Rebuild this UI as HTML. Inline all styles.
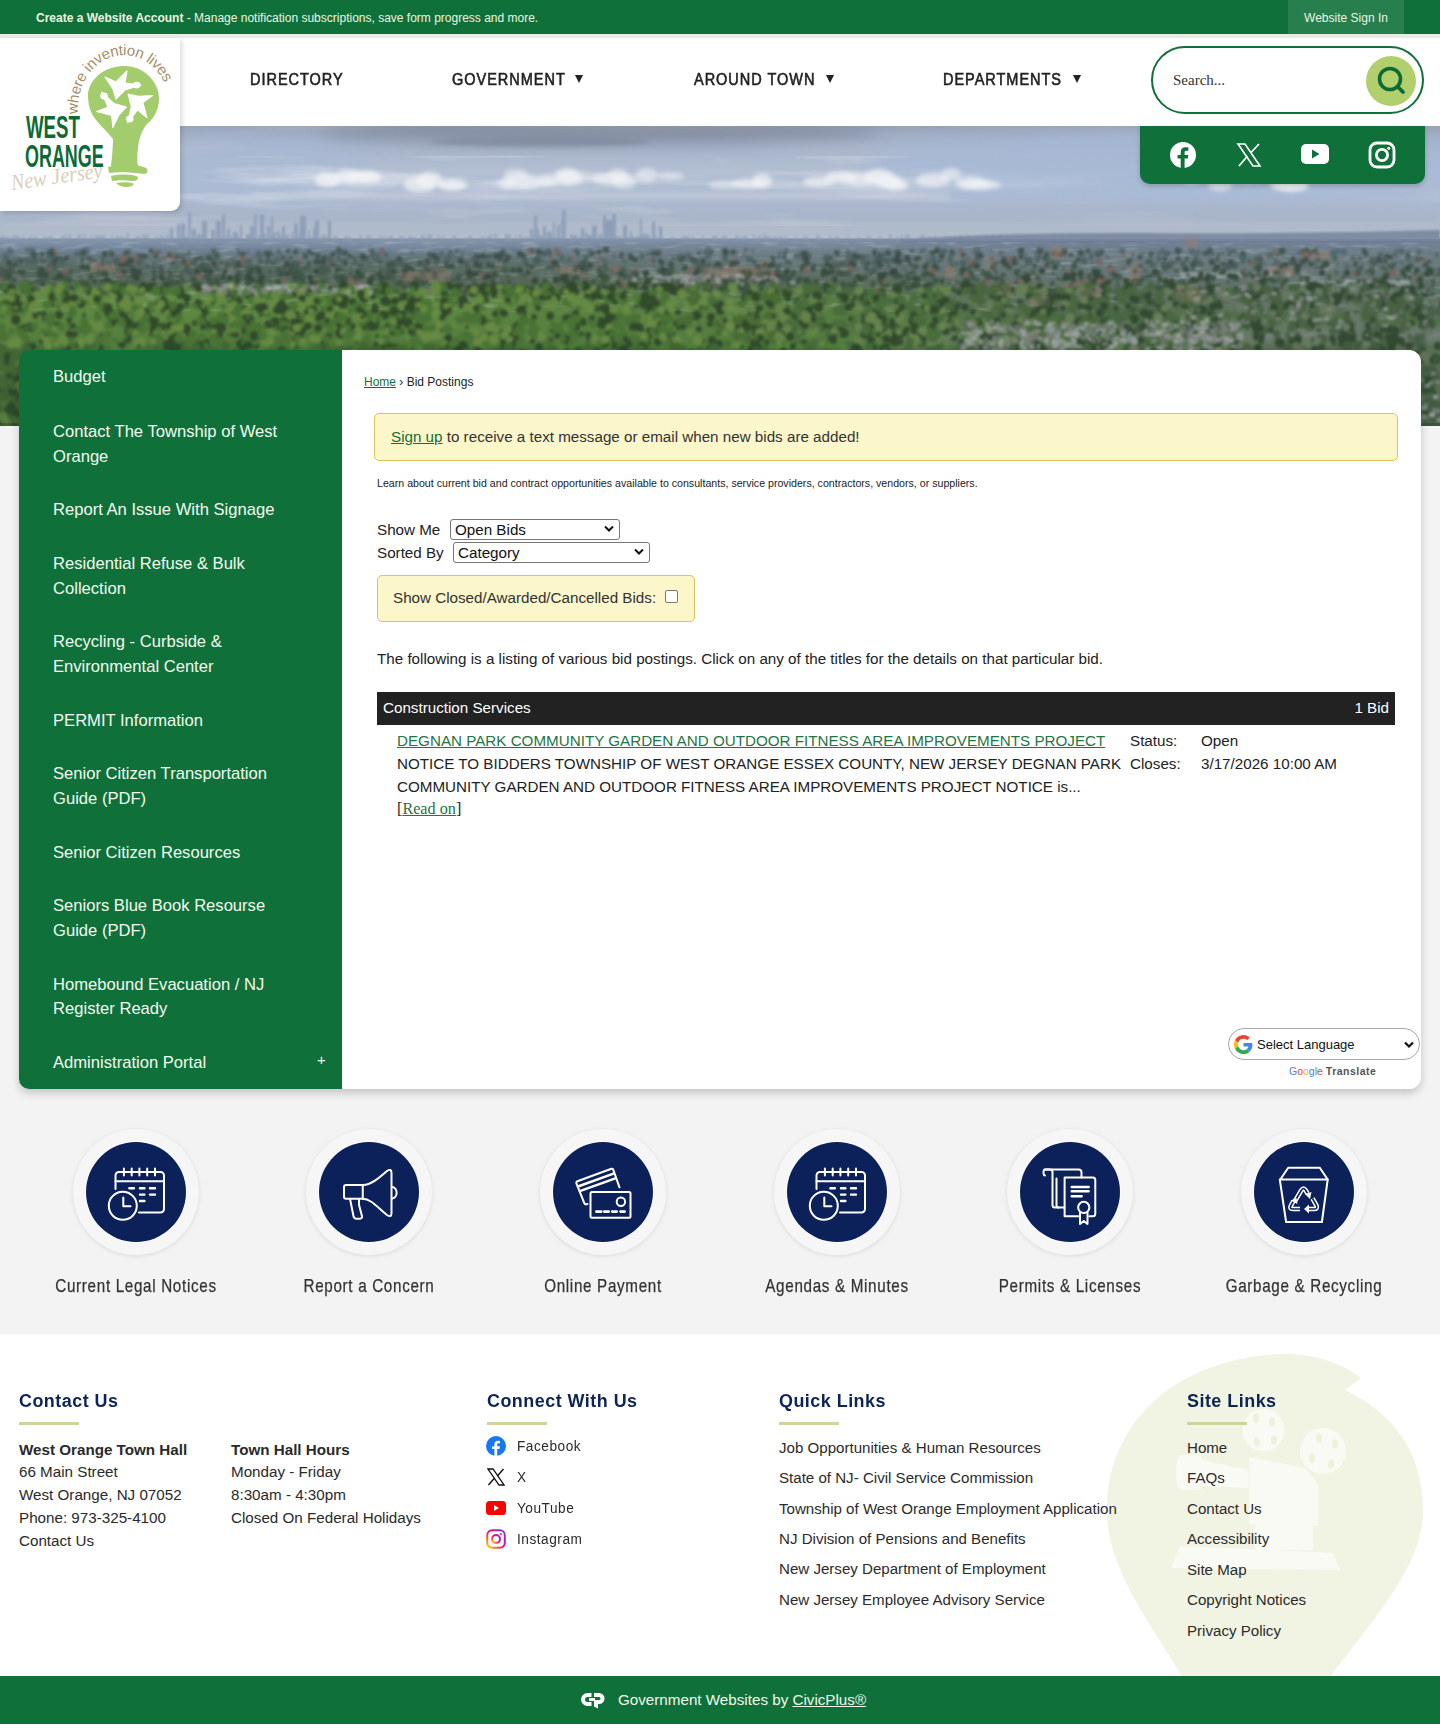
<!DOCTYPE html>
<html><head><meta charset="utf-8">
<style>
*{box-sizing:border-box;margin:0;padding:0}
html,body{width:1440px;height:1728px;overflow:hidden;background:#fff;font-family:"Liberation Sans",sans-serif;color:#222}
.abs{position:absolute}
#topbar{left:0;top:0;width:1440px;height:34px;background:#10703a}
#topline{left:0;top:34px;width:1440px;height:4px;background:#e9ebe9}
#header{left:0;top:38px;width:1440px;height:88px;background:#fff}
#hero{left:0;top:126px;width:1440px;height:300px;overflow:hidden}
#pagebg{left:0;top:426px;width:1440px;height:908px;background:#f3f3f3}
#footer{left:0;top:1334px;width:1440px;height:342px;background:#fff}
#bottombar{left:0;top:1676px;width:1440px;height:48px;background:#10703a}
#sidebar{left:19px;top:350px;width:323px;height:739px;background:#10703a;border-radius:10px 0 0 10px}
#content{left:342px;top:350px;width:1079px;height:739px;background:#fff;border-radius:0 12px 12px 0}
#shadowbox{left:19px;top:350px;width:1402px;height:739px;border-radius:10px 12px 12px 10px;box-shadow:0 4px 9px rgba(0,0,0,.2)}
#logo{left:0;top:38px;width:180px;height:173px;background:#fff;border-radius:0 0 9px 0;box-shadow:2px 2px 5px rgba(0,0,0,.15)}
#social{left:1140px;top:126px;width:285px;height:58px;background:#10703a;border-radius:0 0 10px 10px;box-shadow:0 2px 5px rgba(0,0,0,.2)}

.tb-text{left:36px;top:11px;font-size:12px;color:#eaf6e0;white-space:nowrap}
.tb-text b{font-weight:bold}
#signin{left:1288px;top:0;width:116px;height:34px;background:#267f4c;color:#eaf6e0;font-size:12px;text-align:center;line-height:37px}
.nav{top:69.5px;font-size:16.5px;font-weight:normal;-webkit-text-stroke:.6px #222;color:#222;letter-spacing:1.1px;white-space:nowrap;transform:scaleX(.88);transform-origin:0 0}.navar{top:75px;width:0;height:0;border-left:4px solid transparent;border-right:4px solid transparent;border-top:8.5px solid #222}
#search{left:1151px;top:46px;width:273px;height:68px;border:2px solid #10703a;border-radius:34px;background:#fff}
#search span{position:absolute;left:20px;top:24px;font-family:"Liberation Serif",serif;font-size:15px;color:#333}
#sbtn{position:absolute;left:213px;top:8px;width:50px;height:50px;border-radius:25px;background:#b2cf6d}

#sidebar ul{list-style:none;position:absolute;left:34px;top:16.5px;width:260px}
#sidebar li{font-size:16.6px;line-height:24.9px;color:#f2fbef;padding:0 0 28.6px 0;position:relative}
#sidebar li .plus{position:absolute;left:264px;top:-3px;font-size:15px}
.crumb{left:364px;top:375px;font-size:12px;color:#222;white-space:nowrap}
.crumb a{color:#10703a;text-decoration:underline}
#signup{left:374px;top:413px;width:1024px;height:48px;background:#fcf6cb;border:1px solid #dcc35c;border-radius:5px}
#signup span{position:absolute;left:16px;top:14px;font-size:15.2px;color:#333;white-space:nowrap}
#signup a{color:#10703a;text-decoration:underline}
.learn{left:377px;top:477px;font-size:10.64px;color:#222;white-space:nowrap}
.lbl{font-size:15.2px;color:#222;white-space:nowrap}
.sel{border:1px solid #767676;border-radius:3px;background:#fff;font-size:15.2px;color:#111;padding-left:4px;line-height:20px}
.sel svg{position:absolute;right:5px;top:5px}
#closed{left:377px;top:575px;width:318px;height:47px;background:#fcf6cb;border:1px solid #dcc35c;border-radius:5px}
#closed span{position:absolute;left:15px;top:13px;font-size:15.2px;color:#333;white-space:nowrap}
#closed .cb{position:absolute;left:287px;top:14px;width:13px;height:13px;border:1px solid #767676;border-radius:2px;background:#fff}
.para{left:377px;top:650px;font-size:15.2px;color:#222;white-space:nowrap}
#cathead{left:377px;top:692px;width:1018px;height:33px;background:#222;color:#fff;font-size:15.2px}
#cathead span{position:absolute;top:7px;white-space:nowrap}
.bid{font-size:15.2px;color:#222;white-space:nowrap}
.bid a{color:#1f7543;text-decoration:underline}

.ic{position:absolute;width:126px;height:126px;border-radius:63px;background:#f7f6f7;box-shadow:0 1px 4px rgba(0,0,0,.10)}
.ic svg{position:absolute;left:12px;top:12px}
.iclbl{position:absolute;top:1275.5px;font-size:17.9px;letter-spacing:.8px;color:#333;-webkit-text-stroke:.25px #333;white-space:nowrap;text-align:center;width:240px;transform:scaleX(.85);transform-origin:50% 0}
#gt{left:1228px;top:1028px;width:192px;height:32px;border:1px solid #a8a8a8;border-radius:16px;background:#fff}
#gt span{position:absolute;left:28px;top:8px;font-size:13px;color:#111;white-space:nowrap}
.gtl{left:1289px;top:1065px;font-size:10.5px;white-space:nowrap;color:#555}.gtl b{letter-spacing:.5px}
.fh{position:absolute;top:1390px;font-size:18.7px;font-weight:bold;color:#0d2456;white-space:nowrap;letter-spacing:.5px;transform:scaleX(.96);transform-origin:0 0}
.fbar{position:absolute;top:1422px;width:60px;height:3px;background:#d0d39a}
.ft{position:absolute;font-size:15.2px;line-height:22.8px;color:#2a2a2a;white-space:nowrap}
.fl{position:absolute;font-size:15.1px;color:#2b2b2b;white-space:nowrap}
.soc{position:absolute;left:517px;font-size:15.5px;color:#2a2a2a;white-space:nowrap;letter-spacing:.6px;transform:scaleX(.88);transform-origin:0 0}
#cp{left:0;top:1676px;width:1440px;height:48px}
#cp span{position:absolute;left:618px;top:15px;font-size:15.2px;color:#eef8ea;white-space:nowrap}
#cp a{text-decoration:underline}
</style></head>
<body>
<div id="topbar" class="abs"></div>
<div id="topline" class="abs"></div>
<div id="header" class="abs"></div>
<div id="hero" class="abs"><svg width="1440" height="300" viewBox="0 0 1440 300"><defs><linearGradient id="sky" x1="0" y1="0" x2="0" y2="1"><stop offset="0" stop-color="#96a2b8"/><stop offset="0.14" stop-color="#a4b2ca"/><stop offset="0.4" stop-color="#b3bfd2"/><stop offset="0.65" stop-color="#acbbd2"/><stop offset="0.9" stop-color="#aab8cd"/><stop offset="1" stop-color="#b4becd"/></linearGradient>
<linearGradient id="landL" x1="0" y1="0" x2="0" y2="1"><stop offset="0" stop-color="#8697ae"/><stop offset="0.0588" stop-color="#6f8296"/><stop offset="0.123" stop-color="#5b6e6a"/><stop offset="0.246" stop-color="#4f6452"/><stop offset="0.2781" stop-color="#63844e"/><stop offset="0.3262" stop-color="#628c44"/><stop offset="0.5294" stop-color="#567f3e"/><stop offset="0.5936" stop-color="#466b37"/><stop offset="1" stop-color="#3a5b32"/></linearGradient>
<linearGradient id="landM" x1="0" y1="0" x2="0" y2="1"><stop offset="0" stop-color="#8090a8"/><stop offset="0.0856" stop-color="#6c7d86"/><stop offset="0.2193" stop-color="#5b6d5e"/><stop offset="0.3262" stop-color="#587d43"/><stop offset="0.5668" stop-color="#527e3e"/><stop offset="0.6471" stop-color="#456a39"/><stop offset="1" stop-color="#3f6238"/></linearGradient>
<linearGradient id="landR" x1="0" y1="0" x2="0" y2="1"><stop offset="0" stop-color="#73839a"/><stop offset="0.1123" stop-color="#6a7a80"/><stop offset="0.3262" stop-color="#5c6f62"/><stop offset="0.4332" stop-color="#4f6e45"/><stop offset="0.5134" stop-color="#75807a"/><stop offset="0.5775" stop-color="#5b6e57"/><stop offset="0.754" stop-color="#566c50"/><stop offset="1" stop-color="#4b6646"/></linearGradient>
<linearGradient id="mL" x1="0" y1="0" x2="1" y2="0"><stop offset="0" stop-color="#fff" stop-opacity="1"/><stop offset="0.3" stop-color="#fff" stop-opacity="1"/><stop offset="0.48" stop-color="#fff" stop-opacity="0"/><stop offset="1" stop-color="#fff" stop-opacity="0"/></linearGradient>
<linearGradient id="mR" x1="0" y1="0" x2="1" y2="0"><stop offset="0" stop-color="#fff" stop-opacity="0"/><stop offset="0.58" stop-color="#fff" stop-opacity="0"/><stop offset="0.72" stop-color="#fff" stop-opacity="1"/><stop offset="1" stop-color="#fff" stop-opacity="1"/></linearGradient>
<linearGradient id="cloudmask" x1="0" y1="0" x2="1" y2="0"><stop offset="0" stop-color="#fff" stop-opacity="0.9"/><stop offset="0.55" stop-color="#fff" stop-opacity="0.9"/><stop offset="0.7" stop-color="#fff" stop-opacity="0.25"/><stop offset="1" stop-color="#fff" stop-opacity="0.15"/></linearGradient>
<mask id="maskL"><rect width="1440" height="300" fill="url(#mL)"/></mask>
<mask id="maskR"><rect width="1440" height="300" fill="url(#mR)"/></mask>
<mask id="maskC"><rect width="1440" height="300" fill="url(#cloudmask)"/></mask>
<filter id="b2" x="-20%" y="-50%" width="140%" height="200%"><feGaussianBlur stdDeviation="2"/></filter>
<filter id="b15" x="-5%" y="-5%" width="110%" height="110%"><feGaussianBlur stdDeviation="1.5"/></filter><filter id="b1" x="-20%" y="-50%" width="140%" height="200%"><feGaussianBlur stdDeviation=".8"/></filter>
<filter id="b8" x="-20%" y="-100%" width="140%" height="300%"><feGaussianBlur stdDeviation="8"/></filter>
<filter id="clouds" x="0" y="0" width="100%" height="100%">
<feTurbulence type="fractalNoise" baseFrequency=".005 .045" numOctaves="4" seed="11"/>
<feColorMatrix type="matrix" values="0 0 0 0 .90  0 0 0 0 .91  0 0 0 0 .94  0 0 0 3.0 -1.5"/>
</filter>
<filter id="darkc" x="0" y="0" width="100%" height="100%">
<feTurbulence type="fractalNoise" baseFrequency=".004 .05" numOctaves="3" seed="3"/>
<feColorMatrix type="matrix" values="0 0 0 0 .50  0 0 0 0 .54  0 0 0 0 .62  0 0 0 2.6 -1.15"/>
</filter>
<filter id="trees" x="0" y="0" width="100%" height="100%">
<feTurbulence type="fractalNoise" baseFrequency=".08 .12" numOctaves="2" seed="5"/>
<feColorMatrix type="matrix" values="0 0 0 0 .13  0 0 0 0 .22  0 0 0 0 .14  0 0 0 2.4 -1.0"/>
<feGaussianBlur stdDeviation=".7"/>
</filter>
<filter id="treesl" x="0" y="0" width="100%" height="100%">
<feTurbulence type="fractalNoise" baseFrequency=".06 .09" numOctaves="2" seed="8"/>
<feColorMatrix type="matrix" values="0 0 0 0 .55  0 0 0 0 .70  0 0 0 0 .36  0 0 0 2.2 -1.15"/>
<feGaussianBlur stdDeviation="1"/>
</filter>
<filter id="houses" x="0" y="0" width="100%" height="100%">
<feTurbulence type="fractalNoise" baseFrequency=".09 .15" numOctaves="2" seed="21"/>
<feColorMatrix type="matrix" values="0 0 0 0 .72  0 0 0 0 .73  0 0 0 0 .75  0 0 0 2.0 -1.0"/>
<feGaussianBlur stdDeviation="1"/>
</filter>
<filter id="urban" x="0" y="0" width="100%" height="100%">
<feTurbulence type="fractalNoise" baseFrequency=".05 .22" numOctaves="2" seed="13"/>
<feColorMatrix type="matrix" values="0 0 0 0 .62  0 0 0 0 .66  0 0 0 0 .70  0 0 0 2.2 -1.1"/>
<feGaussianBlur stdDeviation=".6"/>
</filter></defs>
<rect width="1440" height="114" fill="url(#sky)"/>
<ellipse cx="1180" cy="40" rx="320" ry="34" fill="#a6b9d7" opacity=".7" filter="url(#b8)"/>
<ellipse cx="230" cy="40" rx="140" ry="30" fill="#a7bad6" opacity=".6" filter="url(#b8)"/>
<g mask="url(#maskC)"><rect x="0" y="0" width="1440" height="36" filter="url(#darkc)" opacity=".5"/></g>
<ellipse cx="600" cy="6" rx="280" ry="11" fill="#7d8597" opacity=".8" filter="url(#b8)"/>
<ellipse cx="540" cy="16" rx="110" ry="5" fill="#757e90" opacity=".5" filter="url(#b2)"/>
<g mask="url(#maskC)"><rect x="0" y="30" width="1440" height="70" filter="url(#clouds)" opacity=".6"/></g>
<g filter="url(#b2)"><ellipse cx="354" cy="52" rx="11" ry="5" fill="#f0f2f5" opacity="0.77"/><ellipse cx="328" cy="54" rx="13" ry="7" fill="#f0f2f5" opacity="0.83"/><ellipse cx="368" cy="51" rx="14" ry="6" fill="#f0f2f5" opacity="0.82"/><ellipse cx="349" cy="50" rx="13" ry="7" fill="#f0f2f5" opacity="0.73"/><ellipse cx="429" cy="54" rx="13" ry="8" fill="#f0f2f5" opacity="0.77"/><ellipse cx="365" cy="49" rx="13" ry="5" fill="#f0f2f5" opacity="0.57"/><ellipse cx="453" cy="59" rx="15" ry="6" fill="#f0f2f5" opacity="0.71"/><ellipse cx="451" cy="60" rx="13" ry="5" fill="#f0f2f5" opacity="0.56"/><ellipse cx="420" cy="59" rx="16" ry="8" fill="#f0f2f5" opacity="0.73"/><ellipse cx="506" cy="58" rx="9" ry="6" fill="#f0f2f5" opacity="0.53"/><ellipse cx="618" cy="48" rx="10" ry="5" fill="#f0f2f5" opacity="0.62"/><ellipse cx="647" cy="49" rx="11" ry="7" fill="#f0f2f5" opacity="0.57"/><ellipse cx="570" cy="52" rx="13" ry="7" fill="#f0f2f5" opacity="0.74"/><ellipse cx="762" cy="55" rx="10" ry="7" fill="#f0f2f5" opacity="0.76"/><ellipse cx="671" cy="50" rx="13" ry="4" fill="#f0f2f5" opacity="0.56"/><ellipse cx="547" cy="55" rx="11" ry="5" fill="#f0f2f5" opacity="0.77"/><ellipse cx="726" cy="59" rx="18" ry="4" fill="#f0f2f5" opacity="0.57"/><ellipse cx="516" cy="49" rx="12" ry="6" fill="#f0f2f5" opacity="0.58"/><ellipse cx="611" cy="53" rx="18" ry="6" fill="#f0f2f5" opacity="0.63"/><ellipse cx="522" cy="56" rx="19" ry="8" fill="#f0f2f5" opacity="0.64"/><ellipse cx="624" cy="56" rx="12" ry="7" fill="#f0f2f5" opacity="0.61"/><ellipse cx="749" cy="58" rx="17" ry="5" fill="#f0f2f5" opacity="0.74"/><ellipse cx="567" cy="49" rx="12" ry="7" fill="#f0f2f5" opacity="0.65"/><ellipse cx="896" cy="59" rx="12" ry="6" fill="#f0f2f5" opacity="0.81"/><ellipse cx="879" cy="51" rx="15" ry="8" fill="#f0f2f5" opacity="0.81"/><ellipse cx="841" cy="51" rx="16" ry="6" fill="#f0f2f5" opacity="0.74"/><ellipse cx="860" cy="53" rx="20" ry="7" fill="#f0f2f5" opacity="0.63"/><ellipse cx="889" cy="56" rx="13" ry="7" fill="#f0f2f5" opacity="0.84"/><ellipse cx="819" cy="56" rx="16" ry="5" fill="#f0f2f5" opacity="0.73"/><ellipse cx="982" cy="59" rx="19" ry="5" fill="#f0f2f5" opacity="0.62"/><ellipse cx="951" cy="48" rx="10" ry="6" fill="#f0f2f5" opacity="0.61"/><ellipse cx="976" cy="58" rx="17" ry="5" fill="#f0f2f5" opacity="0.66"/><ellipse cx="933" cy="54" rx="17" ry="7" fill="#f0f2f5" opacity="0.69"/><ellipse cx="971" cy="57" rx="16" ry="7" fill="#f0f2f5" opacity="0.57"/><ellipse cx="22" cy="55" rx="10" ry="5" fill="#f0f2f5" opacity="0.84"/><ellipse cx="53" cy="60" rx="13" ry="6" fill="#f0f2f5" opacity="0.71"/><ellipse cx="44" cy="57" rx="17" ry="8" fill="#f0f2f5" opacity="0.64"/><ellipse cx="34" cy="50" rx="14" ry="5" fill="#f0f2f5" opacity="0.66"/><ellipse cx="1292" cy="60" rx="17" ry="6" fill="#f0f2f5" opacity="0.56"/><ellipse cx="1220" cy="59" rx="12" ry="6" fill="#f0f2f5" opacity="0.63"/><ellipse cx="1289" cy="59" rx="19" ry="6" fill="#f0f2f5" opacity="0.81"/><ellipse cx="1247" cy="52" rx="11" ry="4" fill="#f0f2f5" opacity="0.66"/><ellipse cx="1192" cy="52" rx="13" ry="6" fill="#f0f2f5" opacity="0.76"/></g>
<rect x="250" y="66" width="700" height="8" fill="#c9cfda" opacity=".5" filter="url(#b2)"/>
<rect x="0" y="78" width="1440" height="22" fill="#a5afc2" opacity=".35" filter="url(#b2)"/>
<rect x="0" y="96" width="1440" height="18" fill="#b5becb" opacity=".55" filter="url(#b2)"/>
<rect y="113" width="1440" height="187" fill="url(#landM)"/>
<g mask="url(#maskL)"><rect y="113" width="1440" height="187" fill="url(#landL)"/></g>
<g mask="url(#maskR)"><rect y="113" width="1440" height="187" fill="url(#landR)"/></g>
<g opacity=".9" filter="url(#b1)"><rect x="0" y="109.8" width="5" height="4.2" fill="#98a7bd"/><rect x="5" y="110.5" width="5" height="3.5" fill="#98a7bd"/><rect x="12" y="109.0" width="5" height="5.0" fill="#98a7bd"/><rect x="17" y="109.5" width="3" height="4.5" fill="#98a7bd"/><rect x="22" y="110.1" width="3" height="3.9" fill="#98a7bd"/><rect x="29" y="110.0" width="3" height="4.0" fill="#98a7bd"/><rect x="34" y="110.4" width="3" height="3.6" fill="#98a7bd"/><rect x="43" y="109.9" width="3" height="4.1" fill="#98a7bd"/><rect x="48" y="110.3" width="5" height="3.7" fill="#98a7bd"/><rect x="61" y="109.9" width="3" height="4.1" fill="#98a7bd"/><rect x="64" y="108.7" width="2" height="5.3" fill="#98a7bd"/><rect x="68" y="108.2" width="3" height="5.8" fill="#98a7bd"/><rect x="77" y="108.7" width="5" height="5.3" fill="#98a7bd"/><rect x="84" y="107.9" width="2" height="6.1" fill="#98a7bd"/><rect x="90" y="109.6" width="3" height="4.4" fill="#98a7bd"/><rect x="95" y="109.3" width="4" height="4.7" fill="#98a7bd"/><rect x="99" y="109.5" width="3" height="4.5" fill="#98a7bd"/><rect x="102" y="108.9" width="3" height="5.1" fill="#98a7bd"/><rect x="111" y="109.7" width="2" height="4.3" fill="#98a7bd"/><rect x="115" y="110.3" width="4" height="3.7" fill="#98a7bd"/><rect x="119" y="110.3" width="5" height="3.7" fill="#98a7bd"/><rect x="126" y="107.5" width="3" height="6.5" fill="#98a7bd"/><rect x="135" y="110.1" width="3" height="3.9" fill="#98a7bd"/><rect x="138" y="109.7" width="2" height="4.3" fill="#98a7bd"/><rect x="142" y="108.5" width="3" height="5.5" fill="#98a7bd"/><rect x="145" y="108.6" width="4" height="5.4" fill="#98a7bd"/><rect x="155" y="110.4" width="3" height="3.6" fill="#98a7bd"/><rect x="160" y="109.3" width="4" height="4.7" fill="#98a7bd"/><rect x="166" y="108.4" width="3" height="5.6" fill="#98a7bd"/><rect x="171" y="110.1" width="3" height="3.9" fill="#98a7bd"/><rect x="180" y="109.6" width="2" height="4.4" fill="#98a7bd"/><rect x="182" y="109.7" width="3" height="4.3" fill="#98a7bd"/><rect x="193" y="110.0" width="3" height="4.0" fill="#98a7bd"/><rect x="198" y="110.0" width="5" height="4.0" fill="#98a7bd"/><rect x="211" y="108.6" width="2" height="5.4" fill="#98a7bd"/><rect x="217" y="110.8" width="2" height="3.2" fill="#98a7bd"/><rect x="223" y="109.4" width="3" height="4.6" fill="#98a7bd"/><rect x="228" y="110.0" width="5" height="4.0" fill="#98a7bd"/><rect x="237" y="110.2" width="3" height="3.8" fill="#98a7bd"/><rect x="246" y="109.6" width="3" height="4.4" fill="#98a7bd"/><rect x="253" y="110.0" width="3" height="4.0" fill="#98a7bd"/><rect x="258" y="109.2" width="5" height="4.8" fill="#98a7bd"/><rect x="269" y="110.2" width="2" height="3.8" fill="#98a7bd"/><rect x="279" y="109.7" width="4" height="4.3" fill="#98a7bd"/><rect x="285" y="109.9" width="3" height="4.1" fill="#98a7bd"/><rect x="292" y="110.3" width="3" height="3.7" fill="#98a7bd"/><rect x="295" y="111.1" width="4" height="2.9" fill="#98a7bd"/><rect x="299" y="109.6" width="3" height="4.4" fill="#98a7bd"/><rect x="310" y="110.7" width="3" height="3.3" fill="#98a7bd"/><rect x="315" y="110.8" width="3" height="3.2" fill="#98a7bd"/><rect x="320" y="110.2" width="3" height="3.8" fill="#98a7bd"/><rect x="323" y="110.7" width="2" height="3.3" fill="#98a7bd"/><rect x="325" y="110.0" width="4" height="4.0" fill="#98a7bd"/><rect x="333" y="108.9" width="3" height="5.1" fill="#98a7bd"/><rect x="336" y="110.8" width="2" height="3.2" fill="#98a7bd"/><rect x="344" y="110.2" width="3" height="3.8" fill="#98a7bd"/><rect x="347" y="110.6" width="4" height="3.4" fill="#98a7bd"/><rect x="359" y="109.5" width="3" height="4.5" fill="#98a7bd"/><rect x="366" y="109.4" width="5" height="4.6" fill="#98a7bd"/><rect x="379" y="109.5" width="3" height="4.5" fill="#98a7bd"/><rect x="384" y="109.5" width="2" height="4.5" fill="#98a7bd"/><rect x="388" y="109.9" width="5" height="4.1" fill="#98a7bd"/><rect x="399" y="110.3" width="5" height="3.7" fill="#98a7bd"/><rect x="408" y="110.3" width="5" height="3.7" fill="#98a7bd"/><rect x="413" y="111.3" width="4" height="2.7" fill="#98a7bd"/><rect x="421" y="108.9" width="4" height="5.1" fill="#98a7bd"/><rect x="427" y="108.2" width="5" height="5.8" fill="#98a7bd"/><rect x="438" y="109.0" width="2" height="5.0" fill="#98a7bd"/><rect x="442" y="109.9" width="2" height="4.1" fill="#98a7bd"/><rect x="452" y="109.8" width="4" height="4.2" fill="#98a7bd"/><rect x="464" y="111.3" width="2" height="2.7" fill="#98a7bd"/><rect x="468" y="109.6" width="4" height="4.4" fill="#98a7bd"/><rect x="480" y="110.6" width="5" height="3.4" fill="#98a7bd"/><rect x="487" y="110.0" width="3" height="4.0" fill="#98a7bd"/><rect x="490" y="107.5" width="2" height="6.5" fill="#98a7bd"/><rect x="494" y="108.0" width="3" height="6.0" fill="#98a7bd"/><rect x="505" y="107.9" width="3" height="6.1" fill="#98a7bd"/><rect x="508" y="108.2" width="3" height="5.8" fill="#98a7bd"/><rect x="515" y="109.9" width="2" height="4.1" fill="#98a7bd"/><rect x="519" y="108.2" width="3" height="5.8" fill="#98a7bd"/><rect x="524" y="110.5" width="2" height="3.5" fill="#98a7bd"/><rect x="526" y="110.5" width="3" height="3.5" fill="#98a7bd"/><rect x="531" y="108.9" width="5" height="5.1" fill="#98a7bd"/><rect x="542" y="109.6" width="3" height="4.4" fill="#98a7bd"/><rect x="547" y="110.5" width="3" height="3.5" fill="#98a7bd"/><rect x="552" y="110.5" width="5" height="3.5" fill="#98a7bd"/><rect x="563" y="110.4" width="3" height="3.6" fill="#98a7bd"/><rect x="572" y="108.8" width="4" height="5.2" fill="#98a7bd"/><rect x="578" y="110.4" width="4" height="3.6" fill="#98a7bd"/><rect x="586" y="110.6" width="2" height="3.4" fill="#98a7bd"/><rect x="588" y="109.9" width="3" height="4.1" fill="#98a7bd"/><rect x="593" y="111.0" width="3" height="3.0" fill="#98a7bd"/><rect x="598" y="110.3" width="3" height="3.7" fill="#98a7bd"/><rect x="609" y="111.2" width="3" height="2.8" fill="#98a7bd"/><rect x="612" y="110.4" width="3" height="3.6" fill="#98a7bd"/><rect x="615" y="109.9" width="4" height="4.1" fill="#98a7bd"/><rect x="625" y="110.3" width="5" height="3.7" fill="#98a7bd"/><rect x="630" y="109.0" width="3" height="5.0" fill="#98a7bd"/><rect x="641" y="108.0" width="3" height="6.0" fill="#98a7bd"/><rect x="652" y="108.9" width="5" height="5.1" fill="#98a7bd"/><rect x="659" y="110.6" width="5" height="3.4" fill="#98a7bd"/><rect x="670" y="111.0" width="5" height="3.0" fill="#98a7bd"/><rect x="681" y="110.5" width="3" height="3.5" fill="#98a7bd"/><rect x="684" y="109.7" width="5" height="4.3" fill="#98a7bd"/><rect x="691" y="110.7" width="3" height="3.3" fill="#98a7bd"/><rect x="702" y="109.6" width="2" height="4.4" fill="#98a7bd"/><rect x="712" y="109.5" width="3" height="4.5" fill="#98a7bd"/><rect x="715" y="109.4" width="3" height="4.6" fill="#98a7bd"/><rect x="722" y="109.8" width="5" height="4.2" fill="#98a7bd"/><rect x="735" y="109.4" width="4" height="4.6" fill="#98a7bd"/><rect x="741" y="110.3" width="3" height="3.7" fill="#98a7bd"/><rect x="744" y="109.7" width="3" height="4.3" fill="#98a7bd"/><rect x="753" y="108.2" width="2" height="5.8" fill="#98a7bd"/><rect x="757" y="109.8" width="4" height="4.2" fill="#98a7bd"/><rect x="763" y="108.1" width="3" height="5.9" fill="#98a7bd"/><rect x="766" y="110.1" width="5" height="3.9" fill="#98a7bd"/><rect x="773" y="110.4" width="4" height="3.6" fill="#98a7bd"/><rect x="779" y="110.1" width="4" height="3.9" fill="#98a7bd"/><rect x="785" y="109.5" width="2" height="4.5" fill="#98a7bd"/><rect x="795" y="110.1" width="2" height="3.9" fill="#98a7bd"/><rect x="803" y="109.9" width="2" height="4.1" fill="#98a7bd"/><rect x="805" y="110.4" width="3" height="3.6" fill="#98a7bd"/><rect x="816" y="108.9" width="3" height="5.1" fill="#98a7bd"/><rect x="819" y="111.1" width="2" height="2.9" fill="#98a7bd"/><rect x="829" y="109.4" width="2" height="4.6" fill="#98a7bd"/><rect x="835" y="110.5" width="4" height="3.5" fill="#98a7bd"/><rect x="847" y="110.2" width="2" height="3.8" fill="#98a7bd"/><rect x="857" y="111.0" width="4" height="3.0" fill="#98a7bd"/><rect x="867" y="109.9" width="4" height="4.1" fill="#98a7bd"/><rect x="879" y="109.8" width="2" height="4.2" fill="#98a7bd"/><rect x="889" y="108.6" width="3" height="5.4" fill="#98a7bd"/><rect x="896" y="110.4" width="3" height="3.6" fill="#98a7bd"/><rect x="901" y="108.8" width="2" height="5.2" fill="#98a7bd"/><rect x="905" y="108.4" width="5" height="5.6" fill="#98a7bd"/><rect x="918" y="110.8" width="3" height="3.2" fill="#98a7bd"/><rect x="921" y="108.6" width="4" height="5.4" fill="#98a7bd"/><rect x="927" y="111.0" width="5" height="3.0" fill="#98a7bd"/><rect x="934" y="109.9" width="2" height="4.1" fill="#98a7bd"/><rect x="944" y="109.8" width="2" height="4.2" fill="#98a7bd"/><rect x="948" y="110.3" width="3" height="3.7" fill="#98a7bd"/><rect x="953" y="110.6" width="3" height="3.4" fill="#98a7bd"/><rect x="958" y="110.2" width="5" height="3.8" fill="#98a7bd"/><rect x="967" y="109.9" width="3" height="4.1" fill="#98a7bd"/><rect x="976" y="110.3" width="3" height="3.7" fill="#98a7bd"/><rect x="983" y="110.1" width="5" height="3.9" fill="#98a7bd"/><rect x="992" y="109.0" width="3" height="5.0" fill="#98a7bd"/><rect x="999" y="108.9" width="3" height="5.1" fill="#98a7bd"/><rect x="170" y="102.5" width="3" height="11.5" fill="#8d9db6"/><rect x="177" y="98.2" width="3" height="15.8" fill="#8d9db6"/><rect x="181" y="97.6" width="4" height="16.4" fill="#8d9db6"/><rect x="185" y="110.7" width="3" height="3.3" fill="#8d9db6"/><rect x="192" y="102.9" width="4" height="11.1" fill="#8d9db6"/><rect x="197" y="107.6" width="4" height="6.4" fill="#8d9db6"/><rect x="202" y="94.6" width="5" height="19.4" fill="#8d9db6"/><rect x="211" y="104.0" width="4" height="10.0" fill="#8d9db6"/><rect x="216" y="95.0" width="5" height="19.0" fill="#8d9db6"/><rect x="222" y="88.1" width="3" height="25.9" fill="#8d9db6"/><rect x="227" y="102.8" width="3" height="11.2" fill="#8d9db6"/><rect x="233" y="105.8" width="5" height="8.2" fill="#8d9db6"/><rect x="240" y="99.1" width="2" height="14.9" fill="#8d9db6"/><rect x="246" y="108.0" width="4" height="6.0" fill="#8d9db6"/><rect x="250" y="100.3" width="4" height="13.7" fill="#8d9db6"/><rect x="254" y="107.7" width="3" height="6.3" fill="#8d9db6"/><rect x="260" y="89.0" width="4" height="25.0" fill="#8d9db6"/><rect x="264" y="107.8" width="2" height="6.2" fill="#8d9db6"/><rect x="267" y="100.0" width="3" height="14.0" fill="#8d9db6"/><rect x="271" y="90.9" width="2" height="23.1" fill="#8d9db6"/><rect x="273" y="106.5" width="3" height="7.5" fill="#8d9db6"/><rect x="277" y="105.5" width="3" height="8.5" fill="#8d9db6"/><rect x="282" y="100.2" width="3" height="13.8" fill="#8d9db6"/><rect x="286" y="108.6" width="3" height="5.4" fill="#8d9db6"/><rect x="291" y="106.3" width="2" height="7.7" fill="#8d9db6"/><rect x="294" y="97.6" width="4" height="16.4" fill="#8d9db6"/><rect x="299" y="106.9" width="3" height="7.1" fill="#8d9db6"/><rect x="303" y="97.4" width="3" height="16.6" fill="#8d9db6"/><rect x="308" y="104.3" width="2" height="9.7" fill="#8d9db6"/><rect x="313" y="102.5" width="2" height="11.5" fill="#8d9db6"/><rect x="315" y="94.4" width="4" height="19.6" fill="#8d9db6"/><rect x="323" y="108.2" width="2" height="5.8" fill="#8d9db6"/><rect x="328" y="94.9" width="3" height="19.1" fill="#8d9db6"/><rect x="530" y="102.8" width="3" height="11.2" fill="#8d9db6"/><rect x="534" y="89.6" width="3" height="24.4" fill="#8d9db6"/><rect x="537" y="102.4" width="2" height="11.6" fill="#8d9db6"/><rect x="539" y="109.0" width="3" height="5.0" fill="#8d9db6"/><rect x="543" y="100.1" width="3" height="13.9" fill="#8d9db6"/><rect x="547" y="105.8" width="5" height="8.2" fill="#8d9db6"/><rect x="553" y="96.7" width="2" height="17.3" fill="#8d9db6"/><rect x="557" y="99.2" width="3" height="14.8" fill="#8d9db6"/><rect x="561" y="94.1" width="5" height="19.9" fill="#8d9db6"/><rect x="570" y="108.5" width="2" height="5.5" fill="#8d9db6"/><rect x="573" y="109.2" width="4" height="4.8" fill="#8d9db6"/><rect x="581" y="102.1" width="3" height="11.9" fill="#8d9db6"/><rect x="585" y="106.4" width="2" height="7.6" fill="#8d9db6"/><rect x="587" y="109.0" width="5" height="5.0" fill="#8d9db6"/><rect x="592" y="99.7" width="5" height="14.3" fill="#8d9db6"/><rect x="599" y="107.8" width="3" height="6.2" fill="#8d9db6"/><rect x="603" y="89.2" width="3" height="24.8" fill="#8d9db6"/><rect x="608" y="100.5" width="3" height="13.5" fill="#8d9db6"/><rect x="612" y="87.9" width="4" height="26.1" fill="#8d9db6"/><rect x="617" y="110.6" width="5" height="3.4" fill="#8d9db6"/><rect x="623" y="99.4" width="4" height="14.6" fill="#8d9db6"/><rect x="630" y="105.7" width="2" height="8.3" fill="#8d9db6"/><rect x="633" y="111.2" width="4" height="2.8" fill="#8d9db6"/><rect x="637" y="110.2" width="3" height="3.8" fill="#8d9db6"/><rect x="640" y="92.8" width="2" height="21.2" fill="#8d9db6"/><rect x="643" y="107.9" width="3" height="6.1" fill="#8d9db6"/><rect x="646" y="108.5" width="4" height="5.5" fill="#8d9db6"/><rect x="652" y="95.3" width="3" height="18.7" fill="#8d9db6"/><rect x="659" y="100.3" width="3" height="13.7" fill="#8d9db6"/><rect x="188" y="86" width="3" height="28" fill="#91a2bb"/><rect x="254" y="88" width="3" height="26" fill="#91a2bb"/><rect x="562" y="84" width="4" height="30" fill="#8fa0ba"/><rect x="300" y="90" width="6" height="24" fill="#8a9cb6"/><rect x="605" y="94" width="8" height="20" fill="#8a9cb6"/></g>
<path d="M900 114 Q 1000 106 1150 107 T 1440 104 V 116 H 900 Z" fill="#6a7890" opacity=".7" filter="url(#b1)"/>
<rect x="0" y="112" width="1440" height="3" fill="#7d8fa8" opacity=".5"/>
<rect x="0" y="116" width="1440" height="70" filter="url(#urban)" opacity=".4"/>
<g opacity=".35" filter="url(#b1)"><rect x="90" y="138" width="25" height="8" fill="#9b7c6c"/><rect x="400" y="145" width="50" height="10" fill="#9b7c6c"/><rect x="700" y="140" width="60" height="14" fill="#9b7c6c"/><rect x="760" y="134" width="8" height="16" fill="#9b7c6c"/><rect x="985" y="130" width="12" height="12" fill="#9b7c6c"/><rect x="1050" y="120" width="14" height="12" fill="#9b7c6c"/><rect x="1130" y="136" width="10" height="22" fill="#9b7c6c"/><rect x="1185" y="112" width="12" height="10" fill="#9b7c6c"/><rect x="1175" y="160" width="26" height="16" fill="#9b7c6c"/><rect x="1080" y="162" width="22" height="10" fill="#9b7c6c"/><rect x="1300" y="125" width="30" height="8" fill="#9b7c6c"/><rect x="560" y="140" width="20" height="8" fill="#9b7c6c"/><rect x="945" y="140" width="10" height="12" fill="#9b7c6c"/><rect x="1270" y="140" width="25" height="10" fill="#9b7c6c"/><rect x="1000" y="160" width="12" height="10" fill="#9b7c6c"/><rect x="1030" y="170" width="20" height="10" fill="#9b7c6c"/></g>
<g fill="#b3b8ba" opacity=".5" filter="url(#b1)"><rect x="200" y="158" width="170" height="6"/><rect x="640" y="148" width="150" height="5"/><rect x="1180" y="146" width="110" height="6"/><rect x="1300" y="154" width="110" height="6"/></g>
<g filter="url(#b15)"><g fill="#546672"><circle cx="1338" cy="125" r="2.7"/><circle cx="1192" cy="125" r="3.2"/><circle cx="268" cy="126" r="1.6"/><circle cx="11" cy="125" r="1.7"/><circle cx="10" cy="125" r="3.4"/><circle cx="1228" cy="125" r="2.8"/><circle cx="1122" cy="125" r="3.1"/><circle cx="86" cy="125" r="3.5"/><circle cx="32" cy="125" r="3.2"/><circle cx="1163" cy="125" r="2.6"/><circle cx="941" cy="125" r="2.6"/><circle cx="753" cy="125" r="2.1"/><circle cx="215" cy="125" r="2.1"/></g><g fill="#54666c"><circle cx="1300" cy="127" r="2.7"/><circle cx="1304" cy="126" r="2.7"/><circle cx="1143" cy="128" r="1.7"/><circle cx="1163" cy="126" r="1.9"/><circle cx="1211" cy="127" r="3.3"/><circle cx="248" cy="126" r="1.6"/><circle cx="189" cy="127" r="2.5"/><circle cx="77" cy="128" r="3.0"/><circle cx="375" cy="129" r="2.7"/><circle cx="1063" cy="126" r="2.0"/><circle cx="386" cy="129" r="3.0"/><circle cx="1344" cy="126" r="2.9"/><circle cx="1333" cy="127" r="3.4"/><circle cx="653" cy="127" r="3.4"/><circle cx="156" cy="128" r="3.1"/><circle cx="1227" cy="126" r="1.9"/><circle cx="1437" cy="129" r="2.4"/><circle cx="1057" cy="129" r="1.6"/><circle cx="648" cy="128" r="2.5"/><circle cx="1036" cy="129" r="2.4"/><circle cx="259" cy="128" r="3.4"/><circle cx="1100" cy="128" r="3.0"/><circle cx="1430" cy="128" r="1.7"/><circle cx="412" cy="127" r="2.0"/><circle cx="1396" cy="128" r="3.4"/><circle cx="1001" cy="127" r="2.4"/><circle cx="614" cy="129" r="2.3"/><circle cx="724" cy="128" r="1.8"/><circle cx="599" cy="128" r="1.6"/><circle cx="783" cy="127" r="1.8"/><circle cx="505" cy="128" r="1.8"/><circle cx="243" cy="128" r="2.7"/><circle cx="1223" cy="127" r="2.0"/><circle cx="385" cy="128" r="1.9"/><circle cx="111" cy="126" r="2.7"/><circle cx="559" cy="128" r="2.3"/><circle cx="848" cy="126" r="2.8"/><circle cx="1271" cy="128" r="2.6"/><circle cx="1419" cy="126" r="2.8"/><circle cx="895" cy="126" r="1.6"/><circle cx="874" cy="126" r="1.5"/><circle cx="953" cy="128" r="2.8"/><circle cx="451" cy="128" r="2.5"/><circle cx="462" cy="126" r="1.6"/><circle cx="1165" cy="128" r="3.2"/><circle cx="881" cy="129" r="3.5"/><circle cx="173" cy="127" r="3.0"/><circle cx="434" cy="127" r="2.0"/><circle cx="1380" cy="129" r="3.2"/><circle cx="430" cy="129" r="3.4"/><circle cx="548" cy="126" r="3.4"/><circle cx="1091" cy="128" r="1.5"/><circle cx="1167" cy="127" r="2.5"/><circle cx="780" cy="127" r="1.8"/><circle cx="279" cy="126" r="2.9"/><circle cx="1193" cy="126" r="2.6"/><circle cx="1202" cy="127" r="1.7"/><circle cx="1387" cy="129" r="2.1"/><circle cx="339" cy="127" r="3.5"/><circle cx="441" cy="128" r="3.0"/></g><g fill="#546666"><circle cx="809" cy="130" r="3.0"/><circle cx="273" cy="129" r="1.5"/><circle cx="1270" cy="130" r="3.5"/><circle cx="927" cy="130" r="1.6"/><circle cx="866" cy="129" r="2.5"/><circle cx="4" cy="129" r="2.0"/><circle cx="708" cy="130" r="3.1"/><circle cx="1219" cy="129" r="2.4"/></g><g fill="#728484"><circle cx="1226" cy="126" r="1.9"/><circle cx="352" cy="126" r="1.7"/><circle cx="174" cy="125" r="2.7"/><circle cx="485" cy="126" r="3.0"/><circle cx="1375" cy="127" r="2.7"/><circle cx="784" cy="125" r="3.0"/><circle cx="432" cy="126" r="1.9"/><circle cx="840" cy="126" r="1.9"/><circle cx="526" cy="126" r="2.3"/><circle cx="865" cy="126" r="2.8"/><circle cx="369" cy="124" r="1.9"/><circle cx="174" cy="127" r="3.5"/></g><g fill="#42544e"><circle cx="727" cy="127" r="2.3"/><circle cx="270" cy="127" r="2.6"/><circle cx="912" cy="125" r="1.9"/><circle cx="922" cy="125" r="2.1"/><circle cx="837" cy="127" r="3.1"/><circle cx="977" cy="126" r="3.2"/><circle cx="159" cy="126" r="1.5"/><circle cx="126" cy="127" r="2.7"/><circle cx="450" cy="126" r="1.6"/><circle cx="550" cy="127" r="1.8"/><circle cx="1282" cy="125" r="3.4"/><circle cx="531" cy="125" r="3.2"/><circle cx="339" cy="124" r="2.7"/><circle cx="1210" cy="124" r="2.5"/><circle cx="42" cy="128" r="2.3"/><circle cx="266" cy="127" r="2.7"/><circle cx="805" cy="127" r="3.0"/><circle cx="734" cy="125" r="1.7"/><circle cx="1133" cy="128" r="1.8"/><circle cx="1305" cy="126" r="3.5"/><circle cx="1021" cy="125" r="3.4"/><circle cx="874" cy="128" r="2.7"/><circle cx="129" cy="126" r="1.9"/><circle cx="576" cy="127" r="3.4"/><circle cx="539" cy="126" r="3.3"/><circle cx="1054" cy="127" r="2.6"/><circle cx="932" cy="127" r="2.7"/><circle cx="699" cy="127" r="1.9"/><circle cx="83" cy="127" r="3.4"/><circle cx="592" cy="128" r="3.3"/><circle cx="1096" cy="127" r="1.8"/><circle cx="52" cy="125" r="2.8"/><circle cx="1408" cy="128" r="2.5"/><circle cx="1310" cy="127" r="2.6"/><circle cx="658" cy="127" r="3.1"/><circle cx="457" cy="125" r="1.8"/><circle cx="606" cy="124" r="3.4"/><circle cx="577" cy="126" r="2.6"/><circle cx="733" cy="126" r="2.8"/><circle cx="1243" cy="127" r="2.3"/><circle cx="503" cy="125" r="2.2"/><circle cx="706" cy="126" r="2.5"/><circle cx="725" cy="125" r="3.1"/><circle cx="898" cy="127" r="3.4"/><circle cx="295" cy="126" r="1.8"/><circle cx="1234" cy="126" r="2.6"/><circle cx="49" cy="127" r="2.7"/><circle cx="151" cy="125" r="2.4"/><circle cx="239" cy="127" r="1.7"/><circle cx="976" cy="128" r="3.2"/><circle cx="372" cy="125" r="2.3"/><circle cx="345" cy="127" r="2.9"/><circle cx="1159" cy="127" r="1.6"/><circle cx="746" cy="124" r="1.7"/><circle cx="430" cy="128" r="1.9"/><circle cx="735" cy="127" r="2.0"/><circle cx="309" cy="126" r="2.8"/><circle cx="53" cy="127" r="2.6"/><circle cx="1066" cy="125" r="1.9"/><circle cx="1178" cy="125" r="3.4"/><circle cx="1206" cy="127" r="2.7"/><circle cx="296" cy="126" r="2.8"/><circle cx="1040" cy="125" r="3.4"/><circle cx="937" cy="124" r="3.0"/><circle cx="1198" cy="125" r="1.7"/><circle cx="1102" cy="126" r="2.5"/><circle cx="599" cy="126" r="2.6"/><circle cx="288" cy="125" r="2.2"/><circle cx="1315" cy="125" r="3.0"/><circle cx="1307" cy="124" r="2.7"/><circle cx="1401" cy="126" r="3.1"/><circle cx="1364" cy="125" r="2.8"/><circle cx="1088" cy="125" r="2.4"/><circle cx="1081" cy="127" r="3.3"/><circle cx="1064" cy="126" r="3.4"/><circle cx="711" cy="126" r="2.7"/><circle cx="213" cy="125" r="2.0"/><circle cx="952" cy="126" r="2.7"/><circle cx="945" cy="125" r="2.1"/><circle cx="936" cy="126" r="2.7"/><circle cx="605" cy="127" r="3.4"/><circle cx="875" cy="125" r="2.0"/><circle cx="888" cy="127" r="3.3"/></g><g fill="#786660"><circle cx="156" cy="126" r="2.2"/><circle cx="557" cy="125" r="3.3"/><circle cx="55" cy="127" r="2.3"/><circle cx="1150" cy="127" r="2.0"/><circle cx="1306" cy="128" r="2.7"/><circle cx="961" cy="125" r="2.7"/><circle cx="1057" cy="128" r="3.1"/><circle cx="530" cy="126" r="2.5"/><circle cx="382" cy="125" r="2.8"/><circle cx="1124" cy="129" r="2.2"/><circle cx="992" cy="126" r="1.6"/><circle cx="1275" cy="126" r="2.4"/></g><g fill="#3c544e"><circle cx="520" cy="128" r="3.4"/><circle cx="313" cy="128" r="2.1"/><circle cx="170" cy="129" r="2.8"/><circle cx="1047" cy="128" r="2.4"/><circle cx="1071" cy="129" r="2.5"/><circle cx="51" cy="129" r="2.8"/><circle cx="854" cy="129" r="2.8"/><circle cx="1318" cy="129" r="1.6"/><circle cx="243" cy="128" r="2.3"/><circle cx="350" cy="130" r="2.3"/><circle cx="476" cy="129" r="1.8"/><circle cx="785" cy="128" r="2.1"/><circle cx="1098" cy="129" r="2.2"/><circle cx="879" cy="129" r="1.9"/><circle cx="1061" cy="129" r="1.7"/><circle cx="105" cy="128" r="3.1"/><circle cx="333" cy="128" r="2.5"/><circle cx="1169" cy="128" r="1.8"/><circle cx="34" cy="129" r="3.2"/><circle cx="826" cy="130" r="1.5"/><circle cx="112" cy="129" r="2.5"/><circle cx="744" cy="129" r="1.6"/><circle cx="963" cy="129" r="2.5"/><circle cx="156" cy="130" r="2.3"/><circle cx="725" cy="128" r="2.4"/><circle cx="621" cy="129" r="3.0"/><circle cx="52" cy="129" r="3.2"/><circle cx="490" cy="130" r="1.9"/><circle cx="550" cy="129" r="1.8"/><circle cx="616" cy="129" r="2.9"/><circle cx="318" cy="130" r="2.7"/><circle cx="1278" cy="129" r="2.0"/><circle cx="1366" cy="128" r="2.4"/><circle cx="435" cy="129" r="1.6"/><circle cx="1429" cy="129" r="1.8"/><circle cx="617" cy="128" r="1.8"/><circle cx="1230" cy="128" r="2.1"/><circle cx="882" cy="130" r="1.8"/><circle cx="1152" cy="129" r="3.3"/><circle cx="803" cy="128" r="3.0"/><circle cx="501" cy="129" r="3.3"/><circle cx="653" cy="128" r="1.9"/><circle cx="217" cy="129" r="2.3"/><circle cx="544" cy="128" r="2.2"/></g><g fill="#727e84"><circle cx="604" cy="129" r="3.2"/><circle cx="641" cy="128" r="1.7"/><circle cx="116" cy="129" r="1.7"/><circle cx="1129" cy="127" r="2.4"/><circle cx="397" cy="130" r="1.5"/><circle cx="573" cy="129" r="3.4"/><circle cx="736" cy="129" r="1.6"/><circle cx="1233" cy="129" r="2.4"/><circle cx="1117" cy="130" r="2.5"/><circle cx="1428" cy="130" r="3.1"/><circle cx="617" cy="128" r="2.9"/><circle cx="1400" cy="129" r="2.6"/><circle cx="750" cy="129" r="3.1"/></g><g fill="#5a6c72"><circle cx="786" cy="124" r="2.5"/><circle cx="27" cy="124" r="2.4"/><circle cx="1398" cy="125" r="2.8"/><circle cx="1163" cy="124" r="2.6"/><circle cx="1098" cy="125" r="2.2"/><circle cx="924" cy="124" r="2.8"/><circle cx="514" cy="124" r="1.8"/><circle cx="238" cy="124" r="1.9"/><circle cx="977" cy="124" r="3.2"/><circle cx="708" cy="124" r="3.4"/></g><g fill="#72848a"><circle cx="201" cy="124" r="1.6"/></g><g fill="#3c4e4e"><circle cx="483" cy="130" r="3.1"/><circle cx="431" cy="130" r="1.7"/><circle cx="463" cy="130" r="2.0"/><circle cx="942" cy="130" r="3.0"/><circle cx="434" cy="130" r="3.0"/><circle cx="144" cy="130" r="2.6"/><circle cx="303" cy="130" r="3.3"/></g><g fill="#546c72"><circle cx="590" cy="125" r="2.6"/></g><g fill="#3c4e48"><circle cx="1078" cy="134" r="2.4"/><circle cx="653" cy="135" r="2.7"/><circle cx="1151" cy="136" r="1.9"/><circle cx="536" cy="134" r="2.8"/><circle cx="1243" cy="131" r="3.4"/><circle cx="196" cy="134" r="2.3"/><circle cx="773" cy="132" r="2.2"/><circle cx="898" cy="130" r="3.0"/><circle cx="970" cy="134" r="3.1"/><circle cx="831" cy="132" r="2.0"/><circle cx="368" cy="133" r="2.1"/><circle cx="877" cy="133" r="2.5"/><circle cx="200" cy="133" r="3.0"/><circle cx="428" cy="136" r="2.4"/><circle cx="1273" cy="133" r="1.9"/><circle cx="1260" cy="132" r="2.1"/><circle cx="1231" cy="136" r="3.1"/><circle cx="221" cy="137" r="1.8"/><circle cx="477" cy="132" r="2.1"/><circle cx="630" cy="131" r="3.4"/><circle cx="64" cy="134" r="2.3"/><circle cx="1282" cy="131" r="1.6"/><circle cx="1255" cy="137" r="1.8"/><circle cx="324" cy="135" r="1.9"/><circle cx="1140" cy="131" r="2.5"/><circle cx="696" cy="135" r="2.4"/><circle cx="1092" cy="130" r="1.7"/><circle cx="940" cy="135" r="1.7"/><circle cx="680" cy="132" r="3.4"/><circle cx="784" cy="132" r="1.9"/><circle cx="1030" cy="134" r="3.0"/><circle cx="1157" cy="131" r="1.8"/><circle cx="420" cy="137" r="2.4"/><circle cx="9" cy="137" r="3.0"/><circle cx="273" cy="137" r="2.1"/><circle cx="696" cy="135" r="2.6"/><circle cx="553" cy="136" r="2.2"/><circle cx="1040" cy="131" r="1.6"/><circle cx="1014" cy="133" r="2.6"/><circle cx="345" cy="137" r="2.5"/><circle cx="584" cy="136" r="2.7"/><circle cx="496" cy="130" r="3.1"/><circle cx="1433" cy="136" r="1.9"/><circle cx="1015" cy="137" r="2.7"/><circle cx="1195" cy="135" r="2.0"/><circle cx="361" cy="132" r="1.6"/><circle cx="377" cy="133" r="2.0"/><circle cx="323" cy="136" r="3.1"/><circle cx="1046" cy="132" r="3.1"/><circle cx="291" cy="132" r="1.7"/><circle cx="980" cy="130" r="3.4"/><circle cx="1306" cy="133" r="3.2"/><circle cx="1078" cy="134" r="1.6"/><circle cx="308" cy="137" r="1.6"/><circle cx="737" cy="137" r="2.6"/><circle cx="67" cy="132" r="2.4"/><circle cx="868" cy="137" r="2.2"/><circle cx="128" cy="135" r="3.5"/><circle cx="1302" cy="135" r="2.4"/><circle cx="283" cy="132" r="2.2"/><circle cx="1003" cy="136" r="2.9"/><circle cx="256" cy="136" r="3.1"/><circle cx="1373" cy="133" r="2.1"/><circle cx="878" cy="135" r="3.1"/><circle cx="678" cy="131" r="2.0"/><circle cx="487" cy="131" r="1.7"/><circle cx="1251" cy="136" r="2.9"/><circle cx="346" cy="136" r="2.3"/><circle cx="803" cy="133" r="1.6"/><circle cx="1422" cy="133" r="2.2"/><circle cx="461" cy="135" r="3.4"/><circle cx="1165" cy="133" r="2.2"/><circle cx="754" cy="136" r="2.0"/><circle cx="524" cy="135" r="2.1"/><circle cx="507" cy="132" r="3.2"/><circle cx="635" cy="134" r="2.7"/><circle cx="296" cy="137" r="3.2"/><circle cx="1429" cy="136" r="2.3"/><circle cx="977" cy="131" r="3.5"/><circle cx="139" cy="131" r="3.2"/><circle cx="478" cy="131" r="2.5"/><circle cx="916" cy="133" r="2.4"/><circle cx="587" cy="132" r="1.6"/><circle cx="864" cy="137" r="1.8"/><circle cx="660" cy="135" r="2.4"/><circle cx="334" cy="137" r="2.5"/><circle cx="852" cy="136" r="2.9"/><circle cx="1178" cy="133" r="2.4"/><circle cx="585" cy="136" r="2.6"/><circle cx="1255" cy="137" r="1.6"/><circle cx="488" cy="137" r="2.1"/><circle cx="562" cy="133" r="2.1"/><circle cx="1293" cy="136" r="3.5"/><circle cx="1052" cy="136" r="2.4"/><circle cx="996" cy="137" r="2.2"/><circle cx="956" cy="137" r="2.1"/><circle cx="1012" cy="134" r="2.9"/><circle cx="317" cy="136" r="3.0"/><circle cx="1026" cy="136" r="3.3"/><circle cx="209" cy="132" r="3.0"/><circle cx="1219" cy="133" r="3.0"/><circle cx="58" cy="133" r="3.2"/><circle cx="437" cy="133" r="2.8"/><circle cx="354" cy="134" r="3.0"/><circle cx="703" cy="135" r="2.8"/><circle cx="1004" cy="133" r="2.5"/><circle cx="685" cy="131" r="2.2"/><circle cx="538" cy="131" r="1.8"/><circle cx="908" cy="134" r="3.2"/><circle cx="524" cy="130" r="2.4"/><circle cx="828" cy="133" r="1.8"/><circle cx="662" cy="137" r="2.5"/><circle cx="371" cy="134" r="1.6"/><circle cx="1375" cy="137" r="1.6"/><circle cx="751" cy="133" r="2.3"/><circle cx="537" cy="135" r="3.2"/><circle cx="1155" cy="130" r="2.4"/><circle cx="324" cy="132" r="2.5"/><circle cx="862" cy="131" r="2.6"/><circle cx="173" cy="137" r="1.8"/><circle cx="692" cy="133" r="2.6"/><circle cx="847" cy="133" r="1.8"/><circle cx="448" cy="134" r="1.5"/><circle cx="907" cy="132" r="3.2"/><circle cx="21" cy="135" r="2.4"/><circle cx="1379" cy="134" r="3.3"/><circle cx="130" cy="134" r="2.2"/><circle cx="1184" cy="137" r="2.0"/><circle cx="790" cy="137" r="1.8"/><circle cx="505" cy="136" r="2.2"/><circle cx="54" cy="136" r="2.7"/><circle cx="684" cy="132" r="2.1"/><circle cx="363" cy="131" r="3.4"/><circle cx="1131" cy="134" r="1.8"/><circle cx="858" cy="131" r="2.8"/><circle cx="268" cy="131" r="2.0"/><circle cx="1187" cy="133" r="2.1"/><circle cx="215" cy="131" r="3.0"/><circle cx="918" cy="133" r="2.3"/><circle cx="448" cy="132" r="2.5"/><circle cx="919" cy="132" r="2.4"/><circle cx="184" cy="135" r="2.4"/><circle cx="258" cy="135" r="2.8"/><circle cx="1303" cy="137" r="2.2"/><circle cx="1149" cy="137" r="3.3"/><circle cx="1318" cy="135" r="2.8"/><circle cx="116" cy="134" r="2.2"/><circle cx="61" cy="132" r="1.6"/><circle cx="217" cy="132" r="1.5"/><circle cx="625" cy="135" r="1.7"/><circle cx="510" cy="131" r="1.6"/><circle cx="899" cy="136" r="3.2"/><circle cx="1385" cy="135" r="2.6"/><circle cx="83" cy="134" r="2.3"/><circle cx="461" cy="134" r="2.1"/><circle cx="555" cy="137" r="3.3"/><circle cx="500" cy="131" r="3.4"/><circle cx="399" cy="133" r="2.9"/><circle cx="681" cy="133" r="1.5"/><circle cx="43" cy="135" r="2.2"/><circle cx="1037" cy="134" r="2.0"/><circle cx="1335" cy="133" r="1.7"/><circle cx="779" cy="130" r="1.6"/><circle cx="1021" cy="131" r="2.5"/><circle cx="89" cy="133" r="2.5"/><circle cx="175" cy="131" r="3.4"/><circle cx="1129" cy="136" r="3.2"/><circle cx="854" cy="133" r="2.1"/><circle cx="733" cy="137" r="3.3"/><circle cx="366" cy="132" r="2.4"/><circle cx="131" cy="135" r="3.5"/><circle cx="1372" cy="135" r="2.1"/><circle cx="427" cy="135" r="2.6"/><circle cx="147" cy="132" r="2.3"/><circle cx="1260" cy="134" r="3.0"/><circle cx="1390" cy="131" r="2.6"/><circle cx="1212" cy="136" r="3.1"/><circle cx="1386" cy="130" r="2.1"/><circle cx="1293" cy="132" r="2.0"/><circle cx="176" cy="132" r="1.9"/><circle cx="895" cy="135" r="3.5"/><circle cx="213" cy="136" r="2.6"/><circle cx="18" cy="136" r="1.9"/><circle cx="806" cy="132" r="3.4"/></g><g fill="#3c4e42"><circle cx="1075" cy="139" r="3.4"/><circle cx="1110" cy="140" r="1.8"/><circle cx="99" cy="138" r="2.5"/><circle cx="718" cy="138" r="3.1"/><circle cx="1285" cy="139" r="3.3"/><circle cx="1229" cy="139" r="2.0"/><circle cx="446" cy="138" r="2.3"/><circle cx="827" cy="138" r="2.9"/><circle cx="1236" cy="138" r="1.5"/><circle cx="1304" cy="138" r="1.8"/><circle cx="974" cy="138" r="2.6"/><circle cx="870" cy="139" r="3.2"/><circle cx="121" cy="138" r="3.1"/><circle cx="309" cy="138" r="1.7"/><circle cx="590" cy="139" r="3.1"/><circle cx="963" cy="139" r="1.6"/><circle cx="1371" cy="138" r="2.7"/><circle cx="1223" cy="138" r="2.7"/><circle cx="488" cy="139" r="2.8"/><circle cx="774" cy="138" r="3.2"/><circle cx="481" cy="139" r="2.2"/><circle cx="1326" cy="138" r="3.4"/><circle cx="556" cy="140" r="3.5"/><circle cx="216" cy="139" r="2.9"/><circle cx="841" cy="138" r="2.3"/><circle cx="1322" cy="138" r="1.8"/><circle cx="87" cy="139" r="3.3"/><circle cx="395" cy="139" r="2.0"/><circle cx="1193" cy="139" r="3.2"/><circle cx="389" cy="139" r="2.9"/><circle cx="407" cy="139" r="1.9"/><circle cx="911" cy="139" r="1.9"/><circle cx="129" cy="140" r="1.6"/><circle cx="978" cy="139" r="2.2"/><circle cx="1425" cy="139" r="2.5"/><circle cx="476" cy="138" r="3.1"/><circle cx="527" cy="139" r="2.1"/><circle cx="125" cy="139" r="2.3"/><circle cx="15" cy="139" r="2.6"/><circle cx="103" cy="139" r="1.6"/><circle cx="187" cy="138" r="3.2"/><circle cx="1035" cy="140" r="2.2"/><circle cx="871" cy="139" r="2.6"/><circle cx="579" cy="140" r="2.6"/><circle cx="333" cy="138" r="3.0"/><circle cx="813" cy="140" r="2.1"/><circle cx="765" cy="139" r="3.1"/><circle cx="1311" cy="138" r="2.7"/><circle cx="101" cy="138" r="1.6"/><circle cx="832" cy="138" r="2.1"/><circle cx="393" cy="138" r="3.0"/><circle cx="1261" cy="139" r="1.7"/><circle cx="467" cy="138" r="2.5"/><circle cx="770" cy="140" r="2.8"/><circle cx="671" cy="138" r="2.8"/><circle cx="1392" cy="140" r="3.3"/><circle cx="807" cy="137" r="3.1"/><circle cx="849" cy="139" r="2.5"/><circle cx="720" cy="140" r="2.9"/><circle cx="197" cy="138" r="2.5"/><circle cx="1355" cy="138" r="2.8"/><circle cx="478" cy="139" r="3.3"/><circle cx="239" cy="138" r="3.4"/><circle cx="346" cy="138" r="2.0"/><circle cx="1006" cy="138" r="3.2"/><circle cx="880" cy="139" r="3.3"/><circle cx="426" cy="139" r="1.8"/><circle cx="287" cy="138" r="3.3"/><circle cx="854" cy="139" r="3.1"/><circle cx="1047" cy="139" r="2.5"/><circle cx="977" cy="140" r="3.0"/><circle cx="731" cy="140" r="2.2"/><circle cx="477" cy="138" r="2.6"/></g><g fill="#786660"><circle cx="301" cy="134" r="2.5"/><circle cx="164" cy="132" r="2.5"/><circle cx="137" cy="132" r="2.7"/><circle cx="1252" cy="136" r="2.8"/><circle cx="1099" cy="136" r="3.2"/><circle cx="1301" cy="140" r="3.0"/><circle cx="98" cy="139" r="2.8"/><circle cx="124" cy="132" r="3.4"/><circle cx="598" cy="136" r="2.4"/><circle cx="334" cy="135" r="2.5"/><circle cx="552" cy="131" r="2.8"/><circle cx="652" cy="135" r="1.9"/><circle cx="121" cy="134" r="2.7"/><circle cx="243" cy="134" r="3.4"/><circle cx="188" cy="137" r="2.5"/><circle cx="971" cy="135" r="3.4"/><circle cx="735" cy="132" r="2.3"/><circle cx="1424" cy="134" r="2.4"/><circle cx="173" cy="131" r="2.9"/><circle cx="572" cy="131" r="2.0"/><circle cx="1010" cy="133" r="2.9"/><circle cx="1416" cy="132" r="2.7"/></g><g fill="#4e6060"><circle cx="202" cy="133" r="2.3"/><circle cx="330" cy="133" r="3.3"/><circle cx="990" cy="136" r="2.0"/><circle cx="1257" cy="133" r="3.0"/><circle cx="1274" cy="137" r="2.9"/><circle cx="277" cy="133" r="2.3"/><circle cx="854" cy="134" r="2.0"/><circle cx="33" cy="136" r="2.8"/><circle cx="1278" cy="135" r="2.7"/><circle cx="17" cy="135" r="2.7"/><circle cx="787" cy="136" r="2.5"/><circle cx="580" cy="135" r="1.5"/><circle cx="61" cy="135" r="3.1"/><circle cx="1243" cy="135" r="2.9"/><circle cx="1353" cy="133" r="3.3"/><circle cx="543" cy="136" r="1.8"/><circle cx="933" cy="133" r="2.9"/><circle cx="904" cy="134" r="2.5"/><circle cx="248" cy="135" r="2.7"/><circle cx="525" cy="135" r="3.0"/><circle cx="378" cy="133" r="1.5"/><circle cx="1199" cy="137" r="3.2"/><circle cx="268" cy="135" r="3.2"/><circle cx="59" cy="133" r="1.7"/><circle cx="950" cy="134" r="2.1"/><circle cx="467" cy="137" r="2.2"/><circle cx="874" cy="137" r="2.6"/><circle cx="1249" cy="135" r="2.2"/><circle cx="1171" cy="136" r="2.6"/><circle cx="202" cy="136" r="1.9"/><circle cx="887" cy="135" r="3.3"/><circle cx="272" cy="136" r="2.2"/><circle cx="102" cy="134" r="3.2"/><circle cx="486" cy="137" r="2.5"/><circle cx="35" cy="135" r="3.2"/><circle cx="332" cy="133" r="1.8"/><circle cx="370" cy="136" r="1.7"/><circle cx="27" cy="133" r="1.7"/><circle cx="1050" cy="135" r="2.6"/><circle cx="825" cy="133" r="2.5"/><circle cx="297" cy="137" r="3.0"/><circle cx="863" cy="133" r="3.1"/><circle cx="975" cy="134" r="1.9"/><circle cx="602" cy="133" r="1.9"/><circle cx="727" cy="135" r="1.6"/><circle cx="1084" cy="135" r="3.4"/><circle cx="116" cy="137" r="3.0"/><circle cx="437" cy="136" r="2.2"/><circle cx="685" cy="133" r="1.7"/><circle cx="28" cy="135" r="3.3"/><circle cx="474" cy="133" r="2.9"/><circle cx="42" cy="134" r="2.5"/><circle cx="260" cy="135" r="3.3"/><circle cx="1127" cy="135" r="1.7"/><circle cx="1272" cy="134" r="2.5"/><circle cx="233" cy="134" r="2.1"/><circle cx="1371" cy="134" r="2.4"/><circle cx="94" cy="134" r="2.0"/><circle cx="342" cy="136" r="2.0"/><circle cx="117" cy="133" r="2.8"/><circle cx="883" cy="133" r="3.0"/><circle cx="569" cy="134" r="2.4"/><circle cx="605" cy="135" r="2.4"/><circle cx="253" cy="137" r="3.3"/><circle cx="380" cy="136" r="3.0"/><circle cx="876" cy="133" r="2.6"/><circle cx="1030" cy="134" r="3.1"/><circle cx="1417" cy="135" r="2.1"/><circle cx="725" cy="133" r="2.7"/><circle cx="536" cy="135" r="2.1"/><circle cx="951" cy="135" r="3.0"/><circle cx="1360" cy="133" r="2.3"/><circle cx="1402" cy="137" r="1.8"/><circle cx="963" cy="137" r="3.5"/><circle cx="1030" cy="136" r="3.3"/><circle cx="835" cy="137" r="2.6"/><circle cx="624" cy="133" r="2.9"/><circle cx="62" cy="136" r="3.2"/><circle cx="682" cy="136" r="2.0"/><circle cx="144" cy="133" r="1.9"/></g><g fill="#48605a"><circle cx="1076" cy="139" r="1.6"/><circle cx="426" cy="140" r="3.1"/><circle cx="1283" cy="140" r="2.0"/><circle cx="1164" cy="139" r="3.2"/><circle cx="925" cy="139" r="2.3"/><circle cx="1347" cy="139" r="1.8"/><circle cx="1337" cy="139" r="1.7"/><circle cx="864" cy="138" r="2.2"/><circle cx="402" cy="138" r="3.2"/><circle cx="1372" cy="139" r="3.5"/><circle cx="255" cy="139" r="3.3"/><circle cx="709" cy="138" r="2.1"/><circle cx="935" cy="138" r="3.2"/><circle cx="574" cy="139" r="1.7"/><circle cx="1391" cy="139" r="1.6"/><circle cx="1202" cy="139" r="2.0"/><circle cx="1318" cy="140" r="3.5"/><circle cx="227" cy="139" r="2.7"/><circle cx="1150" cy="139" r="3.4"/><circle cx="1183" cy="138" r="3.0"/><circle cx="1411" cy="139" r="2.9"/><circle cx="953" cy="139" r="2.4"/><circle cx="1395" cy="138" r="2.6"/><circle cx="1023" cy="139" r="2.7"/></g><g fill="#727e7e"><circle cx="973" cy="131" r="3.5"/><circle cx="1050" cy="132" r="2.5"/><circle cx="734" cy="133" r="1.7"/><circle cx="594" cy="131" r="1.8"/><circle cx="1280" cy="132" r="3.2"/><circle cx="1341" cy="134" r="1.9"/><circle cx="750" cy="133" r="2.8"/><circle cx="553" cy="131" r="1.8"/><circle cx="371" cy="132" r="2.9"/><circle cx="353" cy="134" r="1.5"/><circle cx="1170" cy="132" r="1.9"/><circle cx="547" cy="132" r="1.6"/><circle cx="1222" cy="133" r="3.2"/><circle cx="465" cy="131" r="2.5"/><circle cx="248" cy="131" r="2.1"/><circle cx="958" cy="131" r="3.4"/><circle cx="977" cy="134" r="2.8"/><circle cx="626" cy="131" r="2.7"/></g><g fill="#485a5a"><circle cx="1326" cy="140" r="1.6"/><circle cx="489" cy="140" r="2.1"/><circle cx="154" cy="140" r="1.9"/><circle cx="778" cy="140" r="3.4"/><circle cx="803" cy="140" r="2.9"/><circle cx="1140" cy="140" r="2.6"/><circle cx="1385" cy="140" r="3.2"/></g><g fill="#546666"><circle cx="1437" cy="130" r="1.9"/><circle cx="378" cy="130" r="3.2"/><circle cx="797" cy="130" r="3.3"/><circle cx="688" cy="130" r="3.4"/><circle cx="1196" cy="131" r="2.9"/><circle cx="372" cy="130" r="3.2"/><circle cx="876" cy="130" r="1.6"/><circle cx="950" cy="131" r="2.5"/><circle cx="562" cy="131" r="2.2"/><circle cx="1026" cy="131" r="1.7"/><circle cx="187" cy="130" r="1.7"/><circle cx="455" cy="130" r="1.9"/><circle cx="182" cy="131" r="3.1"/><circle cx="828" cy="130" r="2.3"/><circle cx="849" cy="131" r="3.4"/><circle cx="504" cy="131" r="2.1"/><circle cx="1240" cy="130" r="1.8"/><circle cx="642" cy="130" r="3.4"/><circle cx="868" cy="131" r="2.4"/><circle cx="679" cy="130" r="2.6"/></g><g fill="#6c7e78"><circle cx="1385" cy="139" r="2.0"/><circle cx="602" cy="139" r="2.4"/><circle cx="893" cy="139" r="1.9"/><circle cx="832" cy="139" r="1.7"/><circle cx="1079" cy="138" r="2.3"/><circle cx="1433" cy="139" r="3.2"/><circle cx="1023" cy="137" r="2.9"/><circle cx="604" cy="138" r="2.2"/><circle cx="1157" cy="138" r="2.6"/><circle cx="1258" cy="138" r="3.0"/><circle cx="796" cy="137" r="3.1"/><circle cx="1319" cy="138" r="2.8"/><circle cx="150" cy="137" r="2.4"/><circle cx="218" cy="139" r="1.7"/></g><g fill="#6c7e7e"><circle cx="78" cy="135" r="1.8"/><circle cx="989" cy="136" r="3.0"/><circle cx="777" cy="136" r="2.2"/><circle cx="99" cy="135" r="2.3"/><circle cx="86" cy="136" r="3.1"/><circle cx="1435" cy="135" r="2.5"/><circle cx="1421" cy="136" r="1.9"/><circle cx="283" cy="135" r="1.5"/><circle cx="148" cy="135" r="3.0"/><circle cx="1352" cy="136" r="2.2"/><circle cx="986" cy="135" r="2.7"/><circle cx="1271" cy="135" r="3.4"/><circle cx="1133" cy="137" r="2.1"/><circle cx="199" cy="137" r="2.7"/><circle cx="255" cy="136" r="3.0"/><circle cx="922" cy="136" r="2.7"/><circle cx="954" cy="136" r="1.6"/></g><g fill="#4e605a"><circle cx="436" cy="138" r="2.3"/><circle cx="1290" cy="137" r="2.8"/><circle cx="694" cy="137" r="2.9"/><circle cx="139" cy="137" r="3.2"/><circle cx="928" cy="137" r="2.9"/><circle cx="467" cy="138" r="1.7"/><circle cx="1058" cy="137" r="2.6"/><circle cx="1174" cy="137" r="2.0"/><circle cx="109" cy="138" r="2.3"/><circle cx="1092" cy="137" r="1.5"/><circle cx="397" cy="137" r="3.3"/><circle cx="844" cy="138" r="3.1"/><circle cx="586" cy="137" r="1.8"/><circle cx="266" cy="138" r="1.6"/><circle cx="1260" cy="137" r="3.5"/><circle cx="1155" cy="138" r="1.9"/><circle cx="249" cy="137" r="2.0"/><circle cx="875" cy="138" r="2.7"/><circle cx="234" cy="138" r="2.2"/><circle cx="192" cy="137" r="2.2"/></g><g fill="#6c7878"><circle cx="248" cy="140" r="2.3"/><circle cx="166" cy="140" r="2.8"/></g><g fill="#4e6066"><circle cx="1091" cy="132" r="2.3"/><circle cx="447" cy="133" r="3.0"/><circle cx="49" cy="132" r="2.9"/><circle cx="749" cy="133" r="3.3"/><circle cx="1418" cy="133" r="2.8"/><circle cx="934" cy="132" r="1.7"/><circle cx="992" cy="133" r="2.3"/><circle cx="977" cy="133" r="3.1"/><circle cx="375" cy="133" r="1.8"/><circle cx="586" cy="132" r="3.2"/><circle cx="307" cy="132" r="2.0"/><circle cx="1408" cy="132" r="3.0"/><circle cx="673" cy="132" r="2.1"/><circle cx="1159" cy="133" r="2.9"/></g><g fill="#4e6666"><circle cx="1335" cy="132" r="3.0"/><circle cx="891" cy="132" r="1.5"/><circle cx="214" cy="132" r="3.3"/><circle cx="6" cy="132" r="3.4"/><circle cx="1107" cy="131" r="1.7"/><circle cx="539" cy="132" r="2.5"/><circle cx="1244" cy="132" r="2.9"/><circle cx="1030" cy="132" r="2.0"/><circle cx="339" cy="132" r="2.4"/><circle cx="1152" cy="131" r="1.9"/><circle cx="1048" cy="132" r="2.4"/></g><g fill="#727e84"><circle cx="300" cy="130" r="3.1"/><circle cx="1155" cy="130" r="2.5"/></g><g fill="#36483c"><circle cx="635" cy="148" r="3.0"/><circle cx="695" cy="148" r="2.4"/><circle cx="880" cy="149" r="3.0"/><circle cx="622" cy="149" r="2.2"/><circle cx="134" cy="149" r="2.8"/><circle cx="823" cy="148" r="2.7"/><circle cx="322" cy="148" r="1.7"/><circle cx="210" cy="146" r="3.4"/><circle cx="766" cy="148" r="2.8"/><circle cx="1415" cy="148" r="1.6"/><circle cx="513" cy="145" r="2.1"/><circle cx="287" cy="147" r="3.3"/><circle cx="1222" cy="146" r="1.8"/><circle cx="894" cy="145" r="3.3"/><circle cx="923" cy="148" r="2.2"/><circle cx="1158" cy="147" r="2.1"/><circle cx="1156" cy="147" r="1.7"/><circle cx="1017" cy="146" r="3.1"/><circle cx="664" cy="146" r="3.1"/><circle cx="703" cy="146" r="1.7"/><circle cx="480" cy="147" r="2.8"/><circle cx="756" cy="150" r="1.9"/><circle cx="911" cy="147" r="1.9"/><circle cx="601" cy="149" r="2.8"/><circle cx="1071" cy="149" r="2.1"/><circle cx="181" cy="149" r="1.7"/><circle cx="927" cy="147" r="2.6"/><circle cx="744" cy="146" r="2.7"/><circle cx="1427" cy="148" r="3.1"/><circle cx="66" cy="148" r="2.4"/><circle cx="1223" cy="146" r="2.9"/><circle cx="1382" cy="149" r="3.3"/><circle cx="787" cy="149" r="1.5"/><circle cx="1208" cy="149" r="2.6"/><circle cx="1244" cy="146" r="3.3"/><circle cx="1434" cy="146" r="3.3"/><circle cx="1279" cy="147" r="2.1"/><circle cx="706" cy="147" r="1.9"/><circle cx="988" cy="149" r="3.4"/><circle cx="469" cy="147" r="3.4"/><circle cx="480" cy="146" r="2.3"/><circle cx="125" cy="146" r="2.3"/><circle cx="1355" cy="147" r="2.7"/><circle cx="1081" cy="147" r="3.2"/><circle cx="435" cy="147" r="2.5"/><circle cx="971" cy="147" r="2.4"/><circle cx="1403" cy="146" r="3.1"/><circle cx="1095" cy="146" r="3.4"/><circle cx="960" cy="149" r="3.1"/><circle cx="281" cy="148" r="2.0"/><circle cx="996" cy="146" r="1.9"/><circle cx="46" cy="149" r="2.5"/><circle cx="1276" cy="147" r="3.2"/><circle cx="1073" cy="148" r="2.7"/><circle cx="1266" cy="147" r="3.3"/><circle cx="70" cy="146" r="2.6"/><circle cx="1369" cy="145" r="3.5"/><circle cx="620" cy="147" r="2.6"/><circle cx="362" cy="150" r="2.9"/><circle cx="261" cy="150" r="1.9"/><circle cx="750" cy="148" r="3.3"/><circle cx="270" cy="146" r="1.6"/><circle cx="225" cy="147" r="1.9"/><circle cx="21" cy="146" r="2.8"/><circle cx="424" cy="150" r="1.6"/><circle cx="1" cy="147" r="1.6"/><circle cx="901" cy="149" r="2.6"/><circle cx="885" cy="148" r="2.7"/><circle cx="40" cy="148" r="3.1"/><circle cx="832" cy="146" r="2.6"/><circle cx="1322" cy="147" r="2.9"/><circle cx="259" cy="145" r="3.0"/><circle cx="1439" cy="147" r="2.7"/><circle cx="105" cy="147" r="3.1"/><circle cx="223" cy="150" r="2.3"/><circle cx="1432" cy="146" r="3.3"/><circle cx="1117" cy="149" r="1.7"/><circle cx="519" cy="145" r="1.9"/><circle cx="250" cy="146" r="2.3"/><circle cx="358" cy="146" r="2.8"/><circle cx="1230" cy="150" r="3.3"/><circle cx="632" cy="150" r="2.4"/><circle cx="1436" cy="147" r="3.0"/><circle cx="139" cy="146" r="2.9"/><circle cx="1283" cy="148" r="3.0"/><circle cx="858" cy="150" r="2.7"/><circle cx="892" cy="147" r="3.1"/><circle cx="489" cy="150" r="2.7"/><circle cx="1254" cy="149" r="1.8"/><circle cx="669" cy="147" r="3.2"/><circle cx="827" cy="147" r="2.8"/><circle cx="378" cy="146" r="3.4"/><circle cx="1115" cy="149" r="2.2"/><circle cx="778" cy="147" r="3.2"/><circle cx="475" cy="148" r="2.8"/><circle cx="190" cy="147" r="1.8"/><circle cx="896" cy="147" r="2.3"/><circle cx="495" cy="148" r="3.0"/><circle cx="1335" cy="147" r="2.8"/><circle cx="767" cy="146" r="1.9"/><circle cx="122" cy="146" r="2.8"/><circle cx="1347" cy="147" r="3.1"/><circle cx="762" cy="150" r="3.4"/><circle cx="769" cy="148" r="1.8"/><circle cx="296" cy="147" r="3.1"/><circle cx="1071" cy="145" r="2.8"/><circle cx="1112" cy="147" r="2.5"/><circle cx="1074" cy="149" r="2.4"/><circle cx="1019" cy="149" r="2.8"/><circle cx="932" cy="149" r="3.0"/><circle cx="871" cy="148" r="2.4"/><circle cx="528" cy="146" r="2.8"/><circle cx="1372" cy="147" r="2.5"/><circle cx="1024" cy="148" r="2.9"/><circle cx="646" cy="147" r="3.3"/><circle cx="405" cy="145" r="3.2"/><circle cx="1201" cy="148" r="2.9"/><circle cx="393" cy="146" r="3.3"/><circle cx="1386" cy="150" r="3.2"/><circle cx="1066" cy="149" r="2.8"/><circle cx="1098" cy="146" r="3.1"/><circle cx="1390" cy="146" r="1.8"/><circle cx="60" cy="150" r="3.5"/><circle cx="1246" cy="147" r="3.1"/><circle cx="793" cy="147" r="2.9"/><circle cx="21" cy="148" r="3.2"/><circle cx="1151" cy="150" r="2.0"/><circle cx="435" cy="147" r="1.6"/><circle cx="197" cy="146" r="3.1"/></g><g fill="#425a4e"><circle cx="761" cy="146" r="2.3"/><circle cx="872" cy="147" r="1.9"/><circle cx="439" cy="145" r="3.3"/><circle cx="329" cy="145" r="2.6"/><circle cx="39" cy="145" r="2.6"/><circle cx="422" cy="146" r="2.5"/><circle cx="673" cy="146" r="1.8"/><circle cx="99" cy="146" r="2.7"/><circle cx="480" cy="146" r="2.5"/><circle cx="740" cy="145" r="1.8"/><circle cx="1135" cy="145" r="2.8"/><circle cx="316" cy="145" r="2.9"/><circle cx="667" cy="145" r="3.1"/><circle cx="1019" cy="146" r="3.4"/><circle cx="696" cy="145" r="1.8"/><circle cx="1248" cy="147" r="2.9"/><circle cx="1100" cy="145" r="1.6"/><circle cx="387" cy="146" r="2.2"/><circle cx="1033" cy="146" r="2.6"/><circle cx="699" cy="145" r="3.4"/><circle cx="659" cy="145" r="2.2"/><circle cx="835" cy="146" r="1.8"/><circle cx="24" cy="146" r="2.7"/><circle cx="1220" cy="147" r="1.8"/><circle cx="324" cy="147" r="2.1"/><circle cx="600" cy="146" r="2.5"/><circle cx="209" cy="145" r="2.0"/><circle cx="154" cy="145" r="2.8"/><circle cx="608" cy="145" r="1.9"/><circle cx="1404" cy="146" r="1.6"/><circle cx="850" cy="147" r="3.4"/><circle cx="607" cy="145" r="3.0"/><circle cx="351" cy="147" r="1.9"/><circle cx="277" cy="147" r="1.6"/><circle cx="792" cy="147" r="2.0"/><circle cx="915" cy="146" r="2.9"/><circle cx="1114" cy="146" r="1.7"/><circle cx="249" cy="145" r="2.7"/><circle cx="70" cy="145" r="2.4"/><circle cx="983" cy="146" r="2.7"/><circle cx="14" cy="146" r="1.9"/><circle cx="1385" cy="146" r="2.3"/><circle cx="300" cy="147" r="3.4"/><circle cx="1373" cy="145" r="1.9"/><circle cx="784" cy="147" r="1.8"/></g><g fill="#364e42"><circle cx="824" cy="144" r="2.8"/><circle cx="42" cy="143" r="1.5"/><circle cx="976" cy="142" r="1.6"/><circle cx="286" cy="143" r="3.2"/><circle cx="575" cy="144" r="2.3"/><circle cx="1186" cy="143" r="3.1"/><circle cx="336" cy="144" r="3.2"/><circle cx="583" cy="142" r="3.5"/><circle cx="321" cy="142" r="1.7"/><circle cx="663" cy="144" r="3.4"/><circle cx="612" cy="144" r="2.5"/><circle cx="4" cy="144" r="1.9"/><circle cx="520" cy="144" r="3.5"/><circle cx="1408" cy="142" r="3.5"/><circle cx="305" cy="142" r="2.0"/><circle cx="904" cy="144" r="2.6"/><circle cx="403" cy="144" r="1.6"/><circle cx="598" cy="144" r="1.6"/><circle cx="257" cy="142" r="2.5"/><circle cx="1439" cy="143" r="1.6"/><circle cx="1217" cy="141" r="3.1"/><circle cx="449" cy="142" r="3.4"/><circle cx="1409" cy="144" r="1.9"/><circle cx="964" cy="142" r="1.8"/><circle cx="1297" cy="143" r="3.4"/><circle cx="8" cy="144" r="2.6"/><circle cx="291" cy="144" r="2.0"/><circle cx="251" cy="144" r="3.0"/><circle cx="1429" cy="143" r="2.8"/><circle cx="549" cy="144" r="3.5"/><circle cx="428" cy="143" r="3.5"/><circle cx="41" cy="142" r="1.7"/><circle cx="1417" cy="144" r="2.9"/><circle cx="228" cy="141" r="2.1"/><circle cx="205" cy="144" r="3.3"/><circle cx="412" cy="143" r="2.5"/><circle cx="43" cy="144" r="1.8"/><circle cx="749" cy="144" r="1.5"/><circle cx="1382" cy="144" r="3.2"/><circle cx="584" cy="142" r="2.7"/><circle cx="685" cy="142" r="3.0"/><circle cx="1216" cy="144" r="2.4"/><circle cx="379" cy="144" r="2.5"/><circle cx="1193" cy="143" r="1.8"/><circle cx="813" cy="143" r="2.5"/><circle cx="963" cy="144" r="3.3"/><circle cx="88" cy="142" r="2.5"/><circle cx="42" cy="144" r="3.5"/><circle cx="935" cy="142" r="3.4"/><circle cx="198" cy="143" r="1.8"/><circle cx="1055" cy="141" r="2.9"/><circle cx="577" cy="142" r="2.4"/><circle cx="430" cy="143" r="2.2"/><circle cx="1146" cy="143" r="2.8"/><circle cx="612" cy="144" r="1.9"/><circle cx="279" cy="144" r="2.3"/><circle cx="1009" cy="142" r="2.0"/><circle cx="1259" cy="143" r="2.8"/><circle cx="324" cy="143" r="2.1"/><circle cx="133" cy="144" r="3.2"/><circle cx="169" cy="144" r="1.8"/><circle cx="48" cy="144" r="2.6"/><circle cx="622" cy="144" r="3.2"/><circle cx="341" cy="143" r="1.6"/><circle cx="290" cy="144" r="2.3"/><circle cx="968" cy="143" r="2.0"/><circle cx="210" cy="144" r="2.5"/><circle cx="803" cy="143" r="3.2"/><circle cx="1258" cy="142" r="3.3"/><circle cx="513" cy="144" r="2.8"/><circle cx="1064" cy="142" r="1.6"/><circle cx="175" cy="145" r="1.6"/><circle cx="997" cy="142" r="2.7"/><circle cx="758" cy="141" r="3.2"/><circle cx="414" cy="144" r="1.6"/></g><g fill="#667872"><circle cx="549" cy="146" r="2.9"/><circle cx="1246" cy="146" r="2.1"/><circle cx="541" cy="148" r="2.2"/><circle cx="759" cy="149" r="1.9"/><circle cx="1022" cy="148" r="2.9"/><circle cx="1381" cy="146" r="3.4"/><circle cx="449" cy="146" r="3.4"/><circle cx="1369" cy="147" r="1.7"/><circle cx="1332" cy="146" r="3.2"/><circle cx="1086" cy="146" r="2.4"/><circle cx="851" cy="147" r="1.6"/><circle cx="715" cy="148" r="2.9"/><circle cx="441" cy="148" r="1.7"/><circle cx="1283" cy="149" r="3.0"/><circle cx="608" cy="147" r="2.5"/><circle cx="1249" cy="148" r="3.0"/><circle cx="903" cy="146" r="2.9"/><circle cx="863" cy="146" r="3.1"/></g><g fill="#786660"><circle cx="66" cy="145" r="2.9"/><circle cx="1070" cy="145" r="2.1"/><circle cx="690" cy="145" r="3.4"/><circle cx="1110" cy="144" r="3.3"/><circle cx="444" cy="142" r="1.6"/><circle cx="636" cy="143" r="2.3"/><circle cx="966" cy="148" r="2.6"/><circle cx="1039" cy="147" r="1.9"/><circle cx="482" cy="149" r="2.8"/><circle cx="618" cy="143" r="2.6"/><circle cx="719" cy="150" r="2.9"/><circle cx="806" cy="144" r="3.0"/><circle cx="773" cy="148" r="2.9"/><circle cx="933" cy="146" r="3.4"/><circle cx="849" cy="142" r="2.7"/><circle cx="499" cy="141" r="2.0"/><circle cx="1393" cy="147" r="3.4"/><circle cx="1068" cy="141" r="2.4"/><circle cx="428" cy="141" r="1.7"/><circle cx="556" cy="142" r="2.0"/><circle cx="119" cy="148" r="3.0"/><circle cx="49" cy="142" r="3.4"/><circle cx="1354" cy="147" r="2.3"/><circle cx="612" cy="143" r="2.5"/><circle cx="438" cy="144" r="2.4"/><circle cx="780" cy="148" r="2.6"/></g><g fill="#425448"><circle cx="1424" cy="148" r="1.6"/><circle cx="749" cy="150" r="1.6"/><circle cx="988" cy="148" r="3.4"/><circle cx="1158" cy="148" r="2.8"/><circle cx="291" cy="148" r="2.7"/><circle cx="318" cy="149" r="1.7"/><circle cx="626" cy="150" r="2.6"/><circle cx="907" cy="149" r="2.6"/><circle cx="786" cy="150" r="3.3"/><circle cx="497" cy="148" r="2.2"/><circle cx="524" cy="149" r="2.0"/><circle cx="470" cy="150" r="1.8"/><circle cx="302" cy="150" r="3.5"/><circle cx="606" cy="149" r="2.2"/><circle cx="931" cy="149" r="3.1"/><circle cx="972" cy="149" r="2.0"/><circle cx="1250" cy="148" r="2.6"/><circle cx="746" cy="149" r="2.3"/><circle cx="704" cy="148" r="2.4"/><circle cx="777" cy="148" r="2.4"/><circle cx="200" cy="149" r="2.1"/><circle cx="298" cy="149" r="3.4"/><circle cx="924" cy="150" r="2.4"/><circle cx="899" cy="150" r="2.5"/><circle cx="1259" cy="149" r="2.7"/><circle cx="162" cy="149" r="1.9"/><circle cx="1188" cy="149" r="2.0"/><circle cx="664" cy="149" r="2.1"/><circle cx="1003" cy="149" r="2.5"/><circle cx="1" cy="149" r="3.0"/><circle cx="1258" cy="148" r="1.8"/><circle cx="170" cy="148" r="2.9"/><circle cx="1053" cy="148" r="1.8"/><circle cx="239" cy="148" r="2.9"/><circle cx="991" cy="150" r="1.5"/><circle cx="842" cy="148" r="3.4"/></g><g fill="#3c4e42"><circle cx="837" cy="141" r="1.7"/><circle cx="351" cy="141" r="1.5"/><circle cx="1299" cy="140" r="3.2"/><circle cx="493" cy="140" r="2.5"/><circle cx="83" cy="141" r="3.3"/><circle cx="993" cy="141" r="3.1"/><circle cx="202" cy="140" r="2.8"/><circle cx="590" cy="140" r="2.7"/><circle cx="1362" cy="141" r="1.9"/><circle cx="492" cy="140" r="2.7"/><circle cx="1011" cy="141" r="1.9"/><circle cx="131" cy="141" r="1.7"/><circle cx="408" cy="141" r="3.0"/><circle cx="831" cy="141" r="2.9"/><circle cx="925" cy="141" r="3.2"/><circle cx="1322" cy="141" r="2.5"/><circle cx="452" cy="140" r="3.0"/><circle cx="532" cy="141" r="2.5"/><circle cx="714" cy="141" r="2.0"/><circle cx="1281" cy="141" r="2.8"/><circle cx="487" cy="140" r="1.7"/><circle cx="292" cy="140" r="1.9"/><circle cx="916" cy="141" r="2.8"/><circle cx="1073" cy="141" r="1.6"/><circle cx="1227" cy="140" r="2.0"/></g><g fill="#485a5a"><circle cx="821" cy="140" r="1.6"/><circle cx="1192" cy="140" r="1.8"/><circle cx="1169" cy="140" r="3.2"/><circle cx="1235" cy="140" r="3.4"/><circle cx="148" cy="140" r="2.2"/><circle cx="605" cy="140" r="2.9"/><circle cx="17" cy="140" r="1.7"/><circle cx="206" cy="140" r="3.2"/><circle cx="708" cy="140" r="2.7"/><circle cx="699" cy="140" r="2.9"/><circle cx="815" cy="140" r="2.0"/><circle cx="1229" cy="141" r="3.1"/><circle cx="361" cy="140" r="2.7"/><circle cx="49" cy="140" r="2.2"/><circle cx="703" cy="140" r="3.2"/><circle cx="889" cy="140" r="2.0"/></g><g fill="#6c7878"><circle cx="1147" cy="141" r="3.0"/><circle cx="431" cy="141" r="1.5"/><circle cx="222" cy="141" r="3.0"/><circle cx="162" cy="143" r="1.9"/><circle cx="1242" cy="143" r="2.0"/><circle cx="1368" cy="140" r="3.1"/><circle cx="223" cy="141" r="2.1"/><circle cx="1420" cy="140" r="2.4"/><circle cx="1303" cy="142" r="2.0"/><circle cx="1068" cy="142" r="3.0"/><circle cx="1248" cy="141" r="3.4"/><circle cx="107" cy="141" r="2.4"/><circle cx="871" cy="141" r="2.9"/><circle cx="167" cy="141" r="3.0"/><circle cx="1367" cy="143" r="1.7"/><circle cx="998" cy="142" r="2.8"/></g><g fill="#485a54"><circle cx="600" cy="142" r="2.2"/><circle cx="297" cy="141" r="3.2"/><circle cx="389" cy="142" r="3.3"/><circle cx="867" cy="143" r="3.1"/><circle cx="294" cy="141" r="1.7"/><circle cx="1347" cy="142" r="1.5"/><circle cx="874" cy="144" r="3.1"/><circle cx="310" cy="141" r="1.9"/><circle cx="758" cy="141" r="2.0"/><circle cx="939" cy="143" r="1.8"/><circle cx="218" cy="142" r="2.2"/><circle cx="671" cy="143" r="3.4"/><circle cx="234" cy="142" r="3.5"/><circle cx="277" cy="143" r="2.0"/><circle cx="55" cy="142" r="3.3"/><circle cx="468" cy="142" r="2.2"/><circle cx="1359" cy="143" r="2.4"/><circle cx="210" cy="142" r="2.0"/><circle cx="130" cy="142" r="2.1"/><circle cx="970" cy="141" r="2.7"/><circle cx="11" cy="143" r="3.2"/><circle cx="323" cy="141" r="1.5"/><circle cx="703" cy="142" r="2.1"/><circle cx="551" cy="141" r="2.8"/><circle cx="548" cy="141" r="2.8"/><circle cx="757" cy="142" r="1.9"/><circle cx="307" cy="142" r="2.4"/><circle cx="623" cy="144" r="3.1"/><circle cx="248" cy="142" r="3.0"/><circle cx="721" cy="141" r="2.7"/><circle cx="326" cy="142" r="2.9"/><circle cx="587" cy="143" r="2.8"/><circle cx="283" cy="144" r="2.6"/><circle cx="1124" cy="143" r="1.5"/><circle cx="1225" cy="143" r="1.8"/><circle cx="187" cy="144" r="3.0"/><circle cx="1255" cy="142" r="2.1"/><circle cx="1165" cy="142" r="3.3"/><circle cx="199" cy="143" r="1.7"/><circle cx="161" cy="142" r="3.1"/><circle cx="45" cy="144" r="2.2"/><circle cx="916" cy="142" r="1.8"/><circle cx="0" cy="143" r="2.7"/></g><g fill="#66786c"><circle cx="592" cy="150" r="2.8"/><circle cx="166" cy="150" r="2.8"/><circle cx="151" cy="150" r="2.2"/><circle cx="704" cy="149" r="2.7"/></g><g fill="#42544e"><circle cx="667" cy="147" r="3.1"/><circle cx="162" cy="147" r="2.8"/><circle cx="930" cy="148" r="2.1"/><circle cx="10" cy="147" r="2.5"/><circle cx="1155" cy="147" r="3.0"/><circle cx="1297" cy="148" r="2.9"/><circle cx="847" cy="148" r="2.6"/><circle cx="839" cy="147" r="3.1"/><circle cx="1077" cy="148" r="2.0"/><circle cx="985" cy="148" r="3.0"/><circle cx="103" cy="148" r="2.0"/><circle cx="392" cy="148" r="2.8"/><circle cx="1359" cy="147" r="2.7"/></g><g fill="#6c7872"><circle cx="231" cy="144" r="3.4"/><circle cx="791" cy="143" r="1.9"/><circle cx="287" cy="143" r="1.6"/><circle cx="917" cy="145" r="2.0"/><circle cx="712" cy="145" r="3.2"/><circle cx="333" cy="143" r="2.4"/><circle cx="1436" cy="146" r="2.5"/><circle cx="377" cy="144" r="2.3"/></g><g fill="#364842"><circle cx="225" cy="145" r="2.3"/><circle cx="317" cy="145" r="2.7"/><circle cx="1042" cy="145" r="3.3"/><circle cx="1176" cy="145" r="1.8"/><circle cx="697" cy="145" r="2.6"/><circle cx="787" cy="145" r="2.8"/><circle cx="1155" cy="145" r="3.0"/></g><g fill="#485a4e"><circle cx="1214" cy="144" r="2.2"/><circle cx="7" cy="144" r="3.3"/><circle cx="505" cy="144" r="3.5"/></g><g fill="#36483c"><circle cx="918" cy="152" r="1.6"/><circle cx="1073" cy="152" r="2.7"/><circle cx="237" cy="151" r="2.4"/><circle cx="1067" cy="152" r="3.2"/><circle cx="342" cy="152" r="3.2"/><circle cx="372" cy="151" r="2.6"/><circle cx="381" cy="151" r="2.9"/><circle cx="1405" cy="150" r="2.3"/><circle cx="230" cy="152" r="3.1"/><circle cx="91" cy="151" r="2.3"/><circle cx="748" cy="152" r="2.7"/><circle cx="355" cy="152" r="2.1"/><circle cx="223" cy="152" r="2.0"/><circle cx="1028" cy="150" r="2.7"/><circle cx="162" cy="152" r="3.0"/><circle cx="645" cy="151" r="1.8"/><circle cx="137" cy="152" r="3.1"/><circle cx="248" cy="151" r="3.1"/><circle cx="280" cy="150" r="1.6"/><circle cx="576" cy="152" r="2.7"/><circle cx="295" cy="152" r="2.6"/><circle cx="779" cy="151" r="3.3"/><circle cx="263" cy="151" r="2.7"/><circle cx="1410" cy="152" r="2.2"/><circle cx="914" cy="152" r="2.5"/><circle cx="787" cy="152" r="3.1"/><circle cx="484" cy="152" r="2.0"/><circle cx="883" cy="151" r="2.1"/><circle cx="487" cy="151" r="3.3"/><circle cx="383" cy="152" r="2.0"/><circle cx="757" cy="150" r="3.3"/><circle cx="563" cy="152" r="3.4"/><circle cx="1300" cy="151" r="1.5"/><circle cx="1245" cy="150" r="2.3"/><circle cx="1252" cy="151" r="2.6"/><circle cx="1343" cy="151" r="1.6"/><circle cx="634" cy="150" r="2.8"/><circle cx="1065" cy="152" r="2.6"/><circle cx="129" cy="152" r="1.7"/><circle cx="1097" cy="151" r="3.5"/><circle cx="1120" cy="151" r="2.1"/><circle cx="1235" cy="151" r="3.5"/><circle cx="997" cy="152" r="1.7"/><circle cx="458" cy="152" r="2.9"/><circle cx="8" cy="150" r="3.4"/><circle cx="249" cy="150" r="2.7"/><circle cx="883" cy="151" r="2.3"/><circle cx="60" cy="151" r="2.0"/><circle cx="1023" cy="151" r="2.5"/><circle cx="1101" cy="152" r="3.4"/><circle cx="1236" cy="152" r="2.9"/><circle cx="1280" cy="151" r="1.6"/><circle cx="310" cy="151" r="2.8"/><circle cx="469" cy="150" r="1.9"/><circle cx="566" cy="150" r="2.7"/><circle cx="992" cy="152" r="1.7"/></g><g fill="#364836"><circle cx="797" cy="155" r="1.7"/><circle cx="381" cy="157" r="1.9"/><circle cx="1263" cy="155" r="3.5"/><circle cx="315" cy="158" r="2.4"/><circle cx="1270" cy="153" r="2.2"/><circle cx="236" cy="157" r="2.2"/><circle cx="751" cy="157" r="3.3"/><circle cx="918" cy="159" r="2.9"/><circle cx="200" cy="159" r="2.4"/><circle cx="209" cy="157" r="2.4"/><circle cx="1117" cy="157" r="2.4"/><circle cx="1078" cy="160" r="1.6"/><circle cx="146" cy="153" r="2.3"/><circle cx="1307" cy="155" r="2.0"/><circle cx="311" cy="156" r="3.0"/><circle cx="1364" cy="154" r="1.9"/><circle cx="493" cy="155" r="2.3"/><circle cx="106" cy="155" r="2.7"/><circle cx="1017" cy="156" r="2.4"/><circle cx="817" cy="159" r="3.1"/><circle cx="1282" cy="160" r="2.1"/><circle cx="773" cy="156" r="2.8"/><circle cx="635" cy="156" r="2.4"/><circle cx="1378" cy="158" r="3.2"/><circle cx="1074" cy="154" r="2.5"/><circle cx="708" cy="155" r="2.6"/><circle cx="901" cy="159" r="2.7"/><circle cx="1024" cy="157" r="2.4"/><circle cx="448" cy="159" r="3.3"/><circle cx="252" cy="154" r="2.7"/><circle cx="835" cy="156" r="1.9"/><circle cx="1132" cy="156" r="2.2"/><circle cx="61" cy="159" r="3.0"/><circle cx="20" cy="153" r="1.7"/><circle cx="535" cy="155" r="3.4"/><circle cx="744" cy="158" r="3.2"/><circle cx="95" cy="155" r="2.1"/><circle cx="1200" cy="153" r="3.2"/><circle cx="452" cy="155" r="1.6"/><circle cx="551" cy="158" r="1.5"/><circle cx="154" cy="154" r="2.1"/><circle cx="30" cy="159" r="2.3"/><circle cx="107" cy="154" r="3.4"/><circle cx="395" cy="153" r="2.3"/><circle cx="497" cy="159" r="3.4"/><circle cx="1259" cy="157" r="2.1"/><circle cx="747" cy="153" r="2.4"/><circle cx="700" cy="153" r="2.6"/><circle cx="73" cy="156" r="2.6"/><circle cx="1416" cy="154" r="2.4"/><circle cx="942" cy="156" r="2.5"/><circle cx="469" cy="154" r="2.2"/><circle cx="679" cy="156" r="3.0"/><circle cx="1094" cy="156" r="3.2"/><circle cx="763" cy="155" r="1.7"/><circle cx="1108" cy="156" r="3.3"/><circle cx="1382" cy="158" r="2.5"/><circle cx="790" cy="153" r="1.8"/><circle cx="563" cy="154" r="1.9"/><circle cx="658" cy="155" r="1.9"/><circle cx="884" cy="159" r="2.3"/><circle cx="1387" cy="159" r="3.2"/><circle cx="545" cy="154" r="1.7"/><circle cx="1003" cy="157" r="2.0"/><circle cx="861" cy="153" r="3.0"/><circle cx="345" cy="158" r="1.6"/><circle cx="1420" cy="153" r="3.3"/><circle cx="1164" cy="156" r="1.5"/><circle cx="1160" cy="153" r="2.6"/><circle cx="826" cy="159" r="2.9"/><circle cx="1265" cy="154" r="2.7"/><circle cx="957" cy="156" r="1.8"/><circle cx="509" cy="156" r="1.9"/><circle cx="1137" cy="158" r="2.2"/><circle cx="793" cy="159" r="2.2"/><circle cx="545" cy="156" r="3.2"/><circle cx="212" cy="159" r="2.7"/><circle cx="177" cy="156" r="1.9"/><circle cx="855" cy="160" r="2.8"/><circle cx="968" cy="154" r="2.6"/><circle cx="494" cy="154" r="2.8"/><circle cx="494" cy="155" r="3.0"/><circle cx="716" cy="153" r="1.7"/><circle cx="344" cy="156" r="1.9"/><circle cx="1116" cy="155" r="2.6"/><circle cx="855" cy="155" r="2.1"/><circle cx="1311" cy="158" r="2.5"/><circle cx="1166" cy="154" r="2.6"/><circle cx="351" cy="153" r="2.4"/><circle cx="621" cy="158" r="3.4"/><circle cx="773" cy="156" r="2.6"/><circle cx="236" cy="158" r="1.8"/><circle cx="1207" cy="153" r="3.3"/><circle cx="1135" cy="153" r="1.8"/><circle cx="84" cy="157" r="1.5"/><circle cx="781" cy="158" r="1.9"/><circle cx="1259" cy="158" r="1.7"/><circle cx="110" cy="156" r="2.7"/><circle cx="767" cy="153" r="3.3"/><circle cx="565" cy="154" r="3.3"/><circle cx="572" cy="160" r="2.2"/><circle cx="1040" cy="160" r="3.3"/><circle cx="835" cy="153" r="2.8"/><circle cx="1359" cy="155" r="2.3"/><circle cx="441" cy="159" r="2.8"/><circle cx="972" cy="159" r="2.1"/><circle cx="617" cy="156" r="1.8"/><circle cx="623" cy="158" r="1.6"/><circle cx="1017" cy="157" r="1.6"/><circle cx="1027" cy="154" r="3.2"/><circle cx="1189" cy="157" r="1.6"/><circle cx="166" cy="160" r="3.2"/><circle cx="963" cy="159" r="3.3"/><circle cx="909" cy="155" r="1.8"/><circle cx="789" cy="158" r="2.4"/><circle cx="169" cy="158" r="3.3"/><circle cx="556" cy="154" r="3.4"/><circle cx="918" cy="153" r="2.6"/><circle cx="279" cy="157" r="2.2"/><circle cx="631" cy="157" r="2.8"/><circle cx="1228" cy="156" r="1.5"/><circle cx="1126" cy="155" r="3.1"/><circle cx="450" cy="158" r="1.6"/><circle cx="355" cy="152" r="2.8"/><circle cx="1114" cy="154" r="2.1"/><circle cx="347" cy="158" r="2.4"/><circle cx="400" cy="156" r="2.4"/><circle cx="1208" cy="157" r="1.5"/><circle cx="880" cy="154" r="2.4"/><circle cx="61" cy="159" r="2.0"/><circle cx="645" cy="160" r="3.3"/><circle cx="1430" cy="157" r="3.3"/><circle cx="1052" cy="157" r="2.3"/><circle cx="738" cy="158" r="3.0"/><circle cx="43" cy="158" r="2.4"/><circle cx="1105" cy="157" r="2.0"/><circle cx="238" cy="155" r="2.7"/><circle cx="1169" cy="157" r="2.6"/><circle cx="1314" cy="160" r="1.6"/><circle cx="1278" cy="154" r="1.6"/><circle cx="164" cy="154" r="1.7"/><circle cx="1029" cy="154" r="2.4"/><circle cx="542" cy="159" r="2.6"/><circle cx="1193" cy="154" r="3.4"/><circle cx="1196" cy="155" r="2.0"/><circle cx="462" cy="159" r="2.0"/><circle cx="1281" cy="153" r="2.8"/><circle cx="617" cy="157" r="1.8"/><circle cx="807" cy="155" r="3.5"/><circle cx="1062" cy="155" r="2.1"/><circle cx="125" cy="159" r="2.4"/><circle cx="593" cy="156" r="1.9"/><circle cx="754" cy="156" r="2.5"/><circle cx="689" cy="153" r="1.7"/><circle cx="370" cy="156" r="3.4"/><circle cx="648" cy="155" r="3.4"/><circle cx="496" cy="154" r="2.4"/><circle cx="1421" cy="160" r="3.4"/><circle cx="277" cy="155" r="1.9"/><circle cx="1332" cy="159" r="2.4"/><circle cx="87" cy="157" r="1.9"/><circle cx="496" cy="157" r="2.3"/><circle cx="1377" cy="159" r="3.2"/><circle cx="1315" cy="158" r="3.0"/><circle cx="1321" cy="160" r="2.5"/><circle cx="194" cy="159" r="2.4"/><circle cx="754" cy="155" r="1.9"/><circle cx="68" cy="154" r="1.8"/><circle cx="414" cy="157" r="2.2"/><circle cx="872" cy="159" r="1.5"/><circle cx="816" cy="156" r="2.8"/><circle cx="7" cy="160" r="2.6"/><circle cx="1431" cy="159" r="3.2"/><circle cx="731" cy="154" r="2.5"/><circle cx="1087" cy="155" r="2.5"/><circle cx="575" cy="159" r="2.6"/><circle cx="260" cy="155" r="3.5"/><circle cx="177" cy="157" r="2.2"/><circle cx="311" cy="157" r="2.5"/><circle cx="1385" cy="154" r="2.0"/><circle cx="585" cy="157" r="3.0"/><circle cx="144" cy="159" r="3.3"/><circle cx="762" cy="157" r="3.5"/><circle cx="547" cy="157" r="2.5"/><circle cx="1172" cy="154" r="2.3"/><circle cx="121" cy="159" r="2.5"/><circle cx="725" cy="156" r="3.4"/><circle cx="1381" cy="156" r="3.4"/><circle cx="80" cy="157" r="2.0"/></g><g fill="#66726c"><circle cx="1157" cy="157" r="1.9"/><circle cx="497" cy="154" r="2.7"/><circle cx="684" cy="152" r="1.9"/><circle cx="1078" cy="158" r="3.4"/><circle cx="124" cy="153" r="1.7"/><circle cx="904" cy="154" r="2.3"/><circle cx="73" cy="158" r="2.4"/><circle cx="1081" cy="154" r="3.1"/><circle cx="1430" cy="156" r="2.9"/><circle cx="147" cy="153" r="2.9"/><circle cx="1115" cy="157" r="3.1"/><circle cx="1114" cy="159" r="3.0"/><circle cx="1254" cy="159" r="2.8"/><circle cx="1080" cy="153" r="2.7"/><circle cx="699" cy="152" r="2.4"/><circle cx="25" cy="160" r="2.1"/><circle cx="1089" cy="159" r="2.6"/><circle cx="971" cy="152" r="2.2"/><circle cx="306" cy="155" r="2.6"/><circle cx="333" cy="154" r="3.1"/><circle cx="572" cy="159" r="3.4"/><circle cx="750" cy="157" r="3.3"/><circle cx="1276" cy="156" r="1.7"/><circle cx="207" cy="159" r="2.6"/><circle cx="1281" cy="153" r="2.0"/><circle cx="1373" cy="155" r="2.3"/><circle cx="706" cy="159" r="2.5"/><circle cx="397" cy="154" r="2.4"/><circle cx="19" cy="152" r="3.4"/><circle cx="158" cy="156" r="3.0"/><circle cx="479" cy="157" r="3.1"/><circle cx="1413" cy="156" r="3.4"/><circle cx="1062" cy="158" r="3.1"/><circle cx="1377" cy="159" r="2.3"/><circle cx="414" cy="157" r="2.0"/><circle cx="1244" cy="154" r="3.4"/><circle cx="363" cy="155" r="3.1"/><circle cx="1201" cy="157" r="2.4"/><circle cx="468" cy="157" r="3.4"/><circle cx="171" cy="157" r="1.9"/><circle cx="424" cy="159" r="3.3"/><circle cx="1049" cy="156" r="1.6"/><circle cx="1326" cy="156" r="2.5"/><circle cx="186" cy="152" r="3.0"/><circle cx="1249" cy="152" r="2.6"/><circle cx="387" cy="159" r="3.2"/></g><g fill="#3c5442"><circle cx="902" cy="159" r="2.7"/><circle cx="466" cy="153" r="1.5"/><circle cx="1138" cy="155" r="2.9"/><circle cx="1099" cy="153" r="2.2"/><circle cx="2" cy="160" r="3.3"/><circle cx="743" cy="154" r="1.6"/><circle cx="873" cy="158" r="2.9"/><circle cx="1150" cy="157" r="1.9"/><circle cx="1338" cy="156" r="2.6"/><circle cx="415" cy="158" r="2.1"/><circle cx="672" cy="156" r="2.6"/><circle cx="943" cy="154" r="2.1"/><circle cx="14" cy="154" r="2.7"/><circle cx="270" cy="159" r="1.7"/><circle cx="1090" cy="154" r="2.6"/><circle cx="1167" cy="159" r="3.3"/><circle cx="988" cy="153" r="3.0"/><circle cx="278" cy="157" r="1.7"/><circle cx="1238" cy="154" r="1.5"/><circle cx="1375" cy="154" r="2.8"/><circle cx="64" cy="153" r="1.6"/><circle cx="574" cy="153" r="2.8"/><circle cx="883" cy="157" r="3.3"/><circle cx="763" cy="159" r="1.7"/><circle cx="127" cy="153" r="1.8"/><circle cx="796" cy="157" r="2.5"/><circle cx="55" cy="153" r="2.8"/><circle cx="1174" cy="160" r="2.9"/><circle cx="1332" cy="160" r="2.4"/><circle cx="503" cy="157" r="1.7"/><circle cx="739" cy="152" r="2.0"/><circle cx="887" cy="159" r="2.7"/><circle cx="1398" cy="154" r="1.8"/><circle cx="632" cy="155" r="1.9"/><circle cx="931" cy="158" r="3.3"/><circle cx="604" cy="153" r="3.5"/><circle cx="323" cy="156" r="2.8"/><circle cx="1433" cy="155" r="2.2"/><circle cx="1116" cy="159" r="1.5"/><circle cx="850" cy="159" r="3.2"/><circle cx="964" cy="155" r="2.4"/><circle cx="172" cy="158" r="2.1"/><circle cx="199" cy="158" r="2.9"/><circle cx="949" cy="157" r="2.2"/><circle cx="358" cy="152" r="2.0"/><circle cx="1180" cy="156" r="2.1"/><circle cx="269" cy="152" r="1.5"/><circle cx="608" cy="152" r="2.5"/><circle cx="447" cy="153" r="1.8"/><circle cx="37" cy="155" r="1.9"/><circle cx="1183" cy="157" r="3.1"/><circle cx="843" cy="158" r="3.1"/><circle cx="382" cy="154" r="2.3"/><circle cx="1142" cy="153" r="2.8"/><circle cx="217" cy="155" r="3.4"/><circle cx="1307" cy="153" r="3.0"/><circle cx="1073" cy="158" r="3.0"/><circle cx="652" cy="153" r="2.7"/><circle cx="115" cy="158" r="2.9"/><circle cx="1341" cy="156" r="1.8"/><circle cx="1219" cy="160" r="2.0"/><circle cx="336" cy="160" r="2.1"/><circle cx="595" cy="155" r="1.8"/><circle cx="673" cy="154" r="2.0"/><circle cx="704" cy="156" r="2.9"/><circle cx="818" cy="160" r="3.0"/><circle cx="640" cy="153" r="1.8"/><circle cx="1265" cy="157" r="2.0"/><circle cx="69" cy="154" r="3.0"/><circle cx="785" cy="155" r="1.9"/><circle cx="41" cy="153" r="2.0"/><circle cx="1159" cy="155" r="1.9"/><circle cx="1003" cy="156" r="2.4"/><circle cx="1058" cy="152" r="2.0"/><circle cx="416" cy="153" r="3.1"/><circle cx="1140" cy="157" r="2.6"/><circle cx="696" cy="155" r="1.5"/><circle cx="209" cy="154" r="3.1"/><circle cx="1038" cy="152" r="3.0"/><circle cx="1001" cy="153" r="1.9"/><circle cx="985" cy="157" r="2.9"/><circle cx="420" cy="154" r="3.5"/><circle cx="904" cy="156" r="2.7"/><circle cx="388" cy="152" r="3.0"/><circle cx="102" cy="155" r="2.2"/><circle cx="1284" cy="156" r="2.8"/><circle cx="798" cy="156" r="1.8"/><circle cx="780" cy="156" r="2.8"/><circle cx="738" cy="157" r="2.3"/><circle cx="1301" cy="154" r="2.1"/><circle cx="809" cy="158" r="3.3"/><circle cx="743" cy="157" r="2.7"/><circle cx="172" cy="155" r="2.6"/><circle cx="732" cy="153" r="3.4"/><circle cx="1287" cy="153" r="2.1"/><circle cx="808" cy="154" r="1.6"/><circle cx="724" cy="154" r="2.6"/><circle cx="345" cy="153" r="2.6"/><circle cx="323" cy="158" r="2.1"/><circle cx="1261" cy="159" r="1.8"/><circle cx="996" cy="153" r="3.1"/><circle cx="1358" cy="156" r="1.9"/><circle cx="194" cy="154" r="3.5"/><circle cx="1343" cy="155" r="1.6"/><circle cx="981" cy="159" r="2.3"/><circle cx="716" cy="154" r="2.6"/><circle cx="27" cy="159" r="1.9"/><circle cx="899" cy="159" r="2.9"/><circle cx="155" cy="158" r="2.2"/><circle cx="426" cy="156" r="2.7"/><circle cx="338" cy="152" r="3.2"/><circle cx="47" cy="159" r="2.3"/><circle cx="423" cy="158" r="3.0"/><circle cx="788" cy="160" r="1.6"/><circle cx="178" cy="157" r="2.2"/><circle cx="398" cy="157" r="2.9"/><circle cx="1081" cy="152" r="2.6"/><circle cx="183" cy="154" r="2.5"/><circle cx="668" cy="158" r="3.0"/><circle cx="977" cy="154" r="2.0"/><circle cx="339" cy="152" r="1.8"/><circle cx="248" cy="157" r="3.4"/><circle cx="1213" cy="152" r="3.3"/><circle cx="967" cy="157" r="3.1"/><circle cx="361" cy="152" r="2.6"/><circle cx="740" cy="153" r="2.9"/><circle cx="915" cy="158" r="3.4"/><circle cx="1365" cy="156" r="1.7"/><circle cx="598" cy="160" r="1.5"/><circle cx="168" cy="152" r="1.9"/><circle cx="303" cy="156" r="3.1"/><circle cx="789" cy="157" r="1.8"/><circle cx="667" cy="156" r="2.0"/><circle cx="67" cy="154" r="2.4"/><circle cx="84" cy="157" r="3.5"/><circle cx="914" cy="159" r="1.8"/><circle cx="1175" cy="158" r="2.1"/><circle cx="1272" cy="155" r="2.2"/><circle cx="928" cy="157" r="2.5"/><circle cx="1274" cy="154" r="3.4"/><circle cx="800" cy="153" r="3.1"/><circle cx="475" cy="158" r="3.1"/><circle cx="936" cy="155" r="3.3"/><circle cx="604" cy="159" r="2.0"/><circle cx="247" cy="155" r="2.6"/></g><g fill="#786660"><circle cx="0" cy="153" r="2.4"/><circle cx="199" cy="151" r="2.9"/><circle cx="285" cy="155" r="2.6"/><circle cx="885" cy="156" r="2.2"/><circle cx="1079" cy="156" r="2.0"/><circle cx="688" cy="155" r="2.5"/><circle cx="1033" cy="154" r="2.0"/><circle cx="623" cy="157" r="2.4"/><circle cx="1416" cy="151" r="2.3"/><circle cx="320" cy="151" r="1.5"/><circle cx="358" cy="158" r="2.9"/><circle cx="1020" cy="157" r="3.1"/><circle cx="1106" cy="153" r="1.7"/><circle cx="128" cy="152" r="1.6"/><circle cx="671" cy="159" r="3.0"/><circle cx="1255" cy="155" r="2.0"/><circle cx="1067" cy="160" r="2.5"/><circle cx="1100" cy="156" r="3.5"/><circle cx="351" cy="155" r="3.5"/><circle cx="531" cy="151" r="1.6"/><circle cx="988" cy="157" r="3.4"/><circle cx="1009" cy="157" r="2.3"/><circle cx="1368" cy="151" r="1.8"/><circle cx="1075" cy="159" r="3.0"/><circle cx="584" cy="150" r="2.7"/><circle cx="1087" cy="155" r="2.5"/></g><g fill="#425448"><circle cx="765" cy="151" r="2.3"/><circle cx="896" cy="151" r="2.7"/><circle cx="435" cy="151" r="2.8"/><circle cx="792" cy="151" r="2.3"/><circle cx="1300" cy="151" r="1.8"/><circle cx="1264" cy="150" r="1.9"/><circle cx="356" cy="151" r="2.8"/><circle cx="908" cy="151" r="2.9"/><circle cx="154" cy="150" r="2.4"/><circle cx="784" cy="150" r="3.3"/><circle cx="1212" cy="150" r="1.6"/><circle cx="865" cy="151" r="3.2"/><circle cx="207" cy="151" r="3.1"/><circle cx="785" cy="150" r="2.6"/><circle cx="265" cy="151" r="1.5"/><circle cx="1089" cy="150" r="2.8"/><circle cx="508" cy="150" r="1.6"/><circle cx="1330" cy="151" r="3.1"/><circle cx="472" cy="151" r="2.3"/><circle cx="5" cy="150" r="3.3"/><circle cx="459" cy="151" r="3.3"/></g><g fill="#66786c"><circle cx="958" cy="151" r="3.3"/><circle cx="1297" cy="151" r="2.7"/><circle cx="1276" cy="151" r="2.4"/><circle cx="1380" cy="150" r="1.7"/><circle cx="1041" cy="150" r="2.0"/><circle cx="75" cy="151" r="3.3"/><circle cx="1334" cy="151" r="3.2"/><circle cx="85" cy="151" r="2.7"/><circle cx="871" cy="151" r="1.9"/></g><g fill="#3c5448"><circle cx="973" cy="152" r="2.6"/><circle cx="713" cy="151" r="3.0"/><circle cx="299" cy="152" r="3.2"/><circle cx="691" cy="151" r="1.5"/><circle cx="1147" cy="151" r="2.4"/><circle cx="790" cy="151" r="1.6"/><circle cx="403" cy="151" r="2.6"/><circle cx="45" cy="152" r="2.3"/><circle cx="335" cy="151" r="2.5"/><circle cx="901" cy="151" r="2.4"/><circle cx="786" cy="152" r="3.4"/></g><g fill="#364836"><circle cx="496" cy="165" r="2.5"/><circle cx="655" cy="160" r="2.7"/><circle cx="681" cy="160" r="3.1"/><circle cx="290" cy="161" r="2.5"/><circle cx="177" cy="164" r="1.6"/><circle cx="1250" cy="164" r="2.4"/><circle cx="1103" cy="160" r="3.2"/><circle cx="563" cy="165" r="2.7"/><circle cx="1092" cy="162" r="1.9"/><circle cx="1041" cy="164" r="1.8"/><circle cx="1252" cy="163" r="3.1"/><circle cx="482" cy="160" r="3.0"/><circle cx="591" cy="164" r="3.3"/><circle cx="1260" cy="165" r="2.4"/><circle cx="1085" cy="160" r="2.2"/><circle cx="826" cy="165" r="2.8"/><circle cx="1200" cy="162" r="2.2"/><circle cx="50" cy="161" r="2.6"/><circle cx="1238" cy="165" r="1.5"/><circle cx="750" cy="165" r="3.1"/><circle cx="1069" cy="162" r="3.0"/><circle cx="74" cy="162" r="2.7"/><circle cx="219" cy="160" r="2.5"/><circle cx="947" cy="165" r="1.8"/><circle cx="678" cy="164" r="3.1"/><circle cx="153" cy="166" r="1.5"/><circle cx="448" cy="160" r="3.4"/><circle cx="1181" cy="163" r="1.8"/><circle cx="563" cy="165" r="3.3"/><circle cx="926" cy="161" r="3.4"/><circle cx="496" cy="163" r="1.7"/><circle cx="1403" cy="164" r="3.4"/><circle cx="1119" cy="166" r="3.2"/><circle cx="820" cy="162" r="2.2"/><circle cx="728" cy="163" r="3.5"/><circle cx="1319" cy="160" r="3.2"/><circle cx="416" cy="165" r="2.2"/><circle cx="519" cy="160" r="2.0"/><circle cx="506" cy="161" r="2.7"/><circle cx="132" cy="160" r="3.5"/><circle cx="1211" cy="161" r="3.0"/><circle cx="527" cy="164" r="2.2"/><circle cx="1409" cy="165" r="3.3"/><circle cx="86" cy="163" r="2.9"/><circle cx="714" cy="161" r="3.1"/><circle cx="213" cy="165" r="2.6"/><circle cx="825" cy="163" r="2.5"/><circle cx="1132" cy="161" r="2.7"/><circle cx="750" cy="165" r="1.7"/><circle cx="1063" cy="163" r="1.6"/><circle cx="370" cy="165" r="2.2"/><circle cx="1362" cy="163" r="2.2"/><circle cx="1333" cy="162" r="2.0"/><circle cx="50" cy="162" r="2.9"/><circle cx="1428" cy="166" r="3.3"/><circle cx="1392" cy="162" r="3.2"/><circle cx="1181" cy="164" r="2.0"/><circle cx="252" cy="165" r="2.2"/><circle cx="647" cy="164" r="2.6"/><circle cx="1084" cy="160" r="1.8"/><circle cx="222" cy="160" r="1.7"/><circle cx="99" cy="164" r="2.6"/><circle cx="1248" cy="164" r="3.1"/><circle cx="625" cy="166" r="2.1"/><circle cx="830" cy="161" r="3.4"/><circle cx="814" cy="164" r="2.2"/><circle cx="53" cy="161" r="1.9"/><circle cx="936" cy="165" r="2.4"/><circle cx="64" cy="164" r="3.2"/><circle cx="721" cy="164" r="2.6"/><circle cx="263" cy="161" r="3.4"/><circle cx="346" cy="163" r="3.4"/><circle cx="555" cy="166" r="3.3"/><circle cx="539" cy="160" r="1.9"/><circle cx="929" cy="164" r="2.8"/><circle cx="685" cy="165" r="3.1"/><circle cx="177" cy="166" r="2.3"/><circle cx="1131" cy="162" r="2.3"/><circle cx="601" cy="161" r="3.2"/><circle cx="88" cy="161" r="2.2"/><circle cx="1082" cy="164" r="2.8"/><circle cx="202" cy="160" r="1.9"/><circle cx="1326" cy="165" r="2.4"/><circle cx="522" cy="164" r="1.7"/><circle cx="427" cy="164" r="2.1"/><circle cx="642" cy="163" r="2.1"/><circle cx="981" cy="164" r="3.3"/><circle cx="808" cy="165" r="2.5"/><circle cx="789" cy="165" r="2.1"/><circle cx="1324" cy="162" r="1.8"/><circle cx="442" cy="164" r="2.9"/><circle cx="290" cy="163" r="2.5"/><circle cx="987" cy="165" r="2.0"/><circle cx="596" cy="165" r="3.5"/><circle cx="319" cy="163" r="3.1"/><circle cx="950" cy="163" r="1.6"/><circle cx="319" cy="164" r="1.9"/><circle cx="864" cy="165" r="2.8"/><circle cx="999" cy="160" r="2.7"/><circle cx="908" cy="162" r="2.4"/><circle cx="1117" cy="165" r="2.9"/><circle cx="514" cy="161" r="2.5"/><circle cx="1085" cy="162" r="2.2"/><circle cx="1176" cy="165" r="1.9"/><circle cx="635" cy="162" r="2.0"/><circle cx="196" cy="161" r="1.7"/><circle cx="1325" cy="166" r="1.9"/><circle cx="6" cy="165" r="2.9"/><circle cx="183" cy="162" r="3.4"/><circle cx="521" cy="163" r="2.4"/><circle cx="330" cy="162" r="2.8"/><circle cx="379" cy="161" r="2.9"/><circle cx="1393" cy="161" r="3.1"/><circle cx="454" cy="166" r="2.1"/><circle cx="80" cy="163" r="2.4"/><circle cx="300" cy="165" r="2.9"/><circle cx="1236" cy="163" r="2.7"/><circle cx="1256" cy="161" r="3.4"/><circle cx="504" cy="165" r="1.6"/><circle cx="634" cy="160" r="3.2"/><circle cx="1317" cy="160" r="1.8"/><circle cx="586" cy="164" r="2.4"/><circle cx="456" cy="163" r="2.6"/><circle cx="1054" cy="164" r="1.8"/><circle cx="1024" cy="161" r="3.3"/><circle cx="705" cy="166" r="3.1"/><circle cx="504" cy="165" r="2.8"/><circle cx="1291" cy="164" r="2.3"/><circle cx="959" cy="166" r="3.2"/><circle cx="913" cy="160" r="2.8"/><circle cx="1208" cy="160" r="1.7"/><circle cx="1148" cy="162" r="2.5"/></g><g fill="#66726c"><circle cx="737" cy="160" r="3.3"/><circle cx="819" cy="161" r="3.1"/><circle cx="992" cy="162" r="3.2"/><circle cx="700" cy="163" r="1.8"/><circle cx="428" cy="166" r="2.9"/><circle cx="988" cy="160" r="1.5"/><circle cx="401" cy="165" r="2.2"/><circle cx="604" cy="162" r="3.3"/><circle cx="790" cy="166" r="2.4"/><circle cx="1250" cy="162" r="3.3"/><circle cx="1186" cy="164" r="2.9"/><circle cx="715" cy="163" r="2.5"/><circle cx="1146" cy="164" r="1.7"/><circle cx="662" cy="160" r="1.7"/><circle cx="296" cy="165" r="3.1"/><circle cx="1290" cy="161" r="1.8"/><circle cx="308" cy="162" r="3.3"/><circle cx="661" cy="161" r="2.0"/></g><g fill="#3c5442"><circle cx="1305" cy="161" r="1.8"/><circle cx="158" cy="166" r="2.7"/><circle cx="743" cy="162" r="3.4"/><circle cx="843" cy="161" r="3.0"/><circle cx="467" cy="164" r="2.4"/><circle cx="836" cy="162" r="2.0"/><circle cx="459" cy="165" r="2.8"/><circle cx="1229" cy="165" r="1.7"/><circle cx="1385" cy="160" r="2.5"/><circle cx="855" cy="161" r="1.9"/><circle cx="343" cy="163" r="3.5"/><circle cx="593" cy="165" r="3.2"/><circle cx="716" cy="161" r="2.6"/><circle cx="404" cy="161" r="3.0"/><circle cx="972" cy="160" r="3.1"/><circle cx="1248" cy="166" r="1.8"/><circle cx="1045" cy="164" r="3.4"/><circle cx="510" cy="164" r="1.8"/><circle cx="1161" cy="163" r="3.0"/><circle cx="748" cy="160" r="3.2"/><circle cx="450" cy="162" r="2.0"/><circle cx="819" cy="165" r="2.1"/><circle cx="239" cy="162" r="1.5"/><circle cx="993" cy="165" r="1.9"/><circle cx="1024" cy="164" r="1.7"/><circle cx="185" cy="163" r="1.5"/><circle cx="1091" cy="163" r="2.6"/><circle cx="880" cy="164" r="3.0"/><circle cx="160" cy="162" r="2.2"/><circle cx="972" cy="163" r="1.7"/><circle cx="36" cy="164" r="2.7"/><circle cx="186" cy="162" r="2.6"/><circle cx="524" cy="166" r="3.0"/><circle cx="1314" cy="166" r="2.1"/><circle cx="598" cy="166" r="1.8"/><circle cx="752" cy="164" r="1.6"/><circle cx="941" cy="165" r="2.1"/><circle cx="81" cy="165" r="1.6"/><circle cx="396" cy="165" r="2.9"/><circle cx="338" cy="166" r="1.9"/><circle cx="590" cy="162" r="2.2"/><circle cx="234" cy="160" r="3.3"/><circle cx="840" cy="165" r="3.1"/><circle cx="839" cy="161" r="1.7"/><circle cx="151" cy="164" r="3.4"/><circle cx="974" cy="165" r="2.3"/><circle cx="753" cy="165" r="1.5"/><circle cx="1162" cy="162" r="2.2"/><circle cx="166" cy="165" r="2.6"/><circle cx="545" cy="166" r="2.6"/><circle cx="785" cy="165" r="3.1"/><circle cx="854" cy="163" r="2.5"/><circle cx="1215" cy="161" r="1.7"/><circle cx="1328" cy="165" r="2.1"/><circle cx="520" cy="165" r="2.3"/><circle cx="80" cy="164" r="2.8"/><circle cx="8" cy="164" r="2.2"/><circle cx="109" cy="164" r="2.1"/><circle cx="821" cy="162" r="2.4"/><circle cx="279" cy="166" r="3.1"/><circle cx="433" cy="160" r="1.9"/><circle cx="1110" cy="164" r="2.5"/><circle cx="896" cy="164" r="3.1"/><circle cx="817" cy="161" r="1.7"/><circle cx="713" cy="161" r="1.6"/><circle cx="321" cy="161" r="3.1"/><circle cx="999" cy="162" r="2.6"/><circle cx="1125" cy="162" r="2.5"/><circle cx="1365" cy="160" r="2.3"/><circle cx="908" cy="162" r="3.3"/><circle cx="1058" cy="165" r="3.1"/><circle cx="656" cy="164" r="3.3"/><circle cx="456" cy="162" r="3.0"/><circle cx="1093" cy="165" r="1.5"/><circle cx="1207" cy="162" r="2.7"/><circle cx="954" cy="164" r="2.6"/><circle cx="1158" cy="162" r="3.4"/><circle cx="1305" cy="162" r="2.6"/><circle cx="1261" cy="164" r="3.3"/><circle cx="693" cy="162" r="2.2"/><circle cx="1260" cy="166" r="1.8"/><circle cx="1012" cy="164" r="2.3"/><circle cx="1080" cy="165" r="2.3"/><circle cx="258" cy="165" r="3.1"/><circle cx="376" cy="165" r="3.4"/><circle cx="465" cy="166" r="3.0"/><circle cx="95" cy="166" r="3.0"/><circle cx="1213" cy="165" r="2.4"/><circle cx="523" cy="164" r="1.5"/><circle cx="532" cy="163" r="3.3"/><circle cx="152" cy="160" r="2.0"/><circle cx="303" cy="162" r="3.3"/><circle cx="288" cy="165" r="3.2"/><circle cx="1108" cy="163" r="2.8"/><circle cx="513" cy="163" r="3.2"/><circle cx="509" cy="166" r="3.1"/><circle cx="1406" cy="162" r="2.8"/><circle cx="369" cy="163" r="2.0"/><circle cx="1295" cy="165" r="2.7"/><circle cx="769" cy="165" r="3.4"/><circle cx="744" cy="165" r="3.0"/><circle cx="70" cy="161" r="2.8"/><circle cx="697" cy="160" r="2.2"/></g><g fill="#786660"><circle cx="784" cy="164" r="1.8"/><circle cx="105" cy="162" r="1.5"/><circle cx="1209" cy="165" r="2.9"/><circle cx="1321" cy="166" r="1.9"/><circle cx="470" cy="165" r="2.3"/><circle cx="686" cy="161" r="2.1"/><circle cx="715" cy="161" r="1.8"/><circle cx="879" cy="163" r="2.8"/></g><g fill="#30482a"><circle cx="138" cy="170" r="3"/><circle cx="261" cy="163" r="2"/><circle cx="772" cy="164" r="2"/><circle cx="469" cy="161" r="3"/><circle cx="89" cy="165" r="4"/><circle cx="104" cy="170" r="5"/><circle cx="829" cy="166" r="2"/><circle cx="587" cy="162" r="5"/><circle cx="457" cy="161" r="4"/><circle cx="838" cy="169" r="2"/><circle cx="231" cy="166" r="5"/><circle cx="492" cy="163" r="5"/><circle cx="253" cy="170" r="3"/><circle cx="332" cy="163" r="4"/><circle cx="11" cy="163" r="5"/><circle cx="143" cy="162" r="5"/><circle cx="57" cy="165" r="3"/><circle cx="748" cy="168" r="2"/><circle cx="787" cy="167" r="5"/><circle cx="440" cy="163" r="4"/><circle cx="898" cy="164" r="4"/><circle cx="676" cy="167" r="3"/><circle cx="385" cy="161" r="5"/><circle cx="227" cy="170" r="2"/><circle cx="180" cy="168" r="5"/><circle cx="363" cy="169" r="2"/><circle cx="290" cy="160" r="2"/><circle cx="161" cy="165" r="4"/><circle cx="575" cy="170" r="3"/><circle cx="550" cy="164" r="4"/><circle cx="571" cy="160" r="5"/><circle cx="54" cy="166" r="3"/><circle cx="526" cy="161" r="2"/><circle cx="882" cy="166" r="4"/><circle cx="259" cy="170" r="4"/><circle cx="613" cy="169" r="3"/><circle cx="623" cy="170" r="4"/><circle cx="335" cy="167" r="2"/><circle cx="549" cy="164" r="2"/><circle cx="218" cy="166" r="2"/><circle cx="361" cy="168" r="4"/><circle cx="574" cy="165" r="5"/><circle cx="775" cy="165" r="4"/><circle cx="549" cy="167" r="3"/><circle cx="664" cy="161" r="5"/><circle cx="722" cy="163" r="3"/><circle cx="365" cy="162" r="2"/><circle cx="476" cy="163" r="4"/><circle cx="256" cy="163" r="4"/><circle cx="737" cy="161" r="4"/><circle cx="445" cy="169" r="4"/><circle cx="953" cy="163" r="2"/><circle cx="65" cy="168" r="4"/><circle cx="612" cy="162" r="4"/><circle cx="656" cy="160" r="3"/><circle cx="352" cy="166" r="2"/><circle cx="23" cy="164" r="3"/><circle cx="485" cy="167" r="4"/><circle cx="709" cy="164" r="3"/><circle cx="895" cy="165" r="2"/><circle cx="308" cy="166" r="4"/><circle cx="278" cy="168" r="4"/><circle cx="478" cy="163" r="4"/><circle cx="719" cy="165" r="2"/><circle cx="199" cy="162" r="4"/><circle cx="531" cy="166" r="3"/><circle cx="121" cy="162" r="4"/><circle cx="405" cy="170" r="4"/><circle cx="151" cy="162" r="5"/><circle cx="109" cy="161" r="4"/><circle cx="602" cy="169" r="5"/><circle cx="494" cy="169" r="3"/><circle cx="343" cy="160" r="5"/><circle cx="113" cy="162" r="3"/><circle cx="522" cy="164" r="4"/><circle cx="29" cy="164" r="5"/><circle cx="117" cy="165" r="5"/><circle cx="895" cy="161" r="3"/><circle cx="670" cy="161" r="5"/><circle cx="451" cy="161" r="3"/><circle cx="473" cy="168" r="4"/><circle cx="565" cy="162" r="2"/><circle cx="385" cy="165" r="4"/><circle cx="247" cy="170" r="3"/><circle cx="293" cy="168" r="4"/><circle cx="807" cy="169" r="3"/><circle cx="536" cy="169" r="5"/><circle cx="673" cy="164" r="5"/><circle cx="563" cy="167" r="2"/><circle cx="13" cy="169" r="5"/><circle cx="776" cy="169" r="3"/><circle cx="948" cy="166" r="2"/><circle cx="633" cy="160" r="5"/><circle cx="946" cy="164" r="4"/><circle cx="236" cy="170" r="5"/><circle cx="381" cy="167" r="2"/><circle cx="709" cy="160" r="2"/><circle cx="513" cy="165" r="5"/><circle cx="669" cy="161" r="3"/><circle cx="426" cy="168" r="2"/><circle cx="605" cy="162" r="3"/><circle cx="589" cy="167" r="2"/><circle cx="414" cy="160" r="5"/><circle cx="254" cy="165" r="4"/><circle cx="708" cy="162" r="4"/><circle cx="484" cy="162" r="5"/><circle cx="176" cy="167" r="3"/><circle cx="533" cy="165" r="4"/><circle cx="856" cy="170" r="3"/><circle cx="761" cy="163" r="2"/></g><g fill="#486c3c"><circle cx="873" cy="170" r="3"/><circle cx="857" cy="164" r="3"/><circle cx="828" cy="168" r="2"/><circle cx="809" cy="161" r="3"/><circle cx="835" cy="161" r="4"/><circle cx="923" cy="168" r="4"/><circle cx="921" cy="162" r="2"/><circle cx="898" cy="169" r="2"/><circle cx="815" cy="161" r="4"/><circle cx="806" cy="166" r="3"/><circle cx="818" cy="167" r="4"/><circle cx="848" cy="167" r="5"/><circle cx="802" cy="168" r="4"/><circle cx="928" cy="164" r="3"/><circle cx="819" cy="168" r="4"/><circle cx="881" cy="169" r="4"/><circle cx="938" cy="167" r="5"/><circle cx="806" cy="161" r="4"/><circle cx="843" cy="168" r="3"/><circle cx="818" cy="165" r="4"/><circle cx="812" cy="163" r="4"/><circle cx="872" cy="166" r="4"/><circle cx="830" cy="165" r="4"/><circle cx="788" cy="164" r="2"/><circle cx="830" cy="165" r="3"/><circle cx="934" cy="169" r="3"/></g><g fill="#304830"><circle cx="1403" cy="166" r="3"/><circle cx="1322" cy="164" r="2"/><circle cx="991" cy="169" r="3"/><circle cx="1219" cy="161" r="2"/><circle cx="1031" cy="168" r="3"/><circle cx="1257" cy="164" r="4"/><circle cx="1348" cy="168" r="3"/><circle cx="967" cy="166" r="2"/><circle cx="1186" cy="164" r="4"/><circle cx="1212" cy="163" r="5"/><circle cx="1106" cy="164" r="2"/><circle cx="1294" cy="162" r="4"/><circle cx="1056" cy="167" r="3"/><circle cx="1107" cy="167" r="3"/><circle cx="1144" cy="165" r="2"/><circle cx="1147" cy="169" r="5"/><circle cx="1104" cy="168" r="3"/><circle cx="1363" cy="163" r="3"/><circle cx="1349" cy="164" r="2"/><circle cx="993" cy="170" r="3"/><circle cx="966" cy="160" r="5"/><circle cx="1172" cy="160" r="4"/><circle cx="1425" cy="167" r="4"/><circle cx="1411" cy="170" r="4"/><circle cx="1383" cy="169" r="5"/><circle cx="1321" cy="163" r="4"/><circle cx="1077" cy="164" r="3"/><circle cx="1350" cy="165" r="4"/><circle cx="1263" cy="163" r="5"/><circle cx="1084" cy="170" r="3"/><circle cx="1093" cy="163" r="3"/><circle cx="1257" cy="169" r="4"/><circle cx="1019" cy="167" r="3"/><circle cx="1011" cy="164" r="4"/><circle cx="1000" cy="167" r="3"/><circle cx="1039" cy="164" r="5"/><circle cx="1004" cy="162" r="2"/><circle cx="1412" cy="163" r="4"/><circle cx="1028" cy="162" r="3"/><circle cx="1316" cy="169" r="3"/><circle cx="1049" cy="165" r="3"/><circle cx="1038" cy="164" r="4"/><circle cx="1323" cy="165" r="4"/><circle cx="1071" cy="163" r="3"/><circle cx="1432" cy="168" r="2"/><circle cx="1067" cy="167" r="4"/><circle cx="1385" cy="163" r="3"/><circle cx="1336" cy="170" r="4"/><circle cx="1253" cy="169" r="5"/><circle cx="1281" cy="166" r="4"/><circle cx="1428" cy="167" r="2"/><circle cx="1125" cy="165" r="4"/><circle cx="1268" cy="166" r="3"/><circle cx="974" cy="169" r="4"/><circle cx="1369" cy="161" r="3"/><circle cx="1350" cy="168" r="3"/><circle cx="1135" cy="167" r="2"/><circle cx="1000" cy="169" r="3"/><circle cx="1311" cy="161" r="5"/><circle cx="1396" cy="169" r="4"/><circle cx="1276" cy="166" r="2"/><circle cx="1021" cy="161" r="2"/><circle cx="1004" cy="164" r="3"/><circle cx="1371" cy="161" r="4"/><circle cx="1344" cy="166" r="4"/><circle cx="1174" cy="169" r="3"/><circle cx="1423" cy="166" r="2"/><circle cx="1413" cy="167" r="5"/><circle cx="1129" cy="162" r="5"/><circle cx="1371" cy="161" r="4"/><circle cx="1275" cy="164" r="3"/><circle cx="1403" cy="167" r="4"/><circle cx="1244" cy="168" r="3"/></g><g fill="#486042"><circle cx="1234" cy="166" r="3"/><circle cx="1292" cy="162" r="4"/><circle cx="1375" cy="168" r="3"/><circle cx="1348" cy="168" r="4"/><circle cx="1256" cy="164" r="4"/><circle cx="1285" cy="169" r="3"/><circle cx="1365" cy="161" r="4"/><circle cx="1380" cy="161" r="3"/><circle cx="1250" cy="161" r="4"/><circle cx="1357" cy="161" r="3"/><circle cx="1270" cy="168" r="5"/><circle cx="1297" cy="162" r="4"/><circle cx="1284" cy="168" r="5"/><circle cx="1271" cy="164" r="3"/><circle cx="1371" cy="169" r="3"/><circle cx="1285" cy="161" r="2"/><circle cx="1352" cy="161" r="5"/><circle cx="1266" cy="163" r="4"/><circle cx="1244" cy="169" r="3"/><circle cx="1241" cy="166" r="2"/><circle cx="1384" cy="164" r="5"/><circle cx="1328" cy="162" r="5"/><circle cx="1272" cy="167" r="4"/></g><g fill="#487236"><circle cx="168" cy="166" r="5"/><circle cx="261" cy="167" r="5"/><circle cx="546" cy="160" r="4"/><circle cx="164" cy="163" r="2"/><circle cx="51" cy="163" r="4"/><circle cx="143" cy="167" r="3"/><circle cx="129" cy="164" r="4"/><circle cx="517" cy="170" r="3"/><circle cx="379" cy="161" r="3"/><circle cx="646" cy="169" r="4"/><circle cx="602" cy="169" r="4"/><circle cx="457" cy="167" r="3"/><circle cx="455" cy="167" r="5"/><circle cx="123" cy="161" r="2"/><circle cx="442" cy="161" r="5"/><circle cx="283" cy="169" r="2"/><circle cx="301" cy="162" r="5"/><circle cx="390" cy="165" r="5"/><circle cx="435" cy="167" r="3"/><circle cx="259" cy="161" r="2"/><circle cx="289" cy="170" r="4"/><circle cx="4" cy="160" r="4"/><circle cx="22" cy="160" r="4"/><circle cx="38" cy="167" r="3"/><circle cx="86" cy="163" r="3"/><circle cx="27" cy="168" r="3"/><circle cx="64" cy="169" r="2"/><circle cx="400" cy="166" r="2"/><circle cx="29" cy="161" r="3"/><circle cx="378" cy="170" r="3"/><circle cx="218" cy="169" r="4"/><circle cx="652" cy="168" r="5"/><circle cx="236" cy="169" r="3"/><circle cx="548" cy="169" r="4"/><circle cx="176" cy="165" r="5"/><circle cx="30" cy="168" r="3"/><circle cx="589" cy="170" r="2"/><circle cx="398" cy="163" r="2"/><circle cx="244" cy="166" r="3"/><circle cx="436" cy="168" r="3"/><circle cx="512" cy="168" r="3"/><circle cx="271" cy="169" r="5"/><circle cx="303" cy="168" r="3"/><circle cx="581" cy="160" r="2"/><circle cx="557" cy="166" r="3"/><circle cx="60" cy="168" r="3"/><circle cx="521" cy="162" r="5"/><circle cx="77" cy="160" r="4"/><circle cx="176" cy="168" r="2"/><circle cx="64" cy="160" r="5"/><circle cx="322" cy="161" r="4"/><circle cx="512" cy="165" r="4"/><circle cx="617" cy="169" r="3"/><circle cx="276" cy="167" r="4"/><circle cx="662" cy="163" r="2"/><circle cx="333" cy="168" r="3"/><circle cx="214" cy="161" r="2"/><circle cx="25" cy="161" r="5"/><circle cx="338" cy="168" r="4"/><circle cx="156" cy="165" r="5"/><circle cx="244" cy="166" r="5"/><circle cx="351" cy="162" r="4"/><circle cx="124" cy="167" r="5"/><circle cx="116" cy="161" r="4"/><circle cx="386" cy="170" r="2"/><circle cx="336" cy="166" r="4"/><circle cx="488" cy="163" r="3"/><circle cx="131" cy="164" r="3"/><circle cx="545" cy="167" r="3"/><circle cx="507" cy="162" r="4"/><circle cx="412" cy="163" r="3"/></g><g fill="#668a42"><circle cx="80" cy="164" r="3"/><circle cx="682" cy="168" r="5"/><circle cx="280" cy="164" r="3"/><circle cx="695" cy="164" r="4"/><circle cx="589" cy="168" r="4"/><circle cx="134" cy="163" r="3"/><circle cx="96" cy="169" r="5"/><circle cx="604" cy="166" r="3"/><circle cx="536" cy="167" r="4"/><circle cx="593" cy="163" r="3"/><circle cx="58" cy="165" r="4"/><circle cx="304" cy="162" r="3"/><circle cx="108" cy="161" r="4"/><circle cx="142" cy="164" r="3"/><circle cx="369" cy="165" r="4"/><circle cx="349" cy="163" r="2"/><circle cx="19" cy="167" r="2"/><circle cx="474" cy="164" r="4"/><circle cx="46" cy="167" r="4"/><circle cx="391" cy="170" r="2"/><circle cx="537" cy="161" r="2"/><circle cx="427" cy="169" r="2"/><circle cx="95" cy="166" r="4"/><circle cx="659" cy="163" r="3"/><circle cx="585" cy="169" r="3"/><circle cx="566" cy="166" r="3"/><circle cx="370" cy="169" r="2"/><circle cx="344" cy="166" r="4"/><circle cx="12" cy="167" r="4"/><circle cx="232" cy="161" r="4"/><circle cx="186" cy="161" r="3"/><circle cx="436" cy="160" r="5"/><circle cx="220" cy="169" r="5"/><circle cx="48" cy="161" r="3"/><circle cx="423" cy="167" r="5"/><circle cx="519" cy="164" r="4"/><circle cx="301" cy="167" r="4"/><circle cx="131" cy="163" r="5"/><circle cx="150" cy="168" r="2"/><circle cx="586" cy="169" r="2"/><circle cx="499" cy="161" r="3"/><circle cx="60" cy="161" r="4"/><circle cx="415" cy="170" r="5"/><circle cx="37" cy="170" r="5"/><circle cx="291" cy="161" r="4"/><circle cx="130" cy="168" r="3"/><circle cx="435" cy="165" r="5"/><circle cx="528" cy="165" r="2"/><circle cx="58" cy="166" r="3"/><circle cx="632" cy="164" r="2"/></g><g fill="#667860"><circle cx="1319" cy="166" r="4"/><circle cx="1227" cy="164" r="3"/><circle cx="1302" cy="164" r="3"/><circle cx="1257" cy="161" r="4"/><circle cx="1286" cy="169" r="5"/><circle cx="1334" cy="163" r="4"/><circle cx="1303" cy="163" r="3"/><circle cx="1220" cy="164" r="3"/><circle cx="1313" cy="170" r="3"/><circle cx="1219" cy="164" r="4"/><circle cx="1288" cy="167" r="3"/><circle cx="1223" cy="167" r="5"/></g><g fill="#667e5a"><circle cx="1093" cy="161" r="2"/><circle cx="1146" cy="162" r="4"/><circle cx="1191" cy="167" r="3"/><circle cx="1119" cy="168" r="3"/><circle cx="1130" cy="166" r="2"/><circle cx="1189" cy="164" r="4"/><circle cx="1167" cy="166" r="4"/><circle cx="1181" cy="161" r="3"/><circle cx="1171" cy="169" r="4"/></g><g fill="#486642"><circle cx="1142" cy="167" r="3"/><circle cx="1145" cy="162" r="2"/><circle cx="1133" cy="165" r="5"/><circle cx="1161" cy="168" r="4"/><circle cx="1230" cy="168" r="3"/><circle cx="1139" cy="170" r="3"/><circle cx="1119" cy="166" r="3"/><circle cx="1109" cy="163" r="3"/><circle cx="1195" cy="166" r="5"/><circle cx="1119" cy="161" r="2"/><circle cx="1157" cy="170" r="3"/><circle cx="1187" cy="162" r="3"/><circle cx="1120" cy="165" r="5"/><circle cx="1160" cy="168" r="4"/><circle cx="1150" cy="163" r="3"/><circle cx="1138" cy="170" r="3"/><circle cx="1228" cy="167" r="5"/><circle cx="1151" cy="161" r="5"/><circle cx="1129" cy="166" r="4"/></g><g fill="#48663c"><circle cx="1028" cy="162" r="3"/><circle cx="1032" cy="165" r="5"/><circle cx="1032" cy="162" r="3"/><circle cx="994" cy="167" r="3"/><circle cx="981" cy="169" r="3"/><circle cx="982" cy="161" r="5"/><circle cx="967" cy="165" r="4"/><circle cx="1034" cy="169" r="2"/><circle cx="993" cy="164" r="5"/><circle cx="1066" cy="166" r="3"/><circle cx="991" cy="164" r="3"/><circle cx="987" cy="166" r="4"/><circle cx="1007" cy="169" r="3"/><circle cx="979" cy="162" r="5"/><circle cx="1089" cy="161" r="5"/><circle cx="1059" cy="168" r="3"/><circle cx="1060" cy="166" r="5"/><circle cx="1058" cy="163" r="3"/><circle cx="1007" cy="162" r="4"/><circle cx="1022" cy="163" r="3"/><circle cx="1071" cy="167" r="3"/><circle cx="996" cy="163" r="5"/><circle cx="1088" cy="169" r="5"/></g><g fill="#486c36"><circle cx="693" cy="170" r="3"/><circle cx="769" cy="165" r="3"/><circle cx="725" cy="166" r="3"/><circle cx="769" cy="166" r="4"/><circle cx="780" cy="164" r="2"/><circle cx="698" cy="160" r="4"/><circle cx="709" cy="162" r="2"/><circle cx="695" cy="168" r="4"/><circle cx="689" cy="164" r="3"/><circle cx="708" cy="161" r="3"/><circle cx="769" cy="166" r="3"/><circle cx="694" cy="168" r="4"/><circle cx="775" cy="160" r="4"/></g><g fill="#66844e"><circle cx="947" cy="162" r="2"/><circle cx="947" cy="165" r="4"/><circle cx="921" cy="164" r="3"/><circle cx="942" cy="163" r="3"/><circle cx="949" cy="162" r="2"/><circle cx="839" cy="163" r="3"/><circle cx="859" cy="165" r="5"/><circle cx="935" cy="164" r="2"/></g><g fill="#667266"><circle cx="1430" cy="160" r="2"/></g><g fill="#667866"><circle cx="1354" cy="167" r="4"/><circle cx="1353" cy="162" r="4"/><circle cx="1357" cy="162" r="3"/><circle cx="1382" cy="166" r="3"/><circle cx="1393" cy="164" r="3"/><circle cx="1374" cy="169" r="4"/></g><g fill="#668448"><circle cx="753" cy="161" r="3"/><circle cx="799" cy="165" r="4"/><circle cx="754" cy="163" r="2"/><circle cx="771" cy="166" r="4"/></g><g fill="#668a48"><circle cx="706" cy="168" r="3"/><circle cx="733" cy="162" r="5"/><circle cx="717" cy="168" r="4"/><circle cx="702" cy="168" r="3"/><circle cx="705" cy="169" r="3"/></g><g fill="#667e54"><circle cx="1010" cy="169" r="3"/><circle cx="1020" cy="165" r="4"/><circle cx="1069" cy="164" r="4"/><circle cx="1000" cy="168" r="3"/><circle cx="1023" cy="162" r="5"/><circle cx="1082" cy="162" r="3"/><circle cx="1078" cy="165" r="3"/><circle cx="1038" cy="167" r="4"/><circle cx="1021" cy="168" r="4"/><circle cx="1019" cy="165" r="4"/><circle cx="1044" cy="165" r="4"/></g><g fill="#486048"><circle cx="1416" cy="165" r="2"/></g><g fill="#667e5a"><circle cx="1172" cy="178" r="4"/><circle cx="1184" cy="170" r="2"/><circle cx="1137" cy="171" r="2"/><circle cx="1108" cy="170" r="3"/><circle cx="1141" cy="178" r="2"/><circle cx="1121" cy="176" r="4"/><circle cx="1186" cy="175" r="3"/><circle cx="1186" cy="175" r="5"/></g><g fill="#66844e"><circle cx="876" cy="173" r="4"/><circle cx="886" cy="179" r="2"/><circle cx="865" cy="179" r="3"/><circle cx="904" cy="176" r="4"/><circle cx="933" cy="172" r="4"/><circle cx="893" cy="170" r="4"/><circle cx="839" cy="175" r="2"/><circle cx="911" cy="179" r="3"/><circle cx="881" cy="178" r="4"/></g><g fill="#487236"><circle cx="537" cy="173" r="2"/><circle cx="542" cy="178" r="2"/><circle cx="404" cy="170" r="3"/><circle cx="327" cy="172" r="3"/><circle cx="282" cy="173" r="4"/><circle cx="624" cy="177" r="4"/><circle cx="124" cy="178" r="2"/><circle cx="459" cy="175" r="3"/><circle cx="445" cy="171" r="2"/><circle cx="3" cy="179" r="5"/><circle cx="71" cy="179" r="4"/><circle cx="665" cy="172" r="5"/><circle cx="174" cy="177" r="3"/><circle cx="578" cy="177" r="4"/><circle cx="223" cy="180" r="3"/><circle cx="400" cy="177" r="3"/><circle cx="660" cy="179" r="5"/><circle cx="213" cy="173" r="4"/><circle cx="547" cy="177" r="2"/><circle cx="57" cy="175" r="2"/><circle cx="54" cy="172" r="3"/><circle cx="636" cy="171" r="2"/><circle cx="524" cy="178" r="4"/><circle cx="449" cy="175" r="3"/><circle cx="267" cy="173" r="2"/><circle cx="322" cy="174" r="2"/><circle cx="80" cy="175" r="4"/><circle cx="421" cy="172" r="3"/><circle cx="536" cy="177" r="4"/><circle cx="510" cy="179" r="3"/><circle cx="608" cy="174" r="4"/><circle cx="317" cy="176" r="5"/><circle cx="548" cy="170" r="3"/><circle cx="105" cy="172" r="5"/><circle cx="12" cy="179" r="2"/><circle cx="120" cy="177" r="3"/><circle cx="656" cy="178" r="3"/><circle cx="186" cy="179" r="4"/><circle cx="195" cy="179" r="4"/><circle cx="389" cy="179" r="2"/><circle cx="86" cy="176" r="3"/><circle cx="450" cy="171" r="3"/><circle cx="411" cy="171" r="5"/><circle cx="30" cy="178" r="4"/><circle cx="97" cy="177" r="3"/><circle cx="454" cy="177" r="3"/><circle cx="64" cy="173" r="3"/><circle cx="428" cy="177" r="4"/><circle cx="437" cy="175" r="3"/><circle cx="548" cy="178" r="4"/><circle cx="329" cy="177" r="3"/><circle cx="590" cy="174" r="4"/><circle cx="45" cy="178" r="2"/><circle cx="414" cy="176" r="2"/><circle cx="151" cy="179" r="4"/><circle cx="427" cy="179" r="5"/><circle cx="506" cy="172" r="5"/><circle cx="483" cy="175" r="3"/><circle cx="82" cy="177" r="3"/><circle cx="479" cy="176" r="3"/><circle cx="252" cy="174" r="4"/><circle cx="571" cy="180" r="2"/><circle cx="150" cy="178" r="3"/><circle cx="128" cy="170" r="4"/><circle cx="567" cy="176" r="4"/><circle cx="333" cy="177" r="4"/><circle cx="256" cy="178" r="3"/><circle cx="64" cy="172" r="3"/><circle cx="14" cy="177" r="2"/><circle cx="520" cy="178" r="4"/><circle cx="332" cy="174" r="4"/><circle cx="640" cy="176" r="4"/><circle cx="517" cy="175" r="3"/><circle cx="47" cy="179" r="4"/><circle cx="533" cy="171" r="2"/><circle cx="423" cy="176" r="2"/><circle cx="597" cy="179" r="2"/></g><g fill="#304830"><circle cx="1028" cy="170" r="3"/><circle cx="1280" cy="179" r="3"/><circle cx="981" cy="177" r="2"/><circle cx="1405" cy="175" r="3"/><circle cx="1148" cy="177" r="2"/><circle cx="1364" cy="173" r="3"/><circle cx="1066" cy="172" r="5"/><circle cx="979" cy="176" r="2"/><circle cx="1176" cy="177" r="3"/><circle cx="1440" cy="178" r="4"/><circle cx="1160" cy="178" r="5"/><circle cx="1047" cy="176" r="2"/><circle cx="1327" cy="171" r="2"/><circle cx="959" cy="178" r="2"/><circle cx="1080" cy="179" r="4"/><circle cx="1107" cy="171" r="2"/><circle cx="1082" cy="177" r="3"/><circle cx="1420" cy="179" r="3"/><circle cx="1051" cy="173" r="5"/><circle cx="1116" cy="173" r="2"/><circle cx="1149" cy="176" r="3"/><circle cx="1150" cy="178" r="2"/><circle cx="1391" cy="173" r="2"/><circle cx="1302" cy="170" r="4"/><circle cx="1337" cy="176" r="4"/><circle cx="1226" cy="172" r="4"/><circle cx="1402" cy="174" r="3"/><circle cx="1020" cy="176" r="3"/><circle cx="1316" cy="173" r="3"/><circle cx="1133" cy="173" r="4"/><circle cx="1394" cy="174" r="5"/><circle cx="1058" cy="171" r="4"/><circle cx="1033" cy="170" r="2"/><circle cx="1432" cy="180" r="2"/><circle cx="1339" cy="172" r="4"/><circle cx="1183" cy="179" r="3"/><circle cx="1175" cy="178" r="3"/><circle cx="1003" cy="171" r="3"/><circle cx="1051" cy="177" r="2"/><circle cx="1157" cy="176" r="3"/><circle cx="1211" cy="173" r="5"/><circle cx="1290" cy="175" r="3"/><circle cx="1124" cy="175" r="3"/><circle cx="1185" cy="179" r="4"/><circle cx="1304" cy="178" r="3"/><circle cx="1138" cy="174" r="4"/><circle cx="1381" cy="179" r="5"/><circle cx="1212" cy="173" r="2"/><circle cx="1312" cy="176" r="2"/><circle cx="973" cy="173" r="3"/><circle cx="1362" cy="171" r="5"/><circle cx="1219" cy="175" r="2"/><circle cx="1285" cy="180" r="4"/><circle cx="1209" cy="170" r="3"/><circle cx="1155" cy="175" r="3"/><circle cx="1381" cy="177" r="3"/><circle cx="1065" cy="177" r="4"/><circle cx="957" cy="178" r="2"/><circle cx="1084" cy="179" r="3"/><circle cx="1379" cy="170" r="3"/><circle cx="1000" cy="174" r="5"/><circle cx="1185" cy="172" r="3"/><circle cx="1156" cy="178" r="3"/><circle cx="1245" cy="172" r="3"/><circle cx="1418" cy="175" r="5"/><circle cx="1352" cy="173" r="5"/><circle cx="1367" cy="170" r="2"/><circle cx="1265" cy="174" r="2"/><circle cx="1171" cy="172" r="3"/><circle cx="1091" cy="173" r="4"/><circle cx="1349" cy="173" r="4"/><circle cx="1213" cy="180" r="4"/><circle cx="1044" cy="178" r="4"/><circle cx="1292" cy="178" r="3"/><circle cx="1219" cy="180" r="4"/></g><g fill="#30482a"><circle cx="878" cy="173" r="2"/><circle cx="770" cy="174" r="4"/><circle cx="852" cy="179" r="3"/><circle cx="164" cy="179" r="4"/><circle cx="479" cy="177" r="3"/><circle cx="306" cy="177" r="2"/><circle cx="412" cy="176" r="5"/><circle cx="444" cy="176" r="4"/><circle cx="158" cy="177" r="3"/><circle cx="653" cy="172" r="3"/><circle cx="753" cy="171" r="4"/><circle cx="131" cy="173" r="3"/><circle cx="773" cy="173" r="3"/><circle cx="550" cy="174" r="5"/><circle cx="934" cy="172" r="3"/><circle cx="230" cy="178" r="4"/><circle cx="945" cy="175" r="5"/><circle cx="213" cy="177" r="2"/><circle cx="508" cy="174" r="3"/><circle cx="52" cy="173" r="3"/><circle cx="81" cy="178" r="4"/><circle cx="933" cy="172" r="4"/><circle cx="898" cy="175" r="4"/><circle cx="812" cy="180" r="2"/><circle cx="5" cy="178" r="3"/><circle cx="97" cy="173" r="4"/><circle cx="317" cy="175" r="3"/><circle cx="164" cy="175" r="5"/><circle cx="817" cy="170" r="5"/><circle cx="844" cy="172" r="5"/><circle cx="282" cy="177" r="3"/><circle cx="788" cy="173" r="3"/><circle cx="31" cy="173" r="4"/><circle cx="781" cy="180" r="2"/><circle cx="716" cy="178" r="4"/><circle cx="595" cy="170" r="5"/><circle cx="341" cy="175" r="3"/><circle cx="18" cy="179" r="3"/><circle cx="343" cy="177" r="5"/><circle cx="600" cy="170" r="3"/><circle cx="797" cy="176" r="4"/><circle cx="947" cy="176" r="3"/><circle cx="412" cy="173" r="3"/><circle cx="557" cy="171" r="3"/><circle cx="486" cy="174" r="3"/><circle cx="769" cy="176" r="4"/><circle cx="53" cy="179" r="2"/><circle cx="585" cy="171" r="2"/><circle cx="20" cy="174" r="5"/><circle cx="12" cy="171" r="4"/><circle cx="387" cy="176" r="4"/><circle cx="866" cy="179" r="5"/><circle cx="201" cy="180" r="4"/><circle cx="302" cy="173" r="4"/><circle cx="11" cy="175" r="4"/><circle cx="463" cy="174" r="5"/><circle cx="877" cy="173" r="5"/><circle cx="587" cy="170" r="3"/><circle cx="938" cy="177" r="4"/><circle cx="395" cy="175" r="4"/><circle cx="119" cy="172" r="5"/><circle cx="353" cy="176" r="4"/><circle cx="198" cy="176" r="3"/><circle cx="68" cy="174" r="5"/><circle cx="644" cy="178" r="5"/><circle cx="522" cy="179" r="3"/><circle cx="385" cy="175" r="5"/><circle cx="401" cy="175" r="3"/><circle cx="107" cy="179" r="2"/><circle cx="343" cy="178" r="5"/><circle cx="867" cy="179" r="4"/><circle cx="240" cy="175" r="3"/><circle cx="542" cy="172" r="3"/><circle cx="51" cy="170" r="3"/><circle cx="462" cy="180" r="3"/><circle cx="67" cy="177" r="5"/><circle cx="645" cy="171" r="5"/><circle cx="344" cy="173" r="5"/><circle cx="364" cy="172" r="5"/><circle cx="757" cy="171" r="5"/><circle cx="412" cy="180" r="4"/><circle cx="772" cy="179" r="4"/><circle cx="655" cy="178" r="5"/><circle cx="477" cy="173" r="4"/><circle cx="925" cy="170" r="3"/><circle cx="167" cy="174" r="4"/><circle cx="696" cy="177" r="3"/><circle cx="198" cy="177" r="2"/><circle cx="187" cy="172" r="4"/><circle cx="941" cy="178" r="3"/><circle cx="795" cy="177" r="2"/><circle cx="281" cy="180" r="5"/><circle cx="653" cy="176" r="4"/><circle cx="467" cy="179" r="4"/><circle cx="864" cy="172" r="5"/><circle cx="883" cy="171" r="3"/><circle cx="125" cy="171" r="2"/><circle cx="10" cy="175" r="4"/><circle cx="74" cy="172" r="4"/><circle cx="720" cy="178" r="4"/><circle cx="611" cy="171" r="4"/><circle cx="615" cy="176" r="3"/><circle cx="418" cy="175" r="3"/><circle cx="712" cy="172" r="2"/><circle cx="445" cy="175" r="3"/><circle cx="336" cy="175" r="4"/><circle cx="122" cy="179" r="5"/><circle cx="229" cy="176" r="2"/><circle cx="403" cy="171" r="4"/><circle cx="746" cy="172" r="5"/><circle cx="853" cy="174" r="2"/><circle cx="341" cy="173" r="5"/><circle cx="557" cy="171" r="4"/><circle cx="187" cy="178" r="2"/><circle cx="373" cy="171" r="3"/></g><g fill="#667860"><circle cx="1267" cy="170" r="2"/><circle cx="1241" cy="172" r="2"/><circle cx="1264" cy="175" r="2"/><circle cx="1293" cy="170" r="5"/><circle cx="1227" cy="171" r="5"/><circle cx="1247" cy="177" r="5"/><circle cx="1280" cy="174" r="3"/></g><g fill="#486c3c"><circle cx="929" cy="176" r="3"/><circle cx="866" cy="172" r="3"/><circle cx="890" cy="175" r="4"/><circle cx="883" cy="176" r="5"/><circle cx="858" cy="173" r="2"/><circle cx="934" cy="180" r="5"/><circle cx="930" cy="171" r="3"/><circle cx="880" cy="180" r="4"/><circle cx="901" cy="173" r="4"/><circle cx="949" cy="180" r="4"/><circle cx="798" cy="178" r="4"/><circle cx="888" cy="177" r="2"/><circle cx="805" cy="176" r="4"/><circle cx="824" cy="175" r="3"/><circle cx="914" cy="172" r="5"/><circle cx="840" cy="175" r="2"/><circle cx="878" cy="178" r="3"/><circle cx="863" cy="178" r="3"/><circle cx="860" cy="180" r="3"/><circle cx="933" cy="174" r="4"/><circle cx="902" cy="178" r="5"/><circle cx="882" cy="172" r="3"/></g><g fill="#48663c"><circle cx="976" cy="170" r="2"/><circle cx="953" cy="174" r="2"/><circle cx="1041" cy="175" r="4"/><circle cx="1056" cy="175" r="2"/><circle cx="952" cy="180" r="5"/><circle cx="995" cy="179" r="5"/><circle cx="979" cy="174" r="3"/><circle cx="974" cy="172" r="5"/><circle cx="982" cy="177" r="2"/><circle cx="1084" cy="175" r="2"/><circle cx="1070" cy="179" r="2"/><circle cx="1010" cy="180" r="3"/><circle cx="976" cy="175" r="3"/><circle cx="1093" cy="178" r="4"/><circle cx="984" cy="174" r="3"/><circle cx="1074" cy="171" r="3"/><circle cx="1007" cy="175" r="3"/><circle cx="1037" cy="170" r="4"/><circle cx="1075" cy="177" r="4"/></g><g fill="#668a42"><circle cx="572" cy="172" r="5"/><circle cx="576" cy="175" r="5"/><circle cx="79" cy="176" r="2"/><circle cx="597" cy="175" r="2"/><circle cx="300" cy="180" r="5"/><circle cx="23" cy="173" r="3"/><circle cx="588" cy="176" r="2"/><circle cx="297" cy="179" r="5"/><circle cx="436" cy="179" r="4"/><circle cx="552" cy="180" r="3"/><circle cx="211" cy="173" r="3"/><circle cx="696" cy="180" r="4"/><circle cx="635" cy="178" r="2"/><circle cx="161" cy="178" r="4"/><circle cx="93" cy="177" r="2"/><circle cx="106" cy="174" r="4"/><circle cx="127" cy="177" r="4"/><circle cx="525" cy="171" r="4"/><circle cx="402" cy="179" r="4"/><circle cx="126" cy="171" r="3"/><circle cx="123" cy="179" r="5"/><circle cx="90" cy="174" r="3"/><circle cx="228" cy="178" r="2"/><circle cx="169" cy="171" r="3"/><circle cx="231" cy="180" r="4"/><circle cx="172" cy="174" r="3"/><circle cx="521" cy="178" r="4"/><circle cx="549" cy="178" r="4"/><circle cx="418" cy="179" r="3"/><circle cx="139" cy="174" r="5"/><circle cx="501" cy="173" r="3"/><circle cx="274" cy="170" r="3"/><circle cx="523" cy="178" r="2"/><circle cx="477" cy="174" r="4"/><circle cx="11" cy="172" r="4"/><circle cx="113" cy="171" r="4"/><circle cx="339" cy="173" r="3"/><circle cx="270" cy="177" r="3"/><circle cx="127" cy="173" r="4"/><circle cx="688" cy="179" r="4"/><circle cx="309" cy="178" r="5"/><circle cx="277" cy="171" r="3"/><circle cx="670" cy="178" r="4"/><circle cx="698" cy="178" r="3"/><circle cx="480" cy="174" r="4"/><circle cx="554" cy="173" r="3"/><circle cx="675" cy="176" r="3"/><circle cx="584" cy="173" r="2"/><circle cx="584" cy="177" r="4"/><circle cx="367" cy="170" r="3"/><circle cx="71" cy="178" r="3"/><circle cx="257" cy="174" r="4"/><circle cx="700" cy="174" r="5"/></g><g fill="#486042"><circle cx="1313" cy="170" r="3"/><circle cx="1247" cy="177" r="5"/><circle cx="1242" cy="174" r="3"/><circle cx="1323" cy="172" r="3"/><circle cx="1301" cy="173" r="5"/><circle cx="1380" cy="177" r="2"/><circle cx="1410" cy="173" r="5"/><circle cx="1296" cy="171" r="3"/><circle cx="1397" cy="173" r="2"/><circle cx="1246" cy="177" r="2"/><circle cx="1298" cy="176" r="4"/><circle cx="1352" cy="178" r="4"/><circle cx="1378" cy="172" r="4"/><circle cx="1248" cy="171" r="2"/><circle cx="1278" cy="174" r="4"/><circle cx="1259" cy="176" r="2"/><circle cx="1372" cy="172" r="4"/><circle cx="1390" cy="178" r="4"/><circle cx="1356" cy="175" r="4"/><circle cx="1405" cy="172" r="4"/><circle cx="1346" cy="175" r="2"/><circle cx="1278" cy="172" r="4"/><circle cx="1352" cy="177" r="4"/><circle cx="1404" cy="176" r="4"/><circle cx="1275" cy="175" r="4"/><circle cx="1255" cy="177" r="4"/><circle cx="1259" cy="180" r="3"/><circle cx="1401" cy="175" r="5"/><circle cx="1316" cy="173" r="5"/><circle cx="1280" cy="179" r="4"/><circle cx="1328" cy="176" r="4"/><circle cx="1368" cy="179" r="4"/><circle cx="1277" cy="173" r="3"/></g><g fill="#486642"><circle cx="1203" cy="174" r="4"/><circle cx="1106" cy="176" r="4"/><circle cx="1178" cy="171" r="4"/><circle cx="1118" cy="170" r="2"/><circle cx="1211" cy="170" r="2"/><circle cx="1122" cy="174" r="5"/><circle cx="1183" cy="174" r="5"/><circle cx="1127" cy="170" r="3"/><circle cx="1142" cy="175" r="3"/><circle cx="1103" cy="174" r="3"/><circle cx="1098" cy="175" r="4"/><circle cx="1159" cy="174" r="5"/><circle cx="1175" cy="170" r="4"/><circle cx="1191" cy="177" r="4"/><circle cx="1157" cy="172" r="4"/><circle cx="1195" cy="178" r="3"/><circle cx="1099" cy="174" r="3"/></g><g fill="#486c36"><circle cx="692" cy="174" r="4"/><circle cx="712" cy="175" r="4"/><circle cx="693" cy="175" r="5"/><circle cx="716" cy="175" r="3"/><circle cx="772" cy="171" r="4"/><circle cx="774" cy="171" r="5"/><circle cx="748" cy="172" r="4"/><circle cx="688" cy="173" r="2"/><circle cx="764" cy="171" r="5"/><circle cx="777" cy="174" r="5"/><circle cx="741" cy="178" r="3"/><circle cx="697" cy="172" r="5"/><circle cx="745" cy="176" r="2"/></g><g fill="#668a48"><circle cx="727" cy="176" r="2"/><circle cx="703" cy="176" r="4"/><circle cx="732" cy="175" r="3"/><circle cx="729" cy="175" r="3"/></g><g fill="#667e54"><circle cx="976" cy="179" r="2"/><circle cx="1084" cy="174" r="4"/><circle cx="1022" cy="179" r="2"/><circle cx="1065" cy="178" r="4"/><circle cx="970" cy="176" r="2"/><circle cx="999" cy="179" r="3"/><circle cx="990" cy="179" r="4"/><circle cx="1004" cy="174" r="3"/></g><g fill="#667866"><circle cx="1365" cy="173" r="3"/><circle cx="1408" cy="171" r="4"/></g><g fill="#486048"><circle cx="1416" cy="173" r="4"/><circle cx="1420" cy="177" r="2"/><circle cx="1420" cy="172" r="2"/></g><g fill="#667266"><circle cx="1436" cy="177" r="4"/></g><g fill="#66785a"><circle cx="1196" cy="175" r="3"/><circle cx="1198" cy="176" r="2"/><circle cx="1210" cy="174" r="4"/></g><g fill="#668448"><circle cx="811" cy="177" r="2"/><circle cx="815" cy="174" r="2"/><circle cx="750" cy="177" r="3"/></g><g fill="#487236"><circle cx="283" cy="189" r="2"/><circle cx="424" cy="187" r="3"/><circle cx="388" cy="189" r="5"/><circle cx="140" cy="181" r="2"/><circle cx="288" cy="187" r="5"/><circle cx="369" cy="187" r="4"/><circle cx="171" cy="180" r="5"/><circle cx="112" cy="188" r="4"/><circle cx="23" cy="185" r="3"/><circle cx="23" cy="186" r="3"/><circle cx="354" cy="184" r="3"/><circle cx="349" cy="185" r="4"/><circle cx="172" cy="185" r="2"/><circle cx="68" cy="186" r="2"/><circle cx="236" cy="185" r="3"/><circle cx="466" cy="189" r="4"/><circle cx="546" cy="188" r="3"/><circle cx="255" cy="182" r="3"/><circle cx="103" cy="181" r="5"/><circle cx="396" cy="188" r="4"/><circle cx="430" cy="186" r="4"/><circle cx="308" cy="181" r="2"/><circle cx="254" cy="183" r="2"/><circle cx="578" cy="182" r="3"/><circle cx="358" cy="181" r="5"/><circle cx="293" cy="180" r="5"/><circle cx="267" cy="189" r="4"/><circle cx="498" cy="185" r="4"/><circle cx="310" cy="188" r="4"/><circle cx="292" cy="180" r="3"/><circle cx="661" cy="188" r="5"/><circle cx="5" cy="181" r="4"/><circle cx="211" cy="180" r="2"/><circle cx="419" cy="187" r="4"/><circle cx="207" cy="182" r="3"/><circle cx="97" cy="188" r="3"/><circle cx="1" cy="182" r="3"/><circle cx="399" cy="189" r="5"/><circle cx="238" cy="182" r="4"/><circle cx="60" cy="181" r="4"/><circle cx="120" cy="185" r="4"/><circle cx="26" cy="180" r="2"/><circle cx="240" cy="183" r="3"/><circle cx="367" cy="189" r="2"/><circle cx="69" cy="182" r="3"/><circle cx="73" cy="184" r="4"/><circle cx="654" cy="183" r="3"/><circle cx="429" cy="188" r="5"/><circle cx="435" cy="184" r="2"/><circle cx="135" cy="182" r="4"/><circle cx="208" cy="186" r="3"/><circle cx="197" cy="180" r="2"/><circle cx="26" cy="182" r="3"/><circle cx="120" cy="187" r="5"/><circle cx="153" cy="185" r="2"/><circle cx="442" cy="182" r="3"/><circle cx="357" cy="181" r="5"/><circle cx="1" cy="181" r="3"/><circle cx="2" cy="190" r="3"/><circle cx="633" cy="184" r="2"/><circle cx="476" cy="190" r="5"/><circle cx="225" cy="186" r="4"/><circle cx="220" cy="188" r="2"/><circle cx="232" cy="187" r="2"/><circle cx="237" cy="189" r="4"/><circle cx="72" cy="188" r="4"/><circle cx="429" cy="184" r="3"/><circle cx="467" cy="189" r="4"/><circle cx="11" cy="186" r="5"/><circle cx="365" cy="180" r="3"/><circle cx="482" cy="182" r="3"/><circle cx="630" cy="183" r="2"/><circle cx="324" cy="183" r="4"/><circle cx="250" cy="184" r="3"/><circle cx="407" cy="189" r="5"/><circle cx="282" cy="187" r="2"/></g><g fill="#30482a"><circle cx="865" cy="188" r="4"/><circle cx="701" cy="181" r="2"/><circle cx="524" cy="189" r="3"/><circle cx="330" cy="183" r="3"/><circle cx="321" cy="189" r="4"/><circle cx="936" cy="185" r="3"/><circle cx="296" cy="189" r="4"/><circle cx="720" cy="183" r="4"/><circle cx="899" cy="187" r="4"/><circle cx="819" cy="181" r="5"/><circle cx="363" cy="188" r="4"/><circle cx="801" cy="183" r="3"/><circle cx="755" cy="187" r="3"/><circle cx="774" cy="180" r="2"/><circle cx="425" cy="183" r="3"/><circle cx="108" cy="189" r="3"/><circle cx="878" cy="189" r="5"/><circle cx="63" cy="186" r="2"/><circle cx="666" cy="188" r="4"/><circle cx="809" cy="184" r="4"/><circle cx="407" cy="181" r="3"/><circle cx="285" cy="181" r="3"/><circle cx="375" cy="180" r="3"/><circle cx="172" cy="188" r="4"/><circle cx="313" cy="183" r="4"/><circle cx="108" cy="184" r="5"/><circle cx="812" cy="190" r="4"/><circle cx="122" cy="188" r="3"/><circle cx="495" cy="188" r="3"/><circle cx="940" cy="183" r="3"/><circle cx="720" cy="185" r="4"/><circle cx="476" cy="187" r="4"/><circle cx="164" cy="185" r="3"/><circle cx="732" cy="184" r="2"/><circle cx="412" cy="182" r="3"/><circle cx="59" cy="189" r="4"/><circle cx="796" cy="189" r="5"/><circle cx="413" cy="186" r="2"/><circle cx="264" cy="181" r="4"/><circle cx="205" cy="187" r="3"/><circle cx="606" cy="182" r="4"/><circle cx="204" cy="184" r="3"/><circle cx="788" cy="186" r="3"/><circle cx="476" cy="182" r="3"/><circle cx="17" cy="182" r="5"/><circle cx="445" cy="186" r="4"/><circle cx="698" cy="190" r="4"/><circle cx="576" cy="188" r="4"/><circle cx="760" cy="182" r="3"/><circle cx="311" cy="186" r="2"/><circle cx="443" cy="190" r="3"/><circle cx="148" cy="189" r="3"/><circle cx="44" cy="188" r="3"/><circle cx="924" cy="181" r="3"/><circle cx="538" cy="182" r="3"/><circle cx="384" cy="189" r="5"/><circle cx="954" cy="186" r="4"/><circle cx="147" cy="185" r="3"/><circle cx="409" cy="182" r="4"/><circle cx="167" cy="181" r="3"/><circle cx="661" cy="186" r="4"/><circle cx="176" cy="185" r="2"/><circle cx="678" cy="186" r="3"/><circle cx="448" cy="184" r="4"/><circle cx="785" cy="183" r="4"/><circle cx="902" cy="181" r="3"/><circle cx="293" cy="189" r="4"/><circle cx="773" cy="190" r="3"/><circle cx="403" cy="188" r="3"/><circle cx="848" cy="181" r="4"/><circle cx="819" cy="181" r="2"/><circle cx="912" cy="184" r="3"/><circle cx="735" cy="180" r="2"/><circle cx="407" cy="182" r="3"/><circle cx="180" cy="181" r="4"/><circle cx="924" cy="187" r="2"/><circle cx="603" cy="182" r="4"/><circle cx="647" cy="186" r="2"/><circle cx="361" cy="186" r="4"/><circle cx="504" cy="187" r="4"/><circle cx="286" cy="185" r="4"/><circle cx="244" cy="182" r="3"/><circle cx="870" cy="187" r="3"/><circle cx="418" cy="183" r="2"/><circle cx="524" cy="181" r="2"/><circle cx="918" cy="187" r="3"/><circle cx="404" cy="188" r="2"/><circle cx="650" cy="181" r="4"/><circle cx="864" cy="183" r="5"/><circle cx="177" cy="188" r="4"/><circle cx="607" cy="187" r="3"/><circle cx="129" cy="190" r="4"/><circle cx="84" cy="189" r="2"/><circle cx="359" cy="183" r="3"/><circle cx="757" cy="183" r="4"/><circle cx="780" cy="187" r="2"/><circle cx="735" cy="185" r="4"/><circle cx="39" cy="187" r="2"/><circle cx="521" cy="184" r="5"/><circle cx="337" cy="189" r="2"/><circle cx="145" cy="184" r="2"/><circle cx="934" cy="183" r="4"/><circle cx="402" cy="188" r="4"/><circle cx="394" cy="185" r="5"/><circle cx="261" cy="189" r="2"/><circle cx="443" cy="181" r="3"/><circle cx="747" cy="189" r="4"/><circle cx="914" cy="188" r="4"/><circle cx="108" cy="181" r="4"/><circle cx="277" cy="184" r="4"/><circle cx="933" cy="184" r="4"/><circle cx="780" cy="186" r="4"/><circle cx="308" cy="186" r="4"/><circle cx="17" cy="183" r="4"/><circle cx="281" cy="185" r="3"/><circle cx="260" cy="182" r="5"/><circle cx="375" cy="184" r="4"/><circle cx="425" cy="182" r="2"/><circle cx="33" cy="189" r="2"/><circle cx="596" cy="183" r="3"/><circle cx="873" cy="185" r="3"/><circle cx="636" cy="180" r="2"/></g><g fill="#486642"><circle cx="1213" cy="188" r="2"/><circle cx="1172" cy="188" r="2"/><circle cx="1209" cy="183" r="3"/><circle cx="1134" cy="182" r="4"/><circle cx="1129" cy="187" r="5"/><circle cx="1127" cy="189" r="3"/><circle cx="1192" cy="184" r="3"/><circle cx="1123" cy="190" r="2"/><circle cx="1108" cy="181" r="4"/><circle cx="1206" cy="183" r="2"/><circle cx="1145" cy="184" r="3"/><circle cx="1193" cy="185" r="4"/><circle cx="1146" cy="180" r="3"/><circle cx="1188" cy="183" r="2"/><circle cx="1214" cy="183" r="4"/><circle cx="1108" cy="184" r="4"/><circle cx="1117" cy="189" r="5"/><circle cx="1140" cy="185" r="3"/><circle cx="1099" cy="185" r="4"/></g><g fill="#48663c"><circle cx="1023" cy="181" r="5"/><circle cx="954" cy="182" r="3"/><circle cx="988" cy="190" r="5"/><circle cx="999" cy="181" r="3"/><circle cx="1043" cy="186" r="5"/><circle cx="1002" cy="183" r="4"/><circle cx="1029" cy="184" r="2"/><circle cx="1072" cy="186" r="5"/><circle cx="952" cy="181" r="2"/><circle cx="1028" cy="190" r="2"/><circle cx="1087" cy="187" r="4"/><circle cx="991" cy="190" r="3"/><circle cx="1025" cy="186" r="2"/><circle cx="984" cy="188" r="3"/><circle cx="999" cy="187" r="3"/><circle cx="1031" cy="186" r="5"/><circle cx="993" cy="185" r="2"/><circle cx="1093" cy="180" r="4"/><circle cx="1054" cy="188" r="3"/></g><g fill="#304830"><circle cx="1349" cy="189" r="4"/><circle cx="1128" cy="180" r="3"/><circle cx="1151" cy="189" r="5"/><circle cx="1274" cy="182" r="4"/><circle cx="1304" cy="187" r="2"/><circle cx="1040" cy="183" r="4"/><circle cx="1116" cy="182" r="3"/><circle cx="965" cy="181" r="4"/><circle cx="1031" cy="190" r="2"/><circle cx="1104" cy="180" r="4"/><circle cx="1063" cy="182" r="3"/><circle cx="1354" cy="188" r="4"/><circle cx="1197" cy="182" r="2"/><circle cx="1202" cy="184" r="5"/><circle cx="1100" cy="187" r="4"/><circle cx="1213" cy="180" r="4"/><circle cx="1263" cy="185" r="2"/><circle cx="1050" cy="183" r="4"/><circle cx="1196" cy="185" r="3"/><circle cx="1414" cy="187" r="4"/><circle cx="1353" cy="188" r="3"/><circle cx="1006" cy="180" r="2"/><circle cx="1133" cy="184" r="2"/><circle cx="1333" cy="183" r="3"/><circle cx="1298" cy="180" r="4"/><circle cx="973" cy="186" r="3"/><circle cx="1003" cy="189" r="3"/><circle cx="1425" cy="187" r="5"/><circle cx="1163" cy="188" r="4"/><circle cx="1401" cy="184" r="4"/><circle cx="1403" cy="189" r="3"/><circle cx="1418" cy="184" r="3"/><circle cx="1088" cy="182" r="4"/><circle cx="1408" cy="182" r="3"/><circle cx="1275" cy="185" r="3"/><circle cx="1210" cy="187" r="3"/><circle cx="1144" cy="187" r="4"/><circle cx="1294" cy="184" r="2"/><circle cx="1419" cy="184" r="4"/><circle cx="1056" cy="183" r="2"/><circle cx="1143" cy="188" r="3"/><circle cx="957" cy="181" r="3"/><circle cx="1036" cy="187" r="5"/><circle cx="1047" cy="188" r="4"/><circle cx="1050" cy="184" r="2"/><circle cx="1431" cy="184" r="2"/><circle cx="1168" cy="184" r="2"/><circle cx="1012" cy="181" r="2"/><circle cx="1312" cy="180" r="3"/><circle cx="1273" cy="180" r="3"/><circle cx="1159" cy="188" r="4"/></g><g fill="#486c3c"><circle cx="842" cy="181" r="3"/><circle cx="919" cy="187" r="5"/><circle cx="843" cy="187" r="3"/><circle cx="844" cy="189" r="2"/><circle cx="798" cy="185" r="5"/><circle cx="914" cy="188" r="3"/><circle cx="910" cy="181" r="5"/><circle cx="796" cy="184" r="3"/><circle cx="869" cy="186" r="2"/><circle cx="869" cy="188" r="3"/><circle cx="865" cy="184" r="5"/><circle cx="883" cy="187" r="3"/><circle cx="919" cy="190" r="4"/><circle cx="869" cy="183" r="4"/><circle cx="784" cy="181" r="2"/><circle cx="838" cy="185" r="5"/></g><g fill="#486042"><circle cx="1302" cy="180" r="4"/><circle cx="1365" cy="184" r="3"/><circle cx="1378" cy="180" r="3"/><circle cx="1302" cy="181" r="3"/><circle cx="1301" cy="188" r="4"/><circle cx="1309" cy="186" r="2"/><circle cx="1411" cy="184" r="3"/><circle cx="1390" cy="183" r="3"/><circle cx="1345" cy="189" r="2"/><circle cx="1239" cy="180" r="5"/><circle cx="1373" cy="188" r="4"/><circle cx="1388" cy="187" r="5"/><circle cx="1314" cy="188" r="3"/><circle cx="1318" cy="182" r="3"/><circle cx="1399" cy="183" r="5"/><circle cx="1264" cy="188" r="3"/><circle cx="1280" cy="186" r="4"/><circle cx="1250" cy="183" r="4"/><circle cx="1305" cy="190" r="5"/><circle cx="1389" cy="185" r="5"/><circle cx="1366" cy="189" r="5"/><circle cx="1372" cy="188" r="3"/><circle cx="1354" cy="187" r="2"/><circle cx="1402" cy="187" r="4"/><circle cx="1371" cy="181" r="3"/><circle cx="1400" cy="183" r="2"/><circle cx="1314" cy="189" r="4"/><circle cx="1282" cy="186" r="2"/></g><g fill="#668a48"><circle cx="731" cy="183" r="5"/><circle cx="735" cy="187" r="4"/><circle cx="735" cy="183" r="4"/><circle cx="724" cy="182" r="2"/></g><g fill="#486048"><circle cx="1421" cy="189" r="3"/><circle cx="1431" cy="184" r="4"/><circle cx="1439" cy="185" r="2"/><circle cx="1437" cy="186" r="4"/><circle cx="1420" cy="189" r="3"/><circle cx="1425" cy="183" r="4"/><circle cx="1432" cy="186" r="5"/></g><g fill="#667860"><circle cx="1222" cy="187" r="2"/><circle cx="1240" cy="181" r="5"/><circle cx="1332" cy="183" r="4"/><circle cx="1292" cy="182" r="3"/><circle cx="1273" cy="187" r="3"/><circle cx="1231" cy="182" r="3"/><circle cx="1324" cy="183" r="5"/></g><g fill="#668a42"><circle cx="424" cy="183" r="4"/><circle cx="16" cy="182" r="2"/><circle cx="467" cy="181" r="4"/><circle cx="436" cy="188" r="5"/><circle cx="473" cy="186" r="2"/><circle cx="246" cy="187" r="5"/><circle cx="226" cy="187" r="4"/><circle cx="203" cy="180" r="2"/><circle cx="581" cy="186" r="2"/><circle cx="614" cy="184" r="4"/><circle cx="65" cy="182" r="5"/><circle cx="385" cy="183" r="2"/><circle cx="671" cy="184" r="3"/><circle cx="626" cy="183" r="5"/><circle cx="446" cy="180" r="3"/><circle cx="332" cy="189" r="3"/><circle cx="311" cy="185" r="3"/><circle cx="266" cy="186" r="2"/><circle cx="4" cy="182" r="3"/><circle cx="565" cy="183" r="2"/><circle cx="345" cy="186" r="3"/><circle cx="547" cy="189" r="3"/><circle cx="425" cy="182" r="2"/><circle cx="508" cy="182" r="3"/><circle cx="167" cy="187" r="3"/><circle cx="590" cy="182" r="5"/><circle cx="661" cy="184" r="4"/><circle cx="141" cy="186" r="4"/><circle cx="290" cy="189" r="5"/><circle cx="34" cy="180" r="5"/><circle cx="529" cy="190" r="2"/></g><g fill="#667e5a"><circle cx="1165" cy="182" r="4"/><circle cx="1157" cy="190" r="4"/><circle cx="1188" cy="188" r="4"/></g><g fill="#668448"><circle cx="826" cy="182" r="3"/><circle cx="782" cy="180" r="3"/><circle cx="805" cy="189" r="4"/><circle cx="781" cy="188" r="3"/><circle cx="783" cy="180" r="3"/><circle cx="744" cy="187" r="4"/><circle cx="753" cy="183" r="3"/><circle cx="778" cy="183" r="5"/></g><g fill="#66844e"><circle cx="893" cy="182" r="2"/><circle cx="902" cy="189" r="3"/><circle cx="927" cy="182" r="3"/><circle cx="861" cy="183" r="3"/><circle cx="918" cy="187" r="2"/><circle cx="943" cy="186" r="4"/><circle cx="859" cy="182" r="4"/></g><g fill="#667266"><circle cx="1425" cy="186" r="3"/><circle cx="1425" cy="190" r="2"/></g><g fill="#667e54"><circle cx="1085" cy="187" r="3"/><circle cx="977" cy="188" r="2"/><circle cx="1011" cy="185" r="3"/><circle cx="1043" cy="186" r="3"/></g><g fill="#667866"><circle cx="1401" cy="186" r="2"/><circle cx="1351" cy="181" r="5"/></g><g fill="#66785a"><circle cx="1198" cy="184" r="2"/></g><g fill="#486c36"><circle cx="698" cy="187" r="4"/><circle cx="754" cy="188" r="2"/><circle cx="774" cy="183" r="2"/><circle cx="706" cy="182" r="3"/><circle cx="769" cy="188" r="3"/></g><g fill="#668a42"><circle cx="90" cy="200" r="4"/><circle cx="232" cy="194" r="5"/><circle cx="370" cy="197" r="2"/><circle cx="659" cy="196" r="4"/><circle cx="154" cy="199" r="5"/><circle cx="266" cy="195" r="4"/><circle cx="660" cy="195" r="3"/><circle cx="627" cy="196" r="3"/><circle cx="650" cy="197" r="4"/><circle cx="668" cy="196" r="5"/><circle cx="362" cy="195" r="4"/><circle cx="663" cy="191" r="3"/><circle cx="30" cy="192" r="5"/><circle cx="299" cy="196" r="3"/><circle cx="90" cy="199" r="5"/><circle cx="294" cy="191" r="3"/><circle cx="468" cy="195" r="4"/><circle cx="639" cy="195" r="4"/><circle cx="356" cy="199" r="2"/><circle cx="360" cy="191" r="4"/><circle cx="651" cy="198" r="4"/><circle cx="424" cy="199" r="5"/><circle cx="530" cy="198" r="3"/><circle cx="21" cy="196" r="3"/><circle cx="473" cy="193" r="3"/><circle cx="129" cy="190" r="3"/><circle cx="698" cy="195" r="4"/><circle cx="396" cy="198" r="5"/><circle cx="339" cy="192" r="4"/><circle cx="367" cy="197" r="4"/><circle cx="99" cy="200" r="5"/><circle cx="399" cy="199" r="5"/><circle cx="439" cy="198" r="4"/><circle cx="649" cy="191" r="3"/><circle cx="578" cy="197" r="4"/><circle cx="641" cy="191" r="4"/><circle cx="17" cy="194" r="3"/><circle cx="309" cy="193" r="5"/></g><g fill="#30482a"><circle cx="54" cy="199" r="4"/><circle cx="113" cy="199" r="2"/><circle cx="408" cy="197" r="5"/><circle cx="112" cy="195" r="4"/><circle cx="635" cy="192" r="4"/><circle cx="894" cy="198" r="5"/><circle cx="218" cy="200" r="4"/><circle cx="268" cy="198" r="4"/><circle cx="534" cy="191" r="3"/><circle cx="609" cy="192" r="3"/><circle cx="466" cy="195" r="2"/><circle cx="284" cy="196" r="5"/><circle cx="319" cy="192" r="4"/><circle cx="400" cy="199" r="2"/><circle cx="69" cy="194" r="3"/><circle cx="744" cy="196" r="5"/><circle cx="295" cy="196" r="4"/><circle cx="259" cy="199" r="2"/><circle cx="757" cy="200" r="4"/><circle cx="608" cy="194" r="4"/><circle cx="805" cy="199" r="4"/><circle cx="711" cy="191" r="4"/><circle cx="348" cy="194" r="3"/><circle cx="300" cy="194" r="4"/><circle cx="799" cy="194" r="4"/><circle cx="517" cy="198" r="3"/><circle cx="327" cy="196" r="4"/><circle cx="45" cy="193" r="3"/><circle cx="616" cy="199" r="3"/><circle cx="378" cy="197" r="2"/><circle cx="379" cy="192" r="3"/><circle cx="195" cy="197" r="3"/><circle cx="851" cy="193" r="3"/><circle cx="883" cy="195" r="3"/><circle cx="666" cy="200" r="4"/><circle cx="755" cy="194" r="3"/><circle cx="874" cy="193" r="2"/><circle cx="696" cy="190" r="5"/><circle cx="524" cy="195" r="4"/><circle cx="338" cy="190" r="4"/><circle cx="522" cy="196" r="3"/><circle cx="613" cy="192" r="4"/><circle cx="490" cy="196" r="2"/><circle cx="128" cy="197" r="5"/><circle cx="592" cy="192" r="3"/><circle cx="59" cy="199" r="3"/><circle cx="801" cy="197" r="3"/><circle cx="891" cy="194" r="2"/><circle cx="126" cy="191" r="3"/><circle cx="401" cy="194" r="5"/><circle cx="442" cy="192" r="3"/><circle cx="820" cy="199" r="3"/><circle cx="245" cy="191" r="3"/><circle cx="766" cy="192" r="3"/><circle cx="757" cy="191" r="3"/><circle cx="369" cy="191" r="3"/><circle cx="245" cy="196" r="4"/><circle cx="483" cy="195" r="4"/><circle cx="225" cy="190" r="3"/><circle cx="660" cy="198" r="3"/><circle cx="212" cy="199" r="4"/><circle cx="721" cy="196" r="3"/><circle cx="601" cy="194" r="3"/><circle cx="275" cy="195" r="4"/><circle cx="936" cy="194" r="4"/><circle cx="915" cy="191" r="5"/><circle cx="149" cy="193" r="4"/><circle cx="16" cy="194" r="5"/><circle cx="232" cy="199" r="2"/><circle cx="894" cy="200" r="4"/><circle cx="415" cy="191" r="3"/><circle cx="868" cy="195" r="4"/><circle cx="550" cy="190" r="4"/><circle cx="778" cy="199" r="4"/><circle cx="35" cy="190" r="3"/><circle cx="880" cy="194" r="3"/><circle cx="602" cy="198" r="5"/><circle cx="786" cy="194" r="3"/><circle cx="353" cy="200" r="3"/><circle cx="583" cy="196" r="4"/><circle cx="117" cy="195" r="3"/><circle cx="348" cy="196" r="3"/><circle cx="676" cy="197" r="3"/><circle cx="202" cy="193" r="4"/><circle cx="865" cy="195" r="4"/><circle cx="727" cy="195" r="4"/><circle cx="883" cy="193" r="4"/><circle cx="912" cy="196" r="4"/><circle cx="568" cy="192" r="4"/><circle cx="294" cy="196" r="4"/><circle cx="637" cy="200" r="5"/><circle cx="565" cy="192" r="3"/><circle cx="322" cy="190" r="3"/><circle cx="154" cy="196" r="5"/><circle cx="338" cy="198" r="3"/><circle cx="526" cy="194" r="2"/><circle cx="719" cy="198" r="2"/><circle cx="249" cy="193" r="5"/><circle cx="814" cy="194" r="3"/><circle cx="680" cy="198" r="4"/><circle cx="276" cy="196" r="3"/><circle cx="210" cy="198" r="4"/><circle cx="222" cy="199" r="3"/><circle cx="612" cy="191" r="4"/><circle cx="482" cy="192" r="3"/><circle cx="947" cy="192" r="5"/><circle cx="253" cy="199" r="3"/><circle cx="710" cy="198" r="3"/><circle cx="399" cy="200" r="3"/><circle cx="362" cy="191" r="2"/></g><g fill="#304830"><circle cx="969" cy="195" r="3"/><circle cx="1193" cy="195" r="2"/><circle cx="1194" cy="196" r="3"/><circle cx="1081" cy="192" r="2"/><circle cx="1296" cy="194" r="4"/><circle cx="1356" cy="200" r="4"/><circle cx="1253" cy="198" r="4"/><circle cx="1423" cy="198" r="4"/><circle cx="1073" cy="195" r="3"/><circle cx="1161" cy="191" r="3"/><circle cx="1076" cy="197" r="2"/><circle cx="1247" cy="199" r="2"/><circle cx="979" cy="196" r="4"/><circle cx="1124" cy="195" r="4"/><circle cx="1168" cy="197" r="5"/><circle cx="1089" cy="191" r="3"/><circle cx="1243" cy="197" r="4"/><circle cx="1186" cy="191" r="3"/><circle cx="1260" cy="195" r="3"/><circle cx="1064" cy="193" r="4"/><circle cx="1278" cy="191" r="3"/><circle cx="1318" cy="194" r="4"/><circle cx="1075" cy="195" r="4"/><circle cx="1094" cy="195" r="4"/><circle cx="1430" cy="200" r="4"/><circle cx="1225" cy="195" r="3"/><circle cx="1095" cy="197" r="3"/><circle cx="1241" cy="195" r="4"/><circle cx="1117" cy="197" r="2"/><circle cx="1307" cy="196" r="5"/><circle cx="967" cy="197" r="3"/><circle cx="997" cy="195" r="4"/><circle cx="1257" cy="196" r="4"/><circle cx="1062" cy="196" r="4"/><circle cx="1017" cy="191" r="2"/><circle cx="1405" cy="198" r="3"/><circle cx="1421" cy="191" r="4"/><circle cx="1043" cy="192" r="4"/><circle cx="1134" cy="193" r="5"/><circle cx="1334" cy="198" r="3"/><circle cx="1031" cy="198" r="2"/><circle cx="1103" cy="195" r="3"/><circle cx="1316" cy="197" r="2"/><circle cx="1349" cy="193" r="4"/><circle cx="1109" cy="194" r="4"/><circle cx="1038" cy="193" r="2"/><circle cx="1162" cy="191" r="3"/><circle cx="1188" cy="197" r="3"/><circle cx="1412" cy="197" r="3"/><circle cx="1430" cy="196" r="3"/><circle cx="1016" cy="200" r="5"/><circle cx="1311" cy="200" r="4"/><circle cx="957" cy="196" r="3"/><circle cx="1373" cy="194" r="3"/><circle cx="1369" cy="200" r="4"/><circle cx="1044" cy="194" r="4"/><circle cx="1245" cy="192" r="5"/><circle cx="1424" cy="192" r="3"/><circle cx="1432" cy="196" r="3"/><circle cx="1348" cy="194" r="5"/><circle cx="1176" cy="196" r="2"/><circle cx="989" cy="199" r="3"/><circle cx="1422" cy="200" r="3"/><circle cx="1089" cy="190" r="3"/><circle cx="1218" cy="191" r="3"/><circle cx="1112" cy="198" r="4"/><circle cx="1215" cy="194" r="4"/></g><g fill="#486042"><circle cx="1354" cy="194" r="3"/><circle cx="1360" cy="198" r="4"/><circle cx="1293" cy="194" r="2"/><circle cx="1394" cy="191" r="5"/><circle cx="1348" cy="192" r="4"/><circle cx="1318" cy="194" r="5"/><circle cx="1247" cy="195" r="4"/><circle cx="1304" cy="198" r="4"/><circle cx="1305" cy="198" r="3"/><circle cx="1333" cy="196" r="2"/><circle cx="1255" cy="192" r="4"/><circle cx="1384" cy="194" r="3"/><circle cx="1330" cy="196" r="4"/><circle cx="1264" cy="195" r="3"/><circle cx="1299" cy="190" r="4"/><circle cx="1247" cy="192" r="5"/><circle cx="1278" cy="194" r="3"/><circle cx="1334" cy="195" r="4"/><circle cx="1272" cy="197" r="4"/><circle cx="1376" cy="200" r="5"/><circle cx="1405" cy="199" r="5"/><circle cx="1358" cy="197" r="3"/><circle cx="1402" cy="198" r="3"/></g><g fill="#487236"><circle cx="362" cy="199" r="4"/><circle cx="498" cy="194" r="4"/><circle cx="639" cy="191" r="3"/><circle cx="591" cy="196" r="2"/><circle cx="146" cy="197" r="4"/><circle cx="637" cy="195" r="3"/><circle cx="112" cy="190" r="4"/><circle cx="617" cy="198" r="5"/><circle cx="84" cy="195" r="4"/><circle cx="340" cy="193" r="4"/><circle cx="497" cy="198" r="3"/><circle cx="201" cy="193" r="3"/><circle cx="523" cy="196" r="5"/><circle cx="70" cy="200" r="3"/><circle cx="344" cy="192" r="4"/><circle cx="146" cy="191" r="4"/><circle cx="380" cy="192" r="3"/><circle cx="593" cy="198" r="4"/><circle cx="477" cy="193" r="5"/><circle cx="420" cy="194" r="5"/><circle cx="253" cy="197" r="3"/><circle cx="519" cy="194" r="2"/><circle cx="370" cy="192" r="4"/><circle cx="469" cy="193" r="5"/><circle cx="333" cy="197" r="4"/><circle cx="620" cy="190" r="4"/><circle cx="221" cy="193" r="5"/><circle cx="48" cy="192" r="4"/><circle cx="98" cy="191" r="4"/><circle cx="179" cy="192" r="4"/><circle cx="671" cy="192" r="2"/><circle cx="663" cy="194" r="3"/><circle cx="46" cy="195" r="2"/><circle cx="369" cy="196" r="4"/><circle cx="121" cy="196" r="4"/><circle cx="532" cy="197" r="4"/><circle cx="242" cy="197" r="4"/><circle cx="669" cy="193" r="5"/><circle cx="200" cy="196" r="4"/><circle cx="634" cy="191" r="3"/><circle cx="240" cy="199" r="3"/><circle cx="67" cy="192" r="2"/><circle cx="637" cy="190" r="2"/><circle cx="143" cy="197" r="5"/><circle cx="122" cy="197" r="4"/><circle cx="562" cy="197" r="3"/><circle cx="374" cy="199" r="2"/><circle cx="213" cy="195" r="4"/><circle cx="460" cy="194" r="4"/><circle cx="225" cy="196" r="4"/><circle cx="457" cy="192" r="2"/><circle cx="628" cy="195" r="5"/><circle cx="663" cy="191" r="4"/><circle cx="108" cy="199" r="4"/><circle cx="573" cy="196" r="5"/><circle cx="248" cy="191" r="2"/><circle cx="527" cy="195" r="3"/><circle cx="272" cy="198" r="2"/><circle cx="283" cy="199" r="5"/><circle cx="553" cy="198" r="3"/><circle cx="417" cy="191" r="4"/><circle cx="236" cy="198" r="4"/><circle cx="302" cy="191" r="3"/><circle cx="427" cy="192" r="5"/><circle cx="224" cy="199" r="3"/><circle cx="471" cy="194" r="4"/><circle cx="175" cy="198" r="3"/><circle cx="52" cy="190" r="4"/><circle cx="571" cy="196" r="5"/><circle cx="423" cy="197" r="4"/><circle cx="224" cy="194" r="5"/><circle cx="576" cy="193" r="5"/><circle cx="400" cy="190" r="3"/><circle cx="51" cy="198" r="4"/><circle cx="341" cy="191" r="5"/><circle cx="520" cy="196" r="3"/><circle cx="522" cy="190" r="3"/><circle cx="169" cy="198" r="3"/><circle cx="655" cy="191" r="3"/><circle cx="322" cy="198" r="4"/><circle cx="477" cy="190" r="4"/><circle cx="368" cy="190" r="2"/><circle cx="177" cy="196" r="3"/><circle cx="169" cy="191" r="3"/><circle cx="587" cy="195" r="2"/></g><g fill="#486642"><circle cx="1164" cy="195" r="4"/><circle cx="1222" cy="199" r="5"/><circle cx="1146" cy="196" r="3"/><circle cx="1228" cy="190" r="3"/><circle cx="1123" cy="190" r="4"/><circle cx="1109" cy="197" r="3"/><circle cx="1199" cy="191" r="4"/><circle cx="1216" cy="200" r="2"/><circle cx="1128" cy="195" r="3"/><circle cx="1119" cy="199" r="4"/><circle cx="1108" cy="196" r="3"/><circle cx="1183" cy="195" r="5"/><circle cx="1224" cy="193" r="5"/><circle cx="1214" cy="190" r="2"/><circle cx="1113" cy="194" r="5"/><circle cx="1115" cy="191" r="5"/><circle cx="1172" cy="191" r="4"/></g><g fill="#486c36"><circle cx="687" cy="198" r="4"/><circle cx="715" cy="198" r="3"/><circle cx="699" cy="197" r="2"/><circle cx="749" cy="197" r="3"/><circle cx="740" cy="192" r="4"/><circle cx="688" cy="194" r="5"/><circle cx="738" cy="197" r="4"/><circle cx="691" cy="191" r="3"/><circle cx="769" cy="195" r="5"/><circle cx="747" cy="191" r="3"/><circle cx="737" cy="197" r="4"/><circle cx="731" cy="192" r="5"/><circle cx="753" cy="197" r="4"/><circle cx="681" cy="196" r="5"/><circle cx="758" cy="196" r="2"/><circle cx="757" cy="196" r="4"/><circle cx="766" cy="193" r="4"/></g><g fill="#48663c"><circle cx="1044" cy="193" r="5"/><circle cx="1085" cy="193" r="3"/><circle cx="1039" cy="191" r="4"/><circle cx="1086" cy="191" r="4"/><circle cx="952" cy="193" r="2"/><circle cx="988" cy="198" r="3"/><circle cx="1038" cy="195" r="5"/><circle cx="1061" cy="192" r="4"/><circle cx="953" cy="197" r="2"/><circle cx="1094" cy="193" r="3"/><circle cx="1096" cy="195" r="4"/><circle cx="1062" cy="197" r="5"/><circle cx="975" cy="195" r="4"/><circle cx="1063" cy="197" r="3"/><circle cx="1044" cy="198" r="3"/><circle cx="1091" cy="197" r="4"/></g><g fill="#668448"><circle cx="773" cy="198" r="4"/><circle cx="784" cy="192" r="4"/><circle cx="766" cy="198" r="5"/><circle cx="800" cy="192" r="2"/><circle cx="806" cy="193" r="4"/><circle cx="808" cy="190" r="3"/></g><g fill="#66844e"><circle cx="901" cy="194" r="3"/><circle cx="869" cy="195" r="2"/><circle cx="907" cy="198" r="2"/><circle cx="957" cy="196" r="3"/><circle cx="869" cy="193" r="4"/><circle cx="878" cy="198" r="5"/><circle cx="853" cy="198" r="3"/><circle cx="833" cy="197" r="3"/><circle cx="898" cy="195" r="3"/><circle cx="872" cy="191" r="5"/><circle cx="943" cy="192" r="5"/></g><g fill="#667866"><circle cx="1360" cy="199" r="4"/><circle cx="1382" cy="191" r="4"/><circle cx="1356" cy="192" r="5"/></g><g fill="#667860"><circle cx="1242" cy="196" r="3"/><circle cx="1286" cy="198" r="3"/><circle cx="1226" cy="195" r="3"/><circle cx="1234" cy="196" r="4"/><circle cx="1305" cy="190" r="4"/><circle cx="1295" cy="193" r="3"/><circle cx="1264" cy="195" r="3"/><circle cx="1329" cy="190" r="4"/></g><g fill="#667e54"><circle cx="1069" cy="195" r="3"/><circle cx="1070" cy="192" r="5"/><circle cx="971" cy="197" r="4"/><circle cx="984" cy="194" r="2"/><circle cx="1020" cy="194" r="3"/><circle cx="1034" cy="198" r="5"/></g><g fill="#667e5a"><circle cx="1168" cy="197" r="3"/><circle cx="1158" cy="195" r="4"/><circle cx="1183" cy="191" r="3"/><circle cx="1128" cy="196" r="2"/><circle cx="1148" cy="199" r="4"/><circle cx="1158" cy="191" r="5"/></g><g fill="#486048"><circle cx="1433" cy="196" r="2"/><circle cx="1435" cy="199" r="2"/></g><g fill="#668a48"><circle cx="721" cy="196" r="2"/><circle cx="730" cy="191" r="3"/></g><g fill="#486c3c"><circle cx="917" cy="194" r="5"/><circle cx="794" cy="198" r="5"/><circle cx="821" cy="194" r="5"/><circle cx="943" cy="190" r="3"/><circle cx="941" cy="192" r="4"/><circle cx="846" cy="199" r="3"/><circle cx="854" cy="192" r="2"/><circle cx="835" cy="198" r="4"/><circle cx="922" cy="196" r="5"/><circle cx="881" cy="200" r="2"/><circle cx="842" cy="196" r="3"/></g><g fill="#66785a"><circle cx="1196" cy="193" r="2"/></g><g fill="#667266"><circle cx="1436" cy="191" r="2"/></g><g fill="#30482a"><circle cx="518" cy="210" r="3"/><circle cx="754" cy="202" r="3"/><circle cx="467" cy="201" r="2"/><circle cx="371" cy="200" r="5"/><circle cx="20" cy="203" r="3"/><circle cx="189" cy="209" r="3"/><circle cx="186" cy="203" r="5"/><circle cx="178" cy="203" r="4"/><circle cx="203" cy="201" r="3"/><circle cx="661" cy="209" r="3"/><circle cx="162" cy="201" r="4"/><circle cx="341" cy="203" r="3"/><circle cx="246" cy="205" r="5"/><circle cx="401" cy="206" r="3"/><circle cx="897" cy="208" r="5"/><circle cx="302" cy="205" r="4"/><circle cx="915" cy="205" r="4"/><circle cx="248" cy="208" r="3"/><circle cx="588" cy="209" r="3"/><circle cx="795" cy="205" r="4"/><circle cx="575" cy="208" r="2"/><circle cx="388" cy="201" r="4"/><circle cx="746" cy="201" r="5"/><circle cx="737" cy="201" r="3"/><circle cx="648" cy="210" r="4"/><circle cx="24" cy="202" r="4"/><circle cx="699" cy="203" r="3"/><circle cx="413" cy="205" r="5"/><circle cx="490" cy="208" r="4"/><circle cx="394" cy="205" r="5"/><circle cx="69" cy="207" r="3"/><circle cx="789" cy="204" r="4"/><circle cx="127" cy="205" r="3"/><circle cx="824" cy="200" r="3"/><circle cx="841" cy="203" r="3"/><circle cx="156" cy="200" r="3"/><circle cx="101" cy="209" r="2"/><circle cx="292" cy="206" r="5"/><circle cx="784" cy="201" r="2"/><circle cx="781" cy="208" r="4"/><circle cx="19" cy="203" r="2"/><circle cx="151" cy="208" r="2"/><circle cx="376" cy="201" r="3"/><circle cx="502" cy="207" r="3"/><circle cx="287" cy="204" r="2"/><circle cx="915" cy="201" r="4"/><circle cx="552" cy="205" r="2"/><circle cx="833" cy="209" r="4"/><circle cx="236" cy="209" r="3"/><circle cx="286" cy="205" r="5"/><circle cx="70" cy="210" r="4"/><circle cx="872" cy="201" r="3"/><circle cx="531" cy="206" r="3"/><circle cx="641" cy="204" r="3"/><circle cx="611" cy="207" r="4"/><circle cx="659" cy="205" r="4"/><circle cx="883" cy="203" r="3"/><circle cx="418" cy="202" r="5"/><circle cx="877" cy="205" r="4"/><circle cx="136" cy="200" r="4"/><circle cx="639" cy="201" r="4"/><circle cx="869" cy="207" r="3"/><circle cx="512" cy="203" r="4"/><circle cx="231" cy="209" r="2"/><circle cx="340" cy="207" r="5"/><circle cx="318" cy="202" r="4"/><circle cx="447" cy="203" r="4"/><circle cx="843" cy="209" r="3"/><circle cx="650" cy="205" r="4"/><circle cx="884" cy="201" r="5"/><circle cx="576" cy="201" r="4"/><circle cx="75" cy="208" r="3"/><circle cx="633" cy="201" r="4"/><circle cx="152" cy="203" r="3"/><circle cx="954" cy="203" r="3"/><circle cx="513" cy="208" r="4"/><circle cx="932" cy="201" r="4"/><circle cx="664" cy="207" r="4"/><circle cx="833" cy="209" r="3"/><circle cx="373" cy="201" r="3"/><circle cx="668" cy="208" r="3"/><circle cx="398" cy="205" r="3"/><circle cx="607" cy="208" r="3"/><circle cx="946" cy="205" r="4"/><circle cx="845" cy="207" r="4"/><circle cx="820" cy="202" r="4"/><circle cx="365" cy="202" r="3"/><circle cx="129" cy="205" r="4"/><circle cx="864" cy="209" r="4"/><circle cx="582" cy="208" r="2"/><circle cx="861" cy="203" r="2"/><circle cx="829" cy="201" r="3"/><circle cx="31" cy="201" r="5"/><circle cx="442" cy="205" r="2"/><circle cx="743" cy="207" r="4"/><circle cx="73" cy="200" r="3"/><circle cx="273" cy="202" r="4"/><circle cx="297" cy="206" r="2"/><circle cx="878" cy="208" r="3"/><circle cx="667" cy="203" r="3"/><circle cx="308" cy="200" r="4"/><circle cx="903" cy="209" r="5"/><circle cx="352" cy="202" r="3"/><circle cx="344" cy="202" r="3"/><circle cx="755" cy="207" r="3"/><circle cx="674" cy="208" r="2"/><circle cx="907" cy="203" r="3"/><circle cx="665" cy="204" r="4"/><circle cx="491" cy="206" r="3"/><circle cx="895" cy="202" r="3"/><circle cx="391" cy="205" r="3"/><circle cx="359" cy="209" r="3"/><circle cx="854" cy="200" r="2"/><circle cx="683" cy="201" r="3"/><circle cx="279" cy="201" r="3"/><circle cx="678" cy="202" r="2"/><circle cx="209" cy="201" r="3"/><circle cx="170" cy="200" r="4"/><circle cx="578" cy="209" r="3"/><circle cx="221" cy="202" r="5"/></g><g fill="#668a42"><circle cx="560" cy="203" r="4"/><circle cx="347" cy="208" r="3"/><circle cx="669" cy="201" r="3"/><circle cx="436" cy="208" r="5"/><circle cx="293" cy="208" r="2"/><circle cx="175" cy="205" r="5"/><circle cx="495" cy="203" r="4"/><circle cx="504" cy="209" r="4"/><circle cx="53" cy="208" r="2"/><circle cx="358" cy="205" r="4"/><circle cx="287" cy="207" r="4"/><circle cx="159" cy="208" r="5"/><circle cx="433" cy="207" r="2"/><circle cx="144" cy="201" r="3"/><circle cx="311" cy="205" r="2"/><circle cx="490" cy="201" r="5"/><circle cx="690" cy="206" r="4"/><circle cx="174" cy="201" r="3"/><circle cx="609" cy="201" r="3"/><circle cx="360" cy="209" r="2"/><circle cx="55" cy="205" r="5"/><circle cx="508" cy="203" r="4"/><circle cx="539" cy="206" r="3"/><circle cx="471" cy="210" r="3"/><circle cx="476" cy="206" r="4"/><circle cx="345" cy="206" r="5"/><circle cx="446" cy="208" r="4"/><circle cx="471" cy="207" r="4"/><circle cx="136" cy="206" r="3"/><circle cx="382" cy="203" r="2"/><circle cx="331" cy="206" r="4"/><circle cx="434" cy="210" r="4"/><circle cx="452" cy="200" r="3"/><circle cx="491" cy="201" r="5"/><circle cx="439" cy="210" r="3"/><circle cx="429" cy="204" r="4"/><circle cx="640" cy="209" r="3"/><circle cx="181" cy="202" r="3"/><circle cx="213" cy="206" r="3"/><circle cx="178" cy="202" r="4"/><circle cx="59" cy="203" r="3"/><circle cx="3" cy="205" r="4"/><circle cx="385" cy="205" r="4"/><circle cx="297" cy="202" r="4"/><circle cx="667" cy="206" r="3"/><circle cx="183" cy="209" r="2"/><circle cx="419" cy="206" r="3"/><circle cx="180" cy="202" r="4"/><circle cx="272" cy="206" r="4"/><circle cx="326" cy="209" r="3"/></g><g fill="#486642"><circle cx="1148" cy="207" r="3"/><circle cx="1219" cy="209" r="2"/><circle cx="1136" cy="203" r="3"/><circle cx="1158" cy="204" r="5"/><circle cx="1208" cy="206" r="3"/><circle cx="1111" cy="210" r="2"/><circle cx="1114" cy="205" r="2"/><circle cx="1202" cy="201" r="4"/><circle cx="1211" cy="207" r="2"/><circle cx="1106" cy="200" r="2"/><circle cx="1108" cy="209" r="3"/><circle cx="1116" cy="202" r="3"/><circle cx="1107" cy="206" r="2"/><circle cx="1176" cy="205" r="4"/><circle cx="1117" cy="205" r="4"/><circle cx="1193" cy="203" r="2"/><circle cx="1194" cy="203" r="4"/><circle cx="1196" cy="203" r="3"/><circle cx="1141" cy="210" r="4"/></g><g fill="#486042"><circle cx="1394" cy="202" r="4"/><circle cx="1309" cy="202" r="3"/><circle cx="1382" cy="204" r="3"/><circle cx="1240" cy="201" r="5"/><circle cx="1258" cy="205" r="3"/><circle cx="1240" cy="208" r="4"/><circle cx="1341" cy="206" r="3"/><circle cx="1292" cy="201" r="5"/><circle cx="1357" cy="204" r="4"/><circle cx="1277" cy="208" r="4"/><circle cx="1339" cy="204" r="3"/><circle cx="1232" cy="206" r="3"/><circle cx="1349" cy="209" r="5"/><circle cx="1265" cy="204" r="4"/><circle cx="1356" cy="206" r="5"/><circle cx="1396" cy="210" r="3"/><circle cx="1405" cy="204" r="5"/><circle cx="1344" cy="201" r="3"/><circle cx="1387" cy="205" r="4"/><circle cx="1232" cy="204" r="4"/><circle cx="1287" cy="208" r="3"/><circle cx="1332" cy="205" r="3"/><circle cx="1333" cy="206" r="4"/><circle cx="1369" cy="208" r="5"/></g><g fill="#487236"><circle cx="250" cy="203" r="5"/><circle cx="27" cy="202" r="2"/><circle cx="50" cy="207" r="4"/><circle cx="286" cy="205" r="2"/><circle cx="1" cy="203" r="3"/><circle cx="79" cy="204" r="3"/><circle cx="331" cy="207" r="4"/><circle cx="663" cy="201" r="4"/><circle cx="330" cy="201" r="4"/><circle cx="130" cy="205" r="3"/><circle cx="600" cy="207" r="3"/><circle cx="412" cy="201" r="3"/><circle cx="652" cy="206" r="3"/><circle cx="1" cy="202" r="5"/><circle cx="348" cy="201" r="3"/><circle cx="286" cy="209" r="3"/><circle cx="398" cy="207" r="4"/><circle cx="348" cy="209" r="5"/><circle cx="228" cy="208" r="2"/><circle cx="61" cy="201" r="4"/><circle cx="520" cy="205" r="5"/><circle cx="433" cy="201" r="3"/><circle cx="570" cy="208" r="3"/><circle cx="537" cy="203" r="3"/><circle cx="572" cy="209" r="5"/><circle cx="193" cy="208" r="4"/><circle cx="572" cy="200" r="4"/><circle cx="34" cy="201" r="3"/><circle cx="425" cy="203" r="3"/><circle cx="383" cy="202" r="3"/><circle cx="44" cy="207" r="4"/><circle cx="662" cy="205" r="5"/><circle cx="518" cy="204" r="3"/><circle cx="367" cy="204" r="2"/><circle cx="535" cy="209" r="3"/><circle cx="561" cy="205" r="3"/><circle cx="241" cy="201" r="2"/><circle cx="535" cy="207" r="3"/><circle cx="159" cy="203" r="3"/><circle cx="517" cy="203" r="3"/><circle cx="625" cy="210" r="4"/><circle cx="21" cy="206" r="4"/><circle cx="558" cy="203" r="5"/><circle cx="614" cy="208" r="4"/><circle cx="613" cy="210" r="5"/><circle cx="89" cy="202" r="3"/><circle cx="349" cy="208" r="3"/><circle cx="275" cy="202" r="2"/><circle cx="448" cy="203" r="5"/><circle cx="209" cy="204" r="3"/><circle cx="482" cy="209" r="2"/><circle cx="414" cy="203" r="2"/><circle cx="34" cy="200" r="4"/><circle cx="280" cy="201" r="2"/><circle cx="516" cy="208" r="4"/><circle cx="402" cy="201" r="2"/><circle cx="108" cy="209" r="4"/><circle cx="392" cy="202" r="4"/><circle cx="463" cy="208" r="3"/><circle cx="671" cy="202" r="3"/><circle cx="86" cy="207" r="3"/><circle cx="533" cy="206" r="5"/><circle cx="257" cy="203" r="5"/><circle cx="87" cy="202" r="5"/><circle cx="263" cy="202" r="3"/><circle cx="5" cy="209" r="4"/><circle cx="431" cy="202" r="4"/><circle cx="56" cy="209" r="3"/><circle cx="668" cy="205" r="3"/><circle cx="623" cy="208" r="3"/><circle cx="0" cy="202" r="3"/><circle cx="312" cy="209" r="4"/><circle cx="80" cy="203" r="4"/><circle cx="622" cy="202" r="3"/><circle cx="315" cy="210" r="5"/><circle cx="620" cy="209" r="3"/><circle cx="142" cy="203" r="5"/><circle cx="12" cy="205" r="3"/><circle cx="355" cy="208" r="3"/><circle cx="468" cy="208" r="3"/><circle cx="251" cy="202" r="3"/><circle cx="560" cy="209" r="3"/><circle cx="563" cy="208" r="3"/></g><g fill="#486048"><circle cx="1427" cy="202" r="5"/><circle cx="1427" cy="202" r="4"/></g><g fill="#304830"><circle cx="1344" cy="204" r="3"/><circle cx="1212" cy="208" r="2"/><circle cx="1391" cy="203" r="4"/><circle cx="1159" cy="209" r="2"/><circle cx="1201" cy="201" r="3"/><circle cx="1148" cy="200" r="4"/><circle cx="1139" cy="200" r="2"/><circle cx="1021" cy="207" r="2"/><circle cx="1397" cy="203" r="2"/><circle cx="1227" cy="205" r="5"/><circle cx="1042" cy="207" r="3"/><circle cx="1396" cy="205" r="4"/><circle cx="1102" cy="209" r="4"/><circle cx="1352" cy="202" r="4"/><circle cx="1384" cy="205" r="4"/><circle cx="1032" cy="205" r="3"/><circle cx="1174" cy="207" r="4"/><circle cx="1107" cy="201" r="3"/><circle cx="1145" cy="200" r="5"/><circle cx="1356" cy="200" r="2"/><circle cx="1083" cy="209" r="3"/><circle cx="1298" cy="200" r="2"/><circle cx="1206" cy="204" r="4"/><circle cx="1037" cy="202" r="3"/><circle cx="1216" cy="201" r="5"/><circle cx="1246" cy="204" r="3"/><circle cx="997" cy="207" r="4"/><circle cx="1126" cy="208" r="2"/><circle cx="1016" cy="210" r="4"/><circle cx="1319" cy="204" r="2"/><circle cx="1098" cy="205" r="4"/><circle cx="1072" cy="210" r="3"/><circle cx="1344" cy="203" r="4"/><circle cx="1115" cy="209" r="5"/><circle cx="1418" cy="210" r="3"/><circle cx="1243" cy="203" r="2"/><circle cx="971" cy="206" r="3"/><circle cx="1197" cy="205" r="5"/><circle cx="1271" cy="204" r="3"/><circle cx="1081" cy="205" r="3"/><circle cx="1161" cy="205" r="5"/><circle cx="1127" cy="203" r="5"/><circle cx="1209" cy="202" r="3"/><circle cx="1297" cy="208" r="2"/><circle cx="1144" cy="203" r="3"/><circle cx="1366" cy="209" r="5"/><circle cx="1140" cy="206" r="3"/><circle cx="1228" cy="203" r="4"/><circle cx="1132" cy="207" r="4"/><circle cx="1220" cy="207" r="4"/><circle cx="1092" cy="209" r="4"/><circle cx="965" cy="206" r="2"/><circle cx="1261" cy="202" r="3"/><circle cx="1191" cy="204" r="5"/><circle cx="1377" cy="209" r="4"/><circle cx="1257" cy="203" r="5"/><circle cx="1187" cy="208" r="3"/><circle cx="1038" cy="203" r="5"/></g><g fill="#667e54"><circle cx="1030" cy="210" r="2"/><circle cx="976" cy="206" r="3"/><circle cx="1045" cy="205" r="2"/><circle cx="991" cy="205" r="3"/><circle cx="1004" cy="203" r="3"/><circle cx="981" cy="208" r="3"/><circle cx="986" cy="202" r="4"/><circle cx="1027" cy="202" r="4"/><circle cx="1035" cy="207" r="4"/></g><g fill="#486c3c"><circle cx="875" cy="206" r="3"/><circle cx="867" cy="206" r="3"/><circle cx="830" cy="209" r="5"/><circle cx="855" cy="200" r="5"/><circle cx="799" cy="206" r="2"/><circle cx="930" cy="206" r="5"/><circle cx="797" cy="207" r="5"/><circle cx="922" cy="201" r="3"/><circle cx="814" cy="202" r="3"/><circle cx="791" cy="202" r="4"/><circle cx="898" cy="204" r="4"/><circle cx="819" cy="202" r="4"/><circle cx="865" cy="205" r="4"/><circle cx="875" cy="204" r="3"/><circle cx="788" cy="202" r="2"/><circle cx="828" cy="204" r="2"/><circle cx="937" cy="209" r="3"/><circle cx="865" cy="202" r="5"/><circle cx="937" cy="208" r="5"/><circle cx="885" cy="200" r="2"/><circle cx="802" cy="206" r="4"/><circle cx="828" cy="207" r="3"/></g><g fill="#48663c"><circle cx="958" cy="205" r="3"/><circle cx="1030" cy="203" r="4"/><circle cx="982" cy="207" r="4"/><circle cx="974" cy="205" r="3"/><circle cx="983" cy="200" r="2"/><circle cx="968" cy="205" r="4"/><circle cx="972" cy="210" r="4"/><circle cx="1064" cy="206" r="3"/><circle cx="999" cy="207" r="3"/><circle cx="975" cy="206" r="3"/><circle cx="1043" cy="209" r="5"/><circle cx="1018" cy="207" r="4"/><circle cx="1006" cy="206" r="4"/><circle cx="1069" cy="210" r="5"/><circle cx="964" cy="209" r="3"/><circle cx="1014" cy="208" r="5"/></g><g fill="#66844e"><circle cx="888" cy="205" r="2"/><circle cx="879" cy="202" r="4"/><circle cx="922" cy="205" r="5"/><circle cx="834" cy="205" r="3"/><circle cx="943" cy="200" r="4"/><circle cx="858" cy="201" r="4"/><circle cx="899" cy="206" r="3"/></g><g fill="#486c36"><circle cx="719" cy="204" r="3"/><circle cx="764" cy="207" r="3"/><circle cx="719" cy="206" r="4"/><circle cx="726" cy="204" r="4"/><circle cx="747" cy="209" r="4"/><circle cx="764" cy="201" r="4"/><circle cx="774" cy="206" r="5"/><circle cx="719" cy="206" r="2"/><circle cx="741" cy="204" r="3"/><circle cx="738" cy="209" r="2"/><circle cx="722" cy="205" r="3"/><circle cx="744" cy="209" r="3"/><circle cx="775" cy="209" r="3"/><circle cx="726" cy="202" r="5"/></g><g fill="#667e5a"><circle cx="1153" cy="203" r="2"/><circle cx="1159" cy="206" r="3"/><circle cx="1113" cy="205" r="3"/><circle cx="1163" cy="203" r="4"/><circle cx="1158" cy="209" r="2"/></g><g fill="#667866"><circle cx="1409" cy="209" r="2"/><circle cx="1346" cy="201" r="4"/><circle cx="1353" cy="210" r="3"/><circle cx="1415" cy="206" r="2"/><circle cx="1367" cy="209" r="2"/><circle cx="1421" cy="209" r="4"/><circle cx="1359" cy="206" r="4"/><circle cx="1358" cy="201" r="4"/><circle cx="1407" cy="207" r="3"/></g><g fill="#66785a"><circle cx="1200" cy="204" r="3"/><circle cx="1202" cy="203" r="4"/><circle cx="1201" cy="201" r="3"/><circle cx="1201" cy="209" r="3"/></g><g fill="#668448"><circle cx="816" cy="204" r="3"/><circle cx="811" cy="207" r="4"/><circle cx="799" cy="206" r="2"/><circle cx="787" cy="203" r="4"/><circle cx="760" cy="207" r="5"/><circle cx="771" cy="201" r="4"/></g><g fill="#668a48"><circle cx="741" cy="205" r="3"/><circle cx="730" cy="200" r="5"/><circle cx="725" cy="207" r="3"/></g><g fill="#667860"><circle cx="1283" cy="206" r="3"/><circle cx="1250" cy="207" r="3"/><circle cx="1329" cy="209" r="2"/><circle cx="1234" cy="202" r="4"/><circle cx="1242" cy="208" r="3"/><circle cx="1284" cy="204" r="3"/><circle cx="1243" cy="207" r="5"/><circle cx="1224" cy="206" r="4"/></g><g fill="#667266"><circle cx="1429" cy="206" r="4"/></g><g fill="#30482a"><circle cx="218" cy="218" r="2"/><circle cx="194" cy="215" r="2"/><circle cx="377" cy="210" r="2"/><circle cx="162" cy="216" r="3"/><circle cx="532" cy="215" r="3"/><circle cx="900" cy="219" r="5"/><circle cx="557" cy="210" r="3"/><circle cx="263" cy="217" r="4"/><circle cx="804" cy="216" r="3"/><circle cx="316" cy="212" r="3"/><circle cx="325" cy="220" r="4"/><circle cx="630" cy="217" r="4"/><circle cx="414" cy="214" r="2"/><circle cx="503" cy="216" r="3"/><circle cx="138" cy="215" r="3"/><circle cx="588" cy="214" r="2"/><circle cx="955" cy="212" r="3"/><circle cx="719" cy="218" r="4"/><circle cx="631" cy="215" r="2"/><circle cx="918" cy="211" r="4"/><circle cx="665" cy="211" r="4"/><circle cx="751" cy="215" r="3"/><circle cx="755" cy="219" r="5"/><circle cx="3" cy="215" r="3"/><circle cx="886" cy="213" r="4"/><circle cx="167" cy="215" r="5"/><circle cx="13" cy="219" r="5"/><circle cx="676" cy="214" r="5"/><circle cx="78" cy="219" r="3"/><circle cx="175" cy="213" r="4"/><circle cx="299" cy="211" r="5"/><circle cx="832" cy="213" r="4"/><circle cx="790" cy="213" r="2"/><circle cx="301" cy="212" r="2"/><circle cx="262" cy="213" r="3"/><circle cx="834" cy="215" r="3"/><circle cx="776" cy="214" r="2"/><circle cx="773" cy="212" r="5"/><circle cx="173" cy="213" r="4"/><circle cx="513" cy="219" r="3"/><circle cx="924" cy="218" r="2"/><circle cx="940" cy="218" r="3"/><circle cx="43" cy="215" r="2"/><circle cx="474" cy="214" r="2"/><circle cx="924" cy="213" r="3"/><circle cx="328" cy="211" r="4"/><circle cx="320" cy="219" r="4"/><circle cx="176" cy="215" r="4"/><circle cx="389" cy="219" r="3"/><circle cx="142" cy="216" r="3"/><circle cx="45" cy="211" r="3"/><circle cx="366" cy="218" r="4"/><circle cx="615" cy="213" r="4"/><circle cx="588" cy="218" r="3"/><circle cx="894" cy="215" r="5"/><circle cx="184" cy="218" r="3"/><circle cx="42" cy="215" r="3"/><circle cx="128" cy="213" r="4"/><circle cx="566" cy="213" r="4"/><circle cx="81" cy="213" r="2"/><circle cx="625" cy="213" r="3"/><circle cx="658" cy="216" r="4"/><circle cx="565" cy="216" r="4"/><circle cx="712" cy="214" r="4"/><circle cx="712" cy="219" r="3"/><circle cx="790" cy="211" r="4"/><circle cx="96" cy="218" r="3"/><circle cx="448" cy="212" r="4"/><circle cx="495" cy="211" r="2"/><circle cx="481" cy="215" r="4"/><circle cx="648" cy="217" r="3"/><circle cx="201" cy="215" r="3"/><circle cx="815" cy="217" r="3"/><circle cx="155" cy="212" r="3"/><circle cx="376" cy="219" r="3"/><circle cx="851" cy="219" r="3"/><circle cx="295" cy="214" r="3"/><circle cx="871" cy="214" r="4"/><circle cx="89" cy="220" r="2"/><circle cx="445" cy="218" r="2"/><circle cx="322" cy="218" r="4"/><circle cx="27" cy="219" r="2"/><circle cx="49" cy="215" r="2"/><circle cx="519" cy="218" r="2"/><circle cx="634" cy="217" r="2"/><circle cx="123" cy="219" r="3"/><circle cx="157" cy="219" r="3"/><circle cx="341" cy="211" r="2"/><circle cx="618" cy="217" r="2"/><circle cx="82" cy="219" r="3"/><circle cx="241" cy="218" r="5"/><circle cx="668" cy="217" r="4"/><circle cx="702" cy="215" r="3"/><circle cx="934" cy="216" r="3"/><circle cx="218" cy="213" r="3"/><circle cx="637" cy="216" r="3"/><circle cx="514" cy="213" r="4"/><circle cx="243" cy="211" r="2"/><circle cx="449" cy="220" r="4"/><circle cx="358" cy="216" r="3"/><circle cx="205" cy="217" r="5"/><circle cx="760" cy="212" r="4"/><circle cx="895" cy="216" r="3"/><circle cx="2" cy="214" r="2"/><circle cx="767" cy="216" r="3"/><circle cx="254" cy="210" r="5"/><circle cx="176" cy="211" r="5"/><circle cx="953" cy="213" r="2"/><circle cx="219" cy="210" r="4"/><circle cx="550" cy="214" r="3"/></g><g fill="#66844e"><circle cx="859" cy="215" r="4"/><circle cx="906" cy="219" r="3"/><circle cx="915" cy="213" r="5"/><circle cx="946" cy="218" r="2"/><circle cx="884" cy="219" r="3"/><circle cx="932" cy="220" r="5"/><circle cx="915" cy="218" r="5"/><circle cx="935" cy="217" r="3"/><circle cx="905" cy="212" r="2"/><circle cx="939" cy="216" r="3"/></g><g fill="#486c3c"><circle cx="814" cy="219" r="4"/><circle cx="812" cy="216" r="2"/><circle cx="910" cy="215" r="4"/><circle cx="805" cy="219" r="2"/><circle cx="798" cy="215" r="4"/><circle cx="933" cy="212" r="5"/><circle cx="823" cy="217" r="4"/><circle cx="814" cy="216" r="4"/><circle cx="932" cy="211" r="4"/><circle cx="848" cy="219" r="4"/><circle cx="821" cy="215" r="3"/><circle cx="783" cy="218" r="2"/></g><g fill="#48663c"><circle cx="1020" cy="212" r="2"/><circle cx="966" cy="213" r="4"/><circle cx="1050" cy="214" r="3"/><circle cx="1024" cy="214" r="2"/><circle cx="962" cy="219" r="3"/><circle cx="1016" cy="220" r="5"/><circle cx="1033" cy="213" r="3"/><circle cx="966" cy="216" r="2"/><circle cx="1005" cy="213" r="5"/><circle cx="985" cy="219" r="5"/><circle cx="1031" cy="219" r="4"/><circle cx="1084" cy="211" r="5"/><circle cx="1058" cy="216" r="2"/><circle cx="980" cy="220" r="3"/><circle cx="999" cy="217" r="3"/><circle cx="1068" cy="211" r="5"/><circle cx="1010" cy="215" r="3"/><circle cx="989" cy="214" r="4"/><circle cx="1019" cy="217" r="2"/><circle cx="1092" cy="219" r="2"/><circle cx="1064" cy="211" r="3"/></g><g fill="#487236"><circle cx="469" cy="210" r="4"/><circle cx="81" cy="218" r="3"/><circle cx="484" cy="211" r="5"/><circle cx="666" cy="217" r="5"/><circle cx="638" cy="211" r="3"/><circle cx="287" cy="220" r="3"/><circle cx="358" cy="213" r="3"/><circle cx="158" cy="212" r="5"/><circle cx="190" cy="218" r="3"/><circle cx="217" cy="219" r="2"/><circle cx="72" cy="216" r="2"/><circle cx="205" cy="219" r="3"/><circle cx="2" cy="211" r="4"/><circle cx="619" cy="212" r="2"/><circle cx="285" cy="214" r="5"/><circle cx="28" cy="215" r="3"/><circle cx="316" cy="219" r="5"/><circle cx="653" cy="211" r="2"/><circle cx="85" cy="217" r="3"/><circle cx="638" cy="215" r="3"/><circle cx="262" cy="218" r="4"/><circle cx="420" cy="217" r="3"/><circle cx="484" cy="220" r="3"/><circle cx="315" cy="212" r="2"/><circle cx="366" cy="216" r="5"/><circle cx="457" cy="215" r="5"/><circle cx="5" cy="210" r="2"/><circle cx="467" cy="213" r="4"/><circle cx="635" cy="216" r="3"/><circle cx="414" cy="217" r="3"/><circle cx="618" cy="212" r="5"/><circle cx="24" cy="211" r="4"/><circle cx="435" cy="220" r="4"/><circle cx="645" cy="213" r="4"/><circle cx="262" cy="210" r="4"/><circle cx="216" cy="215" r="4"/><circle cx="641" cy="215" r="4"/><circle cx="115" cy="215" r="3"/><circle cx="185" cy="220" r="4"/><circle cx="588" cy="219" r="4"/><circle cx="477" cy="217" r="3"/><circle cx="511" cy="220" r="2"/><circle cx="470" cy="212" r="4"/><circle cx="385" cy="213" r="5"/><circle cx="71" cy="214" r="3"/><circle cx="191" cy="214" r="5"/><circle cx="327" cy="214" r="4"/><circle cx="414" cy="213" r="4"/><circle cx="99" cy="214" r="5"/><circle cx="275" cy="214" r="4"/><circle cx="198" cy="216" r="4"/><circle cx="520" cy="217" r="4"/><circle cx="298" cy="213" r="4"/><circle cx="179" cy="212" r="5"/><circle cx="83" cy="218" r="4"/><circle cx="286" cy="210" r="4"/><circle cx="522" cy="213" r="3"/><circle cx="262" cy="212" r="3"/><circle cx="308" cy="211" r="2"/><circle cx="368" cy="210" r="3"/><circle cx="362" cy="219" r="5"/><circle cx="451" cy="219" r="3"/><circle cx="546" cy="215" r="4"/><circle cx="18" cy="220" r="3"/><circle cx="245" cy="218" r="4"/><circle cx="480" cy="213" r="4"/><circle cx="601" cy="218" r="4"/><circle cx="277" cy="214" r="4"/><circle cx="246" cy="211" r="4"/><circle cx="283" cy="215" r="5"/><circle cx="297" cy="218" r="4"/><circle cx="324" cy="213" r="3"/><circle cx="500" cy="212" r="2"/><circle cx="496" cy="217" r="3"/><circle cx="222" cy="215" r="4"/><circle cx="644" cy="217" r="4"/><circle cx="276" cy="215" r="5"/><circle cx="157" cy="216" r="5"/><circle cx="126" cy="211" r="2"/><circle cx="633" cy="212" r="4"/><circle cx="159" cy="214" r="5"/><circle cx="214" cy="212" r="5"/><circle cx="571" cy="217" r="3"/><circle cx="202" cy="211" r="4"/><circle cx="563" cy="213" r="3"/><circle cx="229" cy="220" r="2"/><circle cx="575" cy="211" r="5"/><circle cx="622" cy="218" r="3"/></g><g fill="#668a42"><circle cx="166" cy="212" r="2"/><circle cx="484" cy="211" r="4"/><circle cx="153" cy="215" r="3"/><circle cx="675" cy="218" r="2"/><circle cx="137" cy="215" r="3"/><circle cx="47" cy="215" r="4"/><circle cx="595" cy="212" r="3"/><circle cx="592" cy="217" r="2"/><circle cx="358" cy="211" r="4"/><circle cx="63" cy="214" r="5"/><circle cx="494" cy="215" r="4"/><circle cx="17" cy="216" r="5"/><circle cx="529" cy="213" r="2"/><circle cx="12" cy="218" r="5"/><circle cx="303" cy="216" r="4"/><circle cx="48" cy="220" r="4"/><circle cx="313" cy="212" r="4"/><circle cx="510" cy="213" r="3"/><circle cx="698" cy="214" r="5"/><circle cx="18" cy="219" r="3"/><circle cx="605" cy="213" r="4"/><circle cx="339" cy="217" r="3"/><circle cx="381" cy="215" r="3"/><circle cx="663" cy="211" r="4"/><circle cx="141" cy="216" r="5"/><circle cx="90" cy="213" r="5"/><circle cx="56" cy="218" r="3"/><circle cx="270" cy="215" r="4"/><circle cx="644" cy="210" r="4"/><circle cx="87" cy="219" r="3"/><circle cx="542" cy="211" r="4"/><circle cx="293" cy="219" r="3"/><circle cx="478" cy="216" r="5"/><circle cx="317" cy="213" r="4"/><circle cx="134" cy="219" r="3"/><circle cx="45" cy="213" r="3"/><circle cx="264" cy="219" r="5"/><circle cx="426" cy="211" r="5"/><circle cx="492" cy="211" r="3"/><circle cx="81" cy="215" r="4"/><circle cx="495" cy="211" r="3"/><circle cx="408" cy="212" r="2"/><circle cx="42" cy="210" r="2"/><circle cx="83" cy="219" r="4"/><circle cx="444" cy="217" r="3"/><circle cx="677" cy="214" r="5"/><circle cx="67" cy="219" r="3"/><circle cx="3" cy="219" r="4"/></g><g fill="#486042"><circle cx="1387" cy="219" r="2"/><circle cx="1314" cy="215" r="3"/><circle cx="1290" cy="216" r="4"/><circle cx="1262" cy="213" r="2"/><circle cx="1384" cy="210" r="4"/><circle cx="1243" cy="218" r="3"/><circle cx="1323" cy="213" r="5"/><circle cx="1363" cy="216" r="3"/><circle cx="1402" cy="216" r="2"/><circle cx="1277" cy="215" r="3"/><circle cx="1373" cy="215" r="2"/><circle cx="1394" cy="215" r="4"/><circle cx="1369" cy="216" r="2"/><circle cx="1376" cy="217" r="5"/><circle cx="1345" cy="214" r="3"/><circle cx="1359" cy="217" r="4"/><circle cx="1341" cy="218" r="2"/><circle cx="1298" cy="211" r="4"/><circle cx="1290" cy="214" r="4"/><circle cx="1320" cy="212" r="4"/><circle cx="1369" cy="219" r="4"/><circle cx="1383" cy="216" r="4"/><circle cx="1243" cy="215" r="2"/><circle cx="1413" cy="218" r="3"/><circle cx="1371" cy="216" r="4"/><circle cx="1236" cy="210" r="3"/><circle cx="1307" cy="220" r="3"/><circle cx="1410" cy="211" r="3"/></g><g fill="#304830"><circle cx="1189" cy="219" r="3"/><circle cx="1393" cy="212" r="5"/><circle cx="1226" cy="219" r="4"/><circle cx="1013" cy="213" r="5"/><circle cx="1379" cy="211" r="3"/><circle cx="1369" cy="216" r="4"/><circle cx="1035" cy="216" r="5"/><circle cx="1012" cy="210" r="2"/><circle cx="972" cy="211" r="2"/><circle cx="1390" cy="218" r="3"/><circle cx="1150" cy="216" r="4"/><circle cx="1033" cy="213" r="2"/><circle cx="1380" cy="220" r="2"/><circle cx="1138" cy="214" r="3"/><circle cx="1403" cy="219" r="2"/><circle cx="1089" cy="214" r="3"/><circle cx="1031" cy="211" r="2"/><circle cx="1313" cy="213" r="2"/><circle cx="1362" cy="218" r="2"/><circle cx="1187" cy="214" r="2"/><circle cx="1401" cy="214" r="3"/><circle cx="1298" cy="214" r="4"/><circle cx="1071" cy="215" r="3"/><circle cx="1142" cy="215" r="3"/><circle cx="1140" cy="214" r="3"/><circle cx="1342" cy="218" r="4"/><circle cx="990" cy="212" r="4"/><circle cx="1001" cy="213" r="5"/><circle cx="1297" cy="212" r="3"/><circle cx="1062" cy="219" r="3"/><circle cx="1311" cy="217" r="2"/><circle cx="1401" cy="215" r="4"/><circle cx="1093" cy="216" r="5"/><circle cx="1342" cy="212" r="5"/><circle cx="1409" cy="220" r="4"/><circle cx="984" cy="210" r="4"/><circle cx="1021" cy="215" r="2"/><circle cx="1181" cy="214" r="4"/><circle cx="1145" cy="212" r="2"/><circle cx="1262" cy="210" r="3"/><circle cx="1181" cy="217" r="3"/><circle cx="1233" cy="218" r="3"/><circle cx="1081" cy="216" r="5"/><circle cx="1417" cy="214" r="3"/><circle cx="962" cy="217" r="4"/><circle cx="1393" cy="217" r="3"/><circle cx="1186" cy="214" r="3"/><circle cx="1105" cy="212" r="5"/><circle cx="1105" cy="219" r="4"/><circle cx="1280" cy="217" r="5"/><circle cx="1334" cy="218" r="2"/><circle cx="1389" cy="212" r="4"/><circle cx="1438" cy="220" r="4"/><circle cx="1393" cy="220" r="3"/><circle cx="1395" cy="214" r="5"/><circle cx="1035" cy="220" r="3"/><circle cx="1255" cy="211" r="4"/><circle cx="1237" cy="213" r="4"/><circle cx="1109" cy="215" r="5"/><circle cx="1128" cy="214" r="3"/><circle cx="1345" cy="212" r="5"/><circle cx="992" cy="212" r="2"/><circle cx="1377" cy="216" r="4"/><circle cx="1219" cy="219" r="3"/><circle cx="1353" cy="212" r="5"/><circle cx="1068" cy="216" r="2"/><circle cx="1136" cy="216" r="5"/><circle cx="964" cy="217" r="4"/><circle cx="1333" cy="214" r="3"/><circle cx="1397" cy="215" r="3"/><circle cx="1152" cy="215" r="3"/><circle cx="1292" cy="215" r="3"/><circle cx="1332" cy="212" r="3"/><circle cx="1261" cy="215" r="3"/><circle cx="1068" cy="214" r="3"/></g><g fill="#668a48"><circle cx="737" cy="219" r="3"/><circle cx="731" cy="219" r="3"/></g><g fill="#486642"><circle cx="1160" cy="212" r="4"/><circle cx="1119" cy="213" r="4"/><circle cx="1224" cy="217" r="3"/><circle cx="1136" cy="213" r="2"/><circle cx="1149" cy="213" r="5"/><circle cx="1165" cy="218" r="2"/><circle cx="1201" cy="219" r="5"/><circle cx="1184" cy="211" r="3"/><circle cx="1168" cy="213" r="4"/><circle cx="1216" cy="210" r="3"/><circle cx="1119" cy="212" r="4"/><circle cx="1178" cy="211" r="5"/><circle cx="1114" cy="212" r="4"/><circle cx="1103" cy="210" r="4"/><circle cx="1186" cy="217" r="4"/><circle cx="1185" cy="216" r="5"/></g><g fill="#667e5a"><circle cx="1125" cy="216" r="4"/><circle cx="1118" cy="219" r="4"/><circle cx="1096" cy="219" r="2"/><circle cx="1134" cy="217" r="3"/><circle cx="1176" cy="211" r="5"/><circle cx="1097" cy="211" r="2"/><circle cx="1134" cy="218" r="3"/></g><g fill="#486c36"><circle cx="677" cy="220" r="4"/><circle cx="756" cy="212" r="2"/><circle cx="737" cy="210" r="5"/><circle cx="747" cy="212" r="4"/><circle cx="747" cy="214" r="4"/><circle cx="772" cy="212" r="5"/><circle cx="776" cy="218" r="2"/><circle cx="728" cy="218" r="4"/></g><g fill="#667e54"><circle cx="1046" cy="218" r="2"/><circle cx="1004" cy="212" r="3"/><circle cx="974" cy="214" r="4"/><circle cx="1074" cy="212" r="3"/><circle cx="1013" cy="213" r="4"/><circle cx="972" cy="211" r="2"/><circle cx="1001" cy="217" r="5"/><circle cx="1065" cy="218" r="5"/><circle cx="1007" cy="213" r="4"/><circle cx="1027" cy="213" r="3"/></g><g fill="#66785a"><circle cx="1212" cy="213" r="4"/></g><g fill="#667266"><circle cx="1422" cy="218" r="3"/></g><g fill="#667860"><circle cx="1243" cy="218" r="3"/><circle cx="1296" cy="218" r="2"/><circle cx="1317" cy="215" r="4"/><circle cx="1250" cy="215" r="4"/><circle cx="1307" cy="217" r="5"/><circle cx="1229" cy="212" r="5"/><circle cx="1249" cy="210" r="4"/></g><g fill="#667866"><circle cx="1359" cy="212" r="3"/><circle cx="1376" cy="216" r="4"/><circle cx="1365" cy="218" r="3"/><circle cx="1368" cy="218" r="3"/></g><g fill="#486048"><circle cx="1416" cy="216" r="3"/><circle cx="1415" cy="215" r="3"/><circle cx="1422" cy="219" r="4"/><circle cx="1422" cy="211" r="4"/></g><g fill="#668448"><circle cx="779" cy="211" r="5"/><circle cx="779" cy="218" r="3"/><circle cx="822" cy="217" r="3"/></g><g fill="#668454"><circle cx="968" cy="214" r="3"/></g><g fill="#2a482a"><circle cx="174" cy="221" r="2"/><circle cx="975" cy="224" r="2"/><circle cx="85" cy="227" r="4"/><circle cx="345" cy="229" r="5"/><circle cx="445" cy="225" r="4"/><circle cx="1258" cy="227" r="4"/><circle cx="352" cy="223" r="2"/><circle cx="1196" cy="228" r="3"/><circle cx="760" cy="221" r="3"/><circle cx="463" cy="220" r="5"/><circle cx="1379" cy="230" r="5"/><circle cx="914" cy="227" r="5"/><circle cx="1236" cy="223" r="5"/><circle cx="1423" cy="224" r="3"/><circle cx="1088" cy="228" r="3"/><circle cx="1258" cy="222" r="4"/><circle cx="198" cy="226" r="4"/><circle cx="448" cy="225" r="5"/><circle cx="608" cy="222" r="5"/><circle cx="1179" cy="222" r="3"/><circle cx="1043" cy="221" r="4"/><circle cx="1159" cy="223" r="3"/><circle cx="119" cy="222" r="5"/><circle cx="875" cy="221" r="3"/><circle cx="1096" cy="225" r="5"/><circle cx="951" cy="230" r="5"/><circle cx="1147" cy="230" r="3"/><circle cx="531" cy="230" r="4"/><circle cx="1018" cy="221" r="4"/><circle cx="620" cy="223" r="3"/><circle cx="843" cy="226" r="4"/><circle cx="937" cy="227" r="3"/><circle cx="639" cy="222" r="3"/><circle cx="1310" cy="228" r="3"/><circle cx="139" cy="220" r="2"/><circle cx="1036" cy="228" r="3"/><circle cx="240" cy="223" r="5"/><circle cx="676" cy="222" r="3"/><circle cx="781" cy="225" r="2"/><circle cx="982" cy="223" r="5"/><circle cx="282" cy="224" r="4"/><circle cx="983" cy="228" r="4"/><circle cx="1321" cy="222" r="4"/><circle cx="1222" cy="227" r="3"/><circle cx="972" cy="223" r="4"/><circle cx="1331" cy="228" r="3"/><circle cx="784" cy="223" r="2"/><circle cx="1078" cy="222" r="3"/><circle cx="510" cy="223" r="3"/><circle cx="1062" cy="228" r="2"/><circle cx="71" cy="226" r="4"/><circle cx="395" cy="221" r="3"/><circle cx="579" cy="226" r="5"/><circle cx="1410" cy="228" r="2"/><circle cx="1152" cy="227" r="5"/><circle cx="1107" cy="221" r="2"/><circle cx="750" cy="223" r="3"/><circle cx="411" cy="225" r="4"/><circle cx="1096" cy="221" r="3"/><circle cx="42" cy="229" r="2"/><circle cx="1202" cy="227" r="4"/><circle cx="258" cy="222" r="4"/><circle cx="1256" cy="227" r="2"/><circle cx="180" cy="222" r="4"/><circle cx="793" cy="220" r="3"/><circle cx="588" cy="221" r="3"/><circle cx="503" cy="221" r="3"/><circle cx="527" cy="227" r="3"/><circle cx="597" cy="225" r="4"/><circle cx="352" cy="226" r="5"/><circle cx="509" cy="224" r="5"/><circle cx="621" cy="225" r="2"/><circle cx="463" cy="224" r="5"/><circle cx="376" cy="229" r="4"/><circle cx="792" cy="222" r="2"/><circle cx="768" cy="228" r="4"/><circle cx="1211" cy="228" r="5"/><circle cx="1116" cy="229" r="3"/><circle cx="565" cy="224" r="3"/><circle cx="1002" cy="224" r="3"/><circle cx="454" cy="230" r="2"/><circle cx="1020" cy="221" r="3"/><circle cx="383" cy="221" r="3"/><circle cx="241" cy="225" r="4"/><circle cx="199" cy="225" r="3"/><circle cx="1230" cy="224" r="3"/><circle cx="1240" cy="224" r="2"/><circle cx="582" cy="226" r="3"/><circle cx="857" cy="223" r="5"/><circle cx="1072" cy="228" r="4"/><circle cx="1255" cy="222" r="2"/><circle cx="516" cy="229" r="3"/><circle cx="885" cy="222" r="5"/><circle cx="1108" cy="225" r="4"/><circle cx="882" cy="224" r="3"/><circle cx="764" cy="222" r="2"/><circle cx="1060" cy="224" r="2"/><circle cx="967" cy="227" r="3"/><circle cx="378" cy="227" r="3"/><circle cx="1374" cy="223" r="4"/><circle cx="1091" cy="227" r="4"/><circle cx="857" cy="220" r="3"/><circle cx="642" cy="221" r="5"/><circle cx="1382" cy="227" r="4"/><circle cx="1124" cy="223" r="4"/><circle cx="742" cy="221" r="2"/><circle cx="938" cy="221" r="3"/><circle cx="1228" cy="221" r="2"/><circle cx="785" cy="227" r="4"/><circle cx="296" cy="221" r="2"/><circle cx="1169" cy="230" r="4"/><circle cx="506" cy="225" r="4"/><circle cx="251" cy="230" r="2"/><circle cx="1239" cy="223" r="2"/><circle cx="1100" cy="220" r="3"/><circle cx="206" cy="226" r="2"/><circle cx="1337" cy="229" r="5"/><circle cx="852" cy="226" r="5"/><circle cx="603" cy="222" r="3"/><circle cx="199" cy="220" r="5"/><circle cx="701" cy="222" r="2"/><circle cx="583" cy="230" r="3"/><circle cx="68" cy="220" r="2"/><circle cx="644" cy="222" r="4"/><circle cx="1383" cy="223" r="3"/><circle cx="705" cy="230" r="4"/><circle cx="444" cy="223" r="5"/><circle cx="173" cy="220" r="3"/><circle cx="66" cy="226" r="4"/><circle cx="1112" cy="226" r="4"/><circle cx="1315" cy="224" r="4"/><circle cx="624" cy="222" r="4"/><circle cx="614" cy="220" r="3"/><circle cx="539" cy="221" r="4"/><circle cx="478" cy="224" r="4"/><circle cx="1302" cy="223" r="3"/><circle cx="991" cy="222" r="2"/><circle cx="1214" cy="221" r="3"/><circle cx="462" cy="222" r="4"/><circle cx="256" cy="227" r="4"/><circle cx="510" cy="223" r="2"/><circle cx="96" cy="228" r="3"/><circle cx="1418" cy="227" r="3"/><circle cx="1199" cy="228" r="4"/><circle cx="248" cy="220" r="5"/><circle cx="521" cy="227" r="4"/><circle cx="644" cy="225" r="3"/><circle cx="457" cy="224" r="4"/><circle cx="99" cy="222" r="4"/><circle cx="93" cy="221" r="3"/><circle cx="709" cy="222" r="3"/><circle cx="643" cy="225" r="3"/><circle cx="606" cy="222" r="3"/><circle cx="167" cy="222" r="4"/><circle cx="1010" cy="224" r="4"/><circle cx="1206" cy="226" r="3"/><circle cx="691" cy="227" r="4"/><circle cx="1193" cy="220" r="4"/><circle cx="99" cy="224" r="3"/><circle cx="1156" cy="226" r="4"/><circle cx="460" cy="229" r="2"/><circle cx="2" cy="224" r="4"/><circle cx="67" cy="227" r="4"/><circle cx="1391" cy="223" r="4"/><circle cx="918" cy="223" r="5"/><circle cx="173" cy="225" r="5"/><circle cx="762" cy="229" r="2"/><circle cx="32" cy="221" r="4"/><circle cx="1128" cy="220" r="5"/><circle cx="626" cy="224" r="3"/></g><g fill="#42603c"><circle cx="1149" cy="221" r="4"/><circle cx="1000" cy="223" r="2"/><circle cx="1121" cy="228" r="3"/><circle cx="1008" cy="229" r="4"/><circle cx="1074" cy="226" r="5"/><circle cx="1069" cy="224" r="4"/><circle cx="1177" cy="226" r="2"/><circle cx="998" cy="222" r="4"/><circle cx="1245" cy="226" r="4"/><circle cx="990" cy="223" r="3"/><circle cx="1170" cy="221" r="5"/><circle cx="1244" cy="221" r="4"/><circle cx="1129" cy="223" r="5"/><circle cx="1218" cy="230" r="4"/><circle cx="1075" cy="230" r="3"/><circle cx="1078" cy="222" r="4"/><circle cx="1158" cy="220" r="4"/><circle cx="1182" cy="229" r="4"/><circle cx="1152" cy="220" r="4"/><circle cx="1083" cy="226" r="3"/><circle cx="1143" cy="228" r="3"/><circle cx="1088" cy="221" r="3"/><circle cx="1179" cy="227" r="4"/><circle cx="1247" cy="221" r="4"/><circle cx="1254" cy="227" r="4"/><circle cx="1007" cy="228" r="3"/><circle cx="1109" cy="227" r="5"/><circle cx="1031" cy="227" r="4"/><circle cx="1012" cy="222" r="4"/><circle cx="1027" cy="221" r="5"/><circle cx="1020" cy="225" r="2"/><circle cx="1033" cy="222" r="2"/><circle cx="1127" cy="224" r="4"/><circle cx="1146" cy="226" r="2"/><circle cx="1185" cy="225" r="3"/><circle cx="1251" cy="226" r="2"/><circle cx="1006" cy="226" r="5"/><circle cx="1209" cy="220" r="4"/><circle cx="1143" cy="229" r="2"/><circle cx="1090" cy="228" r="4"/><circle cx="1171" cy="224" r="3"/><circle cx="1127" cy="225" r="3"/><circle cx="1009" cy="225" r="5"/><circle cx="1026" cy="221" r="2"/><circle cx="1143" cy="224" r="4"/><circle cx="957" cy="225" r="4"/><circle cx="1005" cy="223" r="3"/><circle cx="1143" cy="228" r="2"/><circle cx="977" cy="226" r="4"/></g><g fill="#547e3c"><circle cx="34" cy="228" r="3"/><circle cx="234" cy="222" r="3"/><circle cx="436" cy="225" r="4"/><circle cx="39" cy="229" r="3"/><circle cx="209" cy="228" r="3"/><circle cx="465" cy="225" r="2"/><circle cx="87" cy="221" r="4"/><circle cx="34" cy="230" r="3"/><circle cx="4" cy="223" r="2"/><circle cx="73" cy="226" r="3"/><circle cx="109" cy="225" r="2"/><circle cx="562" cy="221" r="4"/><circle cx="367" cy="224" r="4"/><circle cx="349" cy="228" r="3"/><circle cx="606" cy="227" r="5"/><circle cx="262" cy="224" r="3"/><circle cx="95" cy="221" r="4"/><circle cx="420" cy="225" r="5"/><circle cx="94" cy="230" r="3"/><circle cx="118" cy="226" r="5"/><circle cx="409" cy="222" r="2"/><circle cx="650" cy="222" r="2"/><circle cx="441" cy="220" r="4"/><circle cx="610" cy="221" r="2"/><circle cx="640" cy="223" r="4"/><circle cx="487" cy="226" r="3"/><circle cx="127" cy="226" r="3"/><circle cx="153" cy="224" r="3"/><circle cx="449" cy="227" r="5"/><circle cx="161" cy="227" r="3"/><circle cx="505" cy="229" r="4"/><circle cx="184" cy="224" r="3"/><circle cx="263" cy="222" r="4"/><circle cx="354" cy="227" r="5"/><circle cx="256" cy="227" r="4"/><circle cx="125" cy="223" r="2"/><circle cx="682" cy="226" r="4"/><circle cx="114" cy="220" r="4"/><circle cx="305" cy="220" r="3"/><circle cx="232" cy="223" r="3"/><circle cx="422" cy="224" r="3"/><circle cx="131" cy="222" r="4"/><circle cx="636" cy="225" r="3"/><circle cx="121" cy="228" r="4"/><circle cx="482" cy="221" r="2"/><circle cx="711" cy="227" r="5"/></g><g fill="#5a7848"><circle cx="916" cy="221" r="3"/><circle cx="915" cy="228" r="3"/><circle cx="900" cy="224" r="5"/><circle cx="971" cy="229" r="4"/><circle cx="920" cy="225" r="4"/><circle cx="1026" cy="227" r="4"/><circle cx="914" cy="228" r="5"/><circle cx="992" cy="227" r="2"/><circle cx="911" cy="226" r="4"/><circle cx="936" cy="229" r="4"/><circle cx="1024" cy="224" r="4"/><circle cx="971" cy="224" r="2"/><circle cx="956" cy="226" r="2"/><circle cx="931" cy="230" r="4"/></g><g fill="#425a3c"><circle cx="1319" cy="225" r="3"/><circle cx="1348" cy="220" r="5"/><circle cx="1286" cy="222" r="3"/><circle cx="1325" cy="223" r="2"/><circle cx="1344" cy="220" r="3"/><circle cx="1322" cy="229" r="3"/><circle cx="1375" cy="220" r="5"/><circle cx="1261" cy="228" r="3"/><circle cx="1388" cy="226" r="3"/><circle cx="1290" cy="223" r="3"/><circle cx="1347" cy="224" r="5"/><circle cx="1318" cy="226" r="2"/><circle cx="1357" cy="221" r="4"/><circle cx="1271" cy="228" r="3"/><circle cx="1324" cy="227" r="4"/><circle cx="1308" cy="229" r="4"/><circle cx="1322" cy="225" r="2"/></g><g fill="#426636"><circle cx="367" cy="225" r="4"/><circle cx="762" cy="225" r="3"/><circle cx="340" cy="224" r="5"/><circle cx="89" cy="228" r="3"/><circle cx="677" cy="224" r="4"/><circle cx="766" cy="224" r="5"/><circle cx="380" cy="224" r="3"/><circle cx="440" cy="222" r="3"/><circle cx="27" cy="224" r="5"/><circle cx="412" cy="228" r="5"/><circle cx="714" cy="222" r="5"/><circle cx="591" cy="221" r="2"/><circle cx="602" cy="224" r="3"/><circle cx="319" cy="221" r="4"/><circle cx="425" cy="222" r="3"/><circle cx="824" cy="227" r="2"/><circle cx="827" cy="227" r="4"/><circle cx="196" cy="222" r="5"/><circle cx="211" cy="228" r="4"/><circle cx="675" cy="221" r="5"/><circle cx="87" cy="222" r="4"/><circle cx="548" cy="225" r="4"/><circle cx="404" cy="221" r="2"/><circle cx="853" cy="227" r="2"/><circle cx="236" cy="226" r="5"/><circle cx="497" cy="225" r="4"/><circle cx="6" cy="226" r="4"/><circle cx="157" cy="224" r="5"/><circle cx="285" cy="228" r="5"/><circle cx="3" cy="228" r="5"/><circle cx="185" cy="223" r="4"/><circle cx="844" cy="222" r="2"/><circle cx="364" cy="221" r="5"/><circle cx="359" cy="224" r="3"/><circle cx="551" cy="221" r="3"/><circle cx="718" cy="228" r="3"/><circle cx="446" cy="225" r="2"/><circle cx="433" cy="225" r="4"/><circle cx="149" cy="223" r="2"/><circle cx="249" cy="225" r="3"/><circle cx="756" cy="224" r="3"/><circle cx="267" cy="225" r="3"/><circle cx="581" cy="229" r="3"/><circle cx="316" cy="223" r="3"/><circle cx="672" cy="223" r="3"/><circle cx="651" cy="226" r="5"/><circle cx="682" cy="223" r="5"/><circle cx="10" cy="229" r="5"/><circle cx="210" cy="224" r="4"/><circle cx="327" cy="221" r="3"/><circle cx="281" cy="230" r="4"/><circle cx="641" cy="223" r="4"/><circle cx="13" cy="225" r="3"/><circle cx="627" cy="229" r="3"/><circle cx="94" cy="220" r="3"/><circle cx="450" cy="230" r="2"/><circle cx="700" cy="224" r="4"/><circle cx="209" cy="228" r="3"/><circle cx="809" cy="222" r="5"/><circle cx="226" cy="220" r="4"/><circle cx="433" cy="221" r="3"/><circle cx="1" cy="221" r="4"/><circle cx="372" cy="225" r="4"/><circle cx="583" cy="223" r="3"/><circle cx="400" cy="222" r="3"/><circle cx="322" cy="229" r="3"/><circle cx="377" cy="223" r="3"/><circle cx="491" cy="230" r="3"/><circle cx="167" cy="226" r="2"/><circle cx="428" cy="221" r="4"/><circle cx="554" cy="224" r="4"/><circle cx="83" cy="227" r="4"/><circle cx="323" cy="225" r="2"/><circle cx="703" cy="229" r="2"/><circle cx="508" cy="222" r="5"/><circle cx="395" cy="225" r="4"/><circle cx="247" cy="229" r="4"/><circle cx="590" cy="222" r="5"/><circle cx="451" cy="224" r="3"/><circle cx="634" cy="225" r="4"/><circle cx="72" cy="220" r="2"/><circle cx="290" cy="226" r="2"/><circle cx="3" cy="223" r="5"/></g><g fill="#42663c"><circle cx="933" cy="229" r="4"/><circle cx="904" cy="226" r="4"/><circle cx="939" cy="226" r="4"/><circle cx="862" cy="228" r="3"/><circle cx="933" cy="225" r="2"/><circle cx="934" cy="223" r="4"/><circle cx="868" cy="220" r="3"/><circle cx="935" cy="228" r="3"/><circle cx="909" cy="220" r="4"/><circle cx="916" cy="227" r="3"/><circle cx="928" cy="223" r="3"/><circle cx="941" cy="220" r="3"/><circle cx="878" cy="220" r="2"/></g><g fill="#547e42"><circle cx="845" cy="225" r="5"/><circle cx="788" cy="222" r="2"/><circle cx="843" cy="222" r="4"/><circle cx="770" cy="222" r="2"/></g><g fill="#5a7842"><circle cx="872" cy="229" r="3"/><circle cx="885" cy="224" r="2"/></g><g fill="#607254"><circle cx="1300" cy="224" r="4"/><circle cx="1248" cy="226" r="3"/><circle cx="1298" cy="221" r="3"/><circle cx="1224" cy="225" r="5"/><circle cx="1275" cy="227" r="3"/><circle cx="1259" cy="229" r="2"/><circle cx="1225" cy="221" r="4"/></g><g fill="#5a784e"><circle cx="1089" cy="228" r="3"/><circle cx="1112" cy="222" r="3"/><circle cx="1055" cy="226" r="2"/><circle cx="1118" cy="222" r="5"/><circle cx="1064" cy="229" r="3"/><circle cx="1067" cy="229" r="3"/></g><g fill="#425a42"><circle cx="1419" cy="220" r="3"/><circle cx="1403" cy="230" r="3"/></g><g fill="#60725a"><circle cx="1314" cy="229" r="3"/><circle cx="1370" cy="227" r="2"/><circle cx="1354" cy="230" r="2"/><circle cx="1407" cy="230" r="3"/></g><g fill="#5a7854"><circle cx="1177" cy="229" r="5"/><circle cx="1186" cy="225" r="4"/><circle cx="1189" cy="223" r="5"/></g><g fill="#2a482a"><circle cx="706" cy="234" r="3"/><circle cx="1007" cy="237" r="3"/><circle cx="1245" cy="239" r="3"/><circle cx="294" cy="233" r="4"/><circle cx="1103" cy="237" r="3"/><circle cx="992" cy="234" r="3"/><circle cx="373" cy="235" r="5"/><circle cx="1194" cy="240" r="3"/><circle cx="1200" cy="237" r="3"/><circle cx="547" cy="230" r="2"/><circle cx="94" cy="237" r="2"/><circle cx="1369" cy="232" r="2"/><circle cx="543" cy="233" r="2"/><circle cx="1064" cy="236" r="4"/><circle cx="652" cy="236" r="3"/><circle cx="1141" cy="238" r="2"/><circle cx="1232" cy="233" r="3"/><circle cx="796" cy="235" r="2"/><circle cx="137" cy="231" r="4"/><circle cx="438" cy="240" r="3"/><circle cx="1096" cy="237" r="4"/><circle cx="1342" cy="238" r="4"/><circle cx="597" cy="233" r="4"/><circle cx="627" cy="231" r="3"/><circle cx="519" cy="235" r="3"/><circle cx="337" cy="236" r="4"/><circle cx="473" cy="240" r="5"/><circle cx="1059" cy="237" r="5"/><circle cx="431" cy="233" r="5"/><circle cx="62" cy="236" r="2"/><circle cx="834" cy="235" r="4"/><circle cx="946" cy="235" r="4"/><circle cx="331" cy="233" r="3"/><circle cx="1093" cy="237" r="5"/><circle cx="1148" cy="236" r="3"/><circle cx="599" cy="236" r="3"/><circle cx="442" cy="236" r="3"/><circle cx="1228" cy="234" r="4"/><circle cx="422" cy="236" r="4"/><circle cx="1390" cy="235" r="4"/><circle cx="1323" cy="236" r="4"/><circle cx="1358" cy="240" r="3"/><circle cx="1325" cy="236" r="4"/><circle cx="1170" cy="236" r="4"/><circle cx="555" cy="240" r="3"/><circle cx="745" cy="238" r="3"/><circle cx="1167" cy="239" r="5"/><circle cx="1201" cy="238" r="3"/><circle cx="407" cy="231" r="5"/><circle cx="1251" cy="234" r="4"/><circle cx="1169" cy="236" r="4"/><circle cx="596" cy="234" r="5"/><circle cx="1216" cy="230" r="2"/><circle cx="1177" cy="240" r="4"/><circle cx="883" cy="240" r="5"/><circle cx="172" cy="233" r="3"/><circle cx="1423" cy="233" r="4"/><circle cx="459" cy="239" r="5"/><circle cx="1199" cy="231" r="3"/><circle cx="676" cy="235" r="3"/><circle cx="492" cy="233" r="2"/><circle cx="1186" cy="231" r="2"/><circle cx="1304" cy="234" r="3"/><circle cx="1063" cy="232" r="4"/><circle cx="205" cy="234" r="5"/><circle cx="1232" cy="231" r="5"/><circle cx="1051" cy="238" r="4"/><circle cx="288" cy="239" r="4"/><circle cx="1436" cy="233" r="5"/><circle cx="1054" cy="235" r="4"/><circle cx="188" cy="234" r="3"/><circle cx="403" cy="235" r="4"/><circle cx="1387" cy="237" r="4"/><circle cx="1353" cy="236" r="5"/><circle cx="1219" cy="231" r="2"/><circle cx="374" cy="239" r="4"/><circle cx="467" cy="231" r="5"/><circle cx="739" cy="231" r="4"/><circle cx="1003" cy="231" r="4"/><circle cx="337" cy="236" r="4"/><circle cx="1287" cy="238" r="3"/><circle cx="777" cy="240" r="4"/><circle cx="1331" cy="232" r="2"/><circle cx="113" cy="239" r="3"/><circle cx="247" cy="233" r="2"/><circle cx="1098" cy="237" r="3"/><circle cx="470" cy="231" r="4"/><circle cx="586" cy="232" r="5"/><circle cx="15" cy="237" r="3"/><circle cx="876" cy="239" r="2"/><circle cx="815" cy="233" r="4"/><circle cx="1363" cy="237" r="4"/><circle cx="540" cy="237" r="3"/><circle cx="638" cy="237" r="4"/><circle cx="743" cy="237" r="5"/><circle cx="1231" cy="231" r="3"/><circle cx="247" cy="238" r="5"/><circle cx="783" cy="235" r="4"/><circle cx="494" cy="234" r="4"/><circle cx="1324" cy="234" r="4"/><circle cx="231" cy="234" r="3"/><circle cx="619" cy="236" r="4"/><circle cx="1087" cy="232" r="2"/><circle cx="1415" cy="232" r="5"/><circle cx="710" cy="238" r="3"/><circle cx="1079" cy="235" r="2"/><circle cx="341" cy="234" r="4"/><circle cx="78" cy="238" r="3"/><circle cx="1113" cy="237" r="5"/><circle cx="781" cy="236" r="3"/><circle cx="1002" cy="236" r="4"/><circle cx="372" cy="233" r="2"/><circle cx="892" cy="232" r="4"/><circle cx="1153" cy="234" r="5"/><circle cx="896" cy="233" r="2"/><circle cx="253" cy="233" r="3"/><circle cx="367" cy="231" r="3"/><circle cx="599" cy="233" r="2"/><circle cx="389" cy="237" r="3"/><circle cx="310" cy="238" r="3"/><circle cx="889" cy="230" r="5"/><circle cx="1259" cy="230" r="4"/><circle cx="1194" cy="235" r="5"/><circle cx="996" cy="237" r="5"/><circle cx="7" cy="236" r="3"/><circle cx="640" cy="239" r="5"/><circle cx="983" cy="240" r="2"/><circle cx="819" cy="232" r="2"/><circle cx="1142" cy="230" r="3"/><circle cx="1236" cy="239" r="4"/><circle cx="1036" cy="235" r="4"/><circle cx="538" cy="235" r="3"/><circle cx="745" cy="232" r="3"/><circle cx="248" cy="232" r="2"/><circle cx="92" cy="237" r="3"/><circle cx="580" cy="238" r="3"/><circle cx="1083" cy="237" r="3"/><circle cx="122" cy="233" r="2"/><circle cx="583" cy="230" r="2"/><circle cx="339" cy="231" r="5"/><circle cx="885" cy="231" r="3"/><circle cx="1057" cy="234" r="5"/><circle cx="540" cy="237" r="4"/><circle cx="537" cy="236" r="5"/><circle cx="602" cy="230" r="4"/><circle cx="675" cy="235" r="4"/><circle cx="304" cy="235" r="3"/><circle cx="1357" cy="238" r="3"/><circle cx="1179" cy="234" r="4"/><circle cx="421" cy="235" r="4"/><circle cx="219" cy="236" r="3"/><circle cx="423" cy="238" r="3"/><circle cx="1431" cy="235" r="3"/><circle cx="937" cy="233" r="4"/><circle cx="1130" cy="237" r="3"/><circle cx="609" cy="237" r="3"/><circle cx="85" cy="230" r="3"/><circle cx="783" cy="239" r="4"/><circle cx="562" cy="236" r="4"/><circle cx="48" cy="239" r="5"/><circle cx="559" cy="232" r="3"/><circle cx="1279" cy="237" r="4"/><circle cx="738" cy="238" r="5"/><circle cx="696" cy="236" r="4"/><circle cx="520" cy="230" r="4"/><circle cx="389" cy="233" r="4"/><circle cx="694" cy="230" r="3"/><circle cx="698" cy="231" r="2"/><circle cx="8" cy="231" r="4"/><circle cx="75" cy="235" r="4"/><circle cx="105" cy="234" r="3"/><circle cx="156" cy="233" r="4"/><circle cx="426" cy="235" r="4"/><circle cx="38" cy="234" r="5"/><circle cx="1103" cy="240" r="5"/><circle cx="982" cy="236" r="2"/><circle cx="1261" cy="238" r="5"/><circle cx="160" cy="236" r="3"/><circle cx="1323" cy="234" r="3"/><circle cx="137" cy="231" r="2"/><circle cx="310" cy="233" r="4"/><circle cx="801" cy="236" r="5"/><circle cx="504" cy="232" r="5"/><circle cx="984" cy="236" r="4"/><circle cx="1354" cy="238" r="5"/><circle cx="234" cy="240" r="2"/><circle cx="924" cy="240" r="3"/><circle cx="1399" cy="233" r="2"/><circle cx="1211" cy="234" r="2"/><circle cx="837" cy="237" r="5"/><circle cx="608" cy="234" r="3"/><circle cx="169" cy="237" r="2"/><circle cx="377" cy="237" r="5"/><circle cx="753" cy="231" r="4"/></g><g fill="#5a7848"><circle cx="991" cy="230" r="4"/><circle cx="965" cy="240" r="3"/><circle cx="969" cy="231" r="2"/><circle cx="1031" cy="233" r="3"/><circle cx="963" cy="232" r="2"/><circle cx="941" cy="238" r="3"/><circle cx="945" cy="235" r="3"/><circle cx="905" cy="232" r="5"/><circle cx="977" cy="237" r="4"/><circle cx="987" cy="239" r="3"/></g><g fill="#426636"><circle cx="662" cy="231" r="5"/><circle cx="844" cy="230" r="3"/><circle cx="137" cy="236" r="4"/><circle cx="293" cy="237" r="2"/><circle cx="168" cy="232" r="3"/><circle cx="481" cy="237" r="5"/><circle cx="341" cy="236" r="5"/><circle cx="387" cy="231" r="2"/><circle cx="532" cy="231" r="4"/><circle cx="350" cy="236" r="4"/><circle cx="665" cy="233" r="3"/><circle cx="293" cy="237" r="3"/><circle cx="522" cy="233" r="4"/><circle cx="533" cy="232" r="2"/><circle cx="735" cy="234" r="5"/><circle cx="241" cy="236" r="4"/><circle cx="528" cy="232" r="4"/><circle cx="76" cy="238" r="4"/><circle cx="487" cy="230" r="3"/><circle cx="221" cy="235" r="2"/><circle cx="607" cy="233" r="3"/><circle cx="220" cy="233" r="5"/><circle cx="198" cy="230" r="4"/><circle cx="592" cy="239" r="4"/><circle cx="504" cy="234" r="2"/><circle cx="247" cy="237" r="4"/><circle cx="292" cy="230" r="4"/><circle cx="670" cy="238" r="4"/><circle cx="53" cy="235" r="3"/><circle cx="474" cy="240" r="4"/><circle cx="204" cy="236" r="5"/><circle cx="816" cy="235" r="5"/><circle cx="151" cy="237" r="5"/><circle cx="519" cy="234" r="2"/><circle cx="138" cy="231" r="4"/><circle cx="233" cy="237" r="3"/><circle cx="735" cy="232" r="2"/><circle cx="620" cy="235" r="4"/><circle cx="737" cy="234" r="3"/><circle cx="313" cy="234" r="2"/><circle cx="205" cy="237" r="3"/><circle cx="227" cy="232" r="4"/><circle cx="352" cy="237" r="4"/><circle cx="845" cy="234" r="3"/><circle cx="604" cy="239" r="4"/><circle cx="241" cy="238" r="5"/><circle cx="676" cy="240" r="2"/><circle cx="172" cy="235" r="3"/><circle cx="20" cy="237" r="3"/><circle cx="373" cy="238" r="3"/><circle cx="18" cy="235" r="3"/><circle cx="363" cy="234" r="4"/><circle cx="615" cy="234" r="3"/><circle cx="488" cy="240" r="5"/><circle cx="212" cy="233" r="2"/><circle cx="258" cy="238" r="4"/><circle cx="512" cy="232" r="5"/><circle cx="132" cy="234" r="3"/><circle cx="715" cy="238" r="3"/><circle cx="682" cy="230" r="5"/><circle cx="548" cy="237" r="2"/><circle cx="662" cy="238" r="5"/><circle cx="457" cy="233" r="5"/><circle cx="362" cy="238" r="2"/><circle cx="109" cy="231" r="3"/><circle cx="439" cy="233" r="5"/><circle cx="60" cy="236" r="5"/><circle cx="652" cy="239" r="4"/><circle cx="652" cy="237" r="4"/><circle cx="658" cy="238" r="3"/><circle cx="283" cy="235" r="3"/><circle cx="505" cy="238" r="4"/><circle cx="99" cy="237" r="2"/><circle cx="16" cy="236" r="4"/><circle cx="611" cy="238" r="2"/><circle cx="533" cy="237" r="3"/><circle cx="265" cy="236" r="3"/><circle cx="696" cy="237" r="3"/><circle cx="96" cy="236" r="3"/><circle cx="79" cy="231" r="3"/><circle cx="654" cy="234" r="4"/><circle cx="44" cy="237" r="4"/><circle cx="571" cy="237" r="3"/><circle cx="407" cy="237" r="2"/><circle cx="99" cy="238" r="5"/><circle cx="432" cy="238" r="4"/><circle cx="425" cy="235" r="4"/><circle cx="778" cy="238" r="2"/><circle cx="637" cy="237" r="5"/><circle cx="798" cy="238" r="2"/><circle cx="14" cy="231" r="4"/><circle cx="187" cy="231" r="3"/><circle cx="13" cy="234" r="4"/><circle cx="840" cy="236" r="5"/><circle cx="820" cy="234" r="2"/><circle cx="735" cy="233" r="4"/><circle cx="201" cy="233" r="3"/><circle cx="609" cy="232" r="3"/><circle cx="699" cy="235" r="4"/><circle cx="157" cy="235" r="5"/></g><g fill="#547e3c"><circle cx="480" cy="230" r="4"/><circle cx="101" cy="239" r="4"/><circle cx="691" cy="237" r="5"/><circle cx="332" cy="239" r="4"/><circle cx="81" cy="234" r="4"/><circle cx="224" cy="237" r="2"/><circle cx="427" cy="240" r="5"/><circle cx="378" cy="236" r="4"/><circle cx="738" cy="236" r="5"/><circle cx="616" cy="234" r="2"/><circle cx="632" cy="237" r="4"/><circle cx="304" cy="233" r="5"/><circle cx="44" cy="238" r="4"/><circle cx="295" cy="231" r="2"/><circle cx="374" cy="238" r="5"/><circle cx="510" cy="239" r="3"/><circle cx="256" cy="236" r="3"/><circle cx="654" cy="230" r="2"/><circle cx="723" cy="239" r="4"/><circle cx="569" cy="232" r="2"/><circle cx="323" cy="239" r="3"/><circle cx="735" cy="237" r="4"/><circle cx="710" cy="236" r="5"/><circle cx="237" cy="237" r="4"/><circle cx="343" cy="239" r="3"/><circle cx="263" cy="234" r="3"/><circle cx="340" cy="237" r="2"/><circle cx="187" cy="239" r="2"/><circle cx="390" cy="238" r="3"/><circle cx="506" cy="231" r="4"/><circle cx="188" cy="232" r="4"/><circle cx="107" cy="231" r="4"/><circle cx="475" cy="233" r="2"/><circle cx="529" cy="236" r="5"/><circle cx="362" cy="238" r="4"/><circle cx="257" cy="231" r="2"/><circle cx="19" cy="238" r="4"/><circle cx="703" cy="231" r="2"/><circle cx="657" cy="237" r="2"/><circle cx="31" cy="235" r="4"/><circle cx="353" cy="232" r="4"/><circle cx="106" cy="233" r="4"/><circle cx="711" cy="237" r="5"/><circle cx="407" cy="230" r="2"/><circle cx="681" cy="237" r="3"/><circle cx="592" cy="236" r="4"/><circle cx="634" cy="231" r="3"/><circle cx="511" cy="233" r="4"/><circle cx="77" cy="234" r="4"/><circle cx="660" cy="237" r="5"/><circle cx="666" cy="239" r="4"/><circle cx="537" cy="234" r="5"/><circle cx="696" cy="230" r="2"/><circle cx="410" cy="235" r="5"/><circle cx="643" cy="238" r="4"/><circle cx="521" cy="236" r="4"/><circle cx="282" cy="237" r="4"/><circle cx="520" cy="231" r="3"/><circle cx="567" cy="233" r="3"/><circle cx="732" cy="238" r="3"/><circle cx="484" cy="235" r="3"/><circle cx="536" cy="237" r="3"/><circle cx="278" cy="232" r="2"/></g><g fill="#425a3c"><circle cx="1314" cy="232" r="3"/><circle cx="1384" cy="233" r="3"/><circle cx="1290" cy="237" r="4"/><circle cx="1353" cy="234" r="4"/><circle cx="1313" cy="233" r="3"/><circle cx="1295" cy="234" r="4"/><circle cx="1317" cy="232" r="3"/><circle cx="1294" cy="235" r="3"/><circle cx="1279" cy="231" r="2"/><circle cx="1321" cy="230" r="4"/><circle cx="1353" cy="240" r="3"/><circle cx="1262" cy="234" r="3"/><circle cx="1333" cy="232" r="3"/><circle cx="1342" cy="237" r="3"/><circle cx="1362" cy="234" r="5"/><circle cx="1296" cy="237" r="2"/><circle cx="1381" cy="233" r="3"/><circle cx="1275" cy="237" r="4"/></g><g fill="#42603c"><circle cx="1115" cy="232" r="3"/><circle cx="1051" cy="234" r="3"/><circle cx="1089" cy="230" r="5"/><circle cx="974" cy="237" r="3"/><circle cx="981" cy="235" r="3"/><circle cx="998" cy="237" r="5"/><circle cx="978" cy="233" r="3"/><circle cx="1241" cy="233" r="3"/><circle cx="1203" cy="235" r="5"/><circle cx="1149" cy="231" r="4"/><circle cx="1210" cy="231" r="5"/><circle cx="1138" cy="232" r="5"/><circle cx="1195" cy="235" r="5"/><circle cx="1243" cy="239" r="4"/><circle cx="976" cy="232" r="2"/><circle cx="1148" cy="231" r="3"/><circle cx="999" cy="233" r="3"/><circle cx="1095" cy="239" r="2"/><circle cx="1185" cy="237" r="4"/><circle cx="1132" cy="235" r="3"/><circle cx="1251" cy="232" r="5"/><circle cx="993" cy="238" r="4"/><circle cx="1041" cy="238" r="4"/><circle cx="1030" cy="239" r="2"/><circle cx="1003" cy="233" r="4"/><circle cx="1014" cy="233" r="4"/><circle cx="1090" cy="234" r="5"/><circle cx="1079" cy="235" r="2"/><circle cx="1110" cy="237" r="5"/><circle cx="1085" cy="231" r="5"/><circle cx="1164" cy="230" r="4"/><circle cx="1150" cy="231" r="3"/><circle cx="1255" cy="240" r="4"/><circle cx="1080" cy="235" r="3"/><circle cx="994" cy="232" r="3"/><circle cx="1056" cy="240" r="3"/><circle cx="1110" cy="231" r="4"/><circle cx="1192" cy="239" r="4"/><circle cx="1253" cy="231" r="3"/></g><g fill="#425a42"><circle cx="1421" cy="239" r="3"/><circle cx="1436" cy="233" r="3"/></g><g fill="#60725a"><circle cx="1365" cy="233" r="5"/><circle cx="1355" cy="234" r="5"/><circle cx="1394" cy="234" r="3"/><circle cx="1337" cy="237" r="3"/><circle cx="1390" cy="231" r="4"/><circle cx="1367" cy="234" r="3"/><circle cx="1393" cy="235" r="3"/><circle cx="1332" cy="230" r="4"/><circle cx="1386" cy="240" r="3"/><circle cx="1427" cy="237" r="3"/><circle cx="1354" cy="238" r="5"/><circle cx="1424" cy="230" r="5"/><circle cx="1344" cy="232" r="4"/><circle cx="1361" cy="239" r="4"/><circle cx="1373" cy="237" r="3"/><circle cx="1329" cy="233" r="3"/><circle cx="1391" cy="233" r="5"/></g><g fill="#5a784e"><circle cx="1116" cy="239" r="3"/><circle cx="1080" cy="238" r="4"/><circle cx="1034" cy="238" r="4"/><circle cx="1143" cy="235" r="4"/><circle cx="1160" cy="239" r="4"/><circle cx="1162" cy="233" r="4"/><circle cx="1088" cy="239" r="2"/><circle cx="1055" cy="240" r="3"/><circle cx="1111" cy="233" r="4"/></g><g fill="#547e42"><circle cx="759" cy="240" r="4"/><circle cx="761" cy="238" r="3"/><circle cx="803" cy="230" r="2"/><circle cx="838" cy="235" r="4"/><circle cx="819" cy="233" r="4"/><circle cx="789" cy="238" r="5"/><circle cx="857" cy="232" r="2"/><circle cx="842" cy="234" r="2"/></g><g fill="#5a7854"><circle cx="1179" cy="234" r="2"/><circle cx="1187" cy="235" r="4"/><circle cx="1189" cy="239" r="4"/></g><g fill="#5a7842"><circle cx="865" cy="236" r="3"/><circle cx="873" cy="238" r="4"/><circle cx="865" cy="238" r="3"/><circle cx="869" cy="236" r="3"/></g><g fill="#607254"><circle cx="1304" cy="231" r="5"/><circle cx="1283" cy="239" r="2"/><circle cx="1307" cy="232" r="3"/><circle cx="1301" cy="231" r="3"/><circle cx="1195" cy="238" r="4"/><circle cx="1311" cy="234" r="5"/><circle cx="1261" cy="232" r="2"/><circle cx="1305" cy="234" r="3"/><circle cx="1308" cy="236" r="4"/></g><g fill="#42663c"><circle cx="866" cy="238" r="4"/><circle cx="884" cy="234" r="3"/><circle cx="892" cy="236" r="3"/><circle cx="869" cy="239" r="4"/><circle cx="929" cy="234" r="4"/><circle cx="897" cy="235" r="4"/><circle cx="946" cy="236" r="2"/></g><g fill="#2a482a"><circle cx="1239" cy="247" r="2"/><circle cx="259" cy="244" r="3"/><circle cx="1094" cy="242" r="3"/><circle cx="230" cy="248" r="4"/><circle cx="1364" cy="241" r="3"/><circle cx="581" cy="241" r="4"/><circle cx="854" cy="243" r="4"/><circle cx="534" cy="246" r="4"/><circle cx="189" cy="248" r="3"/><circle cx="248" cy="241" r="3"/><circle cx="1356" cy="248" r="2"/><circle cx="42" cy="250" r="5"/><circle cx="1017" cy="244" r="3"/><circle cx="1066" cy="243" r="3"/><circle cx="603" cy="249" r="2"/><circle cx="356" cy="243" r="2"/><circle cx="374" cy="246" r="4"/><circle cx="337" cy="244" r="3"/><circle cx="767" cy="241" r="5"/><circle cx="1213" cy="250" r="3"/><circle cx="484" cy="249" r="3"/><circle cx="1343" cy="245" r="4"/><circle cx="194" cy="245" r="4"/><circle cx="892" cy="242" r="4"/><circle cx="870" cy="249" r="4"/><circle cx="738" cy="248" r="5"/><circle cx="1302" cy="249" r="4"/><circle cx="596" cy="242" r="3"/><circle cx="762" cy="242" r="5"/><circle cx="1040" cy="242" r="5"/><circle cx="145" cy="240" r="4"/><circle cx="1057" cy="244" r="2"/><circle cx="778" cy="243" r="4"/><circle cx="623" cy="240" r="4"/><circle cx="599" cy="248" r="3"/><circle cx="193" cy="242" r="4"/><circle cx="1111" cy="246" r="2"/><circle cx="67" cy="246" r="3"/><circle cx="1274" cy="245" r="5"/><circle cx="429" cy="241" r="5"/><circle cx="175" cy="248" r="2"/><circle cx="290" cy="248" r="2"/><circle cx="538" cy="241" r="4"/><circle cx="205" cy="246" r="3"/><circle cx="894" cy="250" r="4"/><circle cx="170" cy="243" r="4"/><circle cx="811" cy="242" r="3"/><circle cx="444" cy="241" r="4"/><circle cx="174" cy="245" r="2"/><circle cx="1319" cy="250" r="4"/><circle cx="774" cy="250" r="2"/><circle cx="851" cy="246" r="3"/><circle cx="1102" cy="242" r="2"/><circle cx="545" cy="245" r="3"/><circle cx="864" cy="244" r="3"/><circle cx="445" cy="242" r="3"/><circle cx="438" cy="245" r="4"/><circle cx="944" cy="250" r="3"/><circle cx="912" cy="250" r="3"/><circle cx="427" cy="241" r="4"/><circle cx="1140" cy="241" r="3"/><circle cx="183" cy="243" r="3"/><circle cx="1106" cy="246" r="3"/><circle cx="906" cy="243" r="3"/><circle cx="807" cy="242" r="3"/><circle cx="914" cy="248" r="3"/><circle cx="1394" cy="249" r="5"/><circle cx="363" cy="244" r="3"/><circle cx="321" cy="244" r="3"/><circle cx="638" cy="248" r="4"/><circle cx="494" cy="244" r="2"/><circle cx="673" cy="246" r="3"/><circle cx="838" cy="241" r="4"/><circle cx="486" cy="241" r="4"/><circle cx="1059" cy="248" r="4"/><circle cx="1024" cy="244" r="4"/><circle cx="886" cy="244" r="5"/><circle cx="971" cy="246" r="5"/><circle cx="1085" cy="242" r="3"/><circle cx="679" cy="244" r="3"/><circle cx="709" cy="248" r="4"/><circle cx="178" cy="247" r="3"/><circle cx="529" cy="241" r="2"/><circle cx="395" cy="248" r="4"/><circle cx="135" cy="249" r="3"/><circle cx="772" cy="241" r="4"/><circle cx="709" cy="246" r="5"/><circle cx="435" cy="245" r="4"/><circle cx="1045" cy="241" r="5"/><circle cx="1166" cy="244" r="3"/><circle cx="904" cy="246" r="2"/><circle cx="981" cy="249" r="4"/><circle cx="529" cy="242" r="3"/><circle cx="454" cy="240" r="3"/><circle cx="63" cy="242" r="5"/><circle cx="270" cy="247" r="2"/><circle cx="983" cy="246" r="3"/><circle cx="840" cy="249" r="2"/><circle cx="929" cy="243" r="4"/><circle cx="388" cy="247" r="2"/><circle cx="1242" cy="249" r="5"/><circle cx="332" cy="242" r="4"/><circle cx="571" cy="242" r="3"/><circle cx="384" cy="246" r="5"/><circle cx="1135" cy="246" r="2"/><circle cx="1041" cy="244" r="4"/><circle cx="634" cy="244" r="4"/><circle cx="1196" cy="245" r="3"/><circle cx="195" cy="246" r="5"/><circle cx="976" cy="247" r="3"/><circle cx="663" cy="241" r="2"/><circle cx="130" cy="248" r="5"/><circle cx="394" cy="249" r="5"/><circle cx="1102" cy="244" r="5"/><circle cx="1345" cy="241" r="3"/><circle cx="971" cy="247" r="2"/><circle cx="300" cy="243" r="4"/><circle cx="183" cy="242" r="3"/><circle cx="853" cy="242" r="4"/><circle cx="1337" cy="248" r="4"/><circle cx="1280" cy="241" r="5"/><circle cx="955" cy="246" r="2"/><circle cx="869" cy="249" r="3"/><circle cx="1434" cy="248" r="4"/><circle cx="695" cy="247" r="5"/><circle cx="574" cy="240" r="3"/><circle cx="363" cy="243" r="2"/><circle cx="1175" cy="242" r="4"/><circle cx="57" cy="248" r="5"/><circle cx="641" cy="244" r="3"/><circle cx="639" cy="243" r="3"/><circle cx="360" cy="245" r="5"/><circle cx="589" cy="242" r="3"/><circle cx="692" cy="249" r="2"/><circle cx="601" cy="245" r="3"/><circle cx="534" cy="249" r="4"/><circle cx="783" cy="246" r="2"/><circle cx="465" cy="242" r="4"/><circle cx="391" cy="243" r="4"/><circle cx="428" cy="244" r="2"/><circle cx="505" cy="242" r="5"/><circle cx="218" cy="246" r="4"/><circle cx="1339" cy="246" r="3"/><circle cx="428" cy="241" r="2"/><circle cx="1117" cy="242" r="4"/><circle cx="521" cy="248" r="3"/><circle cx="973" cy="249" r="3"/><circle cx="972" cy="242" r="3"/><circle cx="265" cy="245" r="4"/><circle cx="193" cy="246" r="3"/><circle cx="145" cy="243" r="4"/><circle cx="825" cy="241" r="2"/><circle cx="203" cy="241" r="4"/><circle cx="351" cy="249" r="5"/><circle cx="1091" cy="244" r="5"/><circle cx="56" cy="241" r="4"/><circle cx="1056" cy="248" r="2"/><circle cx="273" cy="242" r="5"/><circle cx="538" cy="243" r="4"/><circle cx="1383" cy="244" r="5"/><circle cx="790" cy="245" r="3"/><circle cx="1236" cy="243" r="2"/><circle cx="729" cy="244" r="5"/><circle cx="365" cy="249" r="3"/><circle cx="581" cy="244" r="5"/><circle cx="1434" cy="245" r="3"/><circle cx="423" cy="249" r="3"/><circle cx="890" cy="246" r="3"/><circle cx="741" cy="245" r="4"/><circle cx="1094" cy="246" r="4"/><circle cx="127" cy="243" r="2"/><circle cx="475" cy="249" r="4"/><circle cx="665" cy="246" r="3"/><circle cx="953" cy="250" r="4"/><circle cx="791" cy="245" r="4"/><circle cx="203" cy="243" r="5"/></g><g fill="#42663c"><circle cx="901" cy="243" r="3"/><circle cx="947" cy="245" r="3"/><circle cx="859" cy="240" r="4"/><circle cx="875" cy="249" r="2"/><circle cx="910" cy="248" r="5"/><circle cx="930" cy="241" r="5"/><circle cx="929" cy="241" r="2"/><circle cx="906" cy="246" r="3"/><circle cx="859" cy="242" r="3"/><circle cx="941" cy="242" r="2"/><circle cx="912" cy="248" r="3"/><circle cx="924" cy="246" r="3"/><circle cx="887" cy="243" r="4"/></g><g fill="#60725a"><circle cx="1422" cy="242" r="4"/><circle cx="1407" cy="248" r="2"/><circle cx="1408" cy="246" r="5"/></g><g fill="#42603c"><circle cx="1165" cy="247" r="2"/><circle cx="952" cy="247" r="3"/><circle cx="1131" cy="250" r="4"/><circle cx="1040" cy="245" r="2"/><circle cx="1025" cy="245" r="5"/><circle cx="978" cy="245" r="5"/><circle cx="1094" cy="245" r="3"/><circle cx="1064" cy="240" r="3"/><circle cx="1115" cy="242" r="4"/><circle cx="967" cy="243" r="2"/><circle cx="1213" cy="243" r="5"/><circle cx="1138" cy="244" r="3"/><circle cx="1044" cy="244" r="5"/><circle cx="1244" cy="244" r="3"/><circle cx="1190" cy="247" r="3"/><circle cx="1218" cy="250" r="3"/><circle cx="1198" cy="247" r="3"/><circle cx="957" cy="242" r="3"/><circle cx="959" cy="242" r="3"/><circle cx="960" cy="247" r="3"/><circle cx="1194" cy="241" r="2"/><circle cx="993" cy="248" r="3"/><circle cx="1139" cy="240" r="3"/><circle cx="1103" cy="242" r="3"/><circle cx="1077" cy="243" r="4"/><circle cx="1193" cy="246" r="3"/><circle cx="1126" cy="244" r="4"/><circle cx="1167" cy="240" r="3"/><circle cx="1166" cy="241" r="2"/><circle cx="1077" cy="245" r="5"/><circle cx="1013" cy="243" r="4"/><circle cx="1162" cy="250" r="3"/><circle cx="1108" cy="243" r="3"/><circle cx="957" cy="248" r="3"/><circle cx="1081" cy="242" r="4"/><circle cx="1074" cy="243" r="4"/><circle cx="1114" cy="242" r="5"/><circle cx="1049" cy="249" r="5"/><circle cx="1015" cy="244" r="3"/><circle cx="1071" cy="243" r="5"/><circle cx="1046" cy="242" r="2"/><circle cx="1138" cy="248" r="4"/></g><g fill="#547e3c"><circle cx="730" cy="245" r="5"/><circle cx="752" cy="249" r="5"/><circle cx="473" cy="245" r="2"/><circle cx="50" cy="243" r="3"/><circle cx="419" cy="247" r="5"/><circle cx="711" cy="247" r="3"/><circle cx="328" cy="242" r="4"/><circle cx="266" cy="244" r="2"/><circle cx="42" cy="248" r="4"/><circle cx="493" cy="245" r="4"/><circle cx="671" cy="244" r="3"/><circle cx="357" cy="242" r="2"/><circle cx="382" cy="246" r="3"/><circle cx="661" cy="245" r="3"/><circle cx="350" cy="246" r="4"/><circle cx="295" cy="250" r="3"/><circle cx="77" cy="241" r="3"/><circle cx="447" cy="240" r="3"/><circle cx="275" cy="246" r="5"/><circle cx="697" cy="242" r="4"/><circle cx="306" cy="243" r="5"/><circle cx="711" cy="243" r="4"/><circle cx="632" cy="249" r="4"/><circle cx="671" cy="249" r="4"/><circle cx="656" cy="246" r="4"/><circle cx="83" cy="241" r="3"/><circle cx="424" cy="242" r="2"/><circle cx="120" cy="241" r="4"/><circle cx="333" cy="247" r="4"/><circle cx="250" cy="250" r="4"/><circle cx="706" cy="245" r="3"/><circle cx="601" cy="245" r="5"/><circle cx="578" cy="243" r="3"/><circle cx="658" cy="246" r="3"/><circle cx="123" cy="242" r="4"/><circle cx="421" cy="244" r="2"/><circle cx="184" cy="247" r="5"/><circle cx="419" cy="249" r="3"/><circle cx="337" cy="243" r="2"/><circle cx="227" cy="242" r="3"/><circle cx="182" cy="248" r="2"/><circle cx="666" cy="242" r="4"/><circle cx="1" cy="247" r="2"/><circle cx="456" cy="245" r="4"/><circle cx="438" cy="249" r="2"/><circle cx="451" cy="249" r="4"/></g><g fill="#426636"><circle cx="200" cy="248" r="2"/><circle cx="542" cy="245" r="3"/><circle cx="658" cy="246" r="3"/><circle cx="526" cy="242" r="4"/><circle cx="65" cy="249" r="3"/><circle cx="823" cy="243" r="5"/><circle cx="190" cy="248" r="2"/><circle cx="296" cy="246" r="3"/><circle cx="50" cy="248" r="3"/><circle cx="432" cy="247" r="3"/><circle cx="296" cy="246" r="3"/><circle cx="278" cy="243" r="4"/><circle cx="786" cy="248" r="4"/><circle cx="232" cy="248" r="3"/><circle cx="38" cy="245" r="4"/><circle cx="421" cy="248" r="2"/><circle cx="22" cy="246" r="3"/><circle cx="843" cy="246" r="4"/><circle cx="298" cy="248" r="3"/><circle cx="283" cy="248" r="3"/><circle cx="193" cy="242" r="4"/><circle cx="331" cy="248" r="4"/><circle cx="193" cy="246" r="3"/><circle cx="371" cy="250" r="5"/><circle cx="154" cy="249" r="5"/><circle cx="597" cy="241" r="3"/><circle cx="728" cy="241" r="3"/><circle cx="389" cy="250" r="3"/><circle cx="18" cy="244" r="4"/><circle cx="568" cy="241" r="5"/><circle cx="332" cy="242" r="3"/><circle cx="355" cy="248" r="2"/><circle cx="187" cy="248" r="2"/><circle cx="13" cy="245" r="2"/><circle cx="183" cy="245" r="4"/><circle cx="671" cy="244" r="5"/><circle cx="670" cy="242" r="5"/><circle cx="480" cy="243" r="5"/><circle cx="486" cy="241" r="3"/><circle cx="807" cy="245" r="5"/><circle cx="447" cy="241" r="3"/><circle cx="77" cy="240" r="3"/><circle cx="121" cy="242" r="3"/><circle cx="423" cy="242" r="3"/><circle cx="640" cy="247" r="5"/><circle cx="372" cy="247" r="4"/><circle cx="77" cy="243" r="5"/><circle cx="310" cy="244" r="2"/><circle cx="536" cy="246" r="5"/><circle cx="191" cy="245" r="3"/><circle cx="746" cy="249" r="3"/><circle cx="349" cy="242" r="3"/><circle cx="388" cy="246" r="3"/><circle cx="506" cy="247" r="5"/><circle cx="439" cy="244" r="5"/><circle cx="515" cy="249" r="3"/><circle cx="667" cy="242" r="4"/><circle cx="256" cy="243" r="5"/><circle cx="163" cy="250" r="5"/><circle cx="52" cy="241" r="5"/><circle cx="758" cy="249" r="4"/><circle cx="289" cy="247" r="5"/><circle cx="283" cy="243" r="4"/><circle cx="623" cy="249" r="4"/><circle cx="703" cy="244" r="3"/><circle cx="807" cy="241" r="3"/><circle cx="771" cy="250" r="2"/><circle cx="402" cy="240" r="5"/><circle cx="455" cy="246" r="2"/><circle cx="127" cy="248" r="3"/><circle cx="383" cy="248" r="3"/><circle cx="639" cy="240" r="5"/><circle cx="570" cy="244" r="4"/><circle cx="587" cy="240" r="5"/><circle cx="439" cy="242" r="3"/><circle cx="610" cy="248" r="4"/><circle cx="404" cy="249" r="3"/><circle cx="175" cy="244" r="4"/><circle cx="221" cy="240" r="3"/><circle cx="547" cy="242" r="4"/><circle cx="680" cy="240" r="4"/><circle cx="824" cy="245" r="4"/><circle cx="300" cy="247" r="5"/><circle cx="531" cy="248" r="5"/><circle cx="661" cy="244" r="3"/><circle cx="37" cy="244" r="3"/><circle cx="618" cy="243" r="3"/><circle cx="753" cy="246" r="3"/><circle cx="399" cy="243" r="2"/><circle cx="693" cy="240" r="5"/><circle cx="394" cy="241" r="4"/><circle cx="595" cy="246" r="4"/></g><g fill="#5a7848"><circle cx="930" cy="249" r="2"/><circle cx="946" cy="245" r="4"/><circle cx="922" cy="242" r="3"/><circle cx="970" cy="245" r="4"/><circle cx="935" cy="245" r="3"/><circle cx="1008" cy="240" r="5"/><circle cx="986" cy="245" r="2"/></g><g fill="#607254"><circle cx="1199" cy="243" r="3"/><circle cx="1222" cy="242" r="4"/><circle cx="1193" cy="241" r="2"/><circle cx="1301" cy="242" r="5"/><circle cx="1204" cy="241" r="3"/></g><g fill="#5a7842"><circle cx="869" cy="245" r="3"/></g><g fill="#5a784e"><circle cx="1109" cy="243" r="4"/><circle cx="1067" cy="244" r="5"/><circle cx="1052" cy="240" r="5"/><circle cx="1146" cy="245" r="4"/><circle cx="1133" cy="241" r="2"/><circle cx="1073" cy="247" r="4"/><circle cx="1051" cy="250" r="4"/><circle cx="1042" cy="240" r="2"/><circle cx="1060" cy="245" r="4"/><circle cx="1167" cy="244" r="3"/></g><g fill="#547e42"><circle cx="857" cy="241" r="4"/><circle cx="824" cy="242" r="2"/><circle cx="786" cy="248" r="5"/><circle cx="841" cy="248" r="3"/><circle cx="848" cy="244" r="4"/><circle cx="769" cy="244" r="4"/><circle cx="791" cy="244" r="4"/><circle cx="756" cy="242" r="4"/></g><g fill="#425a3c"><circle cx="1325" cy="240" r="4"/><circle cx="1376" cy="245" r="3"/><circle cx="1367" cy="242" r="5"/><circle cx="1309" cy="242" r="3"/><circle cx="1283" cy="247" r="2"/><circle cx="1376" cy="249" r="2"/><circle cx="1265" cy="250" r="2"/><circle cx="1265" cy="245" r="4"/><circle cx="1319" cy="248" r="2"/><circle cx="1296" cy="241" r="4"/><circle cx="1273" cy="248" r="4"/></g><g fill="#5a7854"><circle cx="1187" cy="242" r="2"/></g><g fill="#425a42"><circle cx="1431" cy="248" r="4"/><circle cx="1426" cy="243" r="4"/><circle cx="1405" cy="250" r="3"/><circle cx="1414" cy="247" r="4"/><circle cx="1433" cy="242" r="3"/><circle cx="1434" cy="246" r="4"/></g><g fill="#42603c"><circle cx="1146" cy="255" r="5"/><circle cx="1230" cy="251" r="3"/><circle cx="1203" cy="253" r="4"/><circle cx="1076" cy="252" r="3"/><circle cx="1165" cy="259" r="3"/><circle cx="992" cy="257" r="4"/><circle cx="1029" cy="253" r="5"/><circle cx="1076" cy="253" r="4"/><circle cx="1142" cy="260" r="5"/><circle cx="1182" cy="260" r="3"/><circle cx="1034" cy="254" r="3"/><circle cx="957" cy="258" r="3"/><circle cx="1196" cy="254" r="2"/><circle cx="1207" cy="255" r="5"/><circle cx="1177" cy="254" r="2"/><circle cx="1123" cy="254" r="4"/><circle cx="1095" cy="252" r="4"/><circle cx="1185" cy="260" r="3"/><circle cx="1249" cy="259" r="3"/><circle cx="1055" cy="256" r="4"/><circle cx="1070" cy="253" r="5"/><circle cx="1150" cy="258" r="3"/><circle cx="1178" cy="252" r="3"/><circle cx="1161" cy="254" r="4"/><circle cx="1215" cy="251" r="3"/><circle cx="951" cy="251" r="4"/><circle cx="1229" cy="255" r="4"/><circle cx="989" cy="252" r="3"/><circle cx="1034" cy="252" r="4"/><circle cx="1002" cy="252" r="4"/><circle cx="1217" cy="259" r="5"/><circle cx="1128" cy="258" r="3"/><circle cx="1125" cy="257" r="5"/><circle cx="1000" cy="250" r="4"/><circle cx="1177" cy="250" r="2"/><circle cx="1184" cy="260" r="4"/><circle cx="1049" cy="250" r="4"/><circle cx="1074" cy="256" r="2"/></g><g fill="#426636"><circle cx="351" cy="257" r="4"/><circle cx="146" cy="258" r="4"/><circle cx="81" cy="250" r="5"/><circle cx="167" cy="253" r="5"/><circle cx="844" cy="254" r="4"/><circle cx="640" cy="251" r="4"/><circle cx="700" cy="257" r="4"/><circle cx="500" cy="256" r="4"/><circle cx="321" cy="259" r="3"/><circle cx="199" cy="258" r="2"/><circle cx="798" cy="257" r="3"/><circle cx="660" cy="258" r="2"/><circle cx="246" cy="257" r="4"/><circle cx="750" cy="251" r="4"/><circle cx="400" cy="258" r="4"/><circle cx="139" cy="257" r="3"/><circle cx="153" cy="258" r="5"/><circle cx="30" cy="260" r="2"/><circle cx="98" cy="252" r="4"/><circle cx="245" cy="251" r="3"/><circle cx="424" cy="252" r="4"/><circle cx="454" cy="252" r="3"/><circle cx="475" cy="256" r="3"/><circle cx="540" cy="251" r="5"/><circle cx="614" cy="251" r="3"/><circle cx="725" cy="254" r="4"/><circle cx="835" cy="256" r="4"/><circle cx="643" cy="260" r="5"/><circle cx="850" cy="254" r="4"/><circle cx="235" cy="259" r="4"/><circle cx="798" cy="252" r="5"/><circle cx="617" cy="254" r="2"/><circle cx="538" cy="260" r="4"/><circle cx="172" cy="255" r="5"/><circle cx="825" cy="256" r="3"/><circle cx="447" cy="252" r="4"/><circle cx="177" cy="255" r="4"/><circle cx="648" cy="256" r="4"/><circle cx="522" cy="253" r="5"/><circle cx="835" cy="254" r="5"/><circle cx="655" cy="251" r="2"/><circle cx="759" cy="259" r="4"/><circle cx="616" cy="251" r="3"/><circle cx="431" cy="258" r="4"/><circle cx="379" cy="256" r="3"/><circle cx="529" cy="256" r="4"/><circle cx="121" cy="252" r="3"/><circle cx="192" cy="254" r="4"/><circle cx="730" cy="258" r="5"/><circle cx="167" cy="258" r="4"/><circle cx="650" cy="257" r="4"/><circle cx="316" cy="260" r="3"/><circle cx="492" cy="257" r="2"/><circle cx="666" cy="255" r="5"/><circle cx="313" cy="252" r="5"/><circle cx="178" cy="250" r="2"/><circle cx="29" cy="257" r="2"/><circle cx="575" cy="252" r="4"/><circle cx="234" cy="253" r="3"/><circle cx="442" cy="257" r="3"/><circle cx="578" cy="253" r="4"/><circle cx="797" cy="253" r="2"/><circle cx="839" cy="260" r="2"/><circle cx="837" cy="259" r="4"/><circle cx="318" cy="253" r="3"/><circle cx="325" cy="252" r="5"/><circle cx="592" cy="253" r="3"/><circle cx="511" cy="258" r="2"/><circle cx="789" cy="255" r="3"/><circle cx="547" cy="251" r="3"/><circle cx="139" cy="258" r="3"/><circle cx="136" cy="259" r="3"/><circle cx="787" cy="256" r="2"/><circle cx="58" cy="257" r="5"/><circle cx="715" cy="257" r="2"/><circle cx="547" cy="254" r="4"/><circle cx="317" cy="260" r="3"/><circle cx="633" cy="257" r="4"/><circle cx="355" cy="253" r="4"/><circle cx="448" cy="259" r="4"/><circle cx="318" cy="258" r="4"/><circle cx="432" cy="252" r="2"/><circle cx="137" cy="259" r="2"/><circle cx="268" cy="253" r="2"/><circle cx="117" cy="259" r="4"/><circle cx="208" cy="257" r="4"/><circle cx="855" cy="252" r="2"/><circle cx="85" cy="256" r="4"/><circle cx="147" cy="257" r="4"/><circle cx="384" cy="257" r="3"/><circle cx="516" cy="251" r="3"/><circle cx="831" cy="252" r="3"/><circle cx="101" cy="255" r="4"/><circle cx="749" cy="257" r="3"/><circle cx="307" cy="251" r="2"/><circle cx="75" cy="250" r="2"/><circle cx="626" cy="256" r="4"/><circle cx="204" cy="259" r="3"/><circle cx="274" cy="254" r="5"/><circle cx="114" cy="251" r="3"/><circle cx="351" cy="250" r="4"/><circle cx="770" cy="256" r="5"/><circle cx="36" cy="250" r="3"/><circle cx="57" cy="254" r="4"/><circle cx="820" cy="256" r="4"/><circle cx="245" cy="253" r="3"/><circle cx="597" cy="255" r="5"/><circle cx="84" cy="252" r="3"/><circle cx="819" cy="255" r="3"/><circle cx="562" cy="254" r="2"/><circle cx="238" cy="254" r="2"/><circle cx="510" cy="253" r="4"/></g><g fill="#60725a"><circle cx="1356" cy="252" r="4"/><circle cx="1430" cy="257" r="2"/><circle cx="1428" cy="259" r="2"/><circle cx="1345" cy="250" r="4"/><circle cx="1390" cy="251" r="5"/></g><g fill="#2a482a"><circle cx="1426" cy="254" r="4"/><circle cx="1001" cy="252" r="4"/><circle cx="1036" cy="250" r="2"/><circle cx="1373" cy="252" r="3"/><circle cx="611" cy="256" r="4"/><circle cx="158" cy="251" r="2"/><circle cx="961" cy="252" r="4"/><circle cx="1048" cy="253" r="2"/><circle cx="1100" cy="254" r="4"/><circle cx="935" cy="253" r="4"/><circle cx="400" cy="255" r="4"/><circle cx="617" cy="255" r="3"/><circle cx="1043" cy="259" r="3"/><circle cx="1359" cy="256" r="4"/><circle cx="417" cy="259" r="4"/><circle cx="190" cy="257" r="5"/><circle cx="635" cy="254" r="4"/><circle cx="1119" cy="255" r="3"/><circle cx="189" cy="253" r="4"/><circle cx="133" cy="259" r="5"/><circle cx="1429" cy="257" r="3"/><circle cx="675" cy="252" r="4"/><circle cx="1261" cy="255" r="3"/><circle cx="1251" cy="257" r="4"/><circle cx="448" cy="259" r="4"/><circle cx="684" cy="251" r="5"/><circle cx="244" cy="257" r="4"/><circle cx="1326" cy="258" r="3"/><circle cx="1311" cy="251" r="3"/><circle cx="220" cy="255" r="4"/><circle cx="1397" cy="250" r="3"/><circle cx="1273" cy="257" r="2"/><circle cx="1212" cy="257" r="4"/><circle cx="788" cy="252" r="3"/><circle cx="63" cy="252" r="2"/><circle cx="713" cy="253" r="3"/><circle cx="1249" cy="257" r="3"/><circle cx="427" cy="255" r="3"/><circle cx="1178" cy="254" r="4"/><circle cx="909" cy="253" r="4"/><circle cx="975" cy="251" r="3"/><circle cx="1249" cy="257" r="3"/><circle cx="1267" cy="250" r="4"/><circle cx="444" cy="256" r="5"/><circle cx="108" cy="259" r="3"/><circle cx="782" cy="259" r="2"/><circle cx="1351" cy="259" r="4"/><circle cx="855" cy="253" r="2"/><circle cx="979" cy="256" r="4"/><circle cx="724" cy="255" r="4"/><circle cx="1383" cy="254" r="4"/><circle cx="327" cy="251" r="2"/><circle cx="9" cy="250" r="3"/><circle cx="1141" cy="255" r="3"/><circle cx="317" cy="252" r="4"/><circle cx="537" cy="255" r="5"/><circle cx="685" cy="255" r="4"/><circle cx="890" cy="252" r="2"/><circle cx="127" cy="254" r="3"/><circle cx="506" cy="259" r="3"/><circle cx="733" cy="252" r="4"/><circle cx="1430" cy="254" r="3"/><circle cx="1084" cy="254" r="3"/><circle cx="266" cy="257" r="3"/><circle cx="274" cy="258" r="3"/><circle cx="1284" cy="254" r="2"/><circle cx="1273" cy="255" r="3"/><circle cx="322" cy="250" r="4"/><circle cx="397" cy="250" r="3"/><circle cx="855" cy="254" r="2"/><circle cx="328" cy="258" r="4"/><circle cx="710" cy="256" r="2"/><circle cx="50" cy="253" r="4"/><circle cx="241" cy="256" r="4"/><circle cx="877" cy="254" r="4"/><circle cx="1010" cy="251" r="3"/><circle cx="1073" cy="257" r="5"/><circle cx="636" cy="255" r="4"/><circle cx="542" cy="259" r="3"/><circle cx="856" cy="259" r="3"/><circle cx="284" cy="251" r="2"/><circle cx="1424" cy="252" r="3"/><circle cx="246" cy="255" r="3"/><circle cx="483" cy="257" r="3"/><circle cx="626" cy="256" r="3"/><circle cx="1139" cy="260" r="5"/><circle cx="294" cy="253" r="3"/><circle cx="558" cy="256" r="4"/><circle cx="1286" cy="251" r="4"/><circle cx="837" cy="254" r="3"/><circle cx="717" cy="259" r="3"/><circle cx="542" cy="252" r="5"/><circle cx="671" cy="257" r="3"/><circle cx="614" cy="257" r="4"/><circle cx="1129" cy="258" r="3"/><circle cx="1185" cy="252" r="4"/><circle cx="28" cy="257" r="4"/><circle cx="483" cy="258" r="4"/><circle cx="773" cy="260" r="3"/><circle cx="1154" cy="250" r="4"/><circle cx="776" cy="256" r="4"/><circle cx="218" cy="253" r="5"/><circle cx="1111" cy="251" r="3"/><circle cx="591" cy="257" r="5"/><circle cx="1130" cy="250" r="3"/><circle cx="89" cy="251" r="2"/><circle cx="270" cy="259" r="3"/><circle cx="340" cy="252" r="2"/><circle cx="422" cy="255" r="4"/><circle cx="449" cy="251" r="5"/><circle cx="436" cy="252" r="4"/><circle cx="93" cy="251" r="4"/><circle cx="564" cy="252" r="3"/><circle cx="1304" cy="258" r="2"/><circle cx="788" cy="255" r="3"/><circle cx="374" cy="253" r="3"/><circle cx="1140" cy="252" r="5"/><circle cx="1077" cy="254" r="3"/><circle cx="282" cy="256" r="5"/><circle cx="616" cy="252" r="4"/><circle cx="41" cy="258" r="3"/><circle cx="43" cy="256" r="5"/><circle cx="995" cy="259" r="3"/><circle cx="218" cy="259" r="4"/><circle cx="1299" cy="253" r="3"/><circle cx="1418" cy="258" r="4"/><circle cx="259" cy="255" r="3"/><circle cx="163" cy="259" r="5"/><circle cx="376" cy="257" r="3"/><circle cx="1430" cy="257" r="3"/><circle cx="1105" cy="252" r="3"/><circle cx="675" cy="256" r="4"/><circle cx="65" cy="258" r="3"/><circle cx="1354" cy="251" r="4"/><circle cx="41" cy="253" r="3"/><circle cx="1279" cy="255" r="2"/><circle cx="293" cy="256" r="4"/><circle cx="386" cy="252" r="4"/><circle cx="1347" cy="253" r="4"/><circle cx="438" cy="257" r="4"/><circle cx="483" cy="259" r="3"/><circle cx="893" cy="250" r="4"/><circle cx="609" cy="254" r="2"/><circle cx="841" cy="254" r="3"/><circle cx="1203" cy="256" r="4"/><circle cx="110" cy="257" r="3"/><circle cx="311" cy="257" r="3"/><circle cx="913" cy="255" r="4"/><circle cx="24" cy="258" r="3"/><circle cx="1402" cy="255" r="4"/><circle cx="539" cy="259" r="4"/><circle cx="325" cy="250" r="4"/><circle cx="598" cy="259" r="2"/><circle cx="1064" cy="258" r="4"/><circle cx="148" cy="257" r="3"/><circle cx="1274" cy="251" r="3"/><circle cx="171" cy="257" r="5"/><circle cx="548" cy="258" r="4"/><circle cx="776" cy="252" r="3"/><circle cx="1148" cy="255" r="3"/><circle cx="260" cy="252" r="2"/><circle cx="1349" cy="253" r="5"/><circle cx="827" cy="256" r="2"/><circle cx="479" cy="258" r="4"/><circle cx="623" cy="257" r="2"/><circle cx="917" cy="259" r="5"/><circle cx="814" cy="259" r="4"/><circle cx="1381" cy="250" r="4"/><circle cx="886" cy="258" r="3"/><circle cx="768" cy="254" r="5"/><circle cx="105" cy="253" r="3"/><circle cx="1191" cy="259" r="4"/><circle cx="214" cy="259" r="3"/><circle cx="1160" cy="255" r="4"/><circle cx="1400" cy="258" r="3"/><circle cx="865" cy="254" r="5"/><circle cx="1167" cy="251" r="3"/><circle cx="945" cy="256" r="3"/><circle cx="666" cy="257" r="2"/><circle cx="62" cy="257" r="4"/><circle cx="731" cy="250" r="2"/><circle cx="565" cy="253" r="3"/><circle cx="841" cy="253" r="3"/><circle cx="612" cy="256" r="3"/><circle cx="706" cy="251" r="4"/><circle cx="1431" cy="260" r="3"/><circle cx="17" cy="253" r="4"/><circle cx="1377" cy="258" r="4"/><circle cx="83" cy="255" r="3"/><circle cx="282" cy="258" r="4"/><circle cx="844" cy="259" r="5"/><circle cx="1331" cy="255" r="4"/><circle cx="1034" cy="255" r="4"/><circle cx="50" cy="254" r="3"/><circle cx="712" cy="255" r="3"/></g><g fill="#425a3c"><circle cx="1347" cy="256" r="3"/><circle cx="1264" cy="254" r="2"/><circle cx="1299" cy="251" r="5"/><circle cx="1290" cy="252" r="4"/><circle cx="1340" cy="257" r="5"/><circle cx="1332" cy="251" r="5"/><circle cx="1287" cy="258" r="2"/><circle cx="1302" cy="252" r="5"/><circle cx="1275" cy="253" r="2"/><circle cx="1330" cy="250" r="4"/><circle cx="1316" cy="252" r="4"/><circle cx="1277" cy="258" r="2"/><circle cx="1326" cy="256" r="3"/><circle cx="1367" cy="252" r="3"/><circle cx="1351" cy="251" r="4"/><circle cx="1280" cy="251" r="3"/><circle cx="1377" cy="258" r="4"/><circle cx="1264" cy="259" r="2"/><circle cx="1268" cy="253" r="3"/><circle cx="1336" cy="252" r="4"/><circle cx="1385" cy="255" r="5"/><circle cx="1331" cy="255" r="5"/></g><g fill="#425a42"><circle cx="1439" cy="254" r="3"/><circle cx="1420" cy="251" r="5"/><circle cx="1400" cy="257" r="5"/><circle cx="1412" cy="252" r="3"/><circle cx="1435" cy="258" r="3"/><circle cx="1418" cy="253" r="3"/><circle cx="1418" cy="250" r="5"/><circle cx="1404" cy="260" r="3"/><circle cx="1421" cy="259" r="4"/></g><g fill="#5a784e"><circle cx="1167" cy="257" r="4"/><circle cx="1121" cy="256" r="4"/><circle cx="1146" cy="254" r="3"/><circle cx="1141" cy="259" r="4"/><circle cx="1060" cy="250" r="3"/><circle cx="1089" cy="250" r="2"/><circle cx="1099" cy="258" r="3"/></g><g fill="#547e42"><circle cx="756" cy="252" r="3"/><circle cx="773" cy="258" r="4"/><circle cx="858" cy="253" r="4"/><circle cx="801" cy="259" r="2"/><circle cx="836" cy="255" r="2"/><circle cx="806" cy="254" r="4"/><circle cx="849" cy="257" r="4"/></g><g fill="#5a7848"><circle cx="1022" cy="256" r="4"/><circle cx="1017" cy="260" r="4"/><circle cx="959" cy="255" r="3"/><circle cx="1023" cy="256" r="2"/><circle cx="1016" cy="257" r="2"/><circle cx="933" cy="250" r="4"/><circle cx="993" cy="251" r="4"/><circle cx="979" cy="252" r="4"/><circle cx="973" cy="260" r="3"/><circle cx="1001" cy="256" r="4"/><circle cx="1030" cy="252" r="4"/></g><g fill="#547e3c"><circle cx="654" cy="251" r="5"/><circle cx="479" cy="251" r="4"/><circle cx="314" cy="257" r="3"/><circle cx="727" cy="254" r="4"/><circle cx="89" cy="255" r="4"/><circle cx="151" cy="252" r="3"/><circle cx="303" cy="256" r="3"/><circle cx="456" cy="255" r="4"/><circle cx="320" cy="253" r="2"/><circle cx="499" cy="251" r="3"/><circle cx="476" cy="250" r="2"/><circle cx="210" cy="257" r="2"/><circle cx="522" cy="250" r="5"/><circle cx="444" cy="253" r="5"/><circle cx="237" cy="255" r="3"/><circle cx="584" cy="259" r="2"/><circle cx="232" cy="251" r="3"/><circle cx="598" cy="254" r="3"/><circle cx="310" cy="252" r="5"/><circle cx="726" cy="253" r="4"/><circle cx="534" cy="259" r="4"/><circle cx="729" cy="259" r="5"/><circle cx="551" cy="251" r="5"/><circle cx="367" cy="259" r="2"/><circle cx="154" cy="258" r="4"/><circle cx="29" cy="259" r="3"/><circle cx="733" cy="254" r="4"/><circle cx="515" cy="259" r="4"/><circle cx="98" cy="255" r="2"/><circle cx="84" cy="255" r="4"/><circle cx="20" cy="260" r="5"/><circle cx="449" cy="251" r="4"/><circle cx="393" cy="259" r="3"/><circle cx="733" cy="251" r="4"/><circle cx="259" cy="253" r="4"/><circle cx="276" cy="253" r="2"/><circle cx="714" cy="254" r="4"/><circle cx="332" cy="257" r="3"/><circle cx="213" cy="259" r="3"/><circle cx="209" cy="253" r="3"/><circle cx="184" cy="250" r="4"/><circle cx="242" cy="257" r="3"/><circle cx="195" cy="255" r="2"/><circle cx="81" cy="259" r="4"/><circle cx="55" cy="256" r="4"/><circle cx="283" cy="257" r="5"/><circle cx="373" cy="251" r="3"/><circle cx="511" cy="259" r="3"/><circle cx="108" cy="253" r="2"/><circle cx="501" cy="254" r="4"/><circle cx="532" cy="256" r="4"/><circle cx="132" cy="256" r="3"/><circle cx="306" cy="253" r="4"/><circle cx="59" cy="252" r="4"/><circle cx="345" cy="258" r="4"/></g><g fill="#42663c"><circle cx="938" cy="260" r="4"/><circle cx="934" cy="256" r="4"/><circle cx="874" cy="259" r="3"/><circle cx="882" cy="255" r="2"/><circle cx="934" cy="256" r="5"/><circle cx="907" cy="252" r="3"/><circle cx="889" cy="256" r="3"/><circle cx="860" cy="259" r="4"/><circle cx="947" cy="258" r="4"/><circle cx="861" cy="253" r="5"/><circle cx="879" cy="252" r="5"/><circle cx="860" cy="256" r="5"/><circle cx="909" cy="259" r="2"/><circle cx="876" cy="257" r="3"/></g><g fill="#607254"><circle cx="1294" cy="252" r="3"/><circle cx="1204" cy="257" r="2"/><circle cx="1260" cy="252" r="3"/><circle cx="1273" cy="257" r="2"/></g><g fill="#5a7842"><circle cx="885" cy="251" r="5"/><circle cx="889" cy="251" r="3"/></g><g fill="#547e3c"><circle cx="17" cy="265" r="3"/><circle cx="688" cy="267" r="4"/><circle cx="329" cy="264" r="5"/><circle cx="641" cy="268" r="4"/><circle cx="346" cy="268" r="3"/><circle cx="656" cy="268" r="3"/><circle cx="513" cy="268" r="2"/><circle cx="518" cy="261" r="4"/><circle cx="433" cy="261" r="4"/><circle cx="266" cy="265" r="3"/><circle cx="317" cy="267" r="4"/><circle cx="553" cy="266" r="2"/><circle cx="99" cy="263" r="5"/><circle cx="214" cy="269" r="2"/><circle cx="597" cy="266" r="5"/><circle cx="339" cy="265" r="4"/><circle cx="535" cy="268" r="3"/><circle cx="228" cy="261" r="2"/><circle cx="665" cy="262" r="2"/><circle cx="603" cy="264" r="3"/><circle cx="723" cy="269" r="3"/><circle cx="680" cy="265" r="5"/><circle cx="128" cy="266" r="2"/><circle cx="512" cy="268" r="3"/><circle cx="110" cy="269" r="3"/><circle cx="541" cy="262" r="3"/><circle cx="533" cy="266" r="4"/><circle cx="238" cy="266" r="2"/><circle cx="111" cy="264" r="3"/><circle cx="232" cy="267" r="5"/><circle cx="461" cy="266" r="4"/><circle cx="628" cy="268" r="5"/><circle cx="86" cy="268" r="5"/><circle cx="34" cy="262" r="5"/><circle cx="353" cy="269" r="3"/><circle cx="436" cy="263" r="2"/><circle cx="691" cy="262" r="5"/><circle cx="79" cy="262" r="2"/><circle cx="92" cy="268" r="4"/><circle cx="296" cy="266" r="5"/><circle cx="524" cy="262" r="4"/><circle cx="593" cy="267" r="4"/><circle cx="239" cy="269" r="5"/><circle cx="409" cy="266" r="3"/><circle cx="351" cy="268" r="3"/><circle cx="525" cy="267" r="4"/><circle cx="296" cy="266" r="2"/><circle cx="387" cy="269" r="3"/><circle cx="250" cy="262" r="4"/><circle cx="34" cy="266" r="4"/><circle cx="498" cy="268" r="5"/><circle cx="97" cy="263" r="2"/><circle cx="113" cy="263" r="3"/><circle cx="754" cy="266" r="5"/><circle cx="684" cy="261" r="3"/><circle cx="466" cy="266" r="3"/></g><g fill="#60725a"><circle cx="1417" cy="264" r="4"/><circle cx="1343" cy="265" r="4"/><circle cx="1436" cy="267" r="3"/><circle cx="1360" cy="262" r="4"/><circle cx="1397" cy="262" r="3"/><circle cx="1357" cy="264" r="3"/><circle cx="1320" cy="263" r="5"/><circle cx="1382" cy="264" r="3"/><circle cx="1428" cy="262" r="4"/><circle cx="1436" cy="262" r="2"/><circle cx="1341" cy="267" r="4"/><circle cx="1391" cy="262" r="4"/></g><g fill="#2a482a"><circle cx="1000" cy="263" r="3"/><circle cx="1380" cy="260" r="3"/><circle cx="705" cy="267" r="3"/><circle cx="278" cy="264" r="4"/><circle cx="644" cy="266" r="4"/><circle cx="900" cy="266" r="2"/><circle cx="671" cy="268" r="4"/><circle cx="1179" cy="261" r="3"/><circle cx="47" cy="266" r="3"/><circle cx="907" cy="263" r="3"/><circle cx="411" cy="266" r="3"/><circle cx="1232" cy="268" r="3"/><circle cx="801" cy="265" r="3"/><circle cx="1331" cy="262" r="3"/><circle cx="1215" cy="261" r="4"/><circle cx="152" cy="262" r="3"/><circle cx="895" cy="263" r="3"/><circle cx="1149" cy="269" r="4"/><circle cx="546" cy="261" r="4"/><circle cx="78" cy="261" r="4"/><circle cx="1341" cy="261" r="2"/><circle cx="1012" cy="264" r="4"/><circle cx="1434" cy="267" r="3"/><circle cx="608" cy="260" r="5"/><circle cx="222" cy="265" r="3"/><circle cx="669" cy="261" r="5"/><circle cx="1062" cy="260" r="4"/><circle cx="98" cy="266" r="3"/><circle cx="146" cy="264" r="3"/><circle cx="935" cy="265" r="4"/><circle cx="405" cy="269" r="3"/><circle cx="536" cy="266" r="5"/><circle cx="304" cy="266" r="2"/><circle cx="790" cy="267" r="2"/><circle cx="770" cy="267" r="3"/><circle cx="1187" cy="267" r="4"/><circle cx="1431" cy="263" r="4"/><circle cx="228" cy="264" r="2"/><circle cx="939" cy="266" r="2"/><circle cx="1247" cy="262" r="2"/><circle cx="1394" cy="264" r="4"/><circle cx="1331" cy="264" r="4"/><circle cx="232" cy="268" r="3"/><circle cx="786" cy="264" r="2"/><circle cx="837" cy="269" r="5"/><circle cx="1360" cy="264" r="5"/><circle cx="998" cy="264" r="4"/><circle cx="905" cy="262" r="3"/><circle cx="1105" cy="262" r="5"/><circle cx="302" cy="260" r="4"/><circle cx="45" cy="270" r="3"/><circle cx="1059" cy="260" r="4"/><circle cx="167" cy="263" r="2"/><circle cx="559" cy="261" r="3"/><circle cx="331" cy="260" r="4"/><circle cx="902" cy="267" r="3"/><circle cx="1247" cy="265" r="5"/><circle cx="371" cy="268" r="4"/><circle cx="446" cy="268" r="5"/><circle cx="152" cy="265" r="3"/><circle cx="745" cy="261" r="5"/><circle cx="829" cy="267" r="4"/><circle cx="840" cy="264" r="3"/><circle cx="685" cy="266" r="4"/><circle cx="487" cy="261" r="5"/><circle cx="345" cy="267" r="3"/><circle cx="1198" cy="262" r="3"/><circle cx="753" cy="260" r="3"/><circle cx="671" cy="263" r="2"/><circle cx="976" cy="268" r="3"/><circle cx="92" cy="260" r="4"/><circle cx="736" cy="268" r="3"/><circle cx="718" cy="261" r="4"/><circle cx="784" cy="268" r="4"/><circle cx="939" cy="261" r="3"/><circle cx="233" cy="269" r="4"/><circle cx="1328" cy="265" r="3"/><circle cx="1198" cy="265" r="4"/><circle cx="255" cy="267" r="3"/><circle cx="289" cy="269" r="5"/><circle cx="834" cy="266" r="3"/><circle cx="264" cy="262" r="3"/><circle cx="1106" cy="267" r="4"/><circle cx="602" cy="267" r="5"/><circle cx="1181" cy="267" r="4"/><circle cx="425" cy="263" r="5"/><circle cx="1378" cy="262" r="5"/><circle cx="1179" cy="270" r="5"/><circle cx="489" cy="266" r="4"/><circle cx="137" cy="267" r="5"/><circle cx="444" cy="263" r="3"/><circle cx="664" cy="262" r="3"/><circle cx="784" cy="268" r="3"/><circle cx="1003" cy="266" r="3"/><circle cx="557" cy="260" r="2"/><circle cx="67" cy="266" r="3"/><circle cx="805" cy="264" r="4"/><circle cx="303" cy="263" r="5"/><circle cx="405" cy="261" r="3"/><circle cx="841" cy="265" r="3"/><circle cx="571" cy="262" r="4"/><circle cx="281" cy="267" r="3"/><circle cx="329" cy="262" r="2"/><circle cx="1243" cy="267" r="4"/><circle cx="1085" cy="267" r="4"/><circle cx="1170" cy="269" r="4"/><circle cx="658" cy="267" r="2"/><circle cx="498" cy="262" r="3"/><circle cx="1104" cy="265" r="5"/><circle cx="939" cy="268" r="5"/><circle cx="1245" cy="266" r="4"/><circle cx="965" cy="269" r="3"/><circle cx="1052" cy="267" r="3"/><circle cx="780" cy="267" r="3"/><circle cx="1085" cy="267" r="3"/><circle cx="1368" cy="266" r="4"/><circle cx="860" cy="266" r="3"/><circle cx="1371" cy="262" r="4"/><circle cx="1200" cy="267" r="3"/><circle cx="795" cy="265" r="2"/><circle cx="1245" cy="270" r="4"/><circle cx="730" cy="265" r="3"/><circle cx="572" cy="266" r="5"/><circle cx="1088" cy="266" r="5"/><circle cx="1375" cy="263" r="3"/><circle cx="1092" cy="269" r="5"/><circle cx="365" cy="266" r="3"/><circle cx="1177" cy="263" r="3"/><circle cx="744" cy="262" r="2"/><circle cx="484" cy="263" r="2"/><circle cx="1094" cy="260" r="5"/><circle cx="631" cy="263" r="3"/><circle cx="450" cy="268" r="4"/><circle cx="22" cy="269" r="4"/><circle cx="732" cy="267" r="3"/><circle cx="666" cy="265" r="4"/><circle cx="1388" cy="266" r="4"/><circle cx="626" cy="268" r="3"/><circle cx="1111" cy="268" r="3"/><circle cx="515" cy="261" r="4"/><circle cx="1116" cy="262" r="3"/><circle cx="160" cy="260" r="2"/><circle cx="816" cy="263" r="4"/><circle cx="423" cy="263" r="3"/><circle cx="87" cy="267" r="3"/><circle cx="737" cy="268" r="4"/><circle cx="808" cy="268" r="3"/><circle cx="1287" cy="266" r="4"/><circle cx="833" cy="270" r="3"/><circle cx="607" cy="269" r="3"/><circle cx="601" cy="263" r="4"/><circle cx="50" cy="269" r="2"/><circle cx="49" cy="266" r="2"/><circle cx="672" cy="267" r="3"/><circle cx="942" cy="267" r="3"/><circle cx="702" cy="269" r="3"/><circle cx="591" cy="262" r="4"/><circle cx="33" cy="267" r="4"/><circle cx="1028" cy="265" r="2"/><circle cx="1093" cy="260" r="4"/><circle cx="367" cy="270" r="4"/><circle cx="1315" cy="262" r="4"/><circle cx="839" cy="270" r="3"/><circle cx="429" cy="265" r="4"/><circle cx="1" cy="262" r="4"/><circle cx="656" cy="269" r="2"/><circle cx="589" cy="265" r="3"/><circle cx="819" cy="268" r="2"/><circle cx="274" cy="267" r="5"/><circle cx="1233" cy="269" r="2"/><circle cx="1424" cy="266" r="4"/><circle cx="172" cy="263" r="5"/><circle cx="1313" cy="267" r="3"/><circle cx="612" cy="266" r="5"/><circle cx="347" cy="268" r="3"/><circle cx="13" cy="265" r="5"/><circle cx="387" cy="264" r="5"/><circle cx="273" cy="265" r="4"/><circle cx="1061" cy="269" r="5"/><circle cx="1001" cy="267" r="3"/><circle cx="359" cy="264" r="4"/><circle cx="616" cy="261" r="2"/><circle cx="1152" cy="270" r="4"/><circle cx="868" cy="266" r="3"/><circle cx="155" cy="269" r="5"/><circle cx="1068" cy="268" r="5"/><circle cx="1162" cy="262" r="3"/><circle cx="211" cy="262" r="3"/><circle cx="365" cy="269" r="5"/></g><g fill="#426636"><circle cx="421" cy="269" r="3"/><circle cx="347" cy="265" r="3"/><circle cx="605" cy="260" r="5"/><circle cx="788" cy="265" r="3"/><circle cx="105" cy="265" r="4"/><circle cx="336" cy="265" r="5"/><circle cx="606" cy="266" r="4"/><circle cx="626" cy="266" r="3"/><circle cx="554" cy="270" r="4"/><circle cx="420" cy="269" r="4"/><circle cx="685" cy="260" r="3"/><circle cx="87" cy="261" r="4"/><circle cx="368" cy="267" r="5"/><circle cx="314" cy="263" r="4"/><circle cx="647" cy="267" r="3"/><circle cx="244" cy="265" r="3"/><circle cx="821" cy="265" r="4"/><circle cx="831" cy="265" r="3"/><circle cx="316" cy="261" r="2"/><circle cx="342" cy="268" r="2"/><circle cx="306" cy="264" r="5"/><circle cx="70" cy="268" r="4"/><circle cx="474" cy="261" r="4"/><circle cx="148" cy="265" r="4"/><circle cx="29" cy="268" r="3"/><circle cx="757" cy="269" r="2"/><circle cx="507" cy="261" r="2"/><circle cx="37" cy="261" r="3"/><circle cx="275" cy="263" r="3"/><circle cx="183" cy="264" r="4"/><circle cx="660" cy="270" r="4"/><circle cx="631" cy="264" r="4"/><circle cx="532" cy="264" r="3"/><circle cx="704" cy="269" r="4"/><circle cx="665" cy="264" r="5"/><circle cx="821" cy="265" r="3"/><circle cx="42" cy="264" r="3"/><circle cx="561" cy="267" r="4"/><circle cx="294" cy="269" r="3"/><circle cx="656" cy="267" r="4"/><circle cx="183" cy="265" r="5"/><circle cx="185" cy="265" r="4"/><circle cx="350" cy="264" r="4"/><circle cx="843" cy="268" r="2"/><circle cx="479" cy="268" r="5"/><circle cx="723" cy="266" r="4"/><circle cx="826" cy="263" r="4"/><circle cx="762" cy="261" r="3"/><circle cx="740" cy="269" r="2"/><circle cx="521" cy="260" r="3"/><circle cx="424" cy="269" r="5"/><circle cx="14" cy="261" r="3"/><circle cx="199" cy="267" r="3"/><circle cx="631" cy="269" r="4"/><circle cx="24" cy="267" r="4"/><circle cx="731" cy="265" r="3"/><circle cx="35" cy="266" r="3"/><circle cx="176" cy="265" r="2"/><circle cx="493" cy="264" r="4"/><circle cx="107" cy="261" r="3"/><circle cx="617" cy="265" r="4"/><circle cx="660" cy="270" r="5"/><circle cx="417" cy="262" r="3"/><circle cx="837" cy="267" r="5"/><circle cx="419" cy="262" r="4"/><circle cx="625" cy="262" r="3"/><circle cx="485" cy="263" r="2"/><circle cx="292" cy="263" r="2"/><circle cx="560" cy="260" r="4"/><circle cx="523" cy="267" r="2"/><circle cx="495" cy="265" r="5"/><circle cx="296" cy="266" r="3"/><circle cx="80" cy="261" r="5"/><circle cx="373" cy="265" r="4"/><circle cx="158" cy="261" r="5"/><circle cx="675" cy="263" r="3"/><circle cx="661" cy="262" r="5"/><circle cx="404" cy="264" r="4"/><circle cx="696" cy="269" r="5"/><circle cx="1" cy="270" r="2"/><circle cx="523" cy="265" r="4"/><circle cx="279" cy="270" r="4"/><circle cx="249" cy="268" r="5"/><circle cx="602" cy="269" r="4"/><circle cx="440" cy="261" r="2"/><circle cx="401" cy="263" r="4"/><circle cx="816" cy="269" r="4"/><circle cx="432" cy="265" r="5"/><circle cx="176" cy="263" r="3"/><circle cx="625" cy="266" r="5"/><circle cx="329" cy="267" r="3"/><circle cx="700" cy="265" r="3"/><circle cx="484" cy="270" r="5"/><circle cx="303" cy="265" r="5"/><circle cx="54" cy="270" r="4"/><circle cx="449" cy="267" r="5"/><circle cx="459" cy="261" r="3"/><circle cx="110" cy="261" r="5"/><circle cx="318" cy="265" r="4"/><circle cx="2" cy="260" r="4"/></g><g fill="#5a784e"><circle cx="1102" cy="264" r="3"/><circle cx="1076" cy="268" r="3"/><circle cx="1100" cy="267" r="4"/><circle cx="1087" cy="265" r="3"/><circle cx="1061" cy="265" r="5"/><circle cx="1110" cy="265" r="3"/><circle cx="1098" cy="265" r="5"/><circle cx="1073" cy="267" r="2"/></g><g fill="#42603c"><circle cx="956" cy="269" r="2"/><circle cx="1134" cy="266" r="2"/><circle cx="975" cy="262" r="5"/><circle cx="1143" cy="262" r="4"/><circle cx="1206" cy="260" r="2"/><circle cx="985" cy="269" r="4"/><circle cx="1065" cy="270" r="2"/><circle cx="1136" cy="262" r="4"/><circle cx="1038" cy="269" r="3"/><circle cx="1170" cy="264" r="3"/><circle cx="1035" cy="269" r="4"/><circle cx="1175" cy="268" r="4"/><circle cx="1174" cy="266" r="4"/><circle cx="962" cy="269" r="4"/><circle cx="957" cy="265" r="4"/><circle cx="1022" cy="261" r="5"/><circle cx="1217" cy="267" r="4"/><circle cx="1177" cy="264" r="3"/><circle cx="1055" cy="268" r="4"/><circle cx="1141" cy="264" r="4"/><circle cx="1201" cy="267" r="3"/><circle cx="1126" cy="261" r="4"/><circle cx="981" cy="267" r="5"/><circle cx="1052" cy="261" r="4"/><circle cx="1080" cy="261" r="4"/><circle cx="954" cy="266" r="4"/><circle cx="986" cy="264" r="3"/><circle cx="977" cy="262" r="3"/><circle cx="1021" cy="265" r="4"/><circle cx="974" cy="263" r="3"/><circle cx="1236" cy="262" r="3"/><circle cx="984" cy="263" r="4"/><circle cx="1108" cy="270" r="5"/><circle cx="1136" cy="266" r="5"/><circle cx="1169" cy="262" r="5"/><circle cx="1181" cy="266" r="2"/></g><g fill="#425a42"><circle cx="1423" cy="269" r="4"/><circle cx="1411" cy="261" r="4"/><circle cx="1432" cy="268" r="3"/><circle cx="1430" cy="260" r="3"/><circle cx="1401" cy="260" r="2"/></g><g fill="#425a3c"><circle cx="1374" cy="269" r="5"/><circle cx="1366" cy="265" r="2"/><circle cx="1270" cy="265" r="3"/><circle cx="1314" cy="265" r="5"/><circle cx="1281" cy="265" r="2"/><circle cx="1295" cy="268" r="5"/><circle cx="1345" cy="267" r="2"/><circle cx="1375" cy="262" r="5"/><circle cx="1338" cy="264" r="5"/><circle cx="1345" cy="263" r="2"/><circle cx="1360" cy="261" r="5"/><circle cx="1298" cy="265" r="5"/><circle cx="1264" cy="268" r="4"/></g><g fill="#5a7848"><circle cx="1006" cy="261" r="4"/><circle cx="986" cy="263" r="3"/><circle cx="933" cy="265" r="2"/><circle cx="975" cy="260" r="4"/><circle cx="980" cy="268" r="4"/><circle cx="972" cy="268" r="4"/><circle cx="1026" cy="268" r="2"/><circle cx="1030" cy="265" r="3"/><circle cx="983" cy="263" r="4"/></g><g fill="#42663c"><circle cx="940" cy="261" r="4"/><circle cx="858" cy="263" r="4"/><circle cx="860" cy="266" r="5"/><circle cx="904" cy="269" r="4"/><circle cx="946" cy="266" r="3"/><circle cx="908" cy="267" r="2"/><circle cx="902" cy="262" r="4"/><circle cx="871" cy="261" r="4"/><circle cx="919" cy="268" r="4"/></g><g fill="#5a7854"><circle cx="1188" cy="269" r="5"/><circle cx="1180" cy="264" r="5"/></g><g fill="#547e42"><circle cx="834" cy="264" r="3"/><circle cx="822" cy="268" r="3"/><circle cx="853" cy="261" r="2"/><circle cx="805" cy="262" r="5"/><circle cx="857" cy="260" r="3"/><circle cx="762" cy="266" r="4"/><circle cx="803" cy="268" r="3"/><circle cx="788" cy="268" r="4"/></g><g fill="#5a7842"><circle cx="859" cy="265" r="3"/></g><g fill="#607254"><circle cx="1287" cy="266" r="4"/><circle cx="1202" cy="269" r="4"/><circle cx="1275" cy="270" r="4"/><circle cx="1203" cy="268" r="2"/><circle cx="1242" cy="270" r="2"/><circle cx="1241" cy="262" r="3"/><circle cx="1266" cy="262" r="3"/><circle cx="1236" cy="269" r="3"/></g><g fill="#2a482a"><circle cx="1159" cy="275" r="3"/><circle cx="995" cy="280" r="3"/><circle cx="651" cy="277" r="2"/><circle cx="607" cy="275" r="2"/><circle cx="1178" cy="278" r="3"/><circle cx="1091" cy="271" r="2"/><circle cx="482" cy="274" r="5"/><circle cx="481" cy="271" r="3"/><circle cx="1282" cy="276" r="2"/><circle cx="489" cy="273" r="4"/><circle cx="893" cy="278" r="5"/><circle cx="1157" cy="274" r="3"/><circle cx="911" cy="274" r="2"/><circle cx="994" cy="280" r="2"/><circle cx="1161" cy="277" r="5"/><circle cx="845" cy="274" r="2"/><circle cx="407" cy="272" r="4"/><circle cx="724" cy="276" r="4"/><circle cx="931" cy="271" r="5"/><circle cx="275" cy="274" r="4"/><circle cx="279" cy="273" r="5"/><circle cx="728" cy="277" r="5"/><circle cx="985" cy="279" r="3"/><circle cx="119" cy="274" r="3"/><circle cx="259" cy="273" r="3"/><circle cx="523" cy="278" r="2"/><circle cx="310" cy="272" r="5"/><circle cx="888" cy="271" r="3"/><circle cx="1023" cy="276" r="4"/><circle cx="1322" cy="271" r="5"/><circle cx="502" cy="274" r="3"/><circle cx="995" cy="274" r="4"/><circle cx="429" cy="272" r="4"/><circle cx="655" cy="276" r="2"/><circle cx="1384" cy="278" r="4"/><circle cx="822" cy="277" r="4"/><circle cx="1282" cy="275" r="2"/><circle cx="284" cy="273" r="5"/><circle cx="975" cy="270" r="4"/><circle cx="970" cy="278" r="3"/><circle cx="1127" cy="277" r="3"/><circle cx="635" cy="272" r="5"/><circle cx="405" cy="274" r="5"/><circle cx="204" cy="277" r="4"/><circle cx="642" cy="273" r="2"/><circle cx="1167" cy="273" r="3"/><circle cx="964" cy="277" r="2"/><circle cx="211" cy="271" r="3"/><circle cx="398" cy="274" r="2"/><circle cx="225" cy="275" r="5"/><circle cx="685" cy="272" r="2"/><circle cx="336" cy="279" r="4"/><circle cx="916" cy="277" r="2"/><circle cx="548" cy="275" r="2"/><circle cx="723" cy="278" r="3"/><circle cx="896" cy="280" r="4"/><circle cx="1160" cy="273" r="3"/><circle cx="1109" cy="272" r="5"/><circle cx="1236" cy="271" r="4"/><circle cx="1170" cy="274" r="4"/><circle cx="1272" cy="273" r="3"/><circle cx="562" cy="274" r="4"/><circle cx="227" cy="275" r="4"/><circle cx="564" cy="274" r="4"/><circle cx="562" cy="273" r="3"/><circle cx="470" cy="272" r="2"/><circle cx="645" cy="271" r="3"/><circle cx="224" cy="271" r="3"/><circle cx="635" cy="275" r="4"/><circle cx="879" cy="272" r="2"/><circle cx="839" cy="277" r="4"/><circle cx="642" cy="273" r="3"/><circle cx="61" cy="270" r="3"/><circle cx="658" cy="272" r="5"/><circle cx="144" cy="280" r="4"/><circle cx="1404" cy="273" r="3"/><circle cx="259" cy="275" r="3"/><circle cx="476" cy="278" r="4"/><circle cx="840" cy="275" r="4"/><circle cx="370" cy="278" r="2"/><circle cx="652" cy="277" r="4"/><circle cx="1187" cy="275" r="4"/><circle cx="1136" cy="275" r="3"/><circle cx="913" cy="275" r="3"/><circle cx="397" cy="273" r="4"/><circle cx="433" cy="272" r="4"/><circle cx="1377" cy="277" r="3"/><circle cx="955" cy="273" r="4"/><circle cx="723" cy="276" r="3"/><circle cx="673" cy="273" r="2"/><circle cx="382" cy="278" r="3"/><circle cx="1063" cy="280" r="3"/><circle cx="770" cy="276" r="4"/><circle cx="210" cy="272" r="2"/><circle cx="679" cy="273" r="3"/><circle cx="513" cy="272" r="4"/><circle cx="420" cy="271" r="4"/><circle cx="1292" cy="275" r="4"/><circle cx="605" cy="271" r="2"/><circle cx="596" cy="275" r="2"/><circle cx="20" cy="272" r="4"/><circle cx="514" cy="278" r="4"/><circle cx="1008" cy="274" r="3"/><circle cx="485" cy="272" r="4"/><circle cx="324" cy="276" r="4"/><circle cx="1097" cy="279" r="3"/><circle cx="497" cy="272" r="3"/><circle cx="535" cy="275" r="5"/><circle cx="818" cy="273" r="2"/><circle cx="159" cy="273" r="5"/><circle cx="1264" cy="273" r="2"/><circle cx="1070" cy="272" r="5"/><circle cx="962" cy="274" r="2"/><circle cx="694" cy="272" r="4"/><circle cx="1041" cy="276" r="4"/><circle cx="1208" cy="277" r="4"/><circle cx="1026" cy="272" r="2"/><circle cx="542" cy="277" r="3"/><circle cx="1376" cy="272" r="5"/><circle cx="584" cy="273" r="2"/><circle cx="912" cy="280" r="4"/><circle cx="489" cy="272" r="2"/><circle cx="289" cy="276" r="5"/><circle cx="29" cy="277" r="4"/><circle cx="1038" cy="279" r="4"/><circle cx="1330" cy="270" r="3"/><circle cx="134" cy="278" r="3"/><circle cx="1284" cy="280" r="4"/><circle cx="1075" cy="280" r="3"/><circle cx="521" cy="276" r="5"/><circle cx="1300" cy="270" r="4"/><circle cx="1365" cy="279" r="4"/><circle cx="741" cy="275" r="3"/><circle cx="141" cy="275" r="3"/><circle cx="1028" cy="276" r="3"/><circle cx="188" cy="276" r="3"/><circle cx="875" cy="280" r="4"/><circle cx="469" cy="279" r="5"/><circle cx="1332" cy="274" r="4"/><circle cx="987" cy="273" r="2"/><circle cx="486" cy="279" r="2"/><circle cx="1133" cy="270" r="3"/><circle cx="186" cy="277" r="4"/><circle cx="1299" cy="278" r="4"/><circle cx="669" cy="272" r="2"/><circle cx="211" cy="270" r="4"/><circle cx="43" cy="279" r="5"/><circle cx="268" cy="277" r="5"/><circle cx="347" cy="280" r="4"/><circle cx="1122" cy="273" r="3"/><circle cx="901" cy="275" r="3"/><circle cx="81" cy="277" r="3"/><circle cx="496" cy="271" r="5"/><circle cx="801" cy="280" r="5"/><circle cx="1310" cy="276" r="5"/><circle cx="1251" cy="278" r="4"/><circle cx="478" cy="275" r="2"/><circle cx="407" cy="272" r="4"/><circle cx="401" cy="274" r="4"/><circle cx="332" cy="276" r="2"/><circle cx="1169" cy="280" r="4"/><circle cx="798" cy="272" r="4"/><circle cx="1086" cy="277" r="4"/><circle cx="753" cy="276" r="2"/><circle cx="155" cy="276" r="5"/><circle cx="991" cy="274" r="3"/><circle cx="886" cy="279" r="5"/><circle cx="1402" cy="274" r="2"/><circle cx="540" cy="272" r="2"/><circle cx="1247" cy="275" r="2"/><circle cx="94" cy="277" r="3"/><circle cx="293" cy="272" r="4"/><circle cx="608" cy="279" r="4"/><circle cx="1095" cy="276" r="2"/><circle cx="183" cy="274" r="4"/><circle cx="244" cy="277" r="3"/><circle cx="601" cy="272" r="4"/><circle cx="1209" cy="280" r="4"/><circle cx="137" cy="279" r="3"/><circle cx="590" cy="272" r="2"/><circle cx="681" cy="273" r="5"/><circle cx="486" cy="276" r="4"/><circle cx="1303" cy="273" r="3"/><circle cx="1105" cy="270" r="2"/><circle cx="321" cy="279" r="5"/><circle cx="954" cy="279" r="4"/><circle cx="516" cy="271" r="4"/><circle cx="1297" cy="279" r="4"/><circle cx="1161" cy="272" r="2"/><circle cx="737" cy="276" r="3"/></g><g fill="#426636"><circle cx="435" cy="279" r="4"/><circle cx="509" cy="271" r="3"/><circle cx="127" cy="274" r="3"/><circle cx="446" cy="275" r="3"/><circle cx="574" cy="273" r="4"/><circle cx="706" cy="275" r="3"/><circle cx="515" cy="275" r="4"/><circle cx="660" cy="276" r="5"/><circle cx="595" cy="274" r="4"/><circle cx="366" cy="273" r="4"/><circle cx="495" cy="277" r="5"/><circle cx="169" cy="273" r="4"/><circle cx="306" cy="273" r="3"/><circle cx="396" cy="272" r="4"/><circle cx="1" cy="277" r="3"/><circle cx="72" cy="274" r="4"/><circle cx="105" cy="279" r="2"/><circle cx="770" cy="275" r="4"/><circle cx="728" cy="273" r="3"/><circle cx="568" cy="275" r="4"/><circle cx="682" cy="272" r="4"/><circle cx="289" cy="278" r="4"/><circle cx="422" cy="276" r="3"/><circle cx="611" cy="272" r="4"/><circle cx="533" cy="277" r="3"/><circle cx="478" cy="270" r="4"/><circle cx="332" cy="270" r="3"/><circle cx="665" cy="277" r="3"/><circle cx="583" cy="276" r="3"/><circle cx="7" cy="275" r="2"/><circle cx="558" cy="279" r="3"/><circle cx="603" cy="276" r="3"/><circle cx="233" cy="272" r="5"/><circle cx="198" cy="277" r="5"/><circle cx="227" cy="276" r="5"/><circle cx="175" cy="278" r="4"/><circle cx="214" cy="273" r="3"/><circle cx="398" cy="274" r="3"/><circle cx="509" cy="277" r="2"/><circle cx="837" cy="278" r="2"/><circle cx="833" cy="273" r="5"/><circle cx="376" cy="279" r="3"/><circle cx="473" cy="275" r="4"/><circle cx="800" cy="278" r="4"/><circle cx="670" cy="271" r="4"/><circle cx="90" cy="276" r="4"/><circle cx="666" cy="274" r="4"/><circle cx="556" cy="274" r="4"/><circle cx="484" cy="273" r="3"/><circle cx="94" cy="272" r="3"/><circle cx="364" cy="280" r="5"/><circle cx="367" cy="275" r="2"/><circle cx="524" cy="279" r="3"/><circle cx="777" cy="274" r="3"/><circle cx="263" cy="276" r="2"/><circle cx="376" cy="272" r="4"/><circle cx="592" cy="279" r="4"/><circle cx="586" cy="272" r="2"/><circle cx="246" cy="273" r="3"/><circle cx="307" cy="277" r="2"/><circle cx="619" cy="273" r="2"/><circle cx="353" cy="273" r="2"/><circle cx="357" cy="275" r="3"/><circle cx="38" cy="279" r="5"/><circle cx="58" cy="274" r="4"/><circle cx="94" cy="279" r="3"/><circle cx="77" cy="275" r="5"/><circle cx="534" cy="278" r="5"/><circle cx="361" cy="279" r="3"/><circle cx="135" cy="272" r="2"/><circle cx="70" cy="279" r="3"/><circle cx="299" cy="272" r="3"/><circle cx="624" cy="271" r="3"/><circle cx="279" cy="270" r="2"/><circle cx="431" cy="275" r="4"/><circle cx="679" cy="276" r="2"/><circle cx="235" cy="280" r="2"/><circle cx="217" cy="274" r="4"/><circle cx="352" cy="275" r="4"/><circle cx="790" cy="273" r="4"/><circle cx="641" cy="276" r="4"/><circle cx="720" cy="274" r="2"/><circle cx="450" cy="274" r="2"/><circle cx="121" cy="280" r="3"/><circle cx="355" cy="279" r="3"/><circle cx="42" cy="277" r="5"/><circle cx="110" cy="279" r="5"/><circle cx="810" cy="275" r="3"/><circle cx="813" cy="271" r="2"/><circle cx="647" cy="270" r="2"/><circle cx="683" cy="276" r="2"/><circle cx="259" cy="272" r="5"/><circle cx="793" cy="276" r="5"/><circle cx="720" cy="272" r="3"/><circle cx="248" cy="278" r="3"/><circle cx="135" cy="277" r="5"/><circle cx="14" cy="280" r="4"/><circle cx="568" cy="277" r="3"/><circle cx="851" cy="271" r="4"/><circle cx="525" cy="278" r="2"/><circle cx="317" cy="272" r="4"/><circle cx="592" cy="272" r="3"/><circle cx="649" cy="276" r="4"/><circle cx="278" cy="280" r="2"/><circle cx="600" cy="274" r="2"/><circle cx="312" cy="278" r="2"/><circle cx="653" cy="275" r="3"/><circle cx="147" cy="278" r="2"/><circle cx="252" cy="272" r="2"/><circle cx="509" cy="277" r="3"/><circle cx="66" cy="276" r="2"/><circle cx="698" cy="276" r="3"/><circle cx="82" cy="272" r="5"/><circle cx="477" cy="279" r="3"/><circle cx="323" cy="273" r="2"/><circle cx="75" cy="274" r="4"/><circle cx="147" cy="276" r="3"/><circle cx="795" cy="275" r="4"/><circle cx="89" cy="275" r="4"/><circle cx="77" cy="276" r="3"/><circle cx="70" cy="270" r="4"/><circle cx="57" cy="271" r="2"/><circle cx="717" cy="277" r="3"/><circle cx="55" cy="278" r="5"/><circle cx="554" cy="275" r="4"/><circle cx="644" cy="275" r="4"/><circle cx="81" cy="278" r="3"/><circle cx="576" cy="280" r="3"/><circle cx="720" cy="280" r="2"/><circle cx="262" cy="272" r="2"/><circle cx="505" cy="273" r="4"/><circle cx="851" cy="279" r="2"/><circle cx="593" cy="272" r="3"/><circle cx="617" cy="271" r="3"/></g><g fill="#547e3c"><circle cx="66" cy="274" r="2"/><circle cx="613" cy="279" r="5"/><circle cx="271" cy="280" r="4"/><circle cx="704" cy="279" r="5"/><circle cx="23" cy="274" r="4"/><circle cx="319" cy="272" r="4"/><circle cx="519" cy="278" r="3"/><circle cx="579" cy="274" r="2"/><circle cx="89" cy="278" r="4"/><circle cx="710" cy="274" r="2"/><circle cx="643" cy="270" r="3"/><circle cx="86" cy="278" r="4"/><circle cx="754" cy="276" r="3"/><circle cx="445" cy="274" r="4"/><circle cx="747" cy="279" r="5"/><circle cx="91" cy="274" r="4"/><circle cx="667" cy="272" r="4"/><circle cx="570" cy="274" r="2"/><circle cx="308" cy="273" r="3"/><circle cx="494" cy="271" r="2"/><circle cx="48" cy="271" r="5"/><circle cx="676" cy="272" r="3"/><circle cx="82" cy="277" r="4"/><circle cx="750" cy="279" r="5"/><circle cx="645" cy="277" r="4"/><circle cx="227" cy="271" r="4"/><circle cx="579" cy="270" r="4"/><circle cx="55" cy="275" r="5"/><circle cx="481" cy="280" r="4"/><circle cx="389" cy="271" r="4"/><circle cx="557" cy="274" r="4"/><circle cx="137" cy="279" r="3"/><circle cx="5" cy="279" r="3"/><circle cx="287" cy="271" r="3"/><circle cx="145" cy="274" r="3"/><circle cx="222" cy="278" r="2"/><circle cx="134" cy="280" r="4"/><circle cx="749" cy="274" r="4"/></g><g fill="#5a7848"><circle cx="1025" cy="276" r="5"/><circle cx="1011" cy="275" r="3"/><circle cx="1008" cy="271" r="4"/><circle cx="976" cy="278" r="5"/><circle cx="998" cy="275" r="4"/><circle cx="897" cy="274" r="5"/><circle cx="900" cy="278" r="3"/><circle cx="910" cy="279" r="2"/><circle cx="915" cy="275" r="3"/><circle cx="978" cy="270" r="5"/></g><g fill="#42603c"><circle cx="1008" cy="274" r="3"/><circle cx="1092" cy="277" r="4"/><circle cx="1156" cy="275" r="2"/><circle cx="1154" cy="274" r="5"/><circle cx="1102" cy="274" r="2"/><circle cx="1136" cy="277" r="3"/><circle cx="1221" cy="277" r="3"/><circle cx="1064" cy="273" r="2"/><circle cx="1226" cy="274" r="4"/><circle cx="1136" cy="279" r="4"/><circle cx="1188" cy="276" r="5"/><circle cx="1247" cy="277" r="5"/><circle cx="985" cy="274" r="4"/><circle cx="1155" cy="277" r="3"/><circle cx="1235" cy="278" r="3"/><circle cx="999" cy="274" r="2"/><circle cx="1216" cy="271" r="5"/><circle cx="997" cy="270" r="4"/><circle cx="991" cy="272" r="4"/><circle cx="1246" cy="278" r="3"/><circle cx="1192" cy="272" r="4"/><circle cx="971" cy="277" r="3"/><circle cx="1109" cy="280" r="4"/><circle cx="1222" cy="280" r="2"/><circle cx="1218" cy="274" r="2"/><circle cx="1150" cy="279" r="2"/><circle cx="973" cy="278" r="3"/><circle cx="1212" cy="275" r="4"/><circle cx="1091" cy="273" r="3"/><circle cx="1242" cy="277" r="2"/><circle cx="987" cy="278" r="4"/><circle cx="1145" cy="273" r="4"/><circle cx="1234" cy="272" r="2"/><circle cx="1189" cy="279" r="2"/><circle cx="1153" cy="272" r="2"/><circle cx="973" cy="277" r="3"/><circle cx="982" cy="280" r="4"/><circle cx="1254" cy="278" r="4"/><circle cx="998" cy="271" r="3"/><circle cx="1071" cy="275" r="2"/></g><g fill="#5a7842"><circle cx="874" cy="280" r="3"/><circle cx="882" cy="277" r="4"/><circle cx="879" cy="279" r="5"/></g><g fill="#425a3c"><circle cx="1285" cy="277" r="3"/><circle cx="1262" cy="277" r="3"/><circle cx="1343" cy="270" r="3"/><circle cx="1361" cy="271" r="4"/><circle cx="1341" cy="278" r="5"/><circle cx="1383" cy="279" r="5"/><circle cx="1272" cy="276" r="3"/><circle cx="1335" cy="274" r="2"/><circle cx="1350" cy="280" r="5"/><circle cx="1271" cy="276" r="3"/><circle cx="1359" cy="277" r="5"/><circle cx="1312" cy="278" r="4"/><circle cx="1307" cy="270" r="2"/><circle cx="1340" cy="280" r="4"/><circle cx="1355" cy="279" r="4"/><circle cx="1362" cy="278" r="4"/><circle cx="1298" cy="276" r="4"/><circle cx="1349" cy="272" r="4"/><circle cx="1273" cy="274" r="2"/><circle cx="1282" cy="271" r="3"/><circle cx="1296" cy="276" r="3"/></g><g fill="#42663c"><circle cx="917" cy="274" r="3"/><circle cx="876" cy="272" r="3"/><circle cx="878" cy="272" r="4"/><circle cx="940" cy="272" r="5"/><circle cx="906" cy="274" r="5"/><circle cx="910" cy="275" r="3"/><circle cx="921" cy="277" r="4"/><circle cx="877" cy="274" r="4"/><circle cx="922" cy="276" r="3"/><circle cx="923" cy="271" r="3"/><circle cx="941" cy="272" r="4"/><circle cx="948" cy="276" r="5"/><circle cx="951" cy="278" r="5"/></g><g fill="#5a784e"><circle cx="1122" cy="275" r="3"/><circle cx="1096" cy="277" r="2"/><circle cx="1099" cy="273" r="3"/><circle cx="1049" cy="277" r="3"/><circle cx="1163" cy="271" r="4"/><circle cx="1129" cy="276" r="3"/><circle cx="1102" cy="278" r="3"/><circle cx="1162" cy="277" r="4"/><circle cx="1125" cy="273" r="4"/><circle cx="1102" cy="275" r="3"/><circle cx="1163" cy="280" r="5"/><circle cx="1054" cy="277" r="4"/><circle cx="1160" cy="274" r="2"/></g><g fill="#425a42"><circle cx="1420" cy="277" r="4"/><circle cx="1429" cy="279" r="5"/><circle cx="1422" cy="272" r="3"/><circle cx="1421" cy="276" r="5"/><circle cx="1423" cy="273" r="4"/><circle cx="1433" cy="276" r="5"/><circle cx="1437" cy="279" r="4"/><circle cx="1399" cy="277" r="5"/><circle cx="1422" cy="278" r="4"/><circle cx="1426" cy="275" r="3"/></g><g fill="#60725a"><circle cx="1321" cy="274" r="5"/><circle cx="1319" cy="271" r="2"/><circle cx="1322" cy="272" r="4"/><circle cx="1337" cy="277" r="5"/><circle cx="1422" cy="272" r="3"/><circle cx="1336" cy="270" r="3"/><circle cx="1358" cy="276" r="4"/><circle cx="1377" cy="277" r="5"/></g><g fill="#607254"><circle cx="1306" cy="272" r="3"/><circle cx="1288" cy="279" r="2"/><circle cx="1267" cy="275" r="4"/><circle cx="1288" cy="274" r="3"/><circle cx="1270" cy="274" r="2"/></g><g fill="#547e42"><circle cx="794" cy="277" r="2"/><circle cx="851" cy="277" r="4"/><circle cx="821" cy="271" r="2"/><circle cx="817" cy="274" r="4"/><circle cx="763" cy="280" r="4"/><circle cx="787" cy="275" r="2"/></g><g fill="#5a7854"><circle cx="1181" cy="278" r="3"/><circle cx="1178" cy="276" r="2"/><circle cx="1175" cy="272" r="3"/></g><g fill="#426636"><circle cx="546" cy="285" r="2"/><circle cx="496" cy="286" r="3"/><circle cx="123" cy="285" r="3"/><circle cx="749" cy="289" r="5"/><circle cx="485" cy="286" r="5"/><circle cx="81" cy="284" r="4"/><circle cx="186" cy="289" r="3"/><circle cx="219" cy="282" r="3"/><circle cx="290" cy="285" r="2"/><circle cx="160" cy="282" r="4"/><circle cx="721" cy="286" r="3"/><circle cx="199" cy="287" r="3"/><circle cx="19" cy="285" r="3"/><circle cx="247" cy="288" r="3"/><circle cx="828" cy="286" r="5"/><circle cx="23" cy="280" r="5"/><circle cx="620" cy="288" r="4"/><circle cx="51" cy="285" r="3"/><circle cx="61" cy="283" r="3"/><circle cx="839" cy="286" r="5"/><circle cx="340" cy="289" r="2"/><circle cx="132" cy="287" r="3"/><circle cx="649" cy="286" r="4"/><circle cx="126" cy="287" r="4"/><circle cx="149" cy="281" r="2"/><circle cx="348" cy="286" r="4"/><circle cx="644" cy="288" r="3"/><circle cx="684" cy="282" r="2"/><circle cx="101" cy="282" r="5"/><circle cx="845" cy="287" r="4"/><circle cx="776" cy="283" r="5"/><circle cx="835" cy="280" r="4"/><circle cx="354" cy="284" r="5"/><circle cx="297" cy="289" r="2"/><circle cx="37" cy="282" r="4"/><circle cx="551" cy="290" r="4"/><circle cx="150" cy="282" r="3"/><circle cx="444" cy="280" r="3"/><circle cx="111" cy="288" r="3"/><circle cx="5" cy="281" r="3"/><circle cx="720" cy="285" r="4"/><circle cx="634" cy="283" r="3"/><circle cx="241" cy="288" r="3"/><circle cx="352" cy="280" r="4"/><circle cx="846" cy="282" r="4"/><circle cx="760" cy="286" r="3"/><circle cx="631" cy="282" r="3"/><circle cx="51" cy="289" r="5"/><circle cx="687" cy="282" r="3"/><circle cx="541" cy="282" r="2"/><circle cx="99" cy="284" r="3"/><circle cx="10" cy="281" r="3"/><circle cx="166" cy="288" r="3"/><circle cx="632" cy="287" r="3"/><circle cx="524" cy="282" r="3"/><circle cx="484" cy="288" r="5"/><circle cx="470" cy="285" r="3"/><circle cx="225" cy="286" r="2"/><circle cx="634" cy="289" r="3"/><circle cx="454" cy="286" r="4"/><circle cx="325" cy="281" r="5"/><circle cx="401" cy="282" r="4"/><circle cx="854" cy="284" r="3"/><circle cx="550" cy="284" r="4"/><circle cx="777" cy="282" r="2"/><circle cx="828" cy="286" r="3"/><circle cx="61" cy="281" r="5"/><circle cx="182" cy="285" r="4"/><circle cx="467" cy="289" r="4"/><circle cx="226" cy="286" r="4"/><circle cx="277" cy="282" r="3"/><circle cx="819" cy="286" r="5"/><circle cx="371" cy="284" r="2"/><circle cx="461" cy="281" r="3"/><circle cx="67" cy="289" r="4"/><circle cx="304" cy="286" r="3"/><circle cx="288" cy="286" r="4"/><circle cx="272" cy="287" r="3"/><circle cx="641" cy="289" r="3"/><circle cx="571" cy="282" r="4"/><circle cx="526" cy="286" r="2"/><circle cx="346" cy="282" r="4"/><circle cx="370" cy="286" r="5"/><circle cx="633" cy="281" r="2"/><circle cx="619" cy="283" r="5"/><circle cx="282" cy="282" r="5"/><circle cx="571" cy="287" r="4"/><circle cx="839" cy="282" r="3"/><circle cx="229" cy="290" r="5"/><circle cx="121" cy="286" r="4"/><circle cx="394" cy="281" r="4"/><circle cx="398" cy="284" r="3"/><circle cx="397" cy="288" r="4"/><circle cx="315" cy="283" r="3"/><circle cx="212" cy="281" r="4"/><circle cx="477" cy="281" r="5"/><circle cx="376" cy="285" r="5"/><circle cx="533" cy="290" r="5"/><circle cx="809" cy="281" r="5"/><circle cx="124" cy="286" r="2"/><circle cx="774" cy="287" r="3"/><circle cx="834" cy="282" r="5"/><circle cx="5" cy="285" r="3"/><circle cx="126" cy="284" r="2"/><circle cx="223" cy="281" r="5"/><circle cx="810" cy="286" r="4"/><circle cx="650" cy="286" r="3"/><circle cx="449" cy="288" r="5"/><circle cx="158" cy="281" r="3"/><circle cx="234" cy="281" r="4"/><circle cx="353" cy="287" r="5"/><circle cx="49" cy="281" r="3"/></g><g fill="#2a482a"><circle cx="456" cy="283" r="2"/><circle cx="200" cy="290" r="2"/><circle cx="413" cy="286" r="3"/><circle cx="824" cy="283" r="4"/><circle cx="839" cy="286" r="3"/><circle cx="749" cy="286" r="3"/><circle cx="1106" cy="286" r="4"/><circle cx="150" cy="287" r="4"/><circle cx="410" cy="287" r="5"/><circle cx="1239" cy="284" r="2"/><circle cx="160" cy="282" r="5"/><circle cx="1391" cy="283" r="2"/><circle cx="499" cy="286" r="3"/><circle cx="531" cy="284" r="3"/><circle cx="628" cy="289" r="4"/><circle cx="665" cy="289" r="3"/><circle cx="430" cy="289" r="5"/><circle cx="1071" cy="281" r="4"/><circle cx="1119" cy="287" r="3"/><circle cx="534" cy="286" r="4"/><circle cx="875" cy="283" r="5"/><circle cx="758" cy="281" r="2"/><circle cx="595" cy="281" r="2"/><circle cx="96" cy="288" r="4"/><circle cx="262" cy="287" r="3"/><circle cx="976" cy="284" r="5"/><circle cx="184" cy="287" r="4"/><circle cx="46" cy="284" r="4"/><circle cx="122" cy="281" r="3"/><circle cx="227" cy="287" r="5"/><circle cx="526" cy="287" r="4"/><circle cx="666" cy="280" r="2"/><circle cx="861" cy="290" r="3"/><circle cx="1205" cy="280" r="3"/><circle cx="566" cy="282" r="3"/><circle cx="1014" cy="289" r="2"/><circle cx="654" cy="281" r="3"/><circle cx="493" cy="289" r="5"/><circle cx="773" cy="290" r="5"/><circle cx="561" cy="288" r="4"/><circle cx="1102" cy="281" r="4"/><circle cx="754" cy="287" r="5"/><circle cx="1184" cy="282" r="4"/><circle cx="1118" cy="283" r="4"/><circle cx="309" cy="281" r="2"/><circle cx="506" cy="287" r="5"/><circle cx="1057" cy="284" r="3"/><circle cx="57" cy="288" r="3"/><circle cx="1325" cy="288" r="3"/><circle cx="824" cy="286" r="4"/><circle cx="1069" cy="286" r="4"/><circle cx="730" cy="284" r="4"/><circle cx="648" cy="282" r="4"/><circle cx="1211" cy="281" r="4"/><circle cx="1383" cy="282" r="5"/><circle cx="1235" cy="289" r="2"/><circle cx="1331" cy="285" r="4"/><circle cx="1392" cy="283" r="4"/><circle cx="850" cy="287" r="4"/><circle cx="517" cy="283" r="4"/><circle cx="532" cy="286" r="4"/><circle cx="1424" cy="286" r="3"/><circle cx="139" cy="288" r="3"/><circle cx="277" cy="280" r="2"/><circle cx="642" cy="284" r="4"/><circle cx="811" cy="286" r="4"/><circle cx="577" cy="289" r="3"/><circle cx="698" cy="285" r="2"/><circle cx="1359" cy="286" r="2"/><circle cx="368" cy="283" r="4"/><circle cx="619" cy="282" r="3"/><circle cx="469" cy="287" r="5"/><circle cx="245" cy="286" r="3"/><circle cx="460" cy="288" r="4"/><circle cx="663" cy="288" r="4"/><circle cx="795" cy="284" r="3"/><circle cx="873" cy="285" r="5"/><circle cx="800" cy="281" r="3"/><circle cx="584" cy="286" r="4"/><circle cx="970" cy="290" r="4"/><circle cx="1398" cy="280" r="3"/><circle cx="917" cy="288" r="3"/><circle cx="815" cy="290" r="5"/><circle cx="1397" cy="287" r="2"/><circle cx="1169" cy="282" r="3"/><circle cx="1159" cy="282" r="5"/><circle cx="736" cy="289" r="2"/><circle cx="219" cy="280" r="3"/><circle cx="1313" cy="280" r="2"/><circle cx="541" cy="281" r="3"/><circle cx="381" cy="289" r="2"/><circle cx="1066" cy="282" r="3"/><circle cx="1280" cy="289" r="3"/><circle cx="1286" cy="289" r="4"/><circle cx="724" cy="281" r="5"/><circle cx="826" cy="282" r="2"/><circle cx="220" cy="288" r="2"/><circle cx="453" cy="290" r="2"/><circle cx="1118" cy="288" r="3"/><circle cx="472" cy="281" r="2"/><circle cx="629" cy="283" r="4"/><circle cx="900" cy="281" r="5"/><circle cx="300" cy="285" r="3"/><circle cx="1116" cy="281" r="3"/><circle cx="55" cy="283" r="4"/><circle cx="1321" cy="285" r="3"/><circle cx="203" cy="289" r="5"/><circle cx="1022" cy="281" r="5"/><circle cx="751" cy="281" r="4"/><circle cx="552" cy="283" r="3"/><circle cx="205" cy="280" r="3"/><circle cx="383" cy="289" r="4"/><circle cx="880" cy="282" r="3"/><circle cx="461" cy="282" r="2"/><circle cx="116" cy="280" r="4"/><circle cx="1288" cy="285" r="2"/><circle cx="151" cy="287" r="3"/><circle cx="1052" cy="281" r="4"/><circle cx="291" cy="283" r="4"/><circle cx="655" cy="288" r="3"/><circle cx="1126" cy="285" r="4"/><circle cx="934" cy="287" r="3"/><circle cx="747" cy="289" r="5"/><circle cx="7" cy="288" r="3"/><circle cx="692" cy="285" r="4"/><circle cx="298" cy="284" r="3"/><circle cx="625" cy="286" r="4"/><circle cx="1216" cy="284" r="4"/><circle cx="891" cy="285" r="2"/><circle cx="719" cy="280" r="4"/><circle cx="399" cy="284" r="4"/><circle cx="595" cy="283" r="3"/><circle cx="528" cy="289" r="4"/><circle cx="1095" cy="281" r="3"/><circle cx="16" cy="288" r="5"/><circle cx="1272" cy="280" r="3"/><circle cx="1290" cy="287" r="5"/><circle cx="860" cy="280" r="3"/><circle cx="1280" cy="280" r="4"/><circle cx="1427" cy="288" r="3"/><circle cx="249" cy="285" r="2"/><circle cx="497" cy="290" r="4"/><circle cx="1316" cy="282" r="4"/><circle cx="78" cy="288" r="4"/><circle cx="928" cy="281" r="2"/><circle cx="1152" cy="288" r="4"/><circle cx="1267" cy="287" r="4"/><circle cx="226" cy="282" r="3"/><circle cx="580" cy="281" r="5"/><circle cx="286" cy="284" r="4"/><circle cx="832" cy="288" r="5"/><circle cx="706" cy="289" r="3"/><circle cx="404" cy="284" r="3"/><circle cx="734" cy="282" r="4"/><circle cx="292" cy="288" r="5"/><circle cx="114" cy="283" r="4"/><circle cx="322" cy="284" r="4"/><circle cx="1122" cy="282" r="4"/><circle cx="1023" cy="280" r="3"/><circle cx="591" cy="281" r="4"/><circle cx="340" cy="283" r="2"/><circle cx="11" cy="281" r="5"/><circle cx="1374" cy="280" r="4"/><circle cx="932" cy="280" r="5"/><circle cx="1082" cy="283" r="2"/><circle cx="1264" cy="289" r="4"/><circle cx="298" cy="286" r="2"/><circle cx="1236" cy="283" r="4"/><circle cx="108" cy="285" r="5"/><circle cx="444" cy="282" r="3"/><circle cx="796" cy="282" r="5"/><circle cx="1357" cy="281" r="3"/><circle cx="151" cy="284" r="2"/><circle cx="142" cy="282" r="3"/><circle cx="995" cy="283" r="5"/><circle cx="1111" cy="285" r="2"/><circle cx="132" cy="285" r="4"/><circle cx="1331" cy="286" r="3"/><circle cx="1348" cy="289" r="3"/><circle cx="354" cy="284" r="3"/><circle cx="7" cy="285" r="3"/><circle cx="978" cy="288" r="3"/><circle cx="1291" cy="281" r="4"/><circle cx="898" cy="287" r="5"/><circle cx="604" cy="287" r="3"/><circle cx="1348" cy="289" r="4"/><circle cx="312" cy="281" r="3"/><circle cx="965" cy="282" r="3"/><circle cx="1126" cy="284" r="3"/><circle cx="392" cy="283" r="3"/><circle cx="956" cy="287" r="4"/><circle cx="1336" cy="289" r="4"/><circle cx="1274" cy="289" r="3"/><circle cx="466" cy="280" r="3"/><circle cx="1289" cy="282" r="4"/><circle cx="777" cy="286" r="5"/><circle cx="96" cy="281" r="4"/><circle cx="305" cy="283" r="4"/><circle cx="1319" cy="281" r="5"/><circle cx="278" cy="282" r="2"/><circle cx="751" cy="290" r="3"/><circle cx="599" cy="282" r="4"/><circle cx="140" cy="281" r="2"/><circle cx="431" cy="280" r="2"/><circle cx="67" cy="281" r="5"/><circle cx="1119" cy="281" r="4"/><circle cx="679" cy="289" r="5"/><circle cx="233" cy="282" r="4"/><circle cx="1132" cy="287" r="5"/><circle cx="334" cy="280" r="3"/><circle cx="1191" cy="289" r="3"/><circle cx="420" cy="289" r="3"/><circle cx="1400" cy="283" r="2"/><circle cx="244" cy="284" r="5"/><circle cx="633" cy="286" r="5"/><circle cx="1230" cy="283" r="4"/><circle cx="285" cy="288" r="5"/><circle cx="543" cy="287" r="3"/><circle cx="1166" cy="286" r="2"/><circle cx="944" cy="282" r="5"/><circle cx="374" cy="286" r="4"/></g><g fill="#42603c"><circle cx="958" cy="282" r="2"/><circle cx="957" cy="284" r="3"/><circle cx="1058" cy="285" r="4"/><circle cx="1247" cy="282" r="4"/><circle cx="1093" cy="281" r="4"/><circle cx="1179" cy="289" r="2"/><circle cx="1096" cy="285" r="4"/><circle cx="1081" cy="286" r="4"/><circle cx="1205" cy="290" r="3"/><circle cx="1083" cy="284" r="5"/><circle cx="962" cy="281" r="4"/><circle cx="1112" cy="284" r="3"/><circle cx="1002" cy="286" r="5"/><circle cx="1180" cy="281" r="3"/><circle cx="1179" cy="288" r="4"/><circle cx="1005" cy="287" r="3"/><circle cx="965" cy="287" r="3"/><circle cx="1123" cy="280" r="4"/><circle cx="1175" cy="283" r="4"/><circle cx="1227" cy="285" r="2"/><circle cx="1088" cy="287" r="4"/><circle cx="1101" cy="285" r="5"/><circle cx="1115" cy="283" r="2"/><circle cx="1016" cy="288" r="4"/><circle cx="1073" cy="286" r="4"/><circle cx="1022" cy="285" r="4"/><circle cx="1190" cy="288" r="4"/><circle cx="1008" cy="281" r="3"/><circle cx="1172" cy="283" r="4"/><circle cx="1052" cy="288" r="4"/><circle cx="1026" cy="283" r="3"/><circle cx="1006" cy="284" r="4"/><circle cx="1101" cy="286" r="4"/><circle cx="1236" cy="283" r="3"/><circle cx="1163" cy="287" r="3"/><circle cx="1159" cy="288" r="4"/><circle cx="982" cy="282" r="3"/><circle cx="1186" cy="289" r="2"/><circle cx="1249" cy="280" r="3"/><circle cx="1013" cy="288" r="3"/></g><g fill="#547e3c"><circle cx="546" cy="284" r="2"/><circle cx="316" cy="290" r="2"/><circle cx="349" cy="287" r="2"/><circle cx="306" cy="280" r="3"/><circle cx="102" cy="286" r="5"/><circle cx="725" cy="284" r="4"/><circle cx="594" cy="280" r="3"/><circle cx="652" cy="283" r="4"/><circle cx="81" cy="285" r="4"/><circle cx="455" cy="289" r="5"/><circle cx="628" cy="284" r="4"/><circle cx="83" cy="288" r="5"/><circle cx="158" cy="283" r="5"/><circle cx="330" cy="284" r="5"/><circle cx="86" cy="287" r="3"/><circle cx="134" cy="283" r="2"/><circle cx="419" cy="288" r="2"/><circle cx="229" cy="283" r="4"/><circle cx="680" cy="284" r="3"/><circle cx="527" cy="290" r="4"/><circle cx="100" cy="282" r="4"/><circle cx="578" cy="287" r="4"/><circle cx="645" cy="285" r="4"/><circle cx="644" cy="286" r="5"/><circle cx="427" cy="287" r="4"/><circle cx="385" cy="285" r="4"/><circle cx="632" cy="284" r="3"/><circle cx="271" cy="283" r="3"/><circle cx="533" cy="288" r="3"/><circle cx="514" cy="283" r="3"/><circle cx="263" cy="281" r="3"/><circle cx="753" cy="282" r="3"/><circle cx="654" cy="290" r="4"/><circle cx="280" cy="287" r="3"/><circle cx="577" cy="287" r="3"/><circle cx="497" cy="286" r="5"/><circle cx="409" cy="288" r="4"/><circle cx="463" cy="286" r="4"/><circle cx="45" cy="282" r="4"/><circle cx="416" cy="282" r="5"/><circle cx="666" cy="286" r="4"/><circle cx="201" cy="287" r="3"/><circle cx="229" cy="288" r="2"/><circle cx="186" cy="282" r="2"/><circle cx="608" cy="280" r="4"/><circle cx="310" cy="283" r="4"/></g><g fill="#5a7848"><circle cx="986" cy="281" r="4"/><circle cx="962" cy="284" r="5"/><circle cx="970" cy="288" r="5"/><circle cx="979" cy="281" r="2"/><circle cx="1027" cy="281" r="4"/><circle cx="1016" cy="281" r="2"/><circle cx="938" cy="287" r="4"/><circle cx="957" cy="285" r="3"/><circle cx="997" cy="282" r="3"/><circle cx="956" cy="283" r="3"/><circle cx="906" cy="288" r="4"/><circle cx="985" cy="287" r="5"/><circle cx="988" cy="285" r="3"/></g><g fill="#425a3c"><circle cx="1331" cy="283" r="3"/><circle cx="1348" cy="289" r="4"/><circle cx="1359" cy="288" r="3"/><circle cx="1355" cy="281" r="4"/><circle cx="1376" cy="287" r="3"/><circle cx="1292" cy="284" r="4"/><circle cx="1282" cy="284" r="5"/><circle cx="1319" cy="287" r="3"/><circle cx="1304" cy="288" r="5"/><circle cx="1354" cy="284" r="3"/><circle cx="1283" cy="284" r="5"/><circle cx="1342" cy="285" r="5"/><circle cx="1382" cy="282" r="3"/><circle cx="1302" cy="280" r="4"/><circle cx="1332" cy="288" r="4"/></g><g fill="#607254"><circle cx="1254" cy="283" r="4"/><circle cx="1253" cy="288" r="3"/><circle cx="1270" cy="285" r="3"/><circle cx="1196" cy="285" r="4"/><circle cx="1306" cy="287" r="4"/></g><g fill="#547e42"><circle cx="836" cy="284" r="3"/><circle cx="782" cy="283" r="5"/><circle cx="757" cy="285" r="5"/><circle cx="829" cy="284" r="5"/><circle cx="841" cy="290" r="5"/><circle cx="794" cy="284" r="4"/><circle cx="842" cy="285" r="4"/><circle cx="835" cy="282" r="3"/><circle cx="802" cy="286" r="3"/><circle cx="817" cy="281" r="4"/></g><g fill="#42663c"><circle cx="909" cy="286" r="2"/><circle cx="914" cy="287" r="5"/><circle cx="907" cy="286" r="2"/><circle cx="941" cy="286" r="2"/><circle cx="868" cy="280" r="4"/><circle cx="880" cy="286" r="4"/><circle cx="865" cy="281" r="2"/><circle cx="931" cy="287" r="4"/><circle cx="885" cy="289" r="2"/></g><g fill="#5a784e"><circle cx="1090" cy="289" r="4"/><circle cx="1108" cy="281" r="4"/><circle cx="1172" cy="286" r="4"/><circle cx="1095" cy="283" r="2"/><circle cx="1148" cy="285" r="5"/><circle cx="1128" cy="283" r="4"/><circle cx="1069" cy="287" r="4"/><circle cx="1105" cy="281" r="2"/><circle cx="1091" cy="288" r="4"/><circle cx="1129" cy="290" r="5"/></g><g fill="#425a42"><circle cx="1419" cy="284" r="4"/><circle cx="1440" cy="283" r="5"/><circle cx="1432" cy="282" r="3"/><circle cx="1431" cy="286" r="3"/></g><g fill="#60725a"><circle cx="1332" cy="289" r="3"/><circle cx="1349" cy="281" r="4"/><circle cx="1379" cy="290" r="4"/><circle cx="1340" cy="285" r="4"/></g><g fill="#5a7848"><circle cx="993" cy="296" r="4"/><circle cx="1008" cy="297" r="3"/><circle cx="971" cy="293" r="2"/><circle cx="1004" cy="298" r="2"/><circle cx="981" cy="293" r="5"/><circle cx="952" cy="294" r="4"/><circle cx="1012" cy="293" r="3"/><circle cx="996" cy="294" r="5"/><circle cx="963" cy="298" r="5"/><circle cx="953" cy="291" r="5"/><circle cx="984" cy="292" r="3"/><circle cx="927" cy="292" r="4"/></g><g fill="#60725a"><circle cx="1405" cy="300" r="5"/><circle cx="1320" cy="299" r="3"/><circle cx="1407" cy="296" r="4"/><circle cx="1327" cy="297" r="2"/><circle cx="1367" cy="291" r="4"/><circle cx="1330" cy="295" r="4"/><circle cx="1424" cy="299" r="3"/><circle cx="1345" cy="299" r="3"/><circle cx="1317" cy="294" r="4"/><circle cx="1433" cy="291" r="4"/></g><g fill="#2a482a"><circle cx="311" cy="299" r="3"/><circle cx="1263" cy="299" r="4"/><circle cx="530" cy="294" r="3"/><circle cx="1189" cy="297" r="4"/><circle cx="168" cy="298" r="3"/><circle cx="765" cy="296" r="4"/><circle cx="585" cy="291" r="4"/><circle cx="1333" cy="298" r="3"/><circle cx="1270" cy="299" r="3"/><circle cx="1212" cy="292" r="3"/><circle cx="870" cy="293" r="3"/><circle cx="1326" cy="292" r="3"/><circle cx="167" cy="293" r="4"/><circle cx="798" cy="291" r="3"/><circle cx="1094" cy="293" r="4"/><circle cx="626" cy="297" r="2"/><circle cx="833" cy="292" r="3"/><circle cx="319" cy="298" r="4"/><circle cx="499" cy="297" r="4"/><circle cx="827" cy="292" r="3"/><circle cx="298" cy="299" r="5"/><circle cx="576" cy="296" r="2"/><circle cx="270" cy="294" r="2"/><circle cx="611" cy="297" r="4"/><circle cx="815" cy="294" r="3"/><circle cx="781" cy="298" r="4"/><circle cx="675" cy="298" r="3"/><circle cx="566" cy="298" r="3"/><circle cx="25" cy="295" r="3"/><circle cx="721" cy="299" r="5"/><circle cx="617" cy="294" r="5"/><circle cx="1361" cy="299" r="4"/><circle cx="64" cy="290" r="3"/><circle cx="57" cy="290" r="4"/><circle cx="459" cy="296" r="2"/><circle cx="970" cy="299" r="4"/><circle cx="692" cy="299" r="4"/><circle cx="282" cy="295" r="3"/><circle cx="517" cy="291" r="3"/><circle cx="571" cy="292" r="3"/><circle cx="804" cy="291" r="5"/><circle cx="1402" cy="292" r="2"/><circle cx="385" cy="297" r="3"/><circle cx="1398" cy="298" r="4"/><circle cx="1017" cy="291" r="3"/><circle cx="664" cy="297" r="2"/><circle cx="580" cy="295" r="4"/><circle cx="1386" cy="299" r="4"/><circle cx="1268" cy="296" r="2"/><circle cx="1272" cy="295" r="2"/><circle cx="235" cy="299" r="4"/><circle cx="911" cy="294" r="3"/><circle cx="821" cy="298" r="4"/><circle cx="352" cy="297" r="4"/><circle cx="487" cy="292" r="4"/><circle cx="194" cy="296" r="2"/><circle cx="147" cy="294" r="4"/><circle cx="1233" cy="294" r="4"/><circle cx="276" cy="295" r="2"/><circle cx="650" cy="292" r="2"/><circle cx="1094" cy="299" r="4"/><circle cx="1382" cy="297" r="4"/><circle cx="754" cy="292" r="3"/><circle cx="914" cy="293" r="5"/><circle cx="190" cy="290" r="3"/><circle cx="1091" cy="296" r="2"/><circle cx="252" cy="294" r="4"/><circle cx="1076" cy="300" r="3"/><circle cx="253" cy="298" r="3"/><circle cx="927" cy="295" r="4"/><circle cx="350" cy="293" r="3"/><circle cx="943" cy="295" r="3"/><circle cx="1015" cy="296" r="4"/><circle cx="598" cy="300" r="4"/><circle cx="1213" cy="299" r="3"/><circle cx="362" cy="296" r="2"/><circle cx="311" cy="300" r="5"/><circle cx="966" cy="293" r="3"/><circle cx="244" cy="299" r="3"/><circle cx="806" cy="292" r="2"/><circle cx="1030" cy="294" r="3"/><circle cx="762" cy="294" r="3"/><circle cx="768" cy="293" r="4"/><circle cx="40" cy="291" r="4"/><circle cx="1105" cy="296" r="5"/><circle cx="41" cy="298" r="4"/><circle cx="141" cy="297" r="5"/><circle cx="1342" cy="293" r="5"/><circle cx="190" cy="296" r="5"/><circle cx="347" cy="299" r="5"/><circle cx="60" cy="295" r="3"/><circle cx="644" cy="292" r="4"/><circle cx="768" cy="291" r="3"/><circle cx="467" cy="296" r="2"/><circle cx="905" cy="290" r="4"/><circle cx="581" cy="293" r="3"/><circle cx="420" cy="295" r="5"/><circle cx="550" cy="299" r="4"/><circle cx="297" cy="295" r="5"/><circle cx="199" cy="294" r="3"/><circle cx="1354" cy="299" r="3"/><circle cx="457" cy="297" r="5"/><circle cx="610" cy="297" r="3"/><circle cx="652" cy="293" r="4"/><circle cx="1336" cy="291" r="5"/><circle cx="215" cy="298" r="3"/><circle cx="368" cy="291" r="4"/><circle cx="503" cy="295" r="2"/><circle cx="1368" cy="295" r="3"/><circle cx="653" cy="299" r="3"/><circle cx="863" cy="291" r="3"/><circle cx="264" cy="293" r="4"/><circle cx="895" cy="293" r="5"/><circle cx="688" cy="297" r="4"/><circle cx="127" cy="293" r="3"/><circle cx="446" cy="293" r="4"/><circle cx="762" cy="300" r="3"/><circle cx="588" cy="293" r="4"/><circle cx="1024" cy="299" r="4"/><circle cx="639" cy="299" r="4"/><circle cx="1003" cy="291" r="2"/><circle cx="417" cy="295" r="3"/><circle cx="1009" cy="290" r="4"/><circle cx="693" cy="290" r="5"/><circle cx="602" cy="298" r="3"/><circle cx="713" cy="293" r="3"/><circle cx="638" cy="294" r="4"/><circle cx="595" cy="291" r="5"/><circle cx="1411" cy="295" r="5"/><circle cx="623" cy="290" r="5"/><circle cx="665" cy="292" r="4"/><circle cx="990" cy="297" r="3"/><circle cx="665" cy="293" r="5"/><circle cx="58" cy="296" r="4"/><circle cx="247" cy="294" r="5"/><circle cx="884" cy="292" r="4"/><circle cx="118" cy="295" r="3"/><circle cx="847" cy="291" r="4"/><circle cx="1337" cy="292" r="5"/><circle cx="74" cy="292" r="4"/><circle cx="734" cy="300" r="3"/><circle cx="1017" cy="295" r="4"/><circle cx="700" cy="294" r="2"/><circle cx="508" cy="291" r="5"/><circle cx="295" cy="299" r="5"/><circle cx="591" cy="300" r="3"/><circle cx="1044" cy="298" r="3"/><circle cx="67" cy="296" r="5"/><circle cx="658" cy="295" r="5"/><circle cx="1305" cy="290" r="3"/><circle cx="1099" cy="293" r="3"/><circle cx="1129" cy="295" r="5"/><circle cx="949" cy="293" r="4"/><circle cx="349" cy="294" r="2"/><circle cx="996" cy="292" r="2"/><circle cx="1225" cy="298" r="2"/><circle cx="301" cy="296" r="2"/><circle cx="878" cy="299" r="5"/><circle cx="1209" cy="293" r="5"/><circle cx="850" cy="291" r="5"/><circle cx="712" cy="295" r="2"/><circle cx="163" cy="295" r="4"/><circle cx="1138" cy="298" r="4"/><circle cx="873" cy="295" r="5"/><circle cx="3" cy="298" r="5"/><circle cx="852" cy="294" r="5"/><circle cx="1415" cy="293" r="4"/><circle cx="548" cy="298" r="5"/><circle cx="1405" cy="291" r="4"/><circle cx="1178" cy="299" r="3"/><circle cx="507" cy="298" r="3"/><circle cx="266" cy="299" r="3"/><circle cx="1328" cy="292" r="5"/><circle cx="1242" cy="299" r="3"/><circle cx="674" cy="294" r="3"/><circle cx="579" cy="297" r="4"/><circle cx="558" cy="298" r="4"/><circle cx="624" cy="292" r="2"/><circle cx="114" cy="294" r="2"/><circle cx="1156" cy="291" r="5"/><circle cx="51" cy="299" r="5"/><circle cx="1137" cy="298" r="4"/></g><g fill="#42603c"><circle cx="1169" cy="291" r="3"/><circle cx="1179" cy="296" r="5"/><circle cx="1175" cy="298" r="4"/><circle cx="1057" cy="299" r="5"/><circle cx="1160" cy="295" r="3"/><circle cx="1050" cy="293" r="2"/><circle cx="1179" cy="292" r="4"/><circle cx="1106" cy="292" r="3"/><circle cx="1163" cy="296" r="3"/><circle cx="1192" cy="299" r="5"/><circle cx="975" cy="294" r="2"/><circle cx="1092" cy="294" r="2"/><circle cx="1192" cy="296" r="3"/><circle cx="1024" cy="299" r="4"/><circle cx="985" cy="293" r="3"/><circle cx="1136" cy="295" r="2"/><circle cx="1059" cy="299" r="3"/><circle cx="1184" cy="293" r="5"/><circle cx="1034" cy="299" r="4"/><circle cx="1095" cy="291" r="3"/><circle cx="961" cy="298" r="4"/><circle cx="1010" cy="298" r="4"/><circle cx="1074" cy="290" r="2"/><circle cx="1180" cy="299" r="4"/><circle cx="1117" cy="294" r="4"/><circle cx="1078" cy="292" r="4"/><circle cx="1207" cy="292" r="5"/><circle cx="1244" cy="298" r="3"/><circle cx="1085" cy="294" r="3"/><circle cx="1136" cy="295" r="3"/><circle cx="979" cy="293" r="4"/><circle cx="1130" cy="291" r="5"/><circle cx="1227" cy="299" r="4"/><circle cx="1220" cy="293" r="2"/><circle cx="1102" cy="296" r="3"/><circle cx="1181" cy="295" r="2"/><circle cx="1149" cy="297" r="3"/><circle cx="1017" cy="291" r="4"/><circle cx="1052" cy="296" r="4"/><circle cx="1014" cy="295" r="4"/><circle cx="966" cy="292" r="4"/><circle cx="1033" cy="293" r="4"/><circle cx="1181" cy="299" r="3"/></g><g fill="#426636"><circle cx="593" cy="294" r="5"/><circle cx="195" cy="298" r="4"/><circle cx="808" cy="291" r="5"/><circle cx="47" cy="298" r="2"/><circle cx="65" cy="293" r="3"/><circle cx="835" cy="298" r="2"/><circle cx="784" cy="292" r="4"/><circle cx="443" cy="292" r="4"/><circle cx="843" cy="291" r="2"/><circle cx="582" cy="296" r="5"/><circle cx="740" cy="295" r="3"/><circle cx="1" cy="300" r="3"/><circle cx="344" cy="298" r="3"/><circle cx="813" cy="297" r="3"/><circle cx="626" cy="293" r="5"/><circle cx="576" cy="292" r="3"/><circle cx="747" cy="291" r="2"/><circle cx="96" cy="298" r="4"/><circle cx="580" cy="294" r="3"/><circle cx="516" cy="293" r="4"/><circle cx="773" cy="296" r="4"/><circle cx="410" cy="296" r="2"/><circle cx="681" cy="291" r="5"/><circle cx="137" cy="291" r="5"/><circle cx="119" cy="291" r="3"/><circle cx="207" cy="298" r="2"/><circle cx="226" cy="294" r="4"/><circle cx="523" cy="291" r="4"/><circle cx="137" cy="299" r="3"/><circle cx="371" cy="297" r="2"/><circle cx="267" cy="298" r="3"/><circle cx="208" cy="294" r="5"/><circle cx="617" cy="291" r="4"/><circle cx="277" cy="291" r="2"/><circle cx="740" cy="295" r="4"/><circle cx="759" cy="297" r="5"/><circle cx="566" cy="299" r="3"/><circle cx="406" cy="297" r="3"/><circle cx="770" cy="292" r="4"/><circle cx="536" cy="295" r="3"/><circle cx="408" cy="295" r="4"/><circle cx="375" cy="298" r="3"/><circle cx="815" cy="292" r="3"/><circle cx="402" cy="297" r="3"/><circle cx="447" cy="294" r="3"/><circle cx="409" cy="298" r="2"/><circle cx="198" cy="299" r="3"/><circle cx="672" cy="297" r="5"/><circle cx="391" cy="295" r="5"/><circle cx="270" cy="293" r="3"/><circle cx="470" cy="295" r="4"/><circle cx="23" cy="291" r="4"/><circle cx="161" cy="298" r="5"/><circle cx="469" cy="299" r="4"/><circle cx="186" cy="292" r="3"/><circle cx="356" cy="298" r="3"/><circle cx="363" cy="298" r="5"/><circle cx="376" cy="290" r="3"/><circle cx="135" cy="295" r="2"/><circle cx="823" cy="291" r="4"/><circle cx="338" cy="292" r="3"/><circle cx="45" cy="291" r="5"/><circle cx="511" cy="297" r="4"/><circle cx="565" cy="295" r="3"/><circle cx="498" cy="296" r="3"/><circle cx="674" cy="292" r="5"/><circle cx="605" cy="295" r="4"/><circle cx="413" cy="294" r="4"/><circle cx="371" cy="291" r="3"/><circle cx="584" cy="299" r="4"/><circle cx="288" cy="298" r="3"/><circle cx="358" cy="296" r="3"/><circle cx="341" cy="292" r="3"/><circle cx="76" cy="297" r="3"/><circle cx="569" cy="291" r="3"/><circle cx="481" cy="298" r="3"/><circle cx="555" cy="299" r="3"/><circle cx="126" cy="292" r="4"/><circle cx="290" cy="291" r="5"/><circle cx="533" cy="292" r="4"/><circle cx="161" cy="290" r="4"/><circle cx="14" cy="295" r="5"/><circle cx="688" cy="298" r="2"/><circle cx="795" cy="297" r="5"/><circle cx="640" cy="296" r="3"/><circle cx="674" cy="295" r="4"/><circle cx="294" cy="292" r="5"/><circle cx="623" cy="293" r="3"/><circle cx="179" cy="300" r="3"/><circle cx="337" cy="300" r="5"/><circle cx="43" cy="296" r="3"/><circle cx="609" cy="296" r="3"/><circle cx="23" cy="296" r="3"/><circle cx="659" cy="294" r="4"/><circle cx="232" cy="291" r="2"/><circle cx="705" cy="297" r="2"/><circle cx="91" cy="298" r="3"/><circle cx="519" cy="293" r="2"/><circle cx="632" cy="295" r="5"/><circle cx="637" cy="293" r="4"/><circle cx="214" cy="299" r="3"/><circle cx="765" cy="297" r="2"/><circle cx="279" cy="292" r="3"/><circle cx="192" cy="295" r="3"/><circle cx="743" cy="291" r="4"/></g><g fill="#42663c"><circle cx="894" cy="290" r="4"/><circle cx="886" cy="297" r="4"/><circle cx="864" cy="298" r="3"/><circle cx="863" cy="291" r="5"/><circle cx="870" cy="297" r="2"/><circle cx="904" cy="297" r="4"/><circle cx="896" cy="297" r="5"/><circle cx="871" cy="295" r="3"/><circle cx="906" cy="291" r="3"/><circle cx="937" cy="291" r="4"/></g><g fill="#547e42"><circle cx="808" cy="294" r="2"/><circle cx="767" cy="297" r="3"/><circle cx="780" cy="290" r="3"/><circle cx="801" cy="299" r="3"/><circle cx="777" cy="298" r="2"/><circle cx="760" cy="295" r="3"/><circle cx="787" cy="291" r="4"/></g><g fill="#547e3c"><circle cx="614" cy="298" r="5"/><circle cx="6" cy="296" r="4"/><circle cx="273" cy="293" r="3"/><circle cx="716" cy="296" r="4"/><circle cx="680" cy="292" r="2"/><circle cx="654" cy="297" r="3"/><circle cx="113" cy="297" r="3"/><circle cx="3" cy="291" r="5"/><circle cx="257" cy="300" r="4"/><circle cx="716" cy="299" r="4"/><circle cx="739" cy="297" r="3"/><circle cx="79" cy="293" r="2"/><circle cx="70" cy="297" r="4"/><circle cx="714" cy="298" r="5"/><circle cx="132" cy="290" r="2"/><circle cx="245" cy="299" r="3"/><circle cx="195" cy="296" r="5"/><circle cx="203" cy="293" r="5"/><circle cx="287" cy="295" r="4"/><circle cx="697" cy="291" r="4"/><circle cx="533" cy="298" r="3"/><circle cx="591" cy="295" r="4"/><circle cx="364" cy="295" r="4"/><circle cx="174" cy="299" r="5"/><circle cx="98" cy="300" r="4"/><circle cx="311" cy="292" r="4"/><circle cx="384" cy="293" r="5"/><circle cx="355" cy="299" r="4"/><circle cx="209" cy="299" r="3"/><circle cx="404" cy="298" r="4"/><circle cx="50" cy="299" r="3"/><circle cx="588" cy="298" r="3"/><circle cx="227" cy="297" r="4"/><circle cx="172" cy="295" r="2"/><circle cx="398" cy="293" r="3"/><circle cx="364" cy="292" r="4"/><circle cx="733" cy="298" r="4"/><circle cx="23" cy="296" r="4"/><circle cx="326" cy="296" r="3"/><circle cx="529" cy="297" r="4"/><circle cx="582" cy="297" r="4"/><circle cx="633" cy="298" r="2"/><circle cx="696" cy="299" r="3"/><circle cx="468" cy="296" r="5"/><circle cx="387" cy="293" r="3"/><circle cx="650" cy="296" r="3"/><circle cx="647" cy="298" r="4"/><circle cx="595" cy="295" r="4"/><circle cx="54" cy="293" r="4"/><circle cx="144" cy="294" r="3"/><circle cx="44" cy="296" r="4"/><circle cx="239" cy="297" r="2"/><circle cx="657" cy="290" r="3"/></g><g fill="#5a784e"><circle cx="1096" cy="294" r="3"/><circle cx="1111" cy="291" r="3"/><circle cx="1070" cy="291" r="3"/><circle cx="1080" cy="294" r="4"/><circle cx="1042" cy="292" r="2"/></g><g fill="#5a7842"><circle cx="883" cy="290" r="3"/><circle cx="870" cy="296" r="4"/></g><g fill="#607254"><circle cx="1260" cy="299" r="5"/><circle cx="1308" cy="292" r="3"/><circle cx="1208" cy="297" r="4"/><circle cx="1237" cy="299" r="5"/><circle cx="1206" cy="297" r="2"/><circle cx="1309" cy="291" r="5"/><circle cx="1303" cy="298" r="3"/><circle cx="1270" cy="296" r="2"/><circle cx="1282" cy="292" r="4"/><circle cx="1302" cy="296" r="4"/><circle cx="1294" cy="298" r="4"/><circle cx="1222" cy="295" r="2"/><circle cx="1204" cy="298" r="2"/><circle cx="1260" cy="297" r="3"/><circle cx="1239" cy="293" r="2"/></g><g fill="#425a42"><circle cx="1434" cy="293" r="5"/><circle cx="1424" cy="294" r="3"/><circle cx="1399" cy="300" r="3"/><circle cx="1438" cy="292" r="2"/><circle cx="1440" cy="294" r="4"/><circle cx="1424" cy="298" r="3"/></g><g fill="#425a3c"><circle cx="1354" cy="300" r="4"/><circle cx="1300" cy="290" r="4"/><circle cx="1325" cy="300" r="3"/><circle cx="1341" cy="295" r="3"/><circle cx="1283" cy="299" r="4"/><circle cx="1320" cy="297" r="3"/><circle cx="1392" cy="291" r="3"/><circle cx="1364" cy="299" r="3"/><circle cx="1307" cy="292" r="3"/><circle cx="1306" cy="300" r="4"/><circle cx="1395" cy="296" r="3"/><circle cx="1349" cy="299" r="4"/></g><g fill="#2a482a"><circle cx="725" cy="301" r="5"/><circle cx="809" cy="302" r="2"/><circle cx="864" cy="302" r="4"/><circle cx="885" cy="301" r="5"/><circle cx="492" cy="302" r="4"/><circle cx="61" cy="301" r="4"/><circle cx="1053" cy="302" r="3"/><circle cx="131" cy="302" r="4"/><circle cx="449" cy="300" r="5"/><circle cx="1352" cy="301" r="3"/><circle cx="495" cy="302" r="2"/><circle cx="1103" cy="301" r="3"/><circle cx="1313" cy="302" r="5"/><circle cx="1202" cy="301" r="3"/><circle cx="1088" cy="302" r="3"/><circle cx="13" cy="302" r="4"/><circle cx="26" cy="301" r="4"/><circle cx="1133" cy="300" r="3"/><circle cx="138" cy="300" r="2"/><circle cx="280" cy="301" r="4"/><circle cx="268" cy="302" r="3"/><circle cx="1128" cy="301" r="4"/><circle cx="661" cy="301" r="2"/><circle cx="721" cy="301" r="3"/><circle cx="324" cy="301" r="3"/><circle cx="920" cy="300" r="2"/><circle cx="89" cy="302" r="4"/><circle cx="1107" cy="301" r="5"/><circle cx="1318" cy="300" r="3"/><circle cx="1280" cy="300" r="4"/></g><g fill="#42603c"><circle cx="1118" cy="301" r="2"/><circle cx="1058" cy="300" r="4"/><circle cx="1046" cy="300" r="4"/><circle cx="1044" cy="301" r="4"/><circle cx="1019" cy="301" r="2"/><circle cx="1185" cy="302" r="3"/><circle cx="967" cy="301" r="2"/><circle cx="1045" cy="301" r="3"/><circle cx="1058" cy="301" r="3"/></g><g fill="#426636"><circle cx="671" cy="301" r="5"/><circle cx="229" cy="300" r="5"/><circle cx="526" cy="301" r="3"/><circle cx="348" cy="301" r="3"/><circle cx="28" cy="301" r="3"/><circle cx="565" cy="302" r="2"/><circle cx="829" cy="302" r="4"/><circle cx="173" cy="301" r="5"/><circle cx="218" cy="301" r="2"/><circle cx="267" cy="300" r="4"/><circle cx="568" cy="302" r="4"/><circle cx="666" cy="301" r="3"/><circle cx="307" cy="301" r="3"/><circle cx="406" cy="302" r="3"/><circle cx="473" cy="300" r="3"/><circle cx="136" cy="301" r="4"/><circle cx="7" cy="302" r="4"/><circle cx="388" cy="301" r="4"/><circle cx="73" cy="302" r="3"/><circle cx="526" cy="301" r="3"/><circle cx="479" cy="302" r="2"/><circle cx="827" cy="301" r="4"/><circle cx="215" cy="300" r="3"/><circle cx="750" cy="301" r="4"/><circle cx="13" cy="302" r="2"/><circle cx="544" cy="301" r="5"/><circle cx="323" cy="300" r="2"/><circle cx="464" cy="302" r="3"/><circle cx="627" cy="301" r="4"/><circle cx="601" cy="301" r="3"/><circle cx="595" cy="300" r="4"/></g><g fill="#547e3c"><circle cx="59" cy="300" r="3"/><circle cx="648" cy="300" r="2"/><circle cx="288" cy="301" r="5"/><circle cx="7" cy="301" r="5"/><circle cx="156" cy="302" r="4"/><circle cx="358" cy="302" r="4"/><circle cx="589" cy="300" r="4"/><circle cx="59" cy="301" r="3"/><circle cx="188" cy="300" r="3"/></g><g fill="#547e42"><circle cx="806" cy="301" r="4"/><circle cx="834" cy="301" r="4"/><circle cx="757" cy="301" r="3"/><circle cx="783" cy="301" r="2"/><circle cx="817" cy="301" r="2"/></g><g fill="#607254"><circle cx="1289" cy="302" r="3"/></g><g fill="#5a784e"><circle cx="1067" cy="301" r="4"/><circle cx="1151" cy="301" r="5"/></g><g fill="#42663c"><circle cx="942" cy="301" r="2"/><circle cx="860" cy="300" r="4"/><circle cx="866" cy="301" r="2"/></g><g fill="#425a3c"><circle cx="1340" cy="301" r="2"/><circle cx="1319" cy="302" r="4"/><circle cx="1349" cy="302" r="3"/><circle cx="1280" cy="301" r="4"/><circle cx="1330" cy="301" r="3"/><circle cx="1351" cy="302" r="2"/><circle cx="1375" cy="302" r="3"/><circle cx="1269" cy="301" r="5"/></g><g fill="#5a7842"><circle cx="894" cy="301" r="5"/></g></g>
<g filter="url(#b15)" opacity=".7"><rect x="1145" y="207" width="5" height="4" fill="#868c91"/><rect x="1003" y="199" width="4" height="4" fill="#8c8584"/><rect x="1239" y="211" width="5" height="3" fill="#8c8584"/><rect x="1170" y="211" width="5" height="3" fill="#74787a"/><rect x="1120" y="203" width="5" height="4" fill="#8c8584"/><rect x="1029" y="206" width="5" height="3" fill="#a9adb2"/><rect x="1165" y="209" width="6" height="3" fill="#b8bbbe"/><rect x="1194" y="198" width="3" height="4" fill="#b8bbbe"/><rect x="973" y="208" width="5" height="3" fill="#b8bbbe"/><rect x="1229" y="213" width="4" height="4" fill="#b8bbbe"/><rect x="1026" y="211" width="4" height="4" fill="#8c8584"/><rect x="999" y="201" width="4" height="3" fill="#9aa0a5"/><rect x="1108" y="195" width="4" height="4" fill="#868c91"/><rect x="1055" y="214" width="5" height="4" fill="#a9adb2"/><rect x="1089" y="205" width="5" height="3" fill="#a9adb2"/><rect x="1048" y="200" width="4" height="4" fill="#9aa0a5"/><rect x="974" y="203" width="4" height="4" fill="#868c91"/><rect x="1131" y="212" width="6" height="4" fill="#b8bbbe"/><rect x="1049" y="204" width="6" height="3" fill="#868c91"/><rect x="986" y="216" width="5" height="3" fill="#9aa0a5"/><rect x="986" y="214" width="4" height="4" fill="#74787a"/><rect x="1188" y="213" width="5" height="4" fill="#b8bbbe"/><rect x="1189" y="217" width="6" height="4" fill="#74787a"/><rect x="1220" y="198" width="3" height="4" fill="#9aa0a5"/><rect x="1018" y="202" width="5" height="4" fill="#868c91"/><rect x="1150" y="198" width="5" height="3" fill="#74787a"/><rect x="1154" y="200" width="4" height="3" fill="#b8bbbe"/><rect x="1231" y="219" width="3" height="3" fill="#9aa0a5"/><rect x="1192" y="202" width="5" height="3" fill="#a9adb2"/><rect x="973" y="202" width="5" height="3" fill="#a9adb2"/><rect x="1032" y="211" width="5" height="3" fill="#b8bbbe"/><rect x="968" y="199" width="4" height="3" fill="#8c8584"/><rect x="1035" y="198" width="4" height="3" fill="#9aa0a5"/><rect x="1102" y="216" width="6" height="4" fill="#8c8584"/><rect x="1064" y="206" width="6" height="4" fill="#b8bbbe"/><rect x="1178" y="214" width="5" height="4" fill="#b8bbbe"/><rect x="1214" y="200" width="5" height="3" fill="#8c8584"/><rect x="1108" y="195" width="6" height="3" fill="#b8bbbe"/><rect x="1229" y="197" width="4" height="3" fill="#b8bbbe"/><rect x="1000" y="212" width="4" height="4" fill="#868c91"/><rect x="997" y="201" width="4" height="3" fill="#a9adb2"/><rect x="1181" y="213" width="5" height="4" fill="#868c91"/><rect x="1110" y="220" width="4" height="4" fill="#74787a"/><rect x="1063" y="216" width="4" height="3" fill="#a9adb2"/><rect x="1102" y="204" width="4" height="3" fill="#a9adb2"/><rect x="978" y="204" width="5" height="4" fill="#b8bbbe"/><rect x="1226" y="212" width="3" height="3" fill="#868c91"/><rect x="987" y="200" width="5" height="3" fill="#b8bbbe"/><rect x="1058" y="221" width="5" height="3" fill="#a9adb2"/><rect x="1061" y="198" width="4" height="4" fill="#b8bbbe"/><rect x="1212" y="198" width="5" height="3" fill="#74787a"/><rect x="1019" y="216" width="5" height="4" fill="#74787a"/><rect x="1069" y="219" width="5" height="3" fill="#868c91"/><rect x="1053" y="214" width="5" height="4" fill="#8c8584"/><rect x="1105" y="197" width="5" height="4" fill="#b8bbbe"/><rect x="1078" y="206" width="4" height="3" fill="#8c8584"/><rect x="963" y="205" width="6" height="3" fill="#a9adb2"/><rect x="1092" y="208" width="4" height="3" fill="#9aa0a5"/><rect x="961" y="206" width="5" height="3" fill="#b8bbbe"/><rect x="1057" y="211" width="3" height="4" fill="#8c8584"/><rect x="1131" y="217" width="4" height="3" fill="#868c91"/><rect x="1004" y="222" width="5" height="3" fill="#74787a"/><rect x="1022" y="208" width="6" height="4" fill="#b8bbbe"/><rect x="1147" y="199" width="5" height="3" fill="#868c91"/><rect x="1213" y="198" width="4" height="3" fill="#74787a"/><rect x="965" y="195" width="5" height="3" fill="#868c91"/><rect x="1058" y="213" width="6" height="3" fill="#a9adb2"/><rect x="1090" y="198" width="6" height="3" fill="#a9adb2"/><rect x="1034" y="203" width="5" height="4" fill="#8c8584"/><rect x="986" y="215" width="5" height="4" fill="#8c8584"/><rect x="991" y="216" width="4" height="4" fill="#9aa0a5"/><rect x="1112" y="218" width="5" height="3" fill="#a9adb2"/><rect x="1048" y="196" width="4" height="4" fill="#b8bbbe"/><rect x="1178" y="219" width="4" height="4" fill="#8c8584"/><rect x="1024" y="194" width="5" height="4" fill="#8c8584"/><rect x="971" y="201" width="5" height="3" fill="#b8bbbe"/><rect x="1010" y="201" width="4" height="3" fill="#9aa0a5"/><rect x="992" y="210" width="6" height="4" fill="#8c8584"/><rect x="1145" y="221" width="5" height="4" fill="#a9adb2"/><rect x="1111" y="203" width="4" height="4" fill="#868c91"/><rect x="1187" y="205" width="6" height="4" fill="#a9adb2"/><rect x="1020" y="214" width="4" height="4" fill="#b8bbbe"/><rect x="1161" y="217" width="6" height="4" fill="#8c8584"/><rect x="1152" y="213" width="5" height="4" fill="#74787a"/><rect x="971" y="205" width="4" height="4" fill="#9aa0a5"/><rect x="1048" y="202" width="5" height="4" fill="#a9adb2"/><rect x="1044" y="212" width="5" height="4" fill="#b8bbbe"/><rect x="972" y="201" width="4" height="3" fill="#868c91"/><rect x="1056" y="217" width="6" height="3" fill="#868c91"/><rect x="1063" y="219" width="4" height="4" fill="#a9adb2"/><rect x="1085" y="209" width="3" height="3" fill="#8c8584"/><rect x="1182" y="194" width="6" height="3" fill="#74787a"/><rect x="990" y="194" width="4" height="4" fill="#868c91"/><rect x="1036" y="196" width="5" height="4" fill="#74787a"/><rect x="998" y="209" width="4" height="3" fill="#868c91"/><rect x="1063" y="200" width="3" height="3" fill="#a9adb2"/><rect x="1030" y="219" width="4" height="4" fill="#b8bbbe"/><rect x="1071" y="206" width="6" height="4" fill="#b8bbbe"/><rect x="998" y="221" width="4" height="4" fill="#9aa0a5"/><rect x="1163" y="211" width="3" height="3" fill="#8c8584"/><rect x="1156" y="194" width="3" height="3" fill="#a9adb2"/><rect x="972" y="211" width="5" height="3" fill="#b8bbbe"/><rect x="1181" y="219" width="5" height="3" fill="#74787a"/><rect x="1049" y="196" width="3" height="3" fill="#b8bbbe"/><rect x="998" y="216" width="3" height="4" fill="#9aa0a5"/><rect x="970" y="201" width="4" height="3" fill="#74787a"/><rect x="1233" y="212" width="4" height="3" fill="#74787a"/><rect x="1190" y="202" width="6" height="3" fill="#9aa0a5"/><rect x="960" y="221" width="5" height="4" fill="#868c91"/><rect x="1006" y="213" width="3" height="3" fill="#74787a"/><rect x="1108" y="206" width="4" height="3" fill="#a9adb2"/><rect x="1063" y="218" width="5" height="3" fill="#8c8584"/><rect x="1124" y="215" width="3" height="3" fill="#b8bbbe"/><rect x="1192" y="215" width="5" height="3" fill="#b8bbbe"/><rect x="1120" y="213" width="6" height="4" fill="#9aa0a5"/><rect x="1224" y="211" width="5" height="3" fill="#b8bbbe"/><rect x="1061" y="195" width="5" height="4" fill="#8c8584"/><rect x="1224" y="217" width="4" height="3" fill="#74787a"/><rect x="1084" y="197" width="3" height="4" fill="#74787a"/><rect x="1192" y="208" width="5" height="4" fill="#9aa0a5"/><rect x="1114" y="210" width="5" height="4" fill="#a9adb2"/><rect x="1065" y="207" width="4" height="4" fill="#b8bbbe"/><rect x="1057" y="212" width="6" height="3" fill="#868c91"/><rect x="999" y="203" width="4" height="3" fill="#b8bbbe"/><rect x="1199" y="205" width="6" height="3" fill="#b8bbbe"/><rect x="1088" y="211" width="4" height="4" fill="#b8bbbe"/><rect x="989" y="215" width="4" height="4" fill="#9aa0a5"/><rect x="1165" y="198" width="4" height="3" fill="#8c8584"/><rect x="1224" y="201" width="3" height="4" fill="#9aa0a5"/><rect x="1072" y="216" width="4" height="4" fill="#868c91"/><rect x="967" y="216" width="5" height="4" fill="#8c8584"/><rect x="1044" y="216" width="5" height="4" fill="#868c91"/><rect x="1184" y="204" width="4" height="4" fill="#74787a"/><rect x="1051" y="215" width="5" height="3" fill="#a9adb2"/><rect x="985" y="222" width="3" height="3" fill="#9aa0a5"/><rect x="998" y="219" width="4" height="4" fill="#8c8584"/><rect x="1150" y="207" width="4" height="3" fill="#b8bbbe"/><rect x="1049" y="203" width="3" height="3" fill="#b8bbbe"/><rect x="992" y="222" width="5" height="3" fill="#9aa0a5"/><rect x="1074" y="219" width="4" height="3" fill="#74787a"/><rect x="1162" y="217" width="4" height="4" fill="#74787a"/><rect x="994" y="203" width="6" height="4" fill="#8c8584"/><rect x="1049" y="201" width="6" height="4" fill="#9aa0a5"/><rect x="1070" y="219" width="3" height="4" fill="#8c8584"/><rect x="1045" y="209" width="6" height="4" fill="#8c8584"/><rect x="1131" y="210" width="5" height="3" fill="#a9adb2"/><rect x="1105" y="222" width="4" height="4" fill="#a9adb2"/><rect x="1122" y="203" width="5" height="3" fill="#9aa0a5"/><rect x="1162" y="197" width="6" height="3" fill="#9aa0a5"/><rect x="1094" y="197" width="4" height="3" fill="#868c91"/><rect x="994" y="200" width="3" height="3" fill="#74787a"/><rect x="1119" y="213" width="4" height="4" fill="#8c8584"/><rect x="1038" y="203" width="3" height="4" fill="#9aa0a5"/><rect x="1023" y="215" width="6" height="3" fill="#74787a"/><rect x="985" y="196" width="4" height="3" fill="#9aa0a5"/><rect x="1120" y="200" width="4" height="4" fill="#74787a"/><rect x="1223" y="215" width="3" height="4" fill="#868c91"/><rect x="1102" y="206" width="4" height="3" fill="#8c8584"/><rect x="1214" y="212" width="6" height="4" fill="#9aa0a5"/><rect x="1190" y="201" width="5" height="3" fill="#868c91"/><rect x="1106" y="211" width="3" height="4" fill="#8c8584"/><rect x="1058" y="220" width="4" height="4" fill="#74787a"/><rect x="1084" y="196" width="5" height="4" fill="#a9adb2"/><rect x="1148" y="199" width="6" height="3" fill="#868c91"/><rect x="1212" y="210" width="4" height="3" fill="#868c91"/><rect x="1199" y="208" width="5" height="3" fill="#8c8584"/><rect x="1215" y="221" width="5" height="4" fill="#868c91"/><rect x="1232" y="218" width="4" height="4" fill="#74787a"/><rect x="1168" y="197" width="5" height="4" fill="#868c91"/><rect x="1091" y="213" width="5" height="4" fill="#8c8584"/><rect x="1204" y="213" width="6" height="4" fill="#74787a"/><rect x="969" y="206" width="4" height="4" fill="#a9adb2"/><rect x="1195" y="208" width="4" height="4" fill="#b8bbbe"/><rect x="994" y="216" width="3" height="3" fill="#8c8584"/><rect x="1191" y="221" width="6" height="3" fill="#8c8584"/><rect x="1152" y="206" width="4" height="3" fill="#868c91"/><rect x="1187" y="204" width="5" height="4" fill="#8c8584"/><rect x="964" y="213" width="5" height="4" fill="#9aa0a5"/><rect x="1161" y="217" width="6" height="3" fill="#868c91"/><rect x="1128" y="206" width="4" height="3" fill="#a9adb2"/><rect x="1030" y="207" width="5" height="3" fill="#74787a"/><rect x="1212" y="196" width="4" height="3" fill="#74787a"/><rect x="1005" y="218" width="5" height="3" fill="#8c8584"/><rect x="1055" y="215" width="5" height="4" fill="#b8bbbe"/><rect x="1145" y="194" width="3" height="3" fill="#b8bbbe"/><rect x="1206" y="210" width="4" height="4" fill="#9aa0a5"/><rect x="1063" y="219" width="3" height="4" fill="#8c8584"/><rect x="1173" y="219" width="4" height="4" fill="#9aa0a5"/><rect x="1055" y="209" width="4" height="3" fill="#b8bbbe"/><rect x="1137" y="207" width="3" height="3" fill="#8c8584"/><rect x="1187" y="196" width="4" height="3" fill="#a9adb2"/><rect x="1025" y="196" width="4" height="3" fill="#b8bbbe"/><rect x="1189" y="222" width="4" height="4" fill="#b8bbbe"/><rect x="1151" y="214" width="4" height="3" fill="#a9adb2"/><rect x="1235" y="220" width="5" height="4" fill="#74787a"/><rect x="1143" y="206" width="6" height="4" fill="#9aa0a5"/><rect x="1180" y="211" width="4" height="4" fill="#9aa0a5"/><rect x="1150" y="194" width="3" height="4" fill="#8c8584"/><rect x="1081" y="210" width="3" height="4" fill="#8c8584"/><rect x="972" y="214" width="4" height="4" fill="#74787a"/><rect x="987" y="201" width="4" height="4" fill="#868c91"/><rect x="1209" y="209" width="6" height="4" fill="#8c8584"/><rect x="966" y="213" width="6" height="3" fill="#b8bbbe"/><rect x="1238" y="218" width="5" height="4" fill="#8c8584"/><rect x="1052" y="211" width="5" height="4" fill="#868c91"/><rect x="1174" y="214" width="4" height="3" fill="#b8bbbe"/><rect x="1106" y="199" width="6" height="4" fill="#868c91"/><rect x="1052" y="218" width="6" height="3" fill="#9aa0a5"/><rect x="979" y="214" width="4" height="4" fill="#b8bbbe"/><rect x="1113" y="198" width="4" height="4" fill="#a9adb2"/><rect x="987" y="203" width="5" height="3" fill="#b8bbbe"/><rect x="1022" y="220" width="5" height="4" fill="#a9adb2"/><rect x="1223" y="200" width="5" height="3" fill="#a9adb2"/><rect x="1026" y="195" width="4" height="4" fill="#a9adb2"/><rect x="981" y="214" width="4" height="4" fill="#868c91"/><rect x="963" y="217" width="4" height="4" fill="#9aa0a5"/><rect x="1101" y="202" width="5" height="3" fill="#b8bbbe"/><rect x="1188" y="204" width="3" height="3" fill="#9aa0a5"/><rect x="1189" y="210" width="5" height="3" fill="#74787a"/><rect x="1203" y="200" width="6" height="4" fill="#a9adb2"/><rect x="965" y="218" width="3" height="3" fill="#868c91"/><rect x="1144" y="203" width="4" height="4" fill="#b8bbbe"/><rect x="1121" y="206" width="5" height="4" fill="#a9adb2"/><rect x="1087" y="206" width="5" height="3" fill="#8c8584"/><rect x="1126" y="209" width="6" height="4" fill="#868c91"/><rect x="1060" y="214" width="4" height="3" fill="#9aa0a5"/><rect x="1095" y="201" width="4" height="4" fill="#8c8584"/><rect x="1159" y="208" width="5" height="4" fill="#74787a"/><rect x="1141" y="205" width="6" height="3" fill="#8c8584"/><rect x="1221" y="196" width="4" height="3" fill="#868c91"/><rect x="1096" y="220" width="4" height="4" fill="#8c8584"/><rect x="1194" y="221" width="4" height="3" fill="#b8bbbe"/><rect x="1059" y="222" width="5" height="3" fill="#a9adb2"/><rect x="1160" y="221" width="3" height="4" fill="#b8bbbe"/><rect x="1161" y="203" width="4" height="4" fill="#9aa0a5"/><rect x="1020" y="204" width="6" height="4" fill="#b8bbbe"/><rect x="1176" y="208" width="5" height="4" fill="#b8bbbe"/><rect x="1121" y="219" width="3" height="3" fill="#74787a"/><rect x="993" y="200" width="5" height="3" fill="#b8bbbe"/><rect x="1155" y="202" width="4" height="3" fill="#74787a"/><rect x="972" y="207" width="5" height="4" fill="#9aa0a5"/><rect x="990" y="204" width="6" height="3" fill="#74787a"/><rect x="1018" y="208" width="4" height="3" fill="#8c8584"/><rect x="1085" y="208" width="4" height="3" fill="#a9adb2"/><rect x="1177" y="222" width="5" height="3" fill="#74787a"/><rect x="1221" y="201" width="6" height="3" fill="#8c8584"/><rect x="1081" y="201" width="4" height="4" fill="#a9adb2"/><rect x="1200" y="195" width="4" height="3" fill="#b8bbbe"/><rect x="1193" y="211" width="4" height="3" fill="#868c91"/><rect x="981" y="215" width="4" height="4" fill="#74787a"/><rect x="1230" y="219" width="6" height="3" fill="#a9adb2"/><rect x="1137" y="206" width="6" height="3" fill="#74787a"/><rect x="1075" y="207" width="5" height="4" fill="#a9adb2"/><rect x="1173" y="210" width="4" height="4" fill="#868c91"/><rect x="1178" y="205" width="5" height="3" fill="#8c8584"/><rect x="1121" y="195" width="5" height="3" fill="#8c8584"/><rect x="1100" y="200" width="4" height="3" fill="#74787a"/><rect x="1065" y="197" width="4" height="3" fill="#9aa0a5"/><rect x="1029" y="211" width="3" height="3" fill="#868c91"/><rect x="1002" y="204" width="5" height="3" fill="#8c8584"/><rect x="1007" y="215" width="3" height="4" fill="#868c91"/><rect x="1033" y="209" width="4" height="4" fill="#74787a"/><rect x="1179" y="217" width="5" height="3" fill="#74787a"/><rect x="984" y="211" width="4" height="4" fill="#74787a"/><rect x="1217" y="222" width="4" height="3" fill="#9aa0a5"/><rect x="1034" y="198" width="5" height="3" fill="#74787a"/><rect x="962" y="194" width="5" height="4" fill="#74787a"/><rect x="1052" y="214" width="6" height="4" fill="#868c91"/><rect x="1046" y="199" width="3" height="3" fill="#b8bbbe"/><rect x="1129" y="221" width="6" height="4" fill="#8c8584"/><rect x="1220" y="210" width="4" height="4" fill="#8c8584"/><rect x="1205" y="206" width="4" height="3" fill="#868c91"/><rect x="1069" y="210" width="5" height="4" fill="#868c91"/><rect x="1184" y="205" width="5" height="3" fill="#74787a"/><rect x="1025" y="218" width="4" height="4" fill="#74787a"/><rect x="1235" y="210" width="3" height="3" fill="#74787a"/><rect x="999" y="218" width="4" height="3" fill="#b8bbbe"/><rect x="1071" y="197" width="4" height="3" fill="#8c8584"/><rect x="1189" y="214" width="3" height="4" fill="#9aa0a5"/><rect x="1109" y="219" width="4" height="4" fill="#b8bbbe"/><rect x="1211" y="222" width="5" height="4" fill="#868c91"/><rect x="968" y="211" width="4" height="4" fill="#9aa0a5"/><rect x="1212" y="214" width="4" height="3" fill="#74787a"/><rect x="963" y="204" width="4" height="3" fill="#74787a"/><rect x="1204" y="196" width="4" height="4" fill="#74787a"/><rect x="1017" y="198" width="4" height="4" fill="#74787a"/><rect x="1237" y="209" width="4" height="4" fill="#b8bbbe"/><rect x="996" y="196" width="4" height="3" fill="#b8bbbe"/><rect x="1208" y="213" width="4" height="4" fill="#868c91"/><rect x="1237" y="211" width="5" height="3" fill="#9aa0a5"/><rect x="986" y="199" width="3" height="3" fill="#a9adb2"/><rect x="1228" y="203" width="5" height="3" fill="#9aa0a5"/><rect x="1106" y="207" width="4" height="3" fill="#868c91"/><rect x="1026" y="216" width="5" height="3" fill="#9aa0a5"/><rect x="1021" y="213" width="3" height="4" fill="#b8bbbe"/><rect x="1105" y="210" width="3" height="3" fill="#9aa0a5"/><rect x="1178" y="221" width="4" height="4" fill="#a9adb2"/><rect x="1091" y="206" width="4" height="3" fill="#8c8584"/><rect x="1081" y="210" width="5" height="4" fill="#9aa0a5"/><rect x="1157" y="207" width="4" height="3" fill="#b8bbbe"/><rect x="1140" y="206" width="4" height="3" fill="#74787a"/><rect x="1012" y="215" width="6" height="3" fill="#8c8584"/><rect x="1187" y="209" width="3" height="3" fill="#8c8584"/><rect x="1195" y="210" width="5" height="4" fill="#868c91"/><rect x="1095" y="204" width="4" height="3" fill="#b8bbbe"/><rect x="1201" y="198" width="5" height="3" fill="#9aa0a5"/><rect x="972" y="218" width="5" height="3" fill="#74787a"/><rect x="1050" y="196" width="5" height="3" fill="#a9adb2"/><rect x="1160" y="211" width="5" height="4" fill="#74787a"/><rect x="1205" y="195" width="4" height="4" fill="#868c91"/><rect x="1161" y="195" width="3" height="3" fill="#74787a"/><rect x="1120" y="212" width="5" height="3" fill="#b8bbbe"/><rect x="1053" y="218" width="4" height="4" fill="#b8bbbe"/><rect x="1051" y="214" width="5" height="3" fill="#b8bbbe"/><rect x="1166" y="211" width="4" height="4" fill="#8c8584"/><rect x="1003" y="204" width="4" height="3" fill="#a9adb2"/><rect x="1029" y="215" width="5" height="4" fill="#74787a"/><rect x="1225" y="215" width="3" height="4" fill="#a9adb2"/><rect x="1188" y="210" width="3" height="3" fill="#74787a"/><rect x="974" y="220" width="5" height="4" fill="#74787a"/><rect x="1188" y="200" width="4" height="3" fill="#74787a"/><rect x="1235" y="219" width="6" height="4" fill="#8c8584"/><rect x="1079" y="200" width="6" height="4" fill="#a9adb2"/><rect x="1036" y="197" width="6" height="3" fill="#b8bbbe"/><rect x="961" y="218" width="6" height="4" fill="#9aa0a5"/><rect x="1069" y="201" width="3" height="4" fill="#8c8584"/><rect x="1192" y="222" width="4" height="3" fill="#8c8584"/><rect x="1203" y="216" width="6" height="3" fill="#a9adb2"/><rect x="1233" y="202" width="5" height="3" fill="#8c8584"/><rect x="1030" y="213" width="3" height="3" fill="#8c8584"/><rect x="1014" y="200" width="3" height="3" fill="#74787a"/><rect x="1023" y="208" width="6" height="4" fill="#868c91"/><rect x="1058" y="205" width="3" height="3" fill="#868c91"/><rect x="1202" y="211" width="4" height="3" fill="#9aa0a5"/><rect x="1101" y="208" width="3" height="3" fill="#a9adb2"/><rect x="1044" y="204" width="3" height="3" fill="#9aa0a5"/><rect x="1127" y="211" width="5" height="4" fill="#a9adb2"/><rect x="1156" y="220" width="5" height="3" fill="#b8bbbe"/><rect x="1075" y="201" width="4" height="3" fill="#868c91"/><rect x="1174" y="198" width="4" height="4" fill="#9aa0a5"/><rect x="1012" y="212" width="3" height="3" fill="#74787a"/><rect x="1236" y="207" width="5" height="4" fill="#a9adb2"/><rect x="1015" y="212" width="3" height="3" fill="#8c8584"/><rect x="1015" y="205" width="4" height="4" fill="#8c8584"/><rect x="1132" y="214" width="6" height="4" fill="#a9adb2"/><rect x="1033" y="195" width="5" height="3" fill="#a9adb2"/><rect x="1197" y="201" width="6" height="3" fill="#a9adb2"/><rect x="1205" y="216" width="5" height="4" fill="#74787a"/><rect x="1170" y="202" width="4" height="3" fill="#8c8584"/><rect x="1150" y="197" width="4" height="3" fill="#a9adb2"/><rect x="1005" y="210" width="3" height="4" fill="#868c91"/><rect x="968" y="217" width="5" height="3" fill="#a9adb2"/><rect x="1197" y="212" width="3" height="4" fill="#74787a"/><rect x="1152" y="199" width="5" height="4" fill="#868c91"/><rect x="1022" y="207" width="3" height="3" fill="#a9adb2"/><rect x="1037" y="218" width="3" height="4" fill="#a9adb2"/><rect x="964" y="211" width="5" height="3" fill="#868c91"/><rect x="1162" y="197" width="5" height="4" fill="#b8bbbe"/><rect x="1030" y="209" width="5" height="3" fill="#8c8584"/><rect x="1218" y="205" width="5" height="3" fill="#8c8584"/><rect x="1152" y="212" width="5" height="3" fill="#74787a"/><rect x="1208" y="211" width="4" height="3" fill="#a9adb2"/><rect x="1188" y="217" width="4" height="4" fill="#868c91"/><rect x="983" y="220" width="4" height="4" fill="#b8bbbe"/><rect x="1127" y="213" width="5" height="4" fill="#9aa0a5"/><rect x="1029" y="221" width="3" height="3" fill="#8c8584"/><rect x="1068" y="215" width="5" height="3" fill="#9aa0a5"/><rect x="1214" y="207" width="3" height="3" fill="#868c91"/><rect x="1076" y="219" width="6" height="3" fill="#a9adb2"/><rect x="1074" y="218" width="3" height="3" fill="#a9adb2"/><rect x="1056" y="207" width="3" height="4" fill="#9aa0a5"/><rect x="1203" y="219" width="5" height="3" fill="#a9adb2"/><rect x="1029" y="210" width="4" height="4" fill="#8c8584"/><rect x="1104" y="197" width="4" height="4" fill="#868c91"/><rect x="1238" y="207" width="5" height="4" fill="#a9adb2"/><rect x="1005" y="199" width="6" height="3" fill="#74787a"/><rect x="1038" y="211" width="4" height="3" fill="#b8bbbe"/><rect x="1210" y="208" width="3" height="4" fill="#868c91"/><rect x="1112" y="212" width="4" height="4" fill="#a9adb2"/><rect x="970" y="196" width="6" height="4" fill="#8c8584"/><rect x="1019" y="218" width="4" height="4" fill="#a9adb2"/><rect x="1109" y="211" width="6" height="3" fill="#74787a"/><rect x="1072" y="213" width="4" height="4" fill="#b8bbbe"/><rect x="985" y="221" width="5" height="4" fill="#74787a"/><rect x="999" y="214" width="5" height="3" fill="#b8bbbe"/><rect x="1103" y="200" width="6" height="4" fill="#8c8584"/><rect x="967" y="206" width="5" height="4" fill="#a9adb2"/><rect x="1010" y="203" width="4" height="3" fill="#8c8584"/><rect x="1194" y="221" width="6" height="3" fill="#868c91"/><rect x="1076" y="201" width="3" height="3" fill="#8c8584"/><rect x="1180" y="194" width="4" height="4" fill="#b8bbbe"/><rect x="1052" y="214" width="6" height="3" fill="#b8bbbe"/><rect x="1146" y="197" width="4" height="4" fill="#74787a"/><rect x="1160" y="207" width="5" height="3" fill="#8c8584"/><rect x="1236" y="198" width="5" height="4" fill="#868c91"/><rect x="1074" y="203" width="5" height="4" fill="#a9adb2"/><rect x="976" y="206" width="4" height="3" fill="#b8bbbe"/><rect x="1234" y="198" width="4" height="4" fill="#9aa0a5"/><rect x="960" y="217" width="5" height="3" fill="#868c91"/><rect x="992" y="213" width="3" height="3" fill="#868c91"/><rect x="1231" y="200" width="3" height="4" fill="#9aa0a5"/><rect x="1113" y="215" width="5" height="4" fill="#a9adb2"/><rect x="1210" y="203" width="4" height="4" fill="#9aa0a5"/><rect x="1132" y="222" width="6" height="4" fill="#8c8584"/><rect x="1096" y="201" width="5" height="4" fill="#9aa0a5"/><rect x="1208" y="220" width="5" height="4" fill="#9aa0a5"/><rect x="1239" y="212" width="4" height="3" fill="#a9adb2"/><rect x="1014" y="204" width="3" height="4" fill="#9aa0a5"/><rect x="999" y="222" width="5" height="4" fill="#8c8584"/><rect x="1214" y="203" width="5" height="3" fill="#868c91"/><rect x="1213" y="212" width="3" height="4" fill="#868c91"/><rect x="1065" y="218" width="6" height="3" fill="#a9adb2"/><rect x="1155" y="205" width="6" height="4" fill="#b8bbbe"/><rect x="1001" y="203" width="4" height="3" fill="#9aa0a5"/><rect x="1120" y="200" width="3" height="3" fill="#8c8584"/><rect x="1015" y="199" width="4" height="3" fill="#8c8584"/><rect x="1082" y="210" width="4" height="3" fill="#74787a"/><rect x="1129" y="222" width="4" height="4" fill="#8c8584"/><rect x="1069" y="205" width="4" height="4" fill="#a9adb2"/><rect x="967" y="197" width="5" height="3" fill="#9aa0a5"/><rect x="1202" y="246" width="5" height="3" fill="#74787a"/><rect x="1292" y="263" width="5" height="4" fill="#9aa0a5"/><rect x="954" y="231" width="4" height="4" fill="#8c8584"/><rect x="1339" y="229" width="5" height="4" fill="#74787a"/><rect x="1049" y="288" width="6" height="3" fill="#8c8584"/><rect x="1243" y="298" width="5" height="4" fill="#9aa0a5"/><rect x="988" y="282" width="4" height="3" fill="#8c8584"/><rect x="1058" y="280" width="6" height="4" fill="#9aa0a5"/><rect x="1369" y="276" width="5" height="3" fill="#9aa0a5"/><rect x="1046" y="239" width="4" height="3" fill="#8c8584"/><rect x="888" y="246" width="5" height="4" fill="#9aa0a5"/><rect x="1332" y="252" width="4" height="3" fill="#9aa0a5"/><rect x="1323" y="262" width="6" height="3" fill="#a9adb2"/><rect x="1146" y="272" width="6" height="3" fill="#74787a"/><rect x="1168" y="257" width="4" height="3" fill="#b8bbbe"/><rect x="895" y="271" width="3" height="4" fill="#a9adb2"/><rect x="1295" y="250" width="3" height="4" fill="#b8bbbe"/><rect x="961" y="235" width="5" height="3" fill="#a9adb2"/><rect x="873" y="286" width="4" height="4" fill="#74787a"/><rect x="891" y="258" width="4" height="3" fill="#74787a"/><rect x="1323" y="247" width="3" height="4" fill="#a9adb2"/><rect x="879" y="290" width="4" height="3" fill="#9aa0a5"/><rect x="1007" y="238" width="4" height="4" fill="#b8bbbe"/><rect x="1437" y="283" width="6" height="4" fill="#868c91"/><rect x="941" y="272" width="3" height="4" fill="#a9adb2"/><rect x="1254" y="286" width="5" height="3" fill="#9aa0a5"/><rect x="1083" y="252" width="4" height="3" fill="#a9adb2"/><rect x="1247" y="250" width="3" height="3" fill="#9aa0a5"/><rect x="1257" y="250" width="6" height="4" fill="#b8bbbe"/><rect x="1038" y="294" width="4" height="4" fill="#74787a"/><rect x="1345" y="293" width="5" height="3" fill="#8c8584"/><rect x="904" y="280" width="5" height="3" fill="#8c8584"/><rect x="1192" y="274" width="5" height="3" fill="#8c8584"/><rect x="1357" y="297" width="5" height="4" fill="#74787a"/><rect x="1156" y="266" width="5" height="3" fill="#8c8584"/><rect x="1343" y="252" width="4" height="3" fill="#b8bbbe"/><rect x="1215" y="269" width="3" height="3" fill="#a9adb2"/><rect x="960" y="232" width="4" height="4" fill="#868c91"/><rect x="1002" y="233" width="6" height="4" fill="#74787a"/><rect x="1313" y="250" width="6" height="3" fill="#8c8584"/><rect x="1330" y="235" width="4" height="4" fill="#9aa0a5"/><rect x="995" y="246" width="5" height="4" fill="#74787a"/><rect x="1235" y="234" width="4" height="4" fill="#8c8584"/><rect x="1253" y="233" width="4" height="4" fill="#b8bbbe"/><rect x="1086" y="292" width="5" height="3" fill="#868c91"/><rect x="1110" y="285" width="6" height="3" fill="#b8bbbe"/><rect x="1244" y="272" width="4" height="3" fill="#74787a"/><rect x="918" y="243" width="4" height="3" fill="#9aa0a5"/><rect x="971" y="233" width="6" height="4" fill="#868c91"/><rect x="1263" y="255" width="3" height="4" fill="#868c91"/><rect x="1017" y="275" width="4" height="3" fill="#9aa0a5"/><rect x="1093" y="299" width="6" height="3" fill="#9aa0a5"/><rect x="1414" y="281" width="5" height="4" fill="#9aa0a5"/><rect x="1132" y="270" width="4" height="4" fill="#74787a"/><rect x="897" y="253" width="5" height="3" fill="#b8bbbe"/><rect x="1229" y="283" width="5" height="4" fill="#a9adb2"/><rect x="1142" y="267" width="4" height="4" fill="#74787a"/><rect x="1215" y="294" width="5" height="3" fill="#9aa0a5"/><rect x="928" y="259" width="6" height="3" fill="#b8bbbe"/><rect x="877" y="290" width="6" height="3" fill="#74787a"/><rect x="1020" y="250" width="4" height="4" fill="#74787a"/><rect x="1207" y="273" width="5" height="4" fill="#b8bbbe"/><rect x="1305" y="230" width="5" height="3" fill="#9aa0a5"/><rect x="1076" y="233" width="6" height="4" fill="#8c8584"/><rect x="997" y="261" width="5" height="4" fill="#b8bbbe"/><rect x="1238" y="242" width="4" height="3" fill="#8c8584"/><rect x="1299" y="263" width="3" height="4" fill="#74787a"/><rect x="1432" y="283" width="4" height="4" fill="#74787a"/><rect x="955" y="281" width="5" height="4" fill="#a9adb2"/><rect x="1014" y="257" width="3" height="3" fill="#8c8584"/><rect x="999" y="256" width="3" height="4" fill="#8c8584"/><rect x="1124" y="239" width="5" height="3" fill="#868c91"/><rect x="1050" y="264" width="3" height="3" fill="#9aa0a5"/><rect x="1024" y="283" width="4" height="4" fill="#a9adb2"/><rect x="1429" y="255" width="5" height="3" fill="#9aa0a5"/><rect x="872" y="269" width="5" height="3" fill="#868c91"/><rect x="941" y="265" width="4" height="4" fill="#74787a"/><rect x="1364" y="282" width="4" height="4" fill="#868c91"/><rect x="1188" y="278" width="4" height="4" fill="#8c8584"/><rect x="1108" y="297" width="4" height="4" fill="#9aa0a5"/><rect x="1412" y="282" width="6" height="4" fill="#8c8584"/><rect x="1289" y="245" width="5" height="4" fill="#868c91"/><rect x="1064" y="287" width="3" height="4" fill="#9aa0a5"/><rect x="922" y="230" width="5" height="3" fill="#8c8584"/><rect x="1335" y="280" width="3" height="3" fill="#74787a"/><rect x="1347" y="299" width="4" height="3" fill="#b8bbbe"/><rect x="1394" y="292" width="6" height="3" fill="#868c91"/><rect x="1296" y="292" width="5" height="3" fill="#868c91"/><rect x="1331" y="247" width="4" height="4" fill="#a9adb2"/><rect x="1356" y="296" width="5" height="3" fill="#9aa0a5"/><rect x="947" y="254" width="5" height="4" fill="#74787a"/><rect x="1117" y="242" width="6" height="4" fill="#a9adb2"/><rect x="952" y="233" width="3" height="4" fill="#868c91"/><rect x="1104" y="269" width="5" height="4" fill="#b8bbbe"/><rect x="872" y="268" width="3" height="4" fill="#74787a"/><rect x="863" y="277" width="5" height="4" fill="#868c91"/><rect x="948" y="274" width="4" height="3" fill="#a9adb2"/><rect x="1374" y="275" width="6" height="3" fill="#b8bbbe"/><rect x="1393" y="299" width="4" height="4" fill="#b8bbbe"/><rect x="992" y="248" width="4" height="4" fill="#a9adb2"/><rect x="1342" y="278" width="3" height="4" fill="#9aa0a5"/><rect x="1101" y="258" width="4" height="4" fill="#8c8584"/><rect x="1108" y="228" width="5" height="4" fill="#74787a"/><rect x="1157" y="232" width="4" height="3" fill="#9aa0a5"/><rect x="1049" y="279" width="4" height="4" fill="#a9adb2"/><rect x="1337" y="254" width="6" height="3" fill="#8c8584"/><rect x="1141" y="283" width="6" height="3" fill="#868c91"/><rect x="901" y="283" width="5" height="4" fill="#868c91"/><rect x="1184" y="271" width="5" height="4" fill="#74787a"/><rect x="1201" y="275" width="5" height="4" fill="#8c8584"/><rect x="875" y="271" width="3" height="4" fill="#9aa0a5"/><rect x="1298" y="290" width="4" height="4" fill="#8c8584"/><rect x="979" y="257" width="5" height="3" fill="#74787a"/><rect x="1354" y="257" width="5" height="4" fill="#b8bbbe"/><rect x="1251" y="251" width="5" height="3" fill="#74787a"/><rect x="1324" y="297" width="4" height="3" fill="#a9adb2"/><rect x="1070" y="255" width="4" height="4" fill="#a9adb2"/><rect x="1303" y="233" width="6" height="3" fill="#9aa0a5"/><rect x="1216" y="287" width="4" height="3" fill="#8c8584"/><rect x="946" y="246" width="5" height="4" fill="#a9adb2"/><rect x="1082" y="260" width="5" height="3" fill="#9aa0a5"/><rect x="1384" y="266" width="4" height="3" fill="#9aa0a5"/><rect x="1150" y="298" width="4" height="3" fill="#8c8584"/><rect x="1054" y="231" width="4" height="4" fill="#a9adb2"/><rect x="1057" y="228" width="6" height="3" fill="#868c91"/><rect x="1404" y="269" width="6" height="3" fill="#8c8584"/><rect x="910" y="260" width="6" height="4" fill="#8c8584"/><rect x="997" y="239" width="4" height="4" fill="#b8bbbe"/><rect x="1335" y="257" width="6" height="4" fill="#b8bbbe"/><rect x="1230" y="250" width="4" height="4" fill="#868c91"/><rect x="1128" y="233" width="5" height="4" fill="#8c8584"/><rect x="1192" y="249" width="5" height="4" fill="#74787a"/><rect x="1385" y="267" width="4" height="3" fill="#a9adb2"/><rect x="1139" y="282" width="6" height="4" fill="#b8bbbe"/><rect x="1251" y="242" width="4" height="4" fill="#b8bbbe"/><rect x="1360" y="297" width="6" height="3" fill="#b8bbbe"/><rect x="1014" y="239" width="5" height="4" fill="#a9adb2"/><rect x="1181" y="240" width="4" height="4" fill="#9aa0a5"/><rect x="903" y="291" width="4" height="3" fill="#b8bbbe"/><rect x="1024" y="285" width="4" height="4" fill="#a9adb2"/><rect x="1236" y="282" width="4" height="4" fill="#9aa0a5"/><rect x="1421" y="280" width="5" height="4" fill="#a9adb2"/><rect x="1396" y="286" width="5" height="4" fill="#9aa0a5"/><rect x="875" y="289" width="4" height="3" fill="#74787a"/><rect x="951" y="250" width="5" height="3" fill="#b8bbbe"/><rect x="1030" y="293" width="6" height="3" fill="#8c8584"/><rect x="1264" y="272" width="4" height="4" fill="#868c91"/><rect x="1223" y="265" width="6" height="4" fill="#9aa0a5"/><rect x="1338" y="262" width="3" height="3" fill="#868c91"/><rect x="1030" y="230" width="3" height="3" fill="#9aa0a5"/><rect x="1205" y="285" width="3" height="3" fill="#74787a"/><rect x="1328" y="251" width="5" height="4" fill="#b8bbbe"/><rect x="906" y="286" width="5" height="4" fill="#8c8584"/><rect x="1270" y="239" width="3" height="3" fill="#868c91"/><rect x="974" y="280" width="4" height="3" fill="#9aa0a5"/><rect x="1137" y="234" width="6" height="4" fill="#b8bbbe"/><rect x="1053" y="258" width="6" height="3" fill="#8c8584"/><rect x="1379" y="294" width="5" height="4" fill="#9aa0a5"/><rect x="1253" y="245" width="5" height="4" fill="#b8bbbe"/><rect x="880" y="246" width="4" height="4" fill="#74787a"/><rect x="868" y="295" width="6" height="4" fill="#868c91"/><rect x="909" y="253" width="3" height="3" fill="#b8bbbe"/><rect x="1283" y="280" width="6" height="4" fill="#868c91"/><rect x="1165" y="243" width="6" height="3" fill="#b8bbbe"/><rect x="888" y="242" width="5" height="4" fill="#868c91"/><rect x="1398" y="257" width="4" height="4" fill="#868c91"/><rect x="1145" y="258" width="5" height="4" fill="#9aa0a5"/><rect x="1272" y="288" width="5" height="3" fill="#8c8584"/><rect x="1211" y="254" width="5" height="4" fill="#868c91"/><rect x="1098" y="278" width="3" height="4" fill="#868c91"/><rect x="1290" y="230" width="6" height="3" fill="#9aa0a5"/><rect x="1203" y="266" width="4" height="3" fill="#b8bbbe"/><rect x="914" y="289" width="5" height="3" fill="#868c91"/><rect x="995" y="267" width="5" height="3" fill="#b8bbbe"/><rect x="1410" y="258" width="3" height="3" fill="#9aa0a5"/><rect x="950" y="258" width="4" height="3" fill="#868c91"/><rect x="1368" y="245" width="5" height="3" fill="#b8bbbe"/><rect x="962" y="286" width="3" height="4" fill="#8c8584"/><rect x="941" y="235" width="4" height="3" fill="#868c91"/><rect x="876" y="297" width="6" height="4" fill="#9aa0a5"/><rect x="1318" y="282" width="5" height="4" fill="#b8bbbe"/><rect x="1376" y="282" width="6" height="4" fill="#8c8584"/><rect x="874" y="286" width="3" height="3" fill="#868c91"/><rect x="1221" y="282" width="4" height="4" fill="#9aa0a5"/><rect x="1200" y="265" width="6" height="4" fill="#9aa0a5"/><rect x="1178" y="232" width="4" height="4" fill="#8c8584"/><rect x="1373" y="275" width="4" height="4" fill="#8c8584"/><rect x="1128" y="253" width="5" height="3" fill="#b8bbbe"/><rect x="1200" y="246" width="5" height="3" fill="#b8bbbe"/><rect x="1190" y="288" width="4" height="3" fill="#9aa0a5"/><rect x="960" y="246" width="5" height="4" fill="#74787a"/><rect x="1410" y="233" width="6" height="4" fill="#b8bbbe"/><rect x="872" y="263" width="4" height="4" fill="#9aa0a5"/><rect x="994" y="228" width="4" height="4" fill="#8c8584"/><rect x="1087" y="267" width="3" height="4" fill="#b8bbbe"/><rect x="1333" y="248" width="3" height="4" fill="#868c91"/><rect x="1217" y="238" width="4" height="4" fill="#74787a"/><rect x="1025" y="242" width="3" height="4" fill="#868c91"/><rect x="1165" y="228" width="4" height="3" fill="#a9adb2"/><rect x="1053" y="234" width="4" height="4" fill="#b8bbbe"/><rect x="900" y="232" width="5" height="4" fill="#868c91"/><rect x="959" y="261" width="3" height="3" fill="#9aa0a5"/><rect x="1238" y="268" width="3" height="3" fill="#a9adb2"/><rect x="1048" y="289" width="3" height="4" fill="#9aa0a5"/><rect x="926" y="263" width="6" height="4" fill="#74787a"/><rect x="1028" y="278" width="5" height="3" fill="#8c8584"/><rect x="909" y="251" width="4" height="3" fill="#b8bbbe"/><rect x="1153" y="257" width="5" height="4" fill="#74787a"/><rect x="1392" y="279" width="3" height="4" fill="#868c91"/><rect x="1221" y="285" width="3" height="4" fill="#74787a"/><rect x="1372" y="251" width="5" height="4" fill="#a9adb2"/><rect x="1308" y="288" width="4" height="3" fill="#a9adb2"/><rect x="989" y="257" width="5" height="3" fill="#868c91"/><rect x="1360" y="274" width="6" height="3" fill="#b8bbbe"/><rect x="1228" y="253" width="5" height="4" fill="#a9adb2"/><rect x="896" y="266" width="4" height="3" fill="#a9adb2"/><rect x="1102" y="294" width="4" height="4" fill="#b8bbbe"/><rect x="1115" y="261" width="6" height="3" fill="#868c91"/><rect x="1162" y="245" width="5" height="3" fill="#a9adb2"/><rect x="1416" y="296" width="6" height="3" fill="#a9adb2"/><rect x="1008" y="254" width="4" height="3" fill="#b8bbbe"/><rect x="1018" y="235" width="4" height="4" fill="#74787a"/><rect x="1283" y="253" width="6" height="4" fill="#b8bbbe"/><rect x="1034" y="234" width="4" height="4" fill="#8c8584"/><rect x="920" y="288" width="6" height="3" fill="#a9adb2"/><rect x="1110" y="273" width="6" height="4" fill="#8c8584"/><rect x="1040" y="242" width="4" height="4" fill="#9aa0a5"/><rect x="1289" y="260" width="3" height="3" fill="#a9adb2"/><rect x="880" y="242" width="5" height="3" fill="#9aa0a5"/><rect x="1264" y="292" width="5" height="3" fill="#8c8584"/><rect x="1019" y="271" width="3" height="4" fill="#868c91"/><rect x="1052" y="230" width="3" height="4" fill="#a9adb2"/><rect x="1096" y="233" width="4" height="4" fill="#a9adb2"/><rect x="1135" y="235" width="5" height="4" fill="#a9adb2"/><rect x="1381" y="281" width="4" height="4" fill="#8c8584"/><rect x="1394" y="271" width="5" height="4" fill="#b8bbbe"/><rect x="1071" y="251" width="4" height="4" fill="#b8bbbe"/><rect x="1258" y="260" width="5" height="3" fill="#74787a"/><rect x="1011" y="261" width="5" height="3" fill="#74787a"/><rect x="1114" y="233" width="5" height="3" fill="#b8bbbe"/><rect x="945" y="261" width="3" height="3" fill="#a9adb2"/><rect x="1234" y="233" width="5" height="4" fill="#9aa0a5"/><rect x="1075" y="268" width="5" height="4" fill="#868c91"/><rect x="1042" y="254" width="4" height="4" fill="#868c91"/><rect x="915" y="297" width="3" height="3" fill="#a9adb2"/><rect x="900" y="249" width="6" height="3" fill="#a9adb2"/><rect x="1037" y="270" width="6" height="3" fill="#868c91"/><rect x="1410" y="230" width="6" height="3" fill="#b8bbbe"/><rect x="1243" y="259" width="4" height="3" fill="#74787a"/><rect x="1370" y="239" width="5" height="3" fill="#8c8584"/><rect x="1277" y="249" width="6" height="4" fill="#b8bbbe"/><rect x="1130" y="235" width="4" height="4" fill="#868c91"/><rect x="971" y="280" width="5" height="4" fill="#868c91"/><rect x="1172" y="296" width="5" height="3" fill="#74787a"/><rect x="1124" y="249" width="6" height="3" fill="#a9adb2"/><rect x="962" y="271" width="5" height="3" fill="#b8bbbe"/><rect x="1036" y="270" width="4" height="4" fill="#a9adb2"/><rect x="1030" y="235" width="4" height="3" fill="#b8bbbe"/><rect x="1291" y="275" width="4" height="3" fill="#74787a"/><rect x="1433" y="269" width="5" height="4" fill="#b8bbbe"/><rect x="1100" y="254" width="5" height="3" fill="#8c8584"/><rect x="1065" y="252" width="4" height="3" fill="#74787a"/><rect x="895" y="299" width="4" height="4" fill="#a9adb2"/><rect x="1353" y="250" width="4" height="3" fill="#9aa0a5"/><rect x="1405" y="291" width="3" height="3" fill="#868c91"/><rect x="1317" y="242" width="4" height="3" fill="#a9adb2"/><rect x="1049" y="281" width="4" height="4" fill="#b8bbbe"/><rect x="1319" y="229" width="4" height="3" fill="#9aa0a5"/><rect x="1423" y="277" width="5" height="4" fill="#868c91"/><rect x="1036" y="230" width="4" height="3" fill="#74787a"/><rect x="1118" y="256" width="6" height="3" fill="#8c8584"/><rect x="1413" y="299" width="4" height="3" fill="#a9adb2"/><rect x="1033" y="277" width="6" height="4" fill="#b8bbbe"/><rect x="1060" y="257" width="5" height="4" fill="#8c8584"/><rect x="1082" y="282" width="3" height="3" fill="#74787a"/><rect x="898" y="271" width="6" height="4" fill="#74787a"/><rect x="1060" y="254" width="4" height="4" fill="#74787a"/><rect x="1059" y="277" width="3" height="4" fill="#74787a"/><rect x="934" y="277" width="5" height="3" fill="#868c91"/><rect x="1397" y="231" width="3" height="4" fill="#868c91"/><rect x="1336" y="279" width="4" height="4" fill="#8c8584"/><rect x="1307" y="293" width="6" height="3" fill="#a9adb2"/><rect x="1393" y="267" width="5" height="4" fill="#8c8584"/><rect x="1308" y="277" width="3" height="3" fill="#74787a"/><rect x="1437" y="292" width="5" height="4" fill="#a9adb2"/><rect x="1151" y="260" width="5" height="4" fill="#8c8584"/><rect x="1431" y="246" width="5" height="3" fill="#9aa0a5"/><rect x="983" y="238" width="4" height="3" fill="#a9adb2"/><rect x="1291" y="245" width="4" height="3" fill="#9aa0a5"/><rect x="1115" y="248" width="3" height="3" fill="#868c91"/><rect x="1156" y="295" width="5" height="4" fill="#9aa0a5"/><rect x="1089" y="275" width="3" height="3" fill="#868c91"/><rect x="1193" y="261" width="5" height="4" fill="#868c91"/><rect x="930" y="240" width="4" height="4" fill="#a9adb2"/><rect x="890" y="250" width="5" height="3" fill="#74787a"/><rect x="1238" y="291" width="6" height="3" fill="#8c8584"/><rect x="1164" y="235" width="4" height="4" fill="#8c8584"/><rect x="982" y="278" width="4" height="4" fill="#74787a"/><rect x="867" y="299" width="4" height="3" fill="#8c8584"/><rect x="926" y="285" width="3" height="3" fill="#868c91"/><rect x="864" y="278" width="6" height="4" fill="#b8bbbe"/><rect x="865" y="286" width="6" height="3" fill="#74787a"/><rect x="996" y="254" width="5" height="4" fill="#74787a"/><rect x="1350" y="232" width="6" height="3" fill="#868c91"/><rect x="1399" y="272" width="4" height="4" fill="#868c91"/><rect x="1376" y="232" width="6" height="4" fill="#b8bbbe"/><rect x="1347" y="252" width="3" height="3" fill="#868c91"/><rect x="1002" y="233" width="6" height="4" fill="#74787a"/><rect x="1339" y="281" width="5" height="3" fill="#74787a"/><rect x="1089" y="241" width="4" height="3" fill="#9aa0a5"/><rect x="1221" y="241" width="5" height="3" fill="#b8bbbe"/><rect x="1091" y="294" width="5" height="3" fill="#a9adb2"/><rect x="1436" y="254" width="4" height="4" fill="#9aa0a5"/><rect x="1061" y="253" width="5" height="4" fill="#9aa0a5"/><rect x="1100" y="289" width="4" height="4" fill="#74787a"/><rect x="1334" y="276" width="4" height="4" fill="#8c8584"/><rect x="961" y="281" width="5" height="3" fill="#a9adb2"/><rect x="1129" y="298" width="4" height="4" fill="#74787a"/><rect x="1151" y="297" width="5" height="3" fill="#9aa0a5"/><rect x="1076" y="243" width="5" height="3" fill="#8c8584"/><rect x="1390" y="241" width="4" height="3" fill="#8c8584"/><rect x="1135" y="273" width="4" height="3" fill="#9aa0a5"/><rect x="938" y="275" width="4" height="4" fill="#74787a"/><rect x="1211" y="286" width="4" height="4" fill="#8c8584"/><rect x="1177" y="252" width="4" height="4" fill="#a9adb2"/><rect x="1228" y="250" width="5" height="4" fill="#8c8584"/><rect x="1154" y="231" width="4" height="3" fill="#b8bbbe"/><rect x="985" y="275" width="6" height="3" fill="#a9adb2"/><rect x="899" y="264" width="4" height="3" fill="#868c91"/><rect x="1180" y="243" width="3" height="3" fill="#868c91"/><rect x="1323" y="259" width="6" height="3" fill="#868c91"/><rect x="1130" y="230" width="4" height="3" fill="#74787a"/><rect x="908" y="239" width="3" height="4" fill="#b8bbbe"/><rect x="1066" y="269" width="3" height="3" fill="#868c91"/><rect x="883" y="249" width="5" height="3" fill="#8c8584"/><rect x="1206" y="229" width="4" height="3" fill="#a9adb2"/><rect x="879" y="244" width="5" height="3" fill="#9aa0a5"/><rect x="1373" y="274" width="4" height="3" fill="#9aa0a5"/><rect x="1322" y="228" width="4" height="4" fill="#74787a"/><rect x="929" y="275" width="4" height="4" fill="#9aa0a5"/><rect x="1154" y="287" width="5" height="4" fill="#b8bbbe"/><rect x="1208" y="249" width="5" height="3" fill="#9aa0a5"/><rect x="1318" y="237" width="5" height="3" fill="#b8bbbe"/><rect x="924" y="258" width="3" height="4" fill="#8c8584"/><rect x="1028" y="261" width="3" height="4" fill="#8c8584"/><rect x="1286" y="261" width="4" height="3" fill="#b8bbbe"/><rect x="1043" y="257" width="5" height="4" fill="#b8bbbe"/><rect x="1070" y="285" width="4" height="4" fill="#868c91"/><rect x="1201" y="244" width="4" height="3" fill="#9aa0a5"/><rect x="1358" y="235" width="4" height="4" fill="#74787a"/><rect x="1390" y="261" width="5" height="4" fill="#a9adb2"/><rect x="1204" y="250" width="6" height="3" fill="#9aa0a5"/><rect x="1290" y="274" width="4" height="4" fill="#9aa0a5"/><rect x="931" y="257" width="4" height="4" fill="#9aa0a5"/><rect x="1392" y="241" width="4" height="3" fill="#9aa0a5"/><rect x="1286" y="240" width="6" height="3" fill="#9aa0a5"/><rect x="1185" y="232" width="4" height="3" fill="#868c91"/><rect x="1324" y="228" width="6" height="3" fill="#8c8584"/><rect x="1027" y="268" width="4" height="3" fill="#8c8584"/><rect x="1016" y="254" width="4" height="3" fill="#9aa0a5"/><rect x="1323" y="291" width="5" height="4" fill="#8c8584"/><rect x="1367" y="234" width="5" height="4" fill="#8c8584"/><rect x="1327" y="268" width="4" height="4" fill="#b8bbbe"/><rect x="943" y="235" width="5" height="3" fill="#b8bbbe"/><rect x="1146" y="261" width="4" height="4" fill="#9aa0a5"/><rect x="1227" y="284" width="6" height="4" fill="#74787a"/><rect x="1068" y="260" width="5" height="3" fill="#a9adb2"/><rect x="873" y="232" width="4" height="3" fill="#8c8584"/><rect x="1213" y="292" width="5" height="4" fill="#9aa0a5"/><rect x="898" y="241" width="3" height="4" fill="#8c8584"/><rect x="896" y="260" width="5" height="4" fill="#74787a"/><rect x="873" y="244" width="6" height="3" fill="#9aa0a5"/><rect x="1289" y="268" width="5" height="3" fill="#9aa0a5"/><rect x="1387" y="296" width="6" height="3" fill="#868c91"/><rect x="1274" y="242" width="5" height="4" fill="#868c91"/><rect x="1249" y="270" width="6" height="4" fill="#8c8584"/><rect x="878" y="257" width="5" height="3" fill="#868c91"/><rect x="1123" y="300" width="6" height="3" fill="#8c8584"/><rect x="894" y="235" width="4" height="3" fill="#8c8584"/><rect x="910" y="273" width="6" height="4" fill="#868c91"/><rect x="988" y="283" width="5" height="4" fill="#8c8584"/><rect x="1134" y="289" width="5" height="3" fill="#a9adb2"/><rect x="1010" y="267" width="6" height="3" fill="#8c8584"/><rect x="1217" y="295" width="5" height="3" fill="#a9adb2"/><rect x="1111" y="230" width="5" height="3" fill="#9aa0a5"/><rect x="862" y="282" width="5" height="3" fill="#a9adb2"/><rect x="1254" y="245" width="4" height="3" fill="#868c91"/><rect x="1331" y="239" width="5" height="4" fill="#74787a"/><rect x="1116" y="238" width="5" height="3" fill="#a9adb2"/><rect x="1423" y="281" width="4" height="3" fill="#9aa0a5"/><rect x="1191" y="296" width="6" height="4" fill="#868c91"/><rect x="990" y="298" width="5" height="4" fill="#74787a"/><rect x="970" y="260" width="3" height="3" fill="#8c8584"/><rect x="1336" y="252" width="4" height="3" fill="#9aa0a5"/><rect x="1254" y="261" width="5" height="4" fill="#b8bbbe"/><rect x="947" y="280" width="5" height="4" fill="#9aa0a5"/><rect x="1381" y="296" width="5" height="3" fill="#8c8584"/><rect x="1309" y="237" width="4" height="4" fill="#74787a"/><rect x="1163" y="292" width="5" height="4" fill="#8c8584"/><rect x="1375" y="262" width="5" height="3" fill="#a9adb2"/><rect x="1180" y="245" width="5" height="3" fill="#9aa0a5"/><rect x="991" y="255" width="3" height="4" fill="#8c8584"/><rect x="1120" y="275" width="4" height="4" fill="#b8bbbe"/><rect x="1118" y="295" width="6" height="4" fill="#b8bbbe"/><rect x="1390" y="287" width="3" height="4" fill="#a9adb2"/><rect x="945" y="249" width="5" height="4" fill="#74787a"/><rect x="1188" y="277" width="6" height="3" fill="#9aa0a5"/><rect x="1212" y="254" width="4" height="4" fill="#74787a"/><rect x="1212" y="237" width="4" height="4" fill="#9aa0a5"/><rect x="1125" y="295" width="4" height="4" fill="#74787a"/><rect x="1095" y="280" width="3" height="3" fill="#868c91"/><rect x="1340" y="294" width="4" height="3" fill="#b8bbbe"/><rect x="1006" y="264" width="4" height="4" fill="#b8bbbe"/><rect x="1007" y="284" width="5" height="3" fill="#868c91"/><rect x="1346" y="242" width="5" height="3" fill="#a9adb2"/><rect x="905" y="254" width="3" height="3" fill="#9aa0a5"/><rect x="1182" y="296" width="4" height="3" fill="#868c91"/><rect x="1152" y="286" width="4" height="4" fill="#868c91"/><rect x="1219" y="231" width="4" height="4" fill="#868c91"/><rect x="1126" y="229" width="5" height="3" fill="#8c8584"/><rect x="1172" y="234" width="3" height="3" fill="#a9adb2"/><rect x="1182" y="299" width="5" height="4" fill="#9aa0a5"/><rect x="1089" y="239" width="5" height="3" fill="#74787a"/><rect x="1333" y="273" width="6" height="4" fill="#b8bbbe"/><rect x="1366" y="274" width="5" height="4" fill="#9aa0a5"/><rect x="921" y="264" width="3" height="3" fill="#a9adb2"/><rect x="878" y="266" width="5" height="4" fill="#a9adb2"/><rect x="1170" y="283" width="5" height="4" fill="#b8bbbe"/><rect x="1147" y="299" width="5" height="3" fill="#b8bbbe"/><rect x="1388" y="265" width="4" height="3" fill="#a9adb2"/><rect x="1254" y="249" width="4" height="4" fill="#74787a"/><rect x="1381" y="231" width="6" height="4" fill="#868c91"/><rect x="1426" y="258" width="4" height="3" fill="#a9adb2"/><rect x="1344" y="276" width="6" height="3" fill="#74787a"/><rect x="949" y="247" width="4" height="4" fill="#868c91"/><rect x="1183" y="268" width="3" height="4" fill="#8c8584"/><rect x="1223" y="266" width="4" height="4" fill="#b8bbbe"/><rect x="1402" y="261" width="3" height="3" fill="#8c8584"/><rect x="1002" y="285" width="6" height="4" fill="#a9adb2"/><rect x="1152" y="236" width="5" height="3" fill="#b8bbbe"/><rect x="933" y="265" width="6" height="3" fill="#74787a"/><rect x="908" y="269" width="5" height="4" fill="#868c91"/><rect x="1002" y="258" width="4" height="4" fill="#74787a"/><rect x="1016" y="284" width="5" height="4" fill="#b8bbbe"/><rect x="995" y="273" width="3" height="4" fill="#8c8584"/><rect x="1222" y="231" width="4" height="3" fill="#b8bbbe"/><rect x="1064" y="274" width="5" height="3" fill="#a9adb2"/><rect x="1345" y="254" width="5" height="3" fill="#8c8584"/><rect x="1146" y="287" width="4" height="3" fill="#8c8584"/><rect x="1029" y="299" width="3" height="4" fill="#8c8584"/><rect x="1021" y="299" width="3" height="3" fill="#b8bbbe"/><rect x="1039" y="294" width="5" height="3" fill="#8c8584"/><rect x="880" y="299" width="5" height="3" fill="#9aa0a5"/><rect x="1052" y="266" width="3" height="4" fill="#b8bbbe"/><rect x="1152" y="286" width="6" height="3" fill="#868c91"/><rect x="892" y="231" width="3" height="4" fill="#a9adb2"/><rect x="1213" y="279" width="5" height="4" fill="#74787a"/><rect x="1406" y="255" width="6" height="3" fill="#b8bbbe"/><rect x="1076" y="274" width="3" height="3" fill="#74787a"/><rect x="1333" y="250" width="5" height="4" fill="#74787a"/><rect x="1329" y="258" width="6" height="3" fill="#9aa0a5"/><rect x="1366" y="299" width="5" height="4" fill="#b8bbbe"/><rect x="1122" y="276" width="3" height="3" fill="#868c91"/><rect x="1166" y="293" width="3" height="3" fill="#b8bbbe"/><rect x="865" y="239" width="4" height="4" fill="#868c91"/><rect x="1364" y="286" width="6" height="3" fill="#8c8584"/><rect x="953" y="241" width="4" height="4" fill="#868c91"/><rect x="902" y="264" width="6" height="4" fill="#74787a"/><rect x="1301" y="279" width="3" height="3" fill="#a9adb2"/><rect x="1164" y="290" width="5" height="4" fill="#868c91"/><rect x="887" y="232" width="6" height="3" fill="#9aa0a5"/><rect x="1096" y="259" width="5" height="4" fill="#868c91"/><rect x="1391" y="289" width="5" height="4" fill="#8c8584"/><rect x="866" y="267" width="5" height="4" fill="#8c8584"/><rect x="1341" y="256" width="3" height="4" fill="#9aa0a5"/><rect x="908" y="238" width="5" height="4" fill="#a9adb2"/><rect x="956" y="241" width="5" height="4" fill="#8c8584"/><rect x="1133" y="232" width="6" height="4" fill="#a9adb2"/><rect x="1178" y="241" width="4" height="3" fill="#b8bbbe"/><rect x="1298" y="288" width="4" height="4" fill="#9aa0a5"/><rect x="1328" y="279" width="5" height="4" fill="#b8bbbe"/><rect x="875" y="293" width="5" height="4" fill="#8c8584"/><rect x="1301" y="246" width="3" height="4" fill="#b8bbbe"/><rect x="1234" y="274" width="4" height="4" fill="#8c8584"/><rect x="1396" y="256" width="3" height="3" fill="#868c91"/><rect x="1157" y="298" width="3" height="4" fill="#b8bbbe"/><rect x="1213" y="236" width="4" height="4" fill="#74787a"/><rect x="1303" y="250" width="5" height="3" fill="#a9adb2"/><rect x="1292" y="276" width="3" height="3" fill="#a9adb2"/><rect x="1302" y="278" width="3" height="3" fill="#9aa0a5"/><rect x="1231" y="251" width="5" height="3" fill="#74787a"/><rect x="884" y="290" width="5" height="3" fill="#74787a"/><rect x="1406" y="235" width="6" height="3" fill="#a9adb2"/><rect x="1239" y="286" width="4" height="3" fill="#b8bbbe"/><rect x="1113" y="280" width="6" height="3" fill="#8c8584"/><rect x="1378" y="268" width="6" height="4" fill="#8c8584"/><rect x="932" y="295" width="3" height="4" fill="#8c8584"/><rect x="1065" y="256" width="6" height="4" fill="#8c8584"/><rect x="890" y="264" width="5" height="3" fill="#9aa0a5"/><rect x="1273" y="236" width="5" height="4" fill="#a9adb2"/><rect x="914" y="234" width="5" height="3" fill="#b8bbbe"/><rect x="1226" y="293" width="3" height="4" fill="#9aa0a5"/><rect x="1332" y="285" width="5" height="4" fill="#868c91"/><rect x="1237" y="255" width="6" height="4" fill="#74787a"/><rect x="1421" y="289" width="6" height="4" fill="#9aa0a5"/><rect x="1185" y="300" width="6" height="3" fill="#8c8584"/><rect x="1361" y="278" width="4" height="4" fill="#868c91"/><rect x="1077" y="286" width="5" height="4" fill="#b8bbbe"/><rect x="1074" y="264" width="5" height="4" fill="#9aa0a5"/><rect x="1399" y="272" width="4" height="4" fill="#b8bbbe"/><rect x="1081" y="255" width="4" height="3" fill="#a9adb2"/><rect x="1105" y="232" width="3" height="3" fill="#74787a"/><rect x="1155" y="233" width="5" height="3" fill="#9aa0a5"/><rect x="928" y="239" width="5" height="4" fill="#8c8584"/><rect x="1273" y="246" width="4" height="3" fill="#868c91"/><rect x="1133" y="296" width="6" height="3" fill="#868c91"/><rect x="1362" y="282" width="5" height="4" fill="#a9adb2"/><rect x="1161" y="230" width="6" height="4" fill="#868c91"/><rect x="1087" y="264" width="4" height="4" fill="#868c91"/><rect x="974" y="248" width="6" height="4" fill="#868c91"/><rect x="1329" y="284" width="5" height="4" fill="#a9adb2"/><rect x="1335" y="291" width="5" height="3" fill="#8c8584"/><rect x="1196" y="239" width="3" height="4" fill="#8c8584"/><rect x="1349" y="232" width="5" height="3" fill="#868c91"/><rect x="1261" y="291" width="6" height="4" fill="#74787a"/><rect x="1098" y="299" width="6" height="4" fill="#9aa0a5"/><rect x="1392" y="239" width="4" height="4" fill="#9aa0a5"/><rect x="1092" y="255" width="3" height="3" fill="#8c8584"/><rect x="944" y="263" width="3" height="4" fill="#868c91"/><rect x="1290" y="236" width="5" height="3" fill="#a9adb2"/><rect x="1121" y="273" width="4" height="4" fill="#74787a"/><rect x="1125" y="242" width="3" height="3" fill="#9aa0a5"/><rect x="1059" y="279" width="4" height="3" fill="#a9adb2"/><rect x="970" y="296" width="5" height="4" fill="#b8bbbe"/><rect x="1165" y="298" width="4" height="3" fill="#868c91"/><rect x="877" y="287" width="4" height="4" fill="#9aa0a5"/><rect x="994" y="264" width="3" height="3" fill="#9aa0a5"/><rect x="1025" y="236" width="3" height="3" fill="#74787a"/><rect x="893" y="294" width="6" height="3" fill="#8c8584"/><rect x="885" y="246" width="5" height="4" fill="#9aa0a5"/><rect x="908" y="243" width="5" height="4" fill="#a9adb2"/><rect x="1129" y="232" width="5" height="4" fill="#868c91"/><rect x="1020" y="291" width="6" height="4" fill="#a9adb2"/><rect x="1032" y="266" width="5" height="4" fill="#8c8584"/><rect x="1164" y="259" width="4" height="3" fill="#a9adb2"/><rect x="996" y="257" width="5" height="3" fill="#9aa0a5"/><rect x="1323" y="263" width="6" height="4" fill="#9aa0a5"/><rect x="930" y="297" width="4" height="4" fill="#8c8584"/><rect x="1297" y="241" width="5" height="4" fill="#9aa0a5"/><rect x="1247" y="229" width="3" height="3" fill="#74787a"/><rect x="1404" y="286" width="5" height="4" fill="#a9adb2"/><rect x="1076" y="260" width="4" height="4" fill="#9aa0a5"/><rect x="1420" y="253" width="4" height="3" fill="#9aa0a5"/><rect x="861" y="242" width="6" height="4" fill="#9aa0a5"/><rect x="1242" y="243" width="4" height="3" fill="#9aa0a5"/><rect x="1243" y="268" width="6" height="4" fill="#8c8584"/><rect x="1023" y="234" width="4" height="4" fill="#a9adb2"/><rect x="1240" y="278" width="4" height="3" fill="#868c91"/><rect x="1175" y="276" width="3" height="4" fill="#9aa0a5"/><rect x="984" y="289" width="6" height="4" fill="#b8bbbe"/><rect x="1262" y="238" width="4" height="3" fill="#b8bbbe"/><rect x="952" y="245" width="5" height="3" fill="#9aa0a5"/><rect x="1065" y="281" width="5" height="4" fill="#868c91"/><rect x="1228" y="285" width="5" height="4" fill="#8c8584"/><rect x="1298" y="230" width="6" height="4" fill="#b8bbbe"/><rect x="999" y="252" width="4" height="4" fill="#868c91"/><rect x="1169" y="237" width="3" height="4" fill="#74787a"/><rect x="990" y="254" width="5" height="3" fill="#b8bbbe"/><rect x="1135" y="297" width="4" height="3" fill="#868c91"/><rect x="1389" y="258" width="4" height="4" fill="#74787a"/><rect x="1038" y="274" width="5" height="3" fill="#74787a"/><rect x="1152" y="242" width="4" height="4" fill="#8c8584"/><rect x="1367" y="262" width="6" height="4" fill="#9aa0a5"/><rect x="1136" y="242" width="4" height="3" fill="#b8bbbe"/><rect x="1231" y="277" width="5" height="4" fill="#8c8584"/><rect x="1152" y="299" width="4" height="3" fill="#9aa0a5"/><rect x="1314" y="264" width="4" height="3" fill="#b8bbbe"/><rect x="959" y="241" width="4" height="4" fill="#a9adb2"/><rect x="1020" y="253" width="3" height="4" fill="#a9adb2"/><rect x="1429" y="287" width="6" height="4" fill="#b8bbbe"/><rect x="961" y="293" width="5" height="3" fill="#a9adb2"/><rect x="1408" y="254" width="5" height="4" fill="#8c8584"/><rect x="957" y="255" width="4" height="3" fill="#8c8584"/><rect x="944" y="295" width="5" height="3" fill="#9aa0a5"/><rect x="1167" y="262" width="5" height="3" fill="#b8bbbe"/><rect x="1166" y="247" width="3" height="4" fill="#74787a"/><rect x="1240" y="253" width="5" height="3" fill="#868c91"/><rect x="1245" y="261" width="5" height="4" fill="#8c8584"/><rect x="960" y="233" width="6" height="4" fill="#a9adb2"/><rect x="1347" y="246" width="6" height="3" fill="#8c8584"/><rect x="1067" y="262" width="4" height="4" fill="#b8bbbe"/><rect x="973" y="260" width="4" height="3" fill="#8c8584"/><rect x="1014" y="241" width="4" height="3" fill="#b8bbbe"/><rect x="867" y="250" width="5" height="4" fill="#74787a"/><rect x="1014" y="246" width="6" height="3" fill="#868c91"/><rect x="1255" y="256" width="3" height="3" fill="#9aa0a5"/><rect x="1300" y="291" width="5" height="3" fill="#74787a"/><rect x="1170" y="290" width="3" height="4" fill="#9aa0a5"/><rect x="897" y="286" width="5" height="3" fill="#868c91"/><rect x="906" y="285" width="5" height="3" fill="#74787a"/><rect x="912" y="269" width="5" height="4" fill="#b8bbbe"/><rect x="906" y="272" width="4" height="4" fill="#868c91"/><rect x="1258" y="230" width="4" height="4" fill="#b8bbbe"/><rect x="1353" y="240" width="5" height="3" fill="#b8bbbe"/><rect x="1145" y="280" width="4" height="3" fill="#b8bbbe"/><rect x="1069" y="247" width="5" height="4" fill="#9aa0a5"/><rect x="1010" y="280" width="4" height="4" fill="#74787a"/><rect x="1082" y="231" width="5" height="3" fill="#868c91"/><rect x="1080" y="270" width="4" height="4" fill="#868c91"/><rect x="1041" y="235" width="4" height="3" fill="#74787a"/><rect x="864" y="261" width="5" height="4" fill="#8c8584"/><rect x="1153" y="232" width="3" height="4" fill="#8c8584"/><rect x="1327" y="276" width="3" height="3" fill="#8c8584"/><rect x="982" y="238" width="4" height="3" fill="#b8bbbe"/><rect x="928" y="241" width="4" height="3" fill="#868c91"/><rect x="1049" y="284" width="6" height="4" fill="#868c91"/><rect x="1415" y="230" width="5" height="4" fill="#8c8584"/><rect x="927" y="300" width="3" height="4" fill="#9aa0a5"/><rect x="1145" y="297" width="6" height="3" fill="#b8bbbe"/><rect x="1243" y="288" width="5" height="3" fill="#74787a"/><rect x="868" y="233" width="4" height="3" fill="#a9adb2"/><rect x="1228" y="268" width="6" height="3" fill="#b8bbbe"/><rect x="982" y="287" width="5" height="4" fill="#a9adb2"/><rect x="1084" y="292" width="5" height="3" fill="#a9adb2"/><rect x="1372" y="232" width="4" height="4" fill="#8c8584"/><rect x="1432" y="282" width="6" height="4" fill="#868c91"/><rect x="902" y="253" width="5" height="3" fill="#9aa0a5"/><rect x="1391" y="273" width="4" height="3" fill="#b8bbbe"/><rect x="872" y="245" width="5" height="4" fill="#b8bbbe"/><rect x="1231" y="255" width="4" height="4" fill="#a9adb2"/><rect x="1318" y="297" width="3" height="3" fill="#a9adb2"/><rect x="1276" y="237" width="5" height="3" fill="#8c8584"/><rect x="1136" y="276" width="5" height="4" fill="#8c8584"/><rect x="1133" y="253" width="6" height="3" fill="#b8bbbe"/><rect x="1417" y="248" width="5" height="4" fill="#868c91"/><rect x="992" y="242" width="6" height="4" fill="#8c8584"/><rect x="1293" y="244" width="3" height="3" fill="#74787a"/><rect x="1008" y="280" width="6" height="3" fill="#868c91"/><rect x="1096" y="230" width="5" height="3" fill="#74787a"/><rect x="1028" y="281" width="5" height="3" fill="#b8bbbe"/><rect x="1278" y="293" width="4" height="4" fill="#868c91"/><rect x="864" y="272" width="5" height="3" fill="#8c8584"/><rect x="1386" y="271" width="4" height="3" fill="#8c8584"/><rect x="1424" y="232" width="4" height="3" fill="#74787a"/><rect x="898" y="291" width="6" height="4" fill="#868c91"/><rect x="1384" y="293" width="4" height="4" fill="#a9adb2"/><rect x="1256" y="246" width="4" height="4" fill="#b8bbbe"/><rect x="880" y="236" width="6" height="3" fill="#b8bbbe"/><rect x="1012" y="260" width="4" height="4" fill="#8c8584"/><rect x="1423" y="288" width="3" height="4" fill="#8c8584"/><rect x="703" y="282" width="3" height="4" fill="#a9adb2"/><rect x="649" y="261" width="4" height="4" fill="#b8bbbe"/><rect x="864" y="296" width="4" height="3" fill="#74787a"/><rect x="785" y="262" width="6" height="4" fill="#8c8584"/><rect x="638" y="298" width="5" height="3" fill="#74787a"/><rect x="631" y="280" width="5" height="3" fill="#868c91"/><rect x="811" y="287" width="6" height="3" fill="#868c91"/><rect x="874" y="288" width="3" height="3" fill="#8c8584"/><rect x="680" y="272" width="4" height="4" fill="#9aa0a5"/><rect x="649" y="290" width="5" height="4" fill="#8c8584"/><rect x="829" y="281" width="4" height="3" fill="#8c8584"/><rect x="891" y="266" width="5" height="4" fill="#b8bbbe"/><rect x="786" y="287" width="4" height="3" fill="#8c8584"/><rect x="614" y="299" width="4" height="3" fill="#74787a"/><rect x="831" y="285" width="5" height="4" fill="#8c8584"/><rect x="640" y="281" width="4" height="4" fill="#868c91"/><rect x="702" y="266" width="5" height="3" fill="#b8bbbe"/><rect x="807" y="295" width="4" height="3" fill="#b8bbbe"/><rect x="896" y="259" width="6" height="3" fill="#74787a"/><rect x="801" y="284" width="4" height="4" fill="#9aa0a5"/><rect x="719" y="273" width="5" height="4" fill="#74787a"/><rect x="775" y="267" width="5" height="3" fill="#8c8584"/><rect x="621" y="293" width="5" height="3" fill="#a9adb2"/><rect x="899" y="293" width="4" height="4" fill="#74787a"/><rect x="673" y="285" width="5" height="4" fill="#8c8584"/><rect x="754" y="279" width="3" height="4" fill="#a9adb2"/><rect x="774" y="266" width="5" height="4" fill="#74787a"/><rect x="832" y="287" width="4" height="3" fill="#b8bbbe"/><rect x="751" y="282" width="5" height="4" fill="#a9adb2"/><rect x="700" y="300" width="6" height="4" fill="#8c8584"/><rect x="732" y="293" width="3" height="3" fill="#9aa0a5"/><rect x="796" y="276" width="6" height="4" fill="#9aa0a5"/><rect x="894" y="274" width="6" height="3" fill="#74787a"/><rect x="790" y="268" width="4" height="4" fill="#868c91"/><rect x="845" y="286" width="5" height="4" fill="#9aa0a5"/><rect x="633" y="289" width="6" height="3" fill="#8c8584"/><rect x="604" y="259" width="5" height="4" fill="#868c91"/><rect x="747" y="267" width="3" height="3" fill="#868c91"/><rect x="820" y="290" width="5" height="3" fill="#868c91"/><rect x="641" y="297" width="4" height="4" fill="#9aa0a5"/><rect x="650" y="300" width="4" height="4" fill="#a9adb2"/><rect x="690" y="281" width="6" height="3" fill="#b8bbbe"/><rect x="726" y="261" width="5" height="4" fill="#8c8584"/><rect x="883" y="278" width="5" height="3" fill="#b8bbbe"/><rect x="716" y="264" width="4" height="3" fill="#8c8584"/><rect x="790" y="267" width="6" height="4" fill="#8c8584"/><rect x="870" y="264" width="3" height="4" fill="#74787a"/><rect x="754" y="292" width="5" height="3" fill="#9aa0a5"/><rect x="613" y="264" width="5" height="4" fill="#b8bbbe"/><rect x="855" y="288" width="6" height="3" fill="#868c91"/><rect x="761" y="272" width="4" height="4" fill="#8c8584"/><rect x="797" y="266" width="4" height="3" fill="#74787a"/><rect x="841" y="270" width="5" height="3" fill="#8c8584"/><rect x="874" y="289" width="3" height="4" fill="#868c91"/><rect x="780" y="280" width="4" height="4" fill="#8c8584"/><rect x="602" y="266" width="6" height="4" fill="#868c91"/><rect x="818" y="298" width="4" height="3" fill="#8c8584"/><rect x="678" y="264" width="4" height="4" fill="#868c91"/><rect x="848" y="292" width="5" height="3" fill="#9aa0a5"/><rect x="758" y="279" width="6" height="4" fill="#9aa0a5"/><rect x="703" y="287" width="4" height="4" fill="#8c8584"/><rect x="765" y="294" width="4" height="3" fill="#9aa0a5"/><rect x="788" y="275" width="5" height="3" fill="#a9adb2"/><rect x="827" y="289" width="4" height="4" fill="#8c8584"/><rect x="720" y="277" width="6" height="4" fill="#74787a"/><rect x="706" y="269" width="3" height="3" fill="#a9adb2"/><rect x="834" y="292" width="5" height="4" fill="#868c91"/><rect x="664" y="285" width="5" height="4" fill="#9aa0a5"/><rect x="854" y="270" width="4" height="3" fill="#a9adb2"/><rect x="799" y="276" width="5" height="3" fill="#74787a"/><rect x="840" y="291" width="5" height="3" fill="#a9adb2"/><rect x="824" y="278" width="4" height="4" fill="#868c91"/><rect x="729" y="273" width="3" height="3" fill="#74787a"/><rect x="796" y="291" width="5" height="4" fill="#9aa0a5"/><rect x="789" y="277" width="4" height="3" fill="#8c8584"/><rect x="676" y="275" width="4" height="3" fill="#868c91"/><rect x="615" y="268" width="3" height="3" fill="#8c8584"/><rect x="734" y="278" width="5" height="3" fill="#868c91"/><rect x="623" y="291" width="4" height="4" fill="#868c91"/><rect x="872" y="300" width="6" height="3" fill="#b8bbbe"/><rect x="659" y="267" width="3" height="4" fill="#868c91"/><rect x="829" y="273" width="3" height="4" fill="#b8bbbe"/><rect x="783" y="260" width="3" height="4" fill="#9aa0a5"/><rect x="866" y="287" width="4" height="4" fill="#b8bbbe"/><rect x="704" y="281" width="5" height="4" fill="#868c91"/><rect x="699" y="294" width="5" height="3" fill="#74787a"/><rect x="850" y="262" width="4" height="4" fill="#868c91"/><rect x="730" y="280" width="5" height="4" fill="#9aa0a5"/><rect x="601" y="272" width="5" height="4" fill="#868c91"/><rect x="604" y="287" width="5" height="3" fill="#a9adb2"/><rect x="807" y="275" width="3" height="3" fill="#b8bbbe"/><rect x="776" y="273" width="5" height="3" fill="#8c8584"/><rect x="872" y="285" width="4" height="3" fill="#9aa0a5"/><rect x="887" y="264" width="4" height="4" fill="#b8bbbe"/><rect x="770" y="289" width="6" height="4" fill="#9aa0a5"/><rect x="864" y="262" width="4" height="3" fill="#868c91"/><rect x="840" y="264" width="4" height="3" fill="#74787a"/><rect x="624" y="285" width="5" height="4" fill="#74787a"/><rect x="708" y="280" width="4" height="3" fill="#8c8584"/><rect x="676" y="294" width="4" height="4" fill="#a9adb2"/><rect x="890" y="294" width="6" height="3" fill="#a9adb2"/><rect x="807" y="292" width="3" height="4" fill="#868c91"/><rect x="856" y="273" width="6" height="4" fill="#b8bbbe"/><rect x="893" y="287" width="3" height="3" fill="#868c91"/><rect x="700" y="288" width="4" height="4" fill="#8c8584"/><rect x="617" y="286" width="4" height="4" fill="#8c8584"/><rect x="617" y="289" width="4" height="4" fill="#b8bbbe"/><rect x="851" y="272" width="5" height="3" fill="#74787a"/><rect x="766" y="265" width="3" height="4" fill="#b8bbbe"/><rect x="708" y="262" width="5" height="3" fill="#74787a"/><rect x="719" y="286" width="3" height="3" fill="#868c91"/><rect x="862" y="279" width="6" height="4" fill="#868c91"/><rect x="772" y="282" width="4" height="4" fill="#868c91"/><rect x="695" y="290" width="6" height="4" fill="#b8bbbe"/><rect x="794" y="271" width="5" height="4" fill="#8c8584"/><rect x="860" y="265" width="5" height="3" fill="#b8bbbe"/><rect x="769" y="273" width="4" height="4" fill="#8c8584"/><rect x="831" y="287" width="5" height="4" fill="#868c91"/><rect x="858" y="280" width="4" height="3" fill="#8c8584"/><rect x="768" y="279" width="4" height="4" fill="#8c8584"/><rect x="895" y="299" width="4" height="3" fill="#868c91"/><rect x="738" y="291" width="4" height="4" fill="#8c8584"/><rect x="825" y="278" width="6" height="4" fill="#9aa0a5"/><rect x="749" y="276" width="4" height="3" fill="#b8bbbe"/><rect x="627" y="293" width="4" height="3" fill="#9aa0a5"/><rect x="828" y="288" width="6" height="4" fill="#9aa0a5"/><rect x="889" y="282" width="4" height="3" fill="#a9adb2"/><rect x="735" y="270" width="4" height="4" fill="#868c91"/><rect x="734" y="268" width="5" height="3" fill="#868c91"/><rect x="655" y="290" width="3" height="3" fill="#a9adb2"/><rect x="771" y="285" width="4" height="4" fill="#74787a"/><rect x="619" y="271" width="5" height="4" fill="#9aa0a5"/><rect x="635" y="259" width="5" height="3" fill="#9aa0a5"/><rect x="683" y="283" width="3" height="4" fill="#9aa0a5"/><rect x="764" y="276" width="5" height="3" fill="#868c91"/><rect x="843" y="279" width="5" height="4" fill="#74787a"/><rect x="709" y="290" width="6" height="3" fill="#868c91"/><rect x="870" y="286" width="6" height="4" fill="#9aa0a5"/><rect x="605" y="263" width="4" height="4" fill="#8c8584"/><rect x="721" y="286" width="4" height="4" fill="#a9adb2"/><rect x="655" y="279" width="4" height="3" fill="#868c91"/><rect x="769" y="263" width="5" height="3" fill="#74787a"/><rect x="691" y="290" width="5" height="3" fill="#a9adb2"/><rect x="682" y="271" width="6" height="3" fill="#74787a"/><rect x="722" y="276" width="3" height="3" fill="#868c91"/><rect x="713" y="290" width="4" height="4" fill="#8c8584"/><rect x="774" y="259" width="4" height="3" fill="#74787a"/><rect x="603" y="264" width="3" height="3" fill="#9aa0a5"/><rect x="846" y="285" width="4" height="3" fill="#74787a"/><rect x="783" y="281" width="4" height="4" fill="#b8bbbe"/><rect x="786" y="294" width="3" height="4" fill="#9aa0a5"/><rect x="778" y="287" width="4" height="4" fill="#74787a"/><rect x="779" y="297" width="5" height="4" fill="#8c8584"/><rect x="899" y="294" width="4" height="3" fill="#9aa0a5"/><rect x="706" y="286" width="5" height="3" fill="#868c91"/><rect x="818" y="273" width="4" height="4" fill="#b8bbbe"/><rect x="634" y="290" width="3" height="4" fill="#8c8584"/><rect x="780" y="262" width="5" height="3" fill="#74787a"/><rect x="809" y="278" width="5" height="3" fill="#74787a"/><rect x="847" y="268" width="5" height="4" fill="#a9adb2"/><rect x="871" y="260" width="5" height="4" fill="#b8bbbe"/><rect x="837" y="282" width="5" height="4" fill="#b8bbbe"/><rect x="895" y="299" width="5" height="4" fill="#9aa0a5"/><rect x="742" y="296" width="5" height="3" fill="#a9adb2"/><rect x="750" y="279" width="4" height="3" fill="#74787a"/><rect x="618" y="260" width="4" height="3" fill="#a9adb2"/><rect x="810" y="268" width="5" height="4" fill="#8c8584"/><rect x="668" y="299" width="6" height="3" fill="#b8bbbe"/><rect x="658" y="273" width="4" height="3" fill="#a9adb2"/><rect x="744" y="281" width="5" height="3" fill="#8c8584"/><rect x="703" y="271" width="6" height="4" fill="#a9adb2"/><rect x="714" y="296" width="4" height="3" fill="#8c8584"/><rect x="879" y="260" width="3" height="4" fill="#8c8584"/><rect x="783" y="269" width="5" height="4" fill="#9aa0a5"/><rect x="685" y="296" width="6" height="3" fill="#9aa0a5"/><rect x="749" y="267" width="4" height="3" fill="#9aa0a5"/><rect x="689" y="259" width="5" height="4" fill="#a9adb2"/><rect x="644" y="271" width="5" height="3" fill="#a9adb2"/><rect x="640" y="299" width="5" height="4" fill="#8c8584"/><rect x="751" y="270" width="4" height="3" fill="#74787a"/><rect x="629" y="281" width="6" height="4" fill="#b8bbbe"/><rect x="848" y="266" width="5" height="4" fill="#b8bbbe"/><rect x="856" y="278" width="4" height="4" fill="#9aa0a5"/><rect x="660" y="262" width="4" height="4" fill="#74787a"/><rect x="886" y="285" width="4" height="3" fill="#74787a"/><rect x="900" y="265" width="4" height="3" fill="#8c8584"/><rect x="754" y="258" width="5" height="3" fill="#74787a"/><rect x="749" y="290" width="5" height="4" fill="#868c91"/><rect x="656" y="274" width="4" height="3" fill="#868c91"/><rect x="646" y="298" width="4" height="3" fill="#9aa0a5"/><rect x="618" y="261" width="3" height="4" fill="#a9adb2"/><rect x="794" y="269" width="5" height="3" fill="#8c8584"/><rect x="609" y="274" width="5" height="3" fill="#a9adb2"/><rect x="778" y="284" width="5" height="3" fill="#8c8584"/><rect x="765" y="272" width="5" height="4" fill="#74787a"/><rect x="855" y="281" width="5" height="4" fill="#b8bbbe"/><rect x="721" y="274" width="5" height="3" fill="#9aa0a5"/><rect x="848" y="296" width="3" height="3" fill="#868c91"/><rect x="872" y="299" width="3" height="3" fill="#b8bbbe"/><rect x="603" y="291" width="5" height="4" fill="#74787a"/><rect x="755" y="278" width="6" height="4" fill="#8c8584"/><rect x="774" y="286" width="4" height="4" fill="#b8bbbe"/><rect x="626" y="291" width="5" height="3" fill="#868c91"/><rect x="833" y="276" width="4" height="4" fill="#8c8584"/><rect x="845" y="270" width="4" height="4" fill="#8c8584"/><rect x="638" y="273" width="5" height="3" fill="#b8bbbe"/><rect x="727" y="259" width="4" height="4" fill="#868c91"/><rect x="842" y="272" width="3" height="4" fill="#a9adb2"/><rect x="758" y="294" width="4" height="3" fill="#8c8584"/><rect x="695" y="260" width="5" height="3" fill="#9aa0a5"/><rect x="744" y="283" width="4" height="4" fill="#a9adb2"/><rect x="683" y="268" width="4" height="3" fill="#9aa0a5"/><rect x="789" y="287" width="5" height="3" fill="#8c8584"/><rect x="839" y="258" width="4" height="4" fill="#a9adb2"/><rect x="736" y="294" width="4" height="4" fill="#b8bbbe"/><rect x="794" y="271" width="5" height="3" fill="#a9adb2"/><rect x="874" y="293" width="5" height="4" fill="#b8bbbe"/><rect x="626" y="280" width="4" height="3" fill="#868c91"/><rect x="635" y="267" width="3" height="3" fill="#74787a"/><rect x="625" y="272" width="6" height="3" fill="#74787a"/><rect x="736" y="276" width="4" height="4" fill="#868c91"/><rect x="793" y="283" width="6" height="3" fill="#868c91"/><rect x="869" y="276" width="3" height="3" fill="#9aa0a5"/><rect x="891" y="271" width="5" height="4" fill="#a9adb2"/><rect x="612" y="266" width="3" height="4" fill="#b8bbbe"/><rect x="693" y="292" width="6" height="4" fill="#74787a"/><rect x="707" y="276" width="4" height="4" fill="#868c91"/><rect x="794" y="261" width="5" height="3" fill="#9aa0a5"/><rect x="854" y="280" width="4" height="4" fill="#b8bbbe"/><rect x="886" y="265" width="4" height="4" fill="#9aa0a5"/><rect x="762" y="267" width="4" height="4" fill="#868c91"/><rect x="725" y="283" width="4" height="3" fill="#8c8584"/><rect x="757" y="261" width="4" height="3" fill="#868c91"/><rect x="638" y="268" width="5" height="3" fill="#9aa0a5"/><rect x="819" y="283" width="4" height="4" fill="#b8bbbe"/><rect x="612" y="280" width="4" height="4" fill="#9aa0a5"/><rect x="859" y="292" width="4" height="3" fill="#9aa0a5"/><rect x="634" y="277" width="4" height="3" fill="#9aa0a5"/><rect x="638" y="265" width="4" height="3" fill="#a9adb2"/><rect x="878" y="264" width="5" height="4" fill="#8c8584"/><rect x="740" y="259" width="6" height="3" fill="#74787a"/><rect x="620" y="295" width="3" height="3" fill="#b8bbbe"/><rect x="798" y="299" width="3" height="4" fill="#868c91"/><rect x="849" y="259" width="3" height="3" fill="#b8bbbe"/><rect x="862" y="266" width="3" height="4" fill="#9aa0a5"/><rect x="816" y="259" width="6" height="4" fill="#b8bbbe"/><rect x="660" y="286" width="5" height="4" fill="#a9adb2"/><rect x="724" y="295" width="5" height="4" fill="#74787a"/><rect x="781" y="260" width="6" height="3" fill="#74787a"/><rect x="857" y="297" width="5" height="4" fill="#a9adb2"/><rect x="768" y="264" width="6" height="4" fill="#9aa0a5"/><rect x="611" y="284" width="5" height="3" fill="#74787a"/><rect x="668" y="265" width="3" height="4" fill="#9aa0a5"/><rect x="620" y="262" width="5" height="3" fill="#9aa0a5"/><rect x="642" y="279" width="3" height="3" fill="#9aa0a5"/><rect x="844" y="272" width="5" height="3" fill="#a9adb2"/><rect x="637" y="285" width="4" height="3" fill="#9aa0a5"/><rect x="857" y="260" width="5" height="3" fill="#74787a"/><rect x="602" y="293" width="4" height="3" fill="#74787a"/><rect x="722" y="289" width="3" height="3" fill="#8c8584"/><rect x="1422" y="195" width="4" height="4" fill="#868c91"/><rect x="1217" y="188" width="6" height="3" fill="#b8bbbe"/><rect x="1424" y="193" width="4" height="4" fill="#8c8584"/><rect x="1336" y="199" width="5" height="4" fill="#9aa0a5"/><rect x="1324" y="191" width="5" height="4" fill="#9aa0a5"/><rect x="1327" y="181" width="4" height="4" fill="#8c8584"/><rect x="1251" y="184" width="4" height="4" fill="#8c8584"/><rect x="1318" y="192" width="5" height="3" fill="#a9adb2"/><rect x="1314" y="170" width="3" height="3" fill="#b8bbbe"/><rect x="1247" y="169" width="5" height="3" fill="#a9adb2"/><rect x="1264" y="179" width="5" height="4" fill="#74787a"/><rect x="1350" y="161" width="6" height="4" fill="#868c91"/><rect x="1242" y="161" width="3" height="4" fill="#9aa0a5"/><rect x="1383" y="198" width="5" height="3" fill="#868c91"/><rect x="1389" y="190" width="6" height="4" fill="#b8bbbe"/><rect x="1370" y="163" width="5" height="3" fill="#74787a"/><rect x="1252" y="176" width="5" height="4" fill="#74787a"/><rect x="1394" y="188" width="4" height="4" fill="#868c91"/><rect x="1386" y="189" width="3" height="4" fill="#a9adb2"/><rect x="1331" y="172" width="3" height="4" fill="#8c8584"/><rect x="1313" y="192" width="5" height="4" fill="#9aa0a5"/><rect x="1316" y="176" width="4" height="4" fill="#868c91"/><rect x="1290" y="185" width="5" height="4" fill="#a9adb2"/><rect x="1295" y="181" width="5" height="4" fill="#8c8584"/><rect x="1217" y="195" width="4" height="3" fill="#8c8584"/><rect x="1215" y="161" width="5" height="4" fill="#868c91"/><rect x="1409" y="170" width="5" height="4" fill="#9aa0a5"/><rect x="1383" y="181" width="5" height="4" fill="#a9adb2"/><rect x="1245" y="180" width="3" height="3" fill="#b8bbbe"/><rect x="1243" y="160" width="5" height="4" fill="#8c8584"/><rect x="1263" y="185" width="3" height="3" fill="#9aa0a5"/><rect x="1236" y="196" width="5" height="3" fill="#9aa0a5"/><rect x="1296" y="178" width="5" height="3" fill="#a9adb2"/><rect x="1289" y="170" width="4" height="4" fill="#9aa0a5"/><rect x="1203" y="175" width="3" height="3" fill="#8c8584"/><rect x="1191" y="190" width="5" height="3" fill="#b8bbbe"/><rect x="1422" y="163" width="4" height="4" fill="#9aa0a5"/><rect x="1405" y="163" width="4" height="3" fill="#a9adb2"/><rect x="1234" y="177" width="4" height="4" fill="#74787a"/><rect x="1245" y="195" width="4" height="3" fill="#868c91"/><rect x="1224" y="166" width="4" height="3" fill="#a9adb2"/><rect x="1205" y="191" width="4" height="4" fill="#8c8584"/><rect x="1341" y="179" width="5" height="3" fill="#74787a"/><rect x="1361" y="166" width="5" height="4" fill="#74787a"/><rect x="1244" y="167" width="5" height="3" fill="#b8bbbe"/><rect x="1191" y="165" width="5" height="3" fill="#a9adb2"/><rect x="1191" y="182" width="3" height="4" fill="#74787a"/><rect x="1374" y="169" width="5" height="3" fill="#b8bbbe"/><rect x="1299" y="171" width="5" height="4" fill="#8c8584"/><rect x="1271" y="166" width="6" height="3" fill="#a9adb2"/><rect x="1261" y="171" width="4" height="3" fill="#8c8584"/><rect x="1370" y="178" width="5" height="3" fill="#8c8584"/><rect x="1338" y="194" width="6" height="3" fill="#9aa0a5"/><rect x="1338" y="178" width="5" height="3" fill="#868c91"/><rect x="1204" y="193" width="5" height="3" fill="#b8bbbe"/><rect x="1222" y="167" width="3" height="4" fill="#8c8584"/><rect x="1194" y="171" width="6" height="4" fill="#9aa0a5"/><rect x="1279" y="163" width="4" height="3" fill="#8c8584"/><rect x="1350" y="186" width="3" height="4" fill="#9aa0a5"/><rect x="1288" y="191" width="6" height="3" fill="#9aa0a5"/><rect x="1406" y="197" width="5" height="3" fill="#8c8584"/><rect x="1383" y="169" width="6" height="3" fill="#74787a"/><rect x="1427" y="165" width="5" height="3" fill="#868c91"/><rect x="1220" y="198" width="6" height="4" fill="#8c8584"/><rect x="1306" y="166" width="4" height="3" fill="#868c91"/><rect x="1296" y="175" width="5" height="3" fill="#9aa0a5"/><rect x="1283" y="160" width="4" height="3" fill="#8c8584"/><rect x="1370" y="198" width="5" height="3" fill="#74787a"/><rect x="1308" y="171" width="5" height="4" fill="#a9adb2"/><rect x="1275" y="191" width="6" height="4" fill="#8c8584"/><rect x="343" y="165" width="5" height="3" fill="#868c91"/><rect x="264" y="165" width="4" height="3" fill="#8c8584"/><rect x="368" y="165" width="4" height="4" fill="#a9adb2"/><rect x="225" y="165" width="3" height="4" fill="#868c91"/><rect x="211" y="160" width="5" height="4" fill="#9aa0a5"/><rect x="279" y="161" width="5" height="3" fill="#74787a"/><rect x="218" y="160" width="4" height="4" fill="#8c8584"/><rect x="238" y="160" width="4" height="3" fill="#8c8584"/><rect x="312" y="159" width="6" height="3" fill="#8c8584"/><rect x="317" y="161" width="3" height="4" fill="#868c91"/><rect x="363" y="159" width="5" height="3" fill="#a9adb2"/><rect x="358" y="159" width="6" height="3" fill="#b8bbbe"/><rect x="238" y="166" width="4" height="3" fill="#b8bbbe"/><rect x="247" y="161" width="6" height="3" fill="#868c91"/><rect x="336" y="161" width="3" height="3" fill="#8c8584"/><rect x="207" y="161" width="6" height="4" fill="#b8bbbe"/><rect x="251" y="164" width="3" height="4" fill="#868c91"/><rect x="253" y="162" width="4" height="3" fill="#b8bbbe"/><rect x="229" y="158" width="4" height="4" fill="#b8bbbe"/><rect x="254" y="166" width="4" height="4" fill="#a9adb2"/><rect x="230" y="165" width="3" height="4" fill="#74787a"/><rect x="299" y="162" width="6" height="4" fill="#868c91"/><rect x="330" y="165" width="4" height="3" fill="#9aa0a5"/><rect x="333" y="163" width="5" height="4" fill="#9aa0a5"/><rect x="223" y="161" width="6" height="3" fill="#74787a"/><rect x="261" y="164" width="5" height="3" fill="#9aa0a5"/><rect x="219" y="166" width="4" height="4" fill="#8c8584"/><rect x="347" y="164" width="4" height="4" fill="#a9adb2"/><rect x="332" y="161" width="3" height="3" fill="#b8bbbe"/><rect x="278" y="165" width="4" height="4" fill="#868c91"/><rect x="249" y="164" width="6" height="3" fill="#8c8584"/><rect x="284" y="159" width="5" height="4" fill="#9aa0a5"/><rect x="205" y="160" width="3" height="4" fill="#74787a"/><rect x="265" y="160" width="6" height="4" fill="#b8bbbe"/><rect x="263" y="160" width="4" height="3" fill="#a9adb2"/><rect x="307" y="166" width="5" height="3" fill="#74787a"/><rect x="221" y="158" width="5" height="4" fill="#868c91"/><rect x="206" y="162" width="4" height="3" fill="#8c8584"/><rect x="218" y="162" width="3" height="4" fill="#9aa0a5"/><rect x="286" y="164" width="5" height="4" fill="#8c8584"/><rect x="203" y="164" width="5" height="4" fill="#74787a"/><rect x="244" y="166" width="5" height="3" fill="#74787a"/><rect x="326" y="163" width="4" height="3" fill="#868c91"/><rect x="287" y="163" width="5" height="3" fill="#b8bbbe"/><rect x="272" y="163" width="4" height="4" fill="#8c8584"/><rect x="322" y="163" width="3" height="3" fill="#a9adb2"/><rect x="251" y="163" width="5" height="3" fill="#9aa0a5"/><rect x="261" y="162" width="5" height="4" fill="#8c8584"/><rect x="241" y="160" width="4" height="4" fill="#b8bbbe"/><rect x="293" y="163" width="4" height="3" fill="#8c8584"/><rect x="238" y="162" width="4" height="3" fill="#a9adb2"/><rect x="210" y="161" width="5" height="3" fill="#868c91"/><rect x="272" y="161" width="5" height="4" fill="#9aa0a5"/><rect x="252" y="162" width="3" height="3" fill="#a9adb2"/><rect x="221" y="160" width="4" height="4" fill="#8c8584"/><rect x="293" y="161" width="4" height="4" fill="#74787a"/><rect x="277" y="159" width="4" height="4" fill="#b8bbbe"/><rect x="201" y="159" width="6" height="3" fill="#b8bbbe"/><rect x="274" y="160" width="5" height="3" fill="#b8bbbe"/><rect x="301" y="162" width="5" height="4" fill="#8c8584"/><rect x="764" y="151" width="3" height="3" fill="#74787a"/><rect x="700" y="152" width="6" height="4" fill="#9aa0a5"/><rect x="654" y="154" width="4" height="3" fill="#9aa0a5"/><rect x="673" y="152" width="4" height="3" fill="#868c91"/><rect x="654" y="153" width="5" height="4" fill="#a9adb2"/><rect x="683" y="151" width="4" height="4" fill="#a9adb2"/><rect x="691" y="149" width="3" height="4" fill="#8c8584"/><rect x="695" y="152" width="4" height="4" fill="#9aa0a5"/><rect x="770" y="151" width="3" height="4" fill="#8c8584"/><rect x="731" y="150" width="3" height="3" fill="#8c8584"/><rect x="685" y="154" width="4" height="4" fill="#a9adb2"/><rect x="753" y="149" width="4" height="3" fill="#9aa0a5"/><rect x="773" y="153" width="4" height="3" fill="#868c91"/><rect x="678" y="149" width="5" height="3" fill="#8c8584"/><rect x="740" y="156" width="4" height="4" fill="#9aa0a5"/><rect x="764" y="149" width="4" height="4" fill="#9aa0a5"/><rect x="714" y="149" width="5" height="4" fill="#868c91"/><rect x="775" y="152" width="4" height="4" fill="#a9adb2"/><rect x="691" y="155" width="4" height="4" fill="#a9adb2"/><rect x="667" y="153" width="4" height="3" fill="#a9adb2"/><rect x="714" y="152" width="6" height="4" fill="#a9adb2"/><rect x="697" y="152" width="3" height="3" fill="#74787a"/><rect x="790" y="155" width="6" height="4" fill="#a9adb2"/><rect x="679" y="154" width="4" height="3" fill="#a9adb2"/><rect x="740" y="149" width="3" height="3" fill="#a9adb2"/><rect x="736" y="148" width="4" height="4" fill="#b8bbbe"/><rect x="631" y="148" width="4" height="4" fill="#74787a"/><rect x="695" y="152" width="3" height="4" fill="#74787a"/><rect x="753" y="153" width="4" height="3" fill="#74787a"/><rect x="756" y="151" width="5" height="4" fill="#b8bbbe"/><rect x="757" y="150" width="3" height="3" fill="#74787a"/><rect x="736" y="154" width="3" height="4" fill="#b8bbbe"/><rect x="716" y="153" width="4" height="4" fill="#b8bbbe"/><rect x="652" y="153" width="4" height="4" fill="#9aa0a5"/><rect x="689" y="149" width="3" height="4" fill="#74787a"/><rect x="699" y="151" width="4" height="4" fill="#74787a"/><rect x="761" y="150" width="3" height="4" fill="#8c8584"/><rect x="687" y="150" width="4" height="3" fill="#a9adb2"/><rect x="632" y="152" width="5" height="4" fill="#b8bbbe"/><rect x="776" y="155" width="6" height="4" fill="#74787a"/></g>
<g opacity=".2" filter="url(#b1)"><rect x="90" y="138" width="25" height="8" fill="#9b7c6c"/><rect x="400" y="145" width="50" height="10" fill="#9b7c6c"/><rect x="700" y="140" width="60" height="14" fill="#9b7c6c"/><rect x="760" y="134" width="8" height="16" fill="#9b7c6c"/><rect x="985" y="130" width="12" height="12" fill="#9b7c6c"/><rect x="1050" y="120" width="14" height="12" fill="#9b7c6c"/><rect x="1130" y="136" width="10" height="22" fill="#9b7c6c"/><rect x="1185" y="112" width="12" height="10" fill="#9b7c6c"/><rect x="1175" y="160" width="26" height="16" fill="#9b7c6c"/><rect x="1080" y="162" width="22" height="10" fill="#9b7c6c"/><rect x="1300" y="125" width="30" height="8" fill="#9b7c6c"/><rect x="560" y="140" width="20" height="8" fill="#9b7c6c"/><rect x="945" y="140" width="10" height="12" fill="#9b7c6c"/><rect x="1270" y="140" width="25" height="10" fill="#9b7c6c"/><rect x="1000" y="160" width="12" height="10" fill="#9b7c6c"/><rect x="1030" y="170" width="20" height="10" fill="#9b7c6c"/></g>
<rect y="297" width="1440" height="3" fill="#2d3d31" opacity=".45"/></svg></div>
<div id="pagebg" class="abs"></div>
<div id="footer" class="abs"></div>
<div id="bottombar" class="abs"></div>
<div id="shadowbox" class="abs"></div>
<div id="sidebar" class="abs"><ul>
<li style="top:-1.5px">Budget</li>
<li>Contact The Township of West<br>Orange</li>
<li>Report An Issue With Signage</li>
<li>Residential Refuse &amp; Bulk<br>Collection</li>
<li>Recycling - Curbside &amp;<br>Environmental Center</li>
<li>PERMIT Information</li>
<li>Senior Citizen Transportation<br>Guide (PDF)</li>
<li>Senior Citizen Resources</li>
<li>Seniors Blue Book Resourse<br>Guide (PDF)</li>
<li>Homebound Evacuation / NJ<br>Register Ready</li>
<li>Administration Portal<span class="plus">+</span></li>
</ul></div>
<div id="content" class="abs"></div>
<div class="abs crumb"><a>Home</a> &#8250; Bid Postings</div>
<div id="signup" class="abs"><span><a>Sign up</a> to receive a text message or email when new bids are added!</span></div>
<div class="abs learn">Learn about current bid and contract opportunities available to consultants, service providers, contractors, vendors, or suppliers.</div>
<div class="abs lbl" style="left:377px;top:521px">Show Me</div>
<div class="abs sel" style="left:450px;top:519px;width:170px;height:21px">Open Bids<svg width="10" height="8" viewBox="0 0 10 8"><path d="M1 1.5l4 4 4-4" fill="none" stroke="#111" stroke-width="2"/></svg></div>
<div class="abs lbl" style="left:377px;top:544px">Sorted By</div>
<div class="abs sel" style="left:453px;top:542px;width:197px;height:21px">Category<svg width="10" height="8" viewBox="0 0 10 8"><path d="M1 1.5l4 4 4-4" fill="none" stroke="#111" stroke-width="2"/></svg></div>
<div id="closed" class="abs"><span>Show Closed/Awarded/Cancelled Bids:</span><div class="cb"></div></div>
<div class="abs para">The following is a listing of various bid postings. Click on any of the titles for the details on that particular bid.</div>
<div id="cathead" class="abs"><span style="left:6px">Construction Services</span><span style="right:6px">1 Bid</span></div>
<div class="abs bid" style="left:397px;top:732px"><a>DEGNAN PARK COMMUNITY GARDEN AND OUTDOOR FITNESS AREA IMPROVEMENTS PROJECT</a></div>
<div class="abs bid" style="left:397px;top:755px">NOTICE TO BIDDERS TOWNSHIP OF WEST ORANGE ESSEX COUNTY, NEW JERSEY DEGNAN PARK</div>
<div class="abs bid" style="left:397px;top:778px">COMMUNITY GARDEN AND OUTDOOR FITNESS AREA IMPROVEMENTS PROJECT NOTICE is...</div>
<div class="abs bid" style="left:397px;top:800px;font-family:'Liberation Serif',serif;font-size:16.2px">[<a>Read on</a>]</div>
<div class="abs bid" style="left:1130px;top:732px">Status:</div>
<div class="abs bid" style="left:1201px;top:732px">Open</div>
<div class="abs bid" style="left:1130px;top:755px">Closes:</div>
<div class="abs bid" style="left:1201px;top:755px">3/17/2026 10:00 AM</div>

<div id="logo" class="abs"><svg width="180" height="173" viewBox="0 0 180 173">
<defs><path id="arc" d="M78 76 A 42 49 0 1 1 170 66"/></defs>
<path d="M124 28 C 146 28, 159 46, 159 60 C 159 74, 152 82, 147 86 C 142 92, 139 100, 138 110 C 137 118, 137 124, 138 128 L 111 128 C 112 120, 113 108, 113 101 C 108 94, 96 84, 92 76 C 89 70, 88 64, 88 58 C 88 42, 104 28, 124 28 Z" fill="#a3cc6c"/>
<path d="M108 129 C 122 126, 138 126, 146 130 C 149 133, 147 136, 144 136 C 130 134, 118 134, 109 135 Z" fill="#a3cc6c"/>
<path d="M111 138 C 122 136, 132 136, 138 139 C 138 142, 136 143, 133 143 C 126 142, 118 142, 112 143 Z" fill="#a3cc6c"/>
<path d="M116 145 C 124 144, 131 144, 134 146 C 132 150, 120 150, 116 145 Z" fill="#a3cc6c"/>
<g fill="#fff"><path d="M105.0 39.0 L116.0 44.0 L127.0 33.0 L125.0 45.0 L141.0 47.0 L125.0 52.0 L116.0 61.0 L113.0 51.0 Z" stroke="#fff" stroke-width="1.2" stroke-linejoin="round"/><ellipse cx="104.0" cy="58.0" rx="3.8" ry="3.4"/><path d="M152.7 57.5 L142.8 64.5 L146.9 79.5 L137.5 71.8 L127.7 84.7 L131.4 68.3 L128.1 56.0 L138.3 58.4 Z" stroke="#fff" stroke-width="1.2" stroke-linejoin="round"/><ellipse cx="136.7" cy="47.1" rx="3.8" ry="3.4"/><path d="M112.8 89.5 L111.7 77.5 L96.6 73.5 L108.0 69.2 L101.8 54.3 L114.1 65.7 L126.4 69.0 L119.2 76.6 Z" stroke="#fff" stroke-width="1.2" stroke-linejoin="round"/><ellipse cx="129.8" cy="80.9" rx="3.8" ry="3.4"/></g>
<text font-family="Liberation Sans" font-size="15" fill="#a58d66" letter-spacing="-.2"><textPath href="#arc">where invention lives</textPath></text>
<text x="26" y="100" font-family="Liberation Sans" font-weight="bold" font-size="31" fill="#0d6a36" transform="translate(26,0) scale(0.62,1) translate(-26,0)" textLength="87" lengthAdjust="spacingAndGlyphs">WEST</text>
<text x="25" y="129" font-family="Liberation Sans" font-weight="bold" font-size="31" fill="#0d6a36" transform="translate(25,0) scale(0.62,1) translate(-25,0)" textLength="127" lengthAdjust="spacingAndGlyphs">ORANGE</text>
<text x="12" y="152" font-family="Liberation Serif" font-style="italic" font-size="22" fill="#dccdb8" transform="rotate(-8 12 152)" textLength="92" lengthAdjust="spacingAndGlyphs">New Jersey</text>
</svg></div>
<div id="social" class="abs"></div>

<svg class="abs" style="left:1169px;top:141px" width="28" height="28" viewBox="0 0 28 28"><circle cx="14" cy="14" r="13" fill="#fff"/><path d="M15.6 27V17.6h3.2l.5-3.7h-3.7v-2.4c0-1.1.3-1.8 1.8-1.8h2V6.4c-.3 0-1.5-.2-2.9-.2-2.9 0-4.8 1.8-4.8 5v2.7H8.5v3.7h3.2V27z" fill="#10703a"/></svg>
<svg class="abs" style="left:1236px;top:142px" width="26" height="26" viewBox="0 0 26 26"><path d="M2 2h7l15 22h-7z" fill="none" stroke="#fff" stroke-width="1.6"/><path d="M3 24L11.5 14M14.5 11L23 2" stroke="#fff" stroke-width="1.8"/></svg>
<svg class="abs" style="left:1301px;top:144px" width="28" height="20" viewBox="0 0 28 20"><rect x="0" y="0" width="28" height="20" rx="5" fill="#fff"/><path d="M11 5.5v9l7.5-4.5z" fill="#10703a"/></svg>
<svg class="abs" style="left:1368px;top:141px" width="28" height="28" viewBox="0 0 28 28"><rect x="2" y="2" width="24" height="24" rx="7" fill="none" stroke="#fff" stroke-width="2.8"/><circle cx="14" cy="14" r="5.6" fill="none" stroke="#fff" stroke-width="2.8"/><circle cx="20.8" cy="7.2" r="1.5" fill="#fff"/></svg>
<div class="abs tb-text"><b>Create a Website Account</b> - Manage notification subscriptions, save form progress and more.</div>
<div id="signin" class="abs">Website Sign In</div>
<div class="abs nav" style="left:250px">DIRECTORY</div>
<div class="abs nav" style="left:452px">GOVERNMENT</div><div class="abs navar" style="left:575px"></div>
<div class="abs nav" style="left:694px">AROUND TOWN</div><div class="abs navar" style="left:825.5px"></div>
<div class="abs nav" style="left:943px">DEPARTMENTS</div><div class="abs navar" style="left:1073px"></div>
<div id="search" class="abs"><span>Search...</span><div id="sbtn"><svg width="50" height="50" viewBox="0 0 50 50"><circle cx="24" cy="23" r="10.5" fill="none" stroke="#0d6a33" stroke-width="3.6"/><line x1="31.5" y1="30.5" x2="37" y2="36" stroke="#0d6a33" stroke-width="3.8" stroke-linecap="round"/></svg></div></div>

<div class="ic" style="left:73px;top:1129px"><svg width="102" height="102" viewBox="0 0 102 102"><circle cx="51" cy="51" r="51" fill="#fdfdff"/><circle cx="51" cy="51" r="50" fill="#0c2159"/><g transform="translate(1,1)" fill="none" stroke="#fff" stroke-width="2" stroke-linecap="round" stroke-linejoin="round"><path d="M29.5 47 V33.5 a3.5 3.5 0 0 1 3.5 -3.5 h41.5 a3.5 3.5 0 0 1 3.5 3.5 v33.5 a3.5 3.5 0 0 1 -3.5 3.5 h-21.5"/><path d="M29.5 39.3 h48.5"/><path d="M37.9 26.5 v7 M45.7 26.5 v7 M53.4 26.5 v7 M61.2 26.5 v7 M69 26.5 v7"/><path d="M43.4 46.2 h4.5 M54 46.2 h4.4 M64 46.2 h5 M54 52.6 h4.4 M64 52.6 h5 M54 59 h4.4" stroke-width="2.4"/><circle cx="36.8" cy="63.8" r="14"/><path d="M37.3 55.4 v8.9 h7.2"/></g></svg></div>
<div class="iclbl" style="left:16px">Current Legal Notices</div>
<div class="ic" style="left:306px;top:1129px"><svg width="102" height="102" viewBox="0 0 102 102"><circle cx="51" cy="51" r="51" fill="#fdfdff"/><circle cx="51" cy="51" r="50" fill="#0c2159"/><g transform="translate(1,1)" fill="none" stroke="#fff" stroke-width="2" stroke-linecap="round" stroke-linejoin="round"><path d="M27 43 h16.75 v13.7 h-16.75 a2 2 0 0 1 -2 -2 v-9.7 a2 2 0 0 1 2 -2 z"/><path d="M43.75 43 C52 43 60 36 68 29 Q72.5 26 72.5 31 V71 Q72.5 76 68 73 C59 66 52 56.7 43.75 56.7"/><path d="M73.3 45 a5 5.8 0 0 1 0 11.5"/><path d="M31 56.7 l3.5 17.5 a3 3 0 0 0 3 2.5 h3.5 a2 2 0 0 0 2 -2.5 l-3 -11.5 v-6"/></g></svg></div>
<div class="iclbl" style="left:249px">Report a Concern</div>
<div class="ic" style="left:540px;top:1129px"><svg width="102" height="102" viewBox="0 0 102 102"><circle cx="51" cy="51" r="51" fill="#fdfdff"/><circle cx="51" cy="51" r="50" fill="#0c2159"/><g transform="translate(1,1)" fill="none" stroke="#fff" stroke-width="2" stroke-linecap="round" stroke-linejoin="round"><path d="M34.5 62 l-1.3 0.3 a1.5 1.5 0 0 1 -1.8 -1 l-8 -20 a1.5 1.5 0 0 1 1 -2 l34 -12.5 a1.5 1.5 0 0 1 1.9 1 l6.2 17.5"/><path d="M25 44.5 l35.5 -12.8 M26.8 49.2 l35.5 -12.8" stroke-width="2.4"/><rect x="37.5" y="50" width="40" height="25.8" rx="1.5"/><circle cx="67.9" cy="59.8" r="4.2"/><path d="M43.3 69.6 h5 M51.25 69.6 h4.5 M59.2 69.6 h4.5 M67.5 69.6 h4.2" stroke-width="2.6"/></g></svg></div>
<div class="iclbl" style="left:483px">Online Payment</div>
<div class="ic" style="left:774px;top:1129px"><svg width="102" height="102" viewBox="0 0 102 102"><circle cx="51" cy="51" r="51" fill="#fdfdff"/><circle cx="51" cy="51" r="50" fill="#0c2159"/><g transform="translate(1,1)" fill="none" stroke="#fff" stroke-width="2" stroke-linecap="round" stroke-linejoin="round"><path d="M29.5 47 V33.5 a3.5 3.5 0 0 1 3.5 -3.5 h41.5 a3.5 3.5 0 0 1 3.5 3.5 v33.5 a3.5 3.5 0 0 1 -3.5 3.5 h-21.5"/><path d="M29.5 39.3 h48.5"/><path d="M37.9 26.5 v7 M45.7 26.5 v7 M53.4 26.5 v7 M61.2 26.5 v7 M69 26.5 v7"/><path d="M43.4 46.2 h4.5 M54 46.2 h4.4 M64 46.2 h5 M54 52.6 h4.4 M64 52.6 h5 M54 59 h4.4" stroke-width="2.4"/><circle cx="36.8" cy="63.8" r="14"/><path d="M37.3 55.4 v8.9 h7.2"/></g></svg></div>
<div class="iclbl" style="left:717px">Agendas &amp; Minutes</div>
<div class="ic" style="left:1007px;top:1129px"><svg width="102" height="102" viewBox="0 0 102 102"><circle cx="51" cy="51" r="51" fill="#fdfdff"/><circle cx="51" cy="51" r="50" fill="#0c2159"/><g transform="translate(1,1)" fill="none" stroke="#fff" stroke-width="2" stroke-linecap="round" stroke-linejoin="round"><path d="M25 33.5 c-2 0 -2 -6 0 -6 h33.5 a3 3 0 0 1 3 3 v5"/><path d="M25 27.5 h5 a2.5 2.5 0 0 1 2.5 2.5 v33 a2.5 2.5 0 0 0 2.5 2.5 h9.5"/><path d="M36.5 36.5 v27 a2 2 0 0 0 2 2"/><path d="M44.6 35.4 h28.2 a2.5 2.5 0 0 1 2.5 2.5 v33.8 a2.5 2.5 0 0 1 -2.5 2.5 h-3.5 M58.3 74.2 h-13.7 V35.4"/><path d="M51.7 45 h17 M51.7 49.2 h17 M51.7 54.2 h10" stroke-width="2.4"/><circle cx="63.75" cy="65.4" r="5.6"/><path d="M60 70.5 v11.5 l3.75 -3 l3.75 3 v-11.5"/></g></svg></div>
<div class="iclbl" style="left:950px">Permits &amp; Licenses</div>
<div class="ic" style="left:1241px;top:1129px"><svg width="102" height="102" viewBox="0 0 102 102"><circle cx="51" cy="51" r="51" fill="#fdfdff"/><circle cx="51" cy="51" r="50" fill="#0c2159"/><g transform="translate(1,1)" fill="none" stroke="#fff" stroke-width="2" stroke-linecap="round" stroke-linejoin="round"><path d="M34.2 25.8 h31.6 l7.9 11.7 h-47.4 z"/><path d="M25.8 37.5 l6.3 42.5 h35.8 l5.8 -42.5"/><g><path d="M41 59 L47.5 48 Q49.5 45 51.5 48 L53.5 51.5 M58.5 56.5 L62.5 63.5 Q64 67 60 67 L54 67 M46 67 L39 67 Q35 67 37 63.5 L39.5 59" stroke="#fff" stroke-width="4.6" stroke-linecap="butt" stroke-linejoin="round"/><path d="M41 59 L47.5 48 Q49.5 45 51.5 48 L53.5 51.5 M58.5 56.5 L62.5 63.5 Q64 67 60 67 L54 67 M46 67 L39 67 Q35 67 37 63.5 L39.5 59" stroke="#0c2159" stroke-width="1.6" stroke-linecap="butt" stroke-linejoin="round"/><path d="M51 52 L57.5 50 L56 57 Z M55 62.5 L50 67 L55 71.5 Z M36.5 58.5 L42.5 56 L43.5 62 Z" fill="#fff" stroke="none"/></g></g></svg></div>
<div class="iclbl" style="left:1184px">Garbage &amp; Recycling</div>
<div id="gt" class="abs"><svg style="position:absolute;left:5px;top:6px" width="19" height="19" viewBox="0 0 48 48"><path fill="#EA4335" d="M24 9.5c3.5 0 6.6 1.2 9.1 3.6l6.8-6.8C35.8 2.4 30.3 0 24 0 14.6 0 6.6 5.4 2.6 13.2l7.9 6.2C12.4 13.7 17.7 9.5 24 9.5z"/><path fill="#4285F4" d="M46.1 24.5c0-1.6-.1-3.1-.4-4.5H24v9h12.4c-.5 2.9-2.2 5.3-4.6 6.9l7.7 6c4.5-4.2 7.1-10.3 7.1-17.4z"/><path fill="#FBBC05" d="M10.5 28.6c-.5-1.4-.8-3-.8-4.6s.3-3.2.8-4.6l-7.9-6.2C.9 16.5 0 20.1 0 24s.9 7.5 2.6 10.8l7.9-6.2z"/><path fill="#34A853" d="M24 48c6.5 0 11.9-2.1 15.9-5.8l-7.7-6c-2.2 1.5-5 2.3-8.2 2.3-6.3 0-11.6-4.2-13.5-10l-7.9 6.2C6.6 42.6 14.6 48 24 48z"/></svg><span>Select Language</span><svg style="position:absolute;right:5px;top:12px" width="10" height="8" viewBox="0 0 10 8"><path d="M1 1.5l4 4 4-4" fill="none" stroke="#111" stroke-width="2.2"/></svg></div>
<div class="abs gtl"><span style="color:#4285F4">G</span><span style="color:#EA4335">o</span><span style="color:#FBBC05">o</span><span style="color:#4285F4">g</span><span style="color:#34A853">l</span><span style="color:#EA4335">e</span> <b style="color:#555">Translate</b></div>

<svg class="abs" style="left:1105px;top:1354px" width="322" height="322" viewBox="0 0 322 322"><path d="M180 0 C 212 0, 238 10, 256 24 L 240 36 C 290 60, 318 100, 318 156 C 318 212, 270 262, 226 322 L 77 322 C 40 262, 2 212, 2 156 C 2 62, 80 2, 180 0 Z" fill="#f1f3e3"/>
<g fill="#fcfcf8" opacity=".85">
<circle cx="158.5" cy="76" r="21"/><circle cx="218" cy="97" r="23"/>
<path d="M76 101 h17 a4 4 0 0 1 4 4 v27 a4 4 0 0 1 -4 4 h-17 a5 17.5 0 0 1 0 -35 z"/>
<path d="M97 106 L144 116 V134 L97 132 Z"/>
<path d="M144 103 L200 114 L213 130 V172 L144 170 Z"/>
<path d="M150 170 H208 V196 H150 Z"/>
<path d="M75 192 L228 199 L235 216 L66 214 Z"/>
</g>
<g fill="#eef0dc"><ellipse cx="151" cy="64" rx="3" ry="4.5"/><ellipse cx="167" cy="68" rx="3" ry="4.5"/><ellipse cx="152" cy="88" rx="3" ry="4.5"/><ellipse cx="169" cy="86" rx="3" ry="4.5"/><ellipse cx="214" cy="84" rx="3" ry="4.5"/><ellipse cx="230" cy="90" rx="3" ry="4.5"/><ellipse cx="207" cy="104" rx="3" ry="4.5"/><ellipse cx="226" cy="110" rx="3" ry="4.5"/></g>
<path d="M144 103 V196" stroke="#f1f3e3" stroke-width="1.5" opacity=".6"/>
</svg>
<div class="fh" style="left:19px">Contact Us</div><div class="fbar" style="left:19px"></div>
<div class="ft" style="left:19px;top:1438.5px"><b>West Orange Town Hall</b><br>66 Main Street<br>West Orange, NJ 07052<br>Phone: 973-325-4100<br>Contact Us</div>
<div class="ft" style="left:231px;top:1438.5px"><b>Town Hall Hours</b><br>Monday - Friday<br>8:30am - 4:30pm<br>Closed On Federal Holidays</div>
<div class="fh" style="left:487px">Connect With Us</div><div class="fbar" style="left:487px"></div>
<svg class="abs" style="left:486px;top:1436px" width="20" height="20" viewBox="0 0 20 20"><circle cx="10" cy="10" r="10" fill="#1877F2"/><path d="M11.2 20v-7h2.3l.4-2.7h-2.7V8.6c0-.8.2-1.3 1.3-1.3h1.5V4.9c-.3 0-1.1-.1-2.1-.1-2.1 0-3.5 1.3-3.5 3.6v2H6.1V13h2.3v7z" fill="#fff"/></svg>
<svg class="abs" style="left:487px;top:1468px" width="18" height="18" viewBox="0 0 18 18"><path d="M1 1h5l11 16h-5z" fill="none" stroke="#111" stroke-width="1.3"/><path d="M1.5 17L7.6 10M10.4 8L16.5 1" stroke="#111" stroke-width="1.4"/></svg>
<svg class="abs" style="left:486px;top:1501px" width="20" height="14" viewBox="0 0 20 14"><rect width="20" height="14" rx="3.5" fill="#FF0000"/><path d="M8 4v6l5-3z" fill="#fff"/></svg>
<svg class="abs" style="left:486px;top:1529px" width="20" height="20" viewBox="0 0 20 20"><defs><linearGradient id="ig" x1="0" y1="1" x2="1" y2="0"><stop offset="0" stop-color="#FFD600"/><stop offset=".5" stop-color="#FF0169"/><stop offset="1" stop-color="#7638FA"/></linearGradient></defs><rect x="1.2" y="1.2" width="17.6" height="17.6" rx="5" fill="none" stroke="url(#ig)" stroke-width="2"/><circle cx="10" cy="10" r="4" fill="none" stroke="url(#ig)" stroke-width="2"/><circle cx="14.8" cy="5.2" r="1.1" fill="#c13584"/></svg>
<div class="soc" style="top:1437px">Facebook</div>
<div class="soc" style="top:1468px">X</div>
<div class="soc" style="top:1499px">YouTube</div>
<div class="soc" style="top:1530px">Instagram</div>
<div class="fh" style="left:779px">Quick Links</div><div class="fbar" style="left:779px"></div>
<div class="fl" style="left:779px;top:1439px">Job Opportunities &amp; Human Resources</div>
<div class="fl" style="left:779px;top:1469px">State of NJ- Civil Service Commission</div>
<div class="fl" style="left:779px;top:1500px">Township of West Orange Employment Application</div>
<div class="fl" style="left:779px;top:1530px">NJ Division of Pensions and Benefits</div>
<div class="fl" style="left:779px;top:1560px">New Jersey Department of Employment</div>
<div class="fl" style="left:779px;top:1591px">New Jersey Employee Advisory Service</div>
<div class="fh" style="left:1187px">Site Links</div><div class="fbar" style="left:1187px"></div>
<div class="fl" style="left:1187px;top:1439px">Home</div>
<div class="fl" style="left:1187px;top:1469px">FAQs</div>
<div class="fl" style="left:1187px;top:1500px">Contact Us</div>
<div class="fl" style="left:1187px;top:1530px">Accessibility</div>
<div class="fl" style="left:1187px;top:1561px">Site Map</div>
<div class="fl" style="left:1187px;top:1591px">Copyright Notices</div>
<div class="fl" style="left:1187px;top:1622px">Privacy Policy</div>
<div id="cp" class="abs"><svg style="position:absolute;left:581px;top:16px" width="25" height="17" viewBox="0 0 25 17"><path d="M8.5 1 h-2 a6.5 6.5 0 0 0 0 13 h4 v-4 h-4 a2.5 2.5 0 0 1 0 -5 h4 v-4 z" fill="#fff"/><path d="M13 1 h5 a5.5 5.5 0 0 1 0 11 h-1 v4.5 l-4 -2 v-6.5 h5 a1.5 1.5 0 0 0 0 -3 h-5 z" fill="#fff"/><rect x="8" y="6" width="6" height="3" fill="#fff"/></svg><span>Government Websites by <a>CivicPlus®</a></span></div>
</body></html>
